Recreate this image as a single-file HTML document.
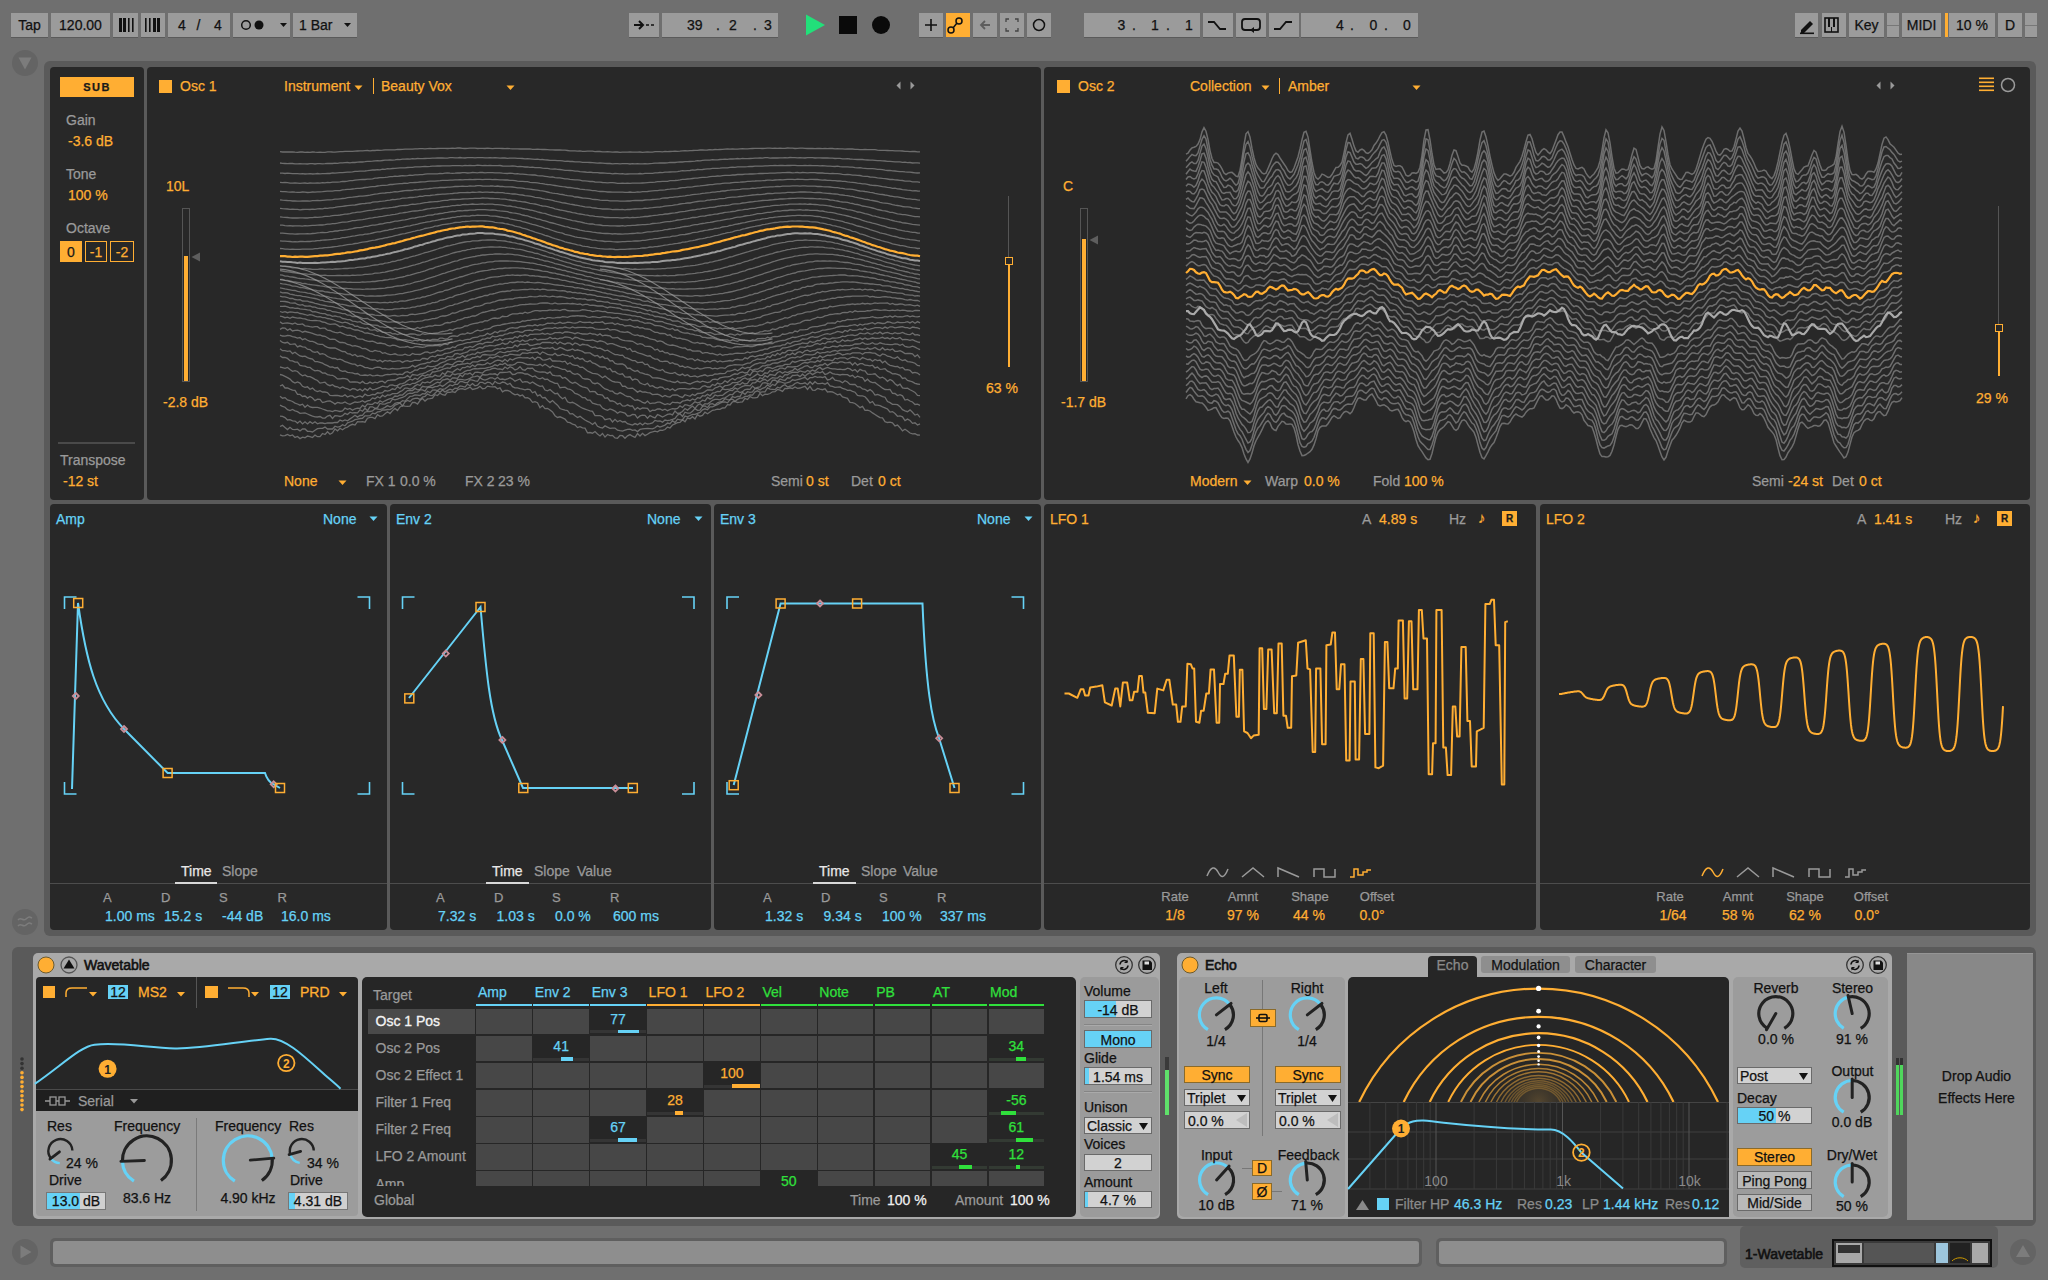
<!DOCTYPE html><html><head><meta charset="utf-8"><style>
html,body{margin:0;padding:0;}
body{width:2048px;height:1280px;position:relative;overflow:hidden;background:#6f6f6f;font-family:"Liberation Sans",sans-serif;}
body>div,body>svg{position:absolute;}
.t{position:absolute;white-space:nowrap;-webkit-text-stroke:0.25px currentColor;}
svg{position:absolute;overflow:visible;}
</style></head><body>
<div style="left:11px;top:13px;width:37px;height:24px;background:#9b9b9b;box-shadow:0 1px 0 #5a5a5a;"></div>
<div class="t" style="left:-270.5px;width:600px;text-align:center;top:16.0px;font-size:14px;line-height:18px;color:#111;font-weight:400;">Tap</div>
<div style="left:51px;top:13px;width:59px;height:24px;background:#9b9b9b;box-shadow:0 1px 0 #5a5a5a;"></div>
<div class="t" style="left:-219.5px;width:600px;text-align:center;top:16.0px;font-size:14px;line-height:18px;color:#111;font-weight:400;">120.00</div>
<div style="left:113px;top:13px;width:25px;height:24px;background:#9b9b9b;box-shadow:0 1px 0 #5a5a5a;"></div>
<div style="left:141px;top:13px;width:24px;height:24px;background:#9b9b9b;box-shadow:0 1px 0 #5a5a5a;"></div>
<div style="left:168px;top:13px;width:62px;height:24px;background:#9b9b9b;box-shadow:0 1px 0 #5a5a5a;"></div>
<div class="t" style="left:178px;top:16.0px;font-size:14px;line-height:18px;color:#111;font-weight:400;">4</div>
<div class="t" style="left:196.5px;top:16.0px;font-size:14px;line-height:18px;color:#111;font-weight:400;">/</div>
<div class="t" style="left:214px;top:16.0px;font-size:14px;line-height:18px;color:#111;font-weight:400;">4</div>
<div style="left:233px;top:13px;width:57px;height:24px;background:#9b9b9b;box-shadow:0 1px 0 #5a5a5a;"></div>
<div style="left:293px;top:13px;width:64px;height:24px;background:#9b9b9b;box-shadow:0 1px 0 #5a5a5a;"></div>
<div class="t" style="left:299px;top:16.0px;font-size:14px;line-height:18px;color:#111;font-weight:400;">1 Bar</div>
<svg style="left:113px;top:13px" width="60" height="24"><g fill="#111"><rect x="6" y="5" width="3" height="14"/><rect x="10" y="5" width="3" height="14"/><rect x="15" y="5" width="1.6" height="14"/><rect x="19" y="5" width="1.6" height="14"/><rect x="32" y="5" width="1.6" height="14"/><rect x="36" y="5" width="1.6" height="14"/><rect x="40" y="5" width="3" height="14"/><rect x="44" y="5" width="3" height="14"/></g></svg>
<svg style="left:233px;top:13px" width="124" height="24"><circle cx="13" cy="12" r="4.3" fill="none" stroke="#111" stroke-width="1.5"/><circle cx="26" cy="12" r="4.5" fill="#111"/><path d="M47 10h7l-3.5 4z" fill="#111"/><path d="M111 10h7l-3.5 4z" fill="#111"/></svg>
<div style="left:629px;top:13px;width:30px;height:24px;background:#9b9b9b;box-shadow:0 1px 0 #5a5a5a;"></div>
<svg style="left:629px;top:13px" width="30" height="24"><path d="M5 12h9M10 8l4 4-4 4" stroke="#111" stroke-width="2" fill="none"/><path d="M17 12h3M22 12h3" stroke="#111" stroke-width="1.5"/></svg>
<div style="left:662px;top:13px;width:116px;height:24px;background:#9b9b9b;box-shadow:0 1px 0 #5a5a5a;"></div>
<div class="t" style="left:687px;top:16.0px;font-size:14px;line-height:18px;color:#111;font-weight:400;">39</div>
<div class="t" style="left:716px;top:16.0px;font-size:14px;line-height:18px;color:#111;font-weight:400;">.</div>
<div class="t" style="left:729px;top:16.0px;font-size:14px;line-height:18px;color:#111;font-weight:400;">2</div>
<div class="t" style="left:753px;top:16.0px;font-size:14px;line-height:18px;color:#111;font-weight:400;">.</div>
<div class="t" style="left:764px;top:16.0px;font-size:14px;line-height:18px;color:#111;font-weight:400;">3</div>
<svg style="left:800px;top:10px" width="100" height="30"><path d="M6 4.5L25 15 6 25.5z" fill="#22e07a"/><rect x="39" y="6" width="18" height="18" fill="#0a0a0a"/><circle cx="81" cy="15" r="9" fill="#0a0a0a"/></svg>
<div style="left:919px;top:13px;width:24px;height:24px;background:#9b9b9b;box-shadow:0 1px 0 #5a5a5a;"></div>
<div style="left:946px;top:13px;width:24px;height:24px;background:#ffae33;"></div>
<div style="left:973px;top:13px;width:24px;height:24px;background:#9b9b9b;box-shadow:0 1px 0 #5a5a5a;"></div>
<div style="left:1000px;top:13px;width:24px;height:24px;background:#9b9b9b;box-shadow:0 1px 0 #5a5a5a;"></div>
<div style="left:1027px;top:13px;width:24px;height:24px;background:#9b9b9b;box-shadow:0 1px 0 #5a5a5a;"></div>
<svg style="left:919px;top:13px" width="132" height="24"><path d="M12 6v12M6 12h12" stroke="#111" stroke-width="1.6"/><circle cx="32" cy="17" r="3" fill="none" stroke="#111" stroke-width="1.5"/><circle cx="40" cy="8" r="3" fill="none" stroke="#111" stroke-width="1.5"/><path d="M34 15l4-5" stroke="#111" stroke-width="1.5"/><path d="M62 12h9M66 8l-4 4 4 4" stroke="#5d5d5d" stroke-width="1.8" fill="none"/><path d="M87 9v-3h3M96 6h3v3M99 15v3h-3M90 18h-3v-3" stroke="#444" stroke-width="1.3" fill="none"/><circle cx="120" cy="12" r="5.5" fill="none" stroke="#111" stroke-width="1.5"/></svg>
<div style="left:1084px;top:13px;width:116px;height:24px;background:#9b9b9b;box-shadow:0 1px 0 #5a5a5a;"></div>
<div class="t" style="left:1117.5px;top:16.0px;font-size:14px;line-height:18px;color:#111;font-weight:400;">3</div>
<div class="t" style="left:1132px;top:16.0px;font-size:14px;line-height:18px;color:#111;font-weight:400;">.</div>
<div class="t" style="left:1151px;top:16.0px;font-size:14px;line-height:18px;color:#111;font-weight:400;">1</div>
<div class="t" style="left:1166px;top:16.0px;font-size:14px;line-height:18px;color:#111;font-weight:400;">.</div>
<div class="t" style="left:1185px;top:16.0px;font-size:14px;line-height:18px;color:#111;font-weight:400;">1</div>
<div style="left:1203px;top:13px;width:30px;height:24px;background:#9b9b9b;box-shadow:0 1px 0 #5a5a5a;"></div>
<div style="left:1236px;top:13px;width:30px;height:24px;background:#9b9b9b;box-shadow:0 1px 0 #5a5a5a;"></div>
<div style="left:1269px;top:13px;width:30px;height:24px;background:#9b9b9b;box-shadow:0 1px 0 #5a5a5a;"></div>
<svg style="left:1203px;top:13px" width="96" height="24"><path d="M5 9h6l6 7h6" stroke="#111" stroke-width="1.8" fill="none"/><rect x="39" y="6" width="18" height="11" rx="3" fill="none" stroke="#111" stroke-width="1.8"/><path d="M47 17l4-3v6z" fill="#111"/><path d="M71 16h6l6-7h6" stroke="#111" stroke-width="1.8" fill="none"/></svg>
<div style="left:1301px;top:13px;width:117px;height:24px;background:#9b9b9b;box-shadow:0 1px 0 #5a5a5a;"></div>
<div class="t" style="left:1336px;top:16.0px;font-size:14px;line-height:18px;color:#111;font-weight:400;">4</div>
<div class="t" style="left:1350px;top:16.0px;font-size:14px;line-height:18px;color:#111;font-weight:400;">.</div>
<div class="t" style="left:1369.5px;top:16.0px;font-size:14px;line-height:18px;color:#111;font-weight:400;">0</div>
<div class="t" style="left:1384px;top:16.0px;font-size:14px;line-height:18px;color:#111;font-weight:400;">.</div>
<div class="t" style="left:1403px;top:16.0px;font-size:14px;line-height:18px;color:#111;font-weight:400;">0</div>
<div style="left:1795px;top:13px;width:23px;height:24px;background:#9b9b9b;box-shadow:0 1px 0 #5a5a5a;"></div>
<div style="left:1822px;top:13px;width:24px;height:24px;background:#9b9b9b;box-shadow:0 1px 0 #5a5a5a;"></div>
<div style="left:1849px;top:13px;width:35px;height:24px;background:#9b9b9b;box-shadow:0 1px 0 #5a5a5a;"></div>
<div class="t" style="left:1566.5px;width:600px;text-align:center;top:16.0px;font-size:14px;line-height:18px;color:#111;font-weight:400;">Key</div>
<div style="left:1887px;top:13px;width:12px;height:24px;background:#9b9b9b;box-shadow:0 1px 0 #5a5a5a;"></div>
<div style="left:1902px;top:13px;width:39px;height:24px;background:#9b9b9b;box-shadow:0 1px 0 #5a5a5a;"></div>
<div class="t" style="left:1621.5px;width:600px;text-align:center;top:16.0px;font-size:14px;line-height:18px;color:#111;font-weight:400;">MIDI</div>
<div style="left:1945px;top:13px;width:3px;height:24px;background:#ffae33;"></div>
<div style="left:1949px;top:13px;width:46px;height:24px;background:#9b9b9b;box-shadow:0 1px 0 #5a5a5a;"></div>
<div class="t" style="left:1672.0px;width:600px;text-align:center;top:16.0px;font-size:14px;line-height:18px;color:#111;font-weight:400;">10 %</div>
<div style="left:1998px;top:13px;width:24px;height:24px;background:#9b9b9b;box-shadow:0 1px 0 #5a5a5a;"></div>
<div class="t" style="left:1710.0px;width:600px;text-align:center;top:16.0px;font-size:14px;line-height:18px;color:#111;font-weight:400;">D</div>
<div style="left:2025px;top:13px;width:12px;height:24px;background:#9b9b9b;box-shadow:0 1px 0 #5a5a5a;"></div>
<svg style="left:1795px;top:13px" width="52" height="24"><path d="M6 17l9-9 3 3-9 9H6z" fill="#111"/><rect x="5" y="19.5" width="14" height="1.6" fill="#111"/><rect x="30" y="5" width="13" height="14" fill="none" stroke="#111" stroke-width="1.6"/><rect x="33" y="5" width="2" height="9" fill="#111"/><rect x="38" y="5" width="2" height="9" fill="#111"/><path d="M36.5 14v5" stroke="#111" stroke-width="1"/></svg>
<div style="left:1887px;top:25px;width:12px;height:1px;background:#777;"></div>
<div style="left:2025px;top:25px;width:12px;height:1px;background:#777;"></div>
<div style="left:44px;top:61px;width:1992px;height:875px;background:#5a5a5a;border-radius:6px;"></div>
<svg style="left:11px;top:49px" width="30" height="30"><circle cx="14" cy="14" r="13" fill="#646464"/><path d="M7.5 8.5h13l-6.5 12z" fill="#7c7c7c"/></svg>
<svg style="left:11px;top:908px" width="30" height="30"><circle cx="14" cy="14" r="13" fill="#646464"/><path d="M7 12c3-4 5 2 8-1s4-2 6-1M7 18c3-4 5 2 8-1s4-2 6-1" stroke="#7c7c7c" stroke-width="1.6" fill="none"/></svg>
<div style="left:50px;top:67px;width:94px;height:433px;background:#282828;border-radius:4px;"></div>
<div style="left:147px;top:67px;width:894px;height:433px;background:#282828;border-radius:4px;"></div>
<div style="left:1044px;top:67px;width:986px;height:433px;background:#282828;border-radius:4px;"></div>
<div style="left:50px;top:504px;width:337px;height:426px;background:#282828;border-radius:4px;"></div>
<div style="left:390px;top:504px;width:321px;height:426px;background:#282828;border-radius:4px;"></div>
<div style="left:714px;top:504px;width:327px;height:426px;background:#282828;border-radius:4px;"></div>
<div style="left:1044px;top:504px;width:492px;height:426px;background:#282828;border-radius:4px;"></div>
<div style="left:1540px;top:504px;width:490px;height:426px;background:#282828;border-radius:4px;"></div>
<div style="left:60px;top:77px;width:74px;height:20px;background:#ffae33;"></div>
<div class="t" style="left:-203px;width:600px;text-align:center;top:79.5px;font-size:11px;line-height:15px;color:#1a1a1a;font-weight:700;letter-spacing:1.5px;">SUB</div>
<div class="t" style="left:66px;top:111.0px;font-size:14px;line-height:18px;color:#9a9a9a;font-weight:400;">Gain</div>
<div class="t" style="left:68px;top:132.0px;font-size:14px;line-height:18px;color:#ffae33;font-weight:400;">-3.6 dB</div>
<div class="t" style="left:66px;top:165.0px;font-size:14px;line-height:18px;color:#9a9a9a;font-weight:400;">Tone</div>
<div class="t" style="left:68px;top:186.0px;font-size:14px;line-height:18px;color:#ffae33;font-weight:400;">100 %</div>
<div class="t" style="left:66px;top:219.0px;font-size:14px;line-height:18px;color:#9a9a9a;font-weight:400;">Octave</div>
<div style="left:60px;top:241px;width:22px;height:21px;background:#ffae33;"></div>
<div class="t" style="left:-229px;width:600px;text-align:center;top:242.5px;font-size:14px;line-height:18px;color:#1a1a1a;font-weight:400;">0</div>
<div style="left:85px;top:241px;width:22px;height:21px;background:transparent;box-sizing:border-box;border:1.5px solid #ffae33;"></div>
<div class="t" style="left:-204px;width:600px;text-align:center;top:242.5px;font-size:14px;line-height:18px;color:#ffae33;font-weight:400;">-1</div>
<div style="left:110px;top:241px;width:24px;height:21px;background:transparent;box-sizing:border-box;border:1.5px solid #ffae33;"></div>
<div class="t" style="left:-178px;width:600px;text-align:center;top:242.5px;font-size:14px;line-height:18px;color:#ffae33;font-weight:400;">-2</div>
<div style="left:58px;top:442px;width:77px;height:2px;background:#4a4a4a;"></div>
<div class="t" style="left:60px;top:451.0px;font-size:14px;line-height:18px;color:#9a9a9a;font-weight:400;">Transpose</div>
<div class="t" style="left:63px;top:472.0px;font-size:14px;line-height:18px;color:#ffae33;font-weight:400;">-12 st</div>
<div style="left:159px;top:80px;width:13px;height:13px;background:#ffae33;"></div>
<div class="t" style="left:180px;top:77.0px;font-size:14px;line-height:18px;color:#ffae33;font-weight:400;">Osc 1</div>
<div class="t" style="left:284px;top:77.0px;font-size:14px;line-height:18px;color:#ffae33;font-weight:400;">Instrument</div>
<svg style="left:354px;top:83.5px" width="10" height="8"><path d="M0.5 1.5h8l-4 4.5z" fill="#ffae33"/></svg>
<div style="left:373px;top:78px;width:1px;height:16px;background:#ffae33;"></div>
<div class="t" style="left:381px;top:77.0px;font-size:14px;line-height:18px;color:#ffae33;font-weight:400;">Beauty Vox</div>
<svg style="left:506px;top:83.5px" width="10" height="8"><path d="M0.5 1.5h8l-4 4.5z" fill="#ffae33"/></svg>
<svg style="left:895px;top:80px" width="22" height="12"><path d="M5.5 1.5v8l-4-4z M15.5 1.5v8l4-4z" fill="#9a9a9a"/></svg>
<div style="left:1057px;top:80px;width:13px;height:13px;background:#ffae33;"></div>
<div class="t" style="left:1078px;top:77.0px;font-size:14px;line-height:18px;color:#ffae33;font-weight:400;">Osc 2</div>
<div class="t" style="left:1190px;top:77.0px;font-size:14px;line-height:18px;color:#ffae33;font-weight:400;">Collection</div>
<svg style="left:1261px;top:83.5px" width="10" height="8"><path d="M0.5 1.5h8l-4 4.5z" fill="#ffae33"/></svg>
<div style="left:1279px;top:78px;width:1px;height:16px;background:#ffae33;"></div>
<div class="t" style="left:1288px;top:77.0px;font-size:14px;line-height:18px;color:#ffae33;font-weight:400;">Amber</div>
<svg style="left:1412px;top:83.5px" width="10" height="8"><path d="M0.5 1.5h8l-4 4.5z" fill="#ffae33"/></svg>
<svg style="left:1875px;top:80px" width="22" height="12"><path d="M5.5 1.5v8l-4-4z M15.5 1.5v8l4-4z" fill="#9a9a9a"/></svg>
<svg style="left:1978px;top:76px" width="40" height="20"><g fill="#ffae33"><rect x="1" y="1.5" width="15" height="1.6"/><rect x="1" y="5.5" width="15" height="1.6"/><rect x="1" y="9.5" width="15" height="1.6"/><rect x="1" y="13.5" width="15" height="1.6"/></g><circle cx="30" cy="9" r="6.5" fill="none" stroke="#9a9a9a" stroke-width="1.5"/></svg>
<div style="left:182px;top:208px;width:8px;height:174px;background:transparent;box-sizing:border-box;border:1px solid #555;"></div>
<div style="left:184px;top:256px;width:4px;height:124.5px;background:#ffae33;"></div>
<svg style="left:189.5px;top:252px" width="12" height="12"><path d="M10 0.5v9l-8.5-4.5z" fill="#5e5e5e"/></svg>
<div class="t" style="left:166px;top:177.0px;font-size:14px;line-height:18px;color:#ffae33;font-weight:400;">10L</div>
<div class="t" style="left:163px;top:393.0px;font-size:14px;line-height:18px;color:#ffae33;font-weight:400;">-2.8 dB</div>
<div style="left:1080px;top:208px;width:8px;height:174px;background:transparent;box-sizing:border-box;border:1px solid #555;"></div>
<div style="left:1082px;top:239px;width:4px;height:141.5px;background:#ffae33;"></div>
<svg style="left:1087.5px;top:235px" width="12" height="12"><path d="M10 0.5v9l-8.5-4.5z" fill="#5e5e5e"/></svg>
<div class="t" style="left:1063px;top:177.0px;font-size:14px;line-height:18px;color:#ffae33;font-weight:400;">C</div>
<div class="t" style="left:1061px;top:393.0px;font-size:14px;line-height:18px;color:#ffae33;font-weight:400;">-1.7 dB</div>
<div style="left:1008px;top:196px;width:1px;height:64px;background:#555;"></div>
<div style="left:1007.5px;top:260px;width:2px;height:107px;background:#ffae33;"></div>
<div style="left:1004.5px;top:256.5px;width:8px;height:8px;background:#282828;box-sizing:border-box;border:1.5px solid #ffae33;"></div>
<div class="t" style="left:702px;width:600px;text-align:center;top:379.0px;font-size:14px;line-height:18px;color:#ffae33;font-weight:400;">63 %</div>
<div style="left:1998px;top:206px;width:1px;height:121px;background:#555;"></div>
<div style="left:1997.5px;top:327px;width:2px;height:49px;background:#ffae33;"></div>
<div style="left:1994.5px;top:323.5px;width:8px;height:8px;background:#282828;box-sizing:border-box;border:1.5px solid #ffae33;"></div>
<div class="t" style="left:1692px;width:600px;text-align:center;top:389.0px;font-size:14px;line-height:18px;color:#ffae33;font-weight:400;">29 %</div>
<div class="t" style="left:284px;top:472.0px;font-size:14px;line-height:18px;color:#ffae33;font-weight:400;">None</div>
<svg style="left:338px;top:479px" width="10" height="8"><path d="M0.5 1.5h8l-4 4.5z" fill="#ffae33"/></svg>
<div class="t" style="left:366px;top:472.0px;font-size:14px;line-height:18px;color:#9a9a9a;font-weight:400;">FX 1</div>
<div class="t" style="left:400px;top:472.0px;font-size:14px;line-height:18px;color:#9a9a9a;font-weight:400;">0.0 %</div>
<div class="t" style="left:465px;top:472.0px;font-size:14px;line-height:18px;color:#9a9a9a;font-weight:400;">FX 2</div>
<div class="t" style="left:498px;top:472.0px;font-size:14px;line-height:18px;color:#9a9a9a;font-weight:400;">23 %</div>
<div class="t" style="left:771px;top:472.0px;font-size:14px;line-height:18px;color:#9a9a9a;font-weight:400;">Semi</div>
<div class="t" style="left:806px;top:472.0px;font-size:14px;line-height:18px;color:#ffae33;font-weight:400;">0 st</div>
<div class="t" style="left:851px;top:472.0px;font-size:14px;line-height:18px;color:#9a9a9a;font-weight:400;">Det</div>
<div class="t" style="left:878px;top:472.0px;font-size:14px;line-height:18px;color:#ffae33;font-weight:400;">0 ct</div>
<div class="t" style="left:1190px;top:472.0px;font-size:14px;line-height:18px;color:#ffae33;font-weight:400;">Modern</div>
<svg style="left:1243px;top:479px" width="10" height="8"><path d="M0.5 1.5h8l-4 4.5z" fill="#ffae33"/></svg>
<div class="t" style="left:1265px;top:472.0px;font-size:14px;line-height:18px;color:#9a9a9a;font-weight:400;">Warp</div>
<div class="t" style="left:1304px;top:472.0px;font-size:14px;line-height:18px;color:#ffae33;font-weight:400;">0.0 %</div>
<div class="t" style="left:1373px;top:472.0px;font-size:14px;line-height:18px;color:#9a9a9a;font-weight:400;">Fold</div>
<div class="t" style="left:1404px;top:472.0px;font-size:14px;line-height:18px;color:#ffae33;font-weight:400;">100 %</div>
<div class="t" style="left:1752px;top:472.0px;font-size:14px;line-height:18px;color:#9a9a9a;font-weight:400;">Semi</div>
<div class="t" style="left:1788px;top:472.0px;font-size:14px;line-height:18px;color:#ffae33;font-weight:400;">-24 st</div>
<div class="t" style="left:1832px;top:472.0px;font-size:14px;line-height:18px;color:#9a9a9a;font-weight:400;">Det</div>
<div class="t" style="left:1859px;top:472.0px;font-size:14px;line-height:18px;color:#ffae33;font-weight:400;">0 ct</div>
<svg style="left:0;top:0" width="2048" height="520"><path d="M280 151.6L282.5 152L285 152L287.5 151.8L290 152L292.5 152L295 152.2L297.5 152.3L300 152L302.5 152L305 152.4L307.5 152.2L310 152.4L312.5 152L315 152.2L317.5 152.3L320 152.1L322.5 152.4L325 152.3L327.5 151.8L330 151.8L332.5 152L335 152.1L337.5 151.8L340 151.6L342.5 151.7L345 151.4L347.5 151.4L350 151.4L352.5 151.3L355 151.1L357.5 151L360 150.9L362.5 150.9L365 150.7L367.5 150.5L370 150.8L372.5 150.5L375 150.5L377.5 150.1L380 150.4L382.5 150.2L385 149.8L387.5 149.8L390 149.9L392.5 149.8L395 149.8L397.5 149.4L400 149.5L402.5 149.4L405 149.1L407.5 149.2L410 149.2L412.5 149.2L415 148.9L417.5 148.9L420 148.6L422.5 148.6L425 148.8L427.5 148.6L430 148.4L432.5 148.6L435 148.6L437.5 148.5L440 148.4L442.5 148.4L445 148.4L447.5 148.5L450 148.3L452.5 148.2L455 148.3L457.5 148L460 148L462.5 148.3L465 148.5L467.5 148.3L470 148.2L472.5 148.1L475 148.2L477.5 148.5L480 148.4L482.5 148.3L485 148.5L487.5 148.2L490 148.3L492.5 148.6L495 148.4L497.5 148.4L500 148.3L502.5 148.5L505 148.7L507.5 148.3L510 148.7L512.5 148.8L515 148.9L517.5 148.9L520 149L522.5 148.9L525 149L527.5 149L530 148.9L532.5 149.3L535 149.3L537.5 149.2L540 149.4L542.5 149.5L545 149.5L547.5 149.6L550 149.8L552.5 149.9L555 150L557.5 150L560 149.9L562.5 150.1L565 150.2L567.5 150.5L570 150.8L572.5 150.8L575 150.9L577.5 151.1L580 150.9L582.5 151.3L585 151.3L587.5 151.1L590 151.2L592.5 151.2L595 151.7L597.5 151.5L600 151.5L602.5 151.9L605 151.8L607.5 151.7L610 151.8L612.5 152.1L615 151.9L617.5 152L620 152.3L622.5 152.2L625 152.1L627.5 152.2L630 152L632.5 152.2L635 152.2L637.5 152.1L640 152L642.5 152.4L645 152.1L647.5 151.9L650 152.1L652.5 152.1L655 151.7L657.5 151.6L660 151.6L662.5 151.8L665 151.4L667.5 151.6L670 151.5L672.5 151.4L675 151.1L677.5 151.4L680 151.2L682.5 150.9L685 150.7L687.5 150.8L690 150.6L692.5 150.5L695 150.3L697.5 150.3L700 150L702.5 150L705 150.2L707.5 150L710 149.7L712.5 149.8L715 149.5L717.5 149.7L720 149.5L722.5 149.3L725 149.1L727.5 148.9L730 149.2L732.5 148.8L735 149.1L737.5 149.1L740 148.8L742.5 148.6L745 148.9L747.5 148.9L750 148.7L752.5 148.5L755 148.4L757.5 148.4L760 148.3L762.5 148.5L765 148.3L767.5 148.2L770 148.1L772.5 148.4L775 148.2L777.5 148.3L780 148.2L782.5 148.4L785 148.4L787.5 148L790 148.1L792.5 148.2L795 148.5L797.5 148.4L800 148.2L802.5 148.1L805 148.4L807.5 148.5L810 148.5L812.5 148.3L815 148.6L817.5 148.5L820 148.4L822.5 148.7L825 148.4L827.5 148.7L830 148.4L832.5 148.5L835 148.9L837.5 148.6L840 148.9L842.5 148.9L845 149.1L847.5 148.9L850 149L852.5 149L855 149.4L857.5 149.4L860 149.6L862.5 149.7L865 149.4L867.5 149.7L870 149.6L872.5 149.6L875 149.7L877.5 150.2L880 150.3L882.5 150.4L885 150.3L887.5 150.5L890 150.7L892.5 150.6L895 150.8L897.5 150.8L900 150.8L902.5 151L905 151.4L907.5 151.3L910 151.6L912.5 151.5L915 151.5L917.5 151.8L920 151.9" stroke="#7e7e7e" stroke-opacity="0.8" stroke-width="1.3" fill="none"/><path d="M280 163L282.5 163.4L285 163.5L287.5 163.7L290 163.5L292.5 163.5L295 163.8L297.5 163.8L300 163.7L302.5 163.9L305 163.8L307.5 164L310 163.7L312.5 163.7L315 164L317.5 163.7L320 163.7L322.5 163.9L325 163.7L327.5 163.4L330 163.5L332.5 163.5L335 163.1L337.5 163.3L340 162.9L342.5 162.9L345 162.6L347.5 162.5L350 162.8L352.5 162.4L355 162.5L357.5 162.1L360 162L362.5 162L365 161.7L367.5 161.3L370 161.4L372.5 161.2L375 160.8L377.5 160.6L380 160.9L382.5 160.5L385 160.2L387.5 160.2L390 159.9L392.5 160.1L395 159.8L397.5 159.4L400 159.7L402.5 159.2L405 159.1L407.5 158.9L410 159.1L412.5 158.7L415 158.8L417.5 158.5L420 158.6L422.5 158.6L425 158.5L427.5 158.4L430 158.3L432.5 158.2L435 158.2L437.5 157.9L440 158L442.5 157.9L445 158.1L447.5 158.1L450 157.7L452.5 157.7L455 157.9L457.5 157.8L460 157.5L462.5 157.8L465 158L467.5 157.7L470 157.6L472.5 157.7L475 157.9L477.5 157.6L480 157.6L482.5 157.6L485 157.8L487.5 157.8L490 157.7L492.5 157.8L495 157.6L497.5 157.8L500 158.2L502.5 158L505 158L507.5 158.3L510 158.1L512.5 158.1L515 158.1L517.5 158.3L520 158.4L522.5 158.5L525 158.9L527.5 158.7L530 158.8L532.5 159.1L535 159.4L537.5 159.2L540 159.6L542.5 159.5L545 159.8L547.5 160L550 160.3L552.5 160.3L555 160.4L557.5 160.7L560 160.6L562.5 160.8L565 161.3L567.5 161.2L570 161.5L572.5 161.5L575 161.9L577.5 161.9L580 161.9L582.5 162.4L585 162.3L587.5 162.4L590 162.5L592.5 162.6L595 162.8L597.5 163.2L600 163L602.5 163.2L605 163.4L607.5 163.5L610 163.5L612.5 163.8L615 163.6L617.5 163.7L620 163.8L622.5 163.7L625 163.7L627.5 163.7L630 164L632.5 163.7L635 163.9L637.5 163.7L640 163.8L642.5 163.8L645 163.6L647.5 163.8L650 163.6L652.5 163.4L655 163.1L657.5 163.2L660 163L662.5 162.9L665 163L667.5 162.9L670 162.3L672.5 162.5L675 162.5L677.5 162.1L680 161.8L682.5 162L685 161.6L687.5 161.7L690 161.5L692.5 161.3L695 161.2L697.5 160.6L700 160.8L702.5 160.4L705 160.2L707.5 160.1L710 160.1L712.5 159.7L715 159.8L717.5 159.8L720 159.5L722.5 159.4L725 159.2L727.5 159.4L730 158.9L732.5 159L735 158.9L737.5 158.5L740 158.9L742.5 158.4L745 158.7L747.5 158.6L750 158.5L752.5 158.4L755 158.1L757.5 158.1L760 158L762.5 158.2L765 157.7L767.5 157.7L770 158.1L772.5 158L775 157.9L777.5 158L780 157.8L782.5 157.9L785 157.7L787.5 157.9L790 157.5L792.5 157.7L795 157.7L797.5 157.9L800 157.7L802.5 157.8L805 158L807.5 157.7L810 157.7L812.5 157.6L815 158L817.5 157.9L820 157.9L822.5 158L825 157.9L827.5 158L830 158.1L832.5 158.1L835 158.5L837.5 158.3L840 158.3L842.5 158.8L845 158.8L847.5 158.6L850 159L852.5 159.2L855 159.3L857.5 159.5L860 159.4L862.5 159.5L865 159.9L867.5 160L870 160.2L872.5 160.1L875 160.3L877.5 160.6L880 160.7L882.5 160.9L885 161L887.5 161.3L890 161.3L892.5 161.6L895 161.9L897.5 161.8L900 161.9L902.5 162.3L905 162.2L907.5 162.7L910 162.5L912.5 163L915 162.9L917.5 162.9L920 163.2" stroke="#7e7e7e" stroke-opacity="0.8" stroke-width="1.3" fill="none"/><path d="M280 173.1L282.5 173.2L285 173.5L287.5 173.2L290 173.3L292.5 173.7L295 173.6L297.5 173.7L300 173.9L302.5 173.7L305 174L307.5 173.8L310 173.6L312.5 174L315 173.8L317.5 173.5L320 173.8L322.5 173.7L325 173.6L327.5 173.5L330 173.5L332.5 172.9L335 173.2L337.5 172.9L340 172.6L342.5 172.6L345 172.3L347.5 172.2L350 172.1L352.5 171.8L355 171.4L357.5 171.3L360 171.1L362.5 171.1L365 171L367.5 170.7L370 170.3L372.5 170L375 170L377.5 169.6L380 169.8L382.5 169.1L385 169.3L387.5 168.7L390 168.9L392.5 168.5L395 168.4L397.5 168.1L400 167.9L402.5 167.8L405 167.8L407.5 167.5L410 167.3L412.5 167.4L415 166.9L417.5 166.9L420 166.9L422.5 166.7L425 166.5L427.5 166.6L430 166.4L432.5 166.1L435 166.1L437.5 165.9L440 166L442.5 165.8L445 165.8L447.5 165.9L450 165.9L452.5 165.6L455 165.7L457.5 165.6L460 165.6L462.5 165.8L465 165.4L467.5 165.7L470 165.5L472.5 165.7L475 165.6L477.5 165.2L480 165.3L482.5 165.6L485 165.4L487.5 165.6L490 165.4L492.5 165.6L495 165.6L497.5 165.7L500 165.5L502.5 166L505 166.1L507.5 166.1L510 166.1L512.5 166L515 166.1L517.5 166.6L520 166.5L522.5 166.6L525 167L527.5 166.9L530 167.4L532.5 167.2L535 167.7L537.5 167.6L540 167.7L542.5 168.1L545 168.4L547.5 168.3L550 168.8L552.5 169.1L555 168.9L557.5 169.4L560 169.5L562.5 169.8L565 170.3L567.5 170.3L570 170.5L572.5 170.7L575 171.2L577.5 171.1L580 171.6L582.5 171.9L585 172L587.5 172.3L590 172.1L592.5 172.5L595 172.7L597.5 172.6L600 173L602.5 173L605 173.1L607.5 173.3L610 173.3L612.5 173.8L615 173.5L617.5 173.7L620 173.9L622.5 173.6L625 174.1L627.5 174L630 173.9L632.5 173.8L635 173.9L637.5 173.8L640 173.5L642.5 173.8L645 173.3L647.5 173.4L650 173.3L652.5 173.3L655 172.9L657.5 172.9L660 172.5L662.5 172.6L665 172.2L667.5 172.1L670 172L672.5 171.9L675 171.8L677.5 171.6L680 171.2L682.5 170.7L685 170.8L687.5 170.6L690 170.5L692.5 169.9L695 170.1L697.5 169.5L700 169.7L702.5 169.5L705 169.1L707.5 168.9L710 168.8L712.5 168.4L715 168.4L717.5 168.4L720 168.2L722.5 167.9L725 167.8L727.5 167.8L730 167.3L732.5 167.2L735 167.3L737.5 166.8L740 166.8L742.5 166.9L745 166.8L747.5 166.7L750 166.3L752.5 166.5L755 166.1L757.5 166.2L760 166.1L762.5 166.2L765 165.8L767.5 165.8L770 165.7L772.5 165.6L775 165.5L777.5 165.6L780 165.5L782.5 165.4L785 165.7L787.5 165.3L790 165.5L792.5 165.3L795 165.3L797.5 165.6L800 165.6L802.5 165.7L805 165.3L807.5 165.7L810 165.5L812.5 165.7L815 165.7L817.5 165.7L820 165.8L822.5 165.7L825 165.9L827.5 166.2L830 166.1L832.5 166.3L835 166.5L837.5 166.2L840 166.7L842.5 166.9L845 166.8L847.5 166.9L850 167.2L852.5 167.1L855 167.6L857.5 167.8L860 167.6L862.5 168.1L865 168.3L867.5 168.6L870 168.7L872.5 168.7L875 168.9L877.5 169.3L880 169.4L882.5 169.7L885 170.2L887.5 170.5L890 170.4L892.5 170.8L895 171L897.5 171.3L900 171.7L902.5 171.6L905 171.9L907.5 172.1L910 172.1L912.5 172.5L915 172.9L917.5 173L920 172.8" stroke="#7e7e7e" stroke-opacity="0.8" stroke-width="1.3" fill="none"/><path d="M280 182.3L282.5 182.6L285 182.4L287.5 182.6L290 183.1L292.5 183.1L295 182.9L297.5 183.1L300 183.4L302.5 183.2L305 183L307.5 183.4L310 183L312.5 183.2L315 183.2L317.5 183L320 183.2L322.5 182.7L325 182.8L327.5 182.4L330 182.7L332.5 182.1L335 182.1L337.5 182.1L340 181.9L342.5 181.3L345 181.5L347.5 181.2L350 180.7L352.5 180.7L355 180.2L357.5 179.9L360 179.7L362.5 179.5L365 179.5L367.5 179.1L370 179.1L372.5 178.8L375 178.2L377.5 178L380 177.6L382.5 177.6L385 177.4L387.5 177.1L390 176.7L392.5 176.7L395 176.2L397.5 176.4L400 176L402.5 175.6L405 175.9L407.5 175.7L410 175.2L412.5 175.3L415 174.8L417.5 174.8L420 174.6L422.5 174.6L425 174.1L427.5 173.9L430 173.9L432.5 173.8L435 173.9L437.5 173.8L440 173.4L442.5 173.6L445 173.2L447.5 173L450 173.2L452.5 173.3L455 173.2L457.5 172.9L460 173L462.5 172.7L465 172.6L467.5 173L470 172.8L472.5 172.5L475 172.6L477.5 172.8L480 172.4L482.5 172.5L485 172.8L487.5 172.6L490 172.7L492.5 172.7L495 172.8L497.5 172.8L500 172.8L502.5 173.2L505 173.3L507.5 173.5L510 173.2L512.5 173.3L515 173.8L517.5 173.7L520 174.1L522.5 174.1L525 174.3L527.5 174.7L530 174.8L532.5 175L535 175L537.5 175.7L540 175.8L542.5 175.9L545 176.3L547.5 176.7L550 177.1L552.5 176.9L555 177.7L557.5 177.8L560 177.8L562.5 178.3L565 178.8L567.5 178.8L570 179.3L572.5 179.6L575 179.9L577.5 179.9L580 180.2L582.5 180.9L585 180.8L587.5 181.1L590 181.5L592.5 181.4L595 182L597.5 182.2L600 182.2L602.5 182.5L605 182.6L607.5 182.8L610 182.7L612.5 182.7L615 182.9L617.5 183.4L620 183.4L622.5 183.1L625 183.4L627.5 183.1L630 183.3L632.5 183.1L635 183.1L637.5 183.2L640 183.1L642.5 183L645 182.9L647.5 182.6L650 182.3L652.5 182.4L655 182.2L657.5 181.7L660 181.6L662.5 181.3L665 181.4L667.5 181.3L670 180.6L672.5 180.6L675 180.5L677.5 180.3L680 179.9L682.5 179.4L685 179.4L687.5 179L690 178.9L692.5 178.5L695 178.2L697.5 178.1L700 177.6L702.5 177.4L705 177.4L707.5 177.2L710 176.7L712.5 176.4L715 176.4L717.5 176L720 176.2L722.5 175.7L725 175.4L727.5 175.4L730 175.3L732.5 175L735 175L737.5 174.5L740 174.4L742.5 174.5L745 174.1L747.5 174.1L750 173.9L752.5 174L755 173.8L757.5 173.7L760 173.5L762.5 173.5L765 173.3L767.5 173.3L770 173.2L772.5 173.1L775 173.2L777.5 172.9L780 172.8L782.5 172.6L785 172.6L787.5 172.5L790 172.5L792.5 172.8L795 172.7L797.5 172.5L800 172.8L802.5 172.5L805 172.6L807.5 172.8L810 172.6L812.5 172.7L815 172.7L817.5 173L820 172.8L822.5 173L825 173.3L827.5 173.4L830 173.6L832.5 173.5L835 173.7L837.5 173.7L840 173.9L842.5 174.3L845 174.6L847.5 174.5L850 174.6L852.5 175.1L855 175.1L857.5 175.4L860 175.5L862.5 176.1L865 176.4L867.5 176.4L870 177L872.5 177.1L875 177.4L877.5 177.8L880 178.1L882.5 178.4L885 178.6L887.5 179L890 179.5L892.5 179.4L895 179.8L897.5 180L900 180.3L902.5 180.5L905 181.1L907.5 181.2L910 181.2L912.5 181.8L915 181.9L917.5 181.9L920 182.3" stroke="#7e7e7e" stroke-opacity="0.8" stroke-width="1.3" fill="none"/><path d="M280 191.3L282.5 191.7L285 191.6L287.5 191.9L290 192.1L292.5 192L295 192.2L297.5 192.3L300 192.4L302.5 192L305 192.1L307.5 192.5L310 192.3L312.5 192L315 192.2L317.5 191.8L320 191.8L322.5 191.7L325 191.4L327.5 191.2L330 191.2L332.5 191.1L335 190.7L337.5 190.6L340 190.6L342.5 189.9L345 189.7L347.5 189.3L350 189.4L352.5 189L355 188.7L357.5 188.3L360 188.3L362.5 188L365 187.5L367.5 187.4L370 186.8L372.5 186.6L375 186.6L377.5 186L380 185.7L382.5 185.3L385 185.4L387.5 185.2L390 184.5L392.5 184.5L395 184.2L397.5 183.9L400 183.6L402.5 183.5L405 183.1L407.5 183.3L410 182.7L412.5 182.7L415 182.5L417.5 182.3L420 182L422.5 181.9L425 181.9L427.5 181.4L430 181.2L432.5 181.1L435 181.2L437.5 180.8L440 180.7L442.5 180.4L445 180.3L447.5 180.4L450 180.1L452.5 180.1L455 179.9L457.5 179.8L460 179.7L462.5 179.9L465 179.7L467.5 179.6L470 179.4L472.5 179.7L475 179.5L477.5 179.3L480 179.3L482.5 179.7L485 179.3L487.5 179.4L490 179.3L492.5 179.7L495 179.5L497.5 179.7L500 179.9L502.5 179.9L505 180L507.5 180L510 180.4L512.5 180.4L515 180.7L517.5 181.1L520 181.3L522.5 181.4L525 181.6L527.5 181.7L530 182.3L532.5 182.6L535 182.6L537.5 182.8L540 183.4L542.5 183.7L545 184.2L547.5 184.5L550 184.7L552.5 185.1L555 185.5L557.5 185.9L560 186.3L562.5 186.7L565 186.8L567.5 187.5L570 187.5L572.5 187.9L575 188.4L577.5 188.5L580 189.1L582.5 189.3L585 189.6L587.5 189.8L590 190.2L592.5 190.6L595 190.6L597.5 191.2L600 191.5L602.5 191.5L605 191.7L607.5 192L610 192L612.5 192.1L615 192.1L617.5 192.2L620 192.2L622.5 192.1L625 192.4L627.5 192.3L630 192L632.5 192.3L635 192.3L637.5 191.9L640 192.1L642.5 191.6L645 191.6L647.5 191.5L650 191.2L652.5 190.9L655 190.6L657.5 190.6L660 190.2L662.5 190.1L665 189.9L667.5 189.4L670 189.2L672.5 188.8L675 188.8L677.5 188.6L680 188L682.5 187.7L685 187.6L687.5 187.2L690 187.1L692.5 186.8L695 186.4L697.5 186.1L700 185.9L702.5 185.6L705 185.3L707.5 185L710 184.7L712.5 184.6L715 184.2L717.5 183.8L720 183.8L722.5 183.4L725 183.2L727.5 183.1L730 183L732.5 182.6L735 182.4L737.5 182.3L740 182.2L742.5 182L745 181.9L747.5 181.3L750 181.4L752.5 181.1L755 181L757.5 180.8L760 180.8L762.5 180.7L765 180.5L767.5 180.1L770 180.2L772.5 180.3L775 180L777.5 179.8L780 179.7L782.5 179.8L785 179.6L787.5 179.4L790 179.3L792.5 179.3L795 179.6L797.5 179.2L800 179.3L802.5 179.3L805 179.6L807.5 179.6L810 179.3L812.5 179.4L815 179.5L817.5 179.5L820 179.8L822.5 180.1L825 180L827.5 180.3L830 180.3L832.5 180.7L835 180.6L837.5 181L840 180.9L842.5 181.3L845 181.4L847.5 181.9L850 182.2L852.5 182.3L855 182.7L857.5 183.1L860 183.3L862.5 183.9L865 183.8L867.5 184.3L870 185L872.5 185.4L875 185.5L877.5 185.7L880 186.1L882.5 186.6L885 186.9L887.5 187.3L890 187.6L892.5 188.3L895 188.2L897.5 188.9L900 189L902.5 189.7L905 189.9L907.5 190.2L910 190.3L912.5 190.8L915 190.6L917.5 191L920 191.1" stroke="#7e7e7e" stroke-opacity="0.8" stroke-width="1.3" fill="none"/><path d="M280 199.8L282.5 200.2L285 200.3L287.5 200.5L290 200.6L292.5 201L295 200.9L297.5 201.1L300 201.2L302.5 201L305 201L307.5 200.8L310 201.1L312.5 200.6L315 200.7L317.5 200.4L320 200.6L322.5 200.3L325 200.1L327.5 199.9L330 199.9L332.5 199.7L335 199.1L337.5 199.1L340 198.8L342.5 198.5L345 198.3L347.5 197.7L350 197.4L352.5 197.2L355 196.8L357.5 196.5L360 196.1L362.5 196.1L365 195.8L367.5 195.5L370 195.1L372.5 194.6L375 194.2L377.5 193.9L380 193.4L382.5 193.2L385 193L387.5 192.7L390 192.5L392.5 192.2L395 191.7L397.5 191.8L400 191.3L402.5 191L405 190.7L407.5 190.5L410 190.5L412.5 190.3L415 189.6L417.5 189.8L420 189.5L422.5 189.3L425 188.8L427.5 188.9L430 188.5L432.5 188.2L435 187.8L437.5 187.9L440 187.5L442.5 187.4L445 187.5L447.5 187.1L450 187.2L452.5 186.8L455 186.5L457.5 186.5L460 186.3L462.5 186.2L465 186.3L467.5 186.3L470 185.9L472.5 186.1L475 186L477.5 185.7L480 185.7L482.5 186L485 186.1L487.5 186.1L490 186L492.5 185.8L495 186.3L497.5 186L500 186.5L502.5 186.3L505 186.9L507.5 186.8L510 186.9L512.5 187L515 187.3L517.5 187.8L520 187.9L522.5 188.1L525 188.7L527.5 188.8L530 189.1L532.5 189.5L535 189.8L537.5 190.2L540 190.6L542.5 190.9L545 191.4L547.5 192L550 192.7L552.5 193.1L555 193.4L557.5 193.6L560 194.4L562.5 194.5L565 195.1L567.5 195.6L570 195.9L572.5 196.2L575 197L577.5 197L580 197.5L582.5 198L585 198.2L587.5 198.4L590 198.7L592.5 199.4L595 199.5L597.5 199.7L600 200.2L602.5 200.3L605 200.3L607.5 200.4L610 200.9L612.5 200.8L615 200.9L617.5 200.9L620 201.2L622.5 201.1L625 201.2L627.5 200.9L630 201L632.5 200.6L635 200.5L637.5 200.5L640 200.4L642.5 200.5L645 200L647.5 199.9L650 199.9L652.5 199.5L655 199.4L657.5 199.1L660 198.8L662.5 198.2L665 198L667.5 198L670 197.4L672.5 197.3L675 196.9L677.5 196.8L680 196.3L682.5 196.1L685 195.8L687.5 195.4L690 195.2L692.5 194.7L695 194.3L697.5 194.1L700 193.8L702.5 193.4L705 193.2L707.5 192.8L710 192.7L712.5 192.2L715 192.1L717.5 191.6L720 191.5L722.5 190.8L725 191L727.5 190.3L730 190.2L732.5 189.9L735 189.9L737.5 189.6L740 189.3L742.5 188.9L745 188.9L747.5 188.8L750 188.6L752.5 188.2L755 188.3L757.5 187.8L760 187.9L762.5 187.3L765 187.1L767.5 187.2L770 186.9L772.5 186.9L775 186.7L777.5 186.4L780 186.7L782.5 186.1L785 186.2L787.5 186.2L790 186.1L792.5 185.9L795 185.9L797.5 185.8L800 186.1L802.5 185.9L805 185.8L807.5 186.1L810 186.1L812.5 186.2L815 186.2L817.5 186.5L820 186.3L822.5 186.7L825 186.9L827.5 186.9L830 187L832.5 187.3L835 187.6L837.5 187.6L840 188.2L842.5 188.4L845 188.8L847.5 189.1L850 189.1L852.5 189.4L855 189.9L857.5 190.5L860 191L862.5 191.1L865 191.5L867.5 191.8L870 192.4L872.5 192.7L875 193.4L877.5 193.8L880 194.4L882.5 194.5L885 195L887.5 195.4L890 196L892.5 196.3L895 196.8L897.5 196.9L900 197.4L902.5 197.9L905 198.4L907.5 198.8L910 198.8L912.5 199.3L915 199.4L917.5 199.9L920 200.2" stroke="#7e7e7e" stroke-opacity="0.8" stroke-width="1.3" fill="none"/><path d="M280 208.4L282.5 208.7L285 208.8L287.5 209L290 209.4L292.5 209.2L295 209.4L297.5 209.4L300 209.8L302.5 209.5L305 209.4L307.5 209.4L310 209.5L312.5 209.2L315 209.3L317.5 208.9L320 208.7L322.5 208.8L325 208.2L327.5 208.4L330 207.9L332.5 207.8L335 207.4L337.5 206.9L340 206.6L342.5 206.3L345 206L347.5 205.7L350 205.4L352.5 205.1L355 205L357.5 204.5L360 204L362.5 203.6L365 203.5L367.5 203.1L370 203L372.5 202.2L375 201.9L377.5 201.9L380 201.3L382.5 201.2L385 200.9L387.5 200.4L390 200.1L392.5 199.5L395 199.6L397.5 199.1L400 198.8L402.5 198.2L405 198.2L407.5 197.9L410 197.5L412.5 197.5L415 197.2L417.5 196.8L420 196.2L422.5 196.4L425 195.6L427.5 195.7L430 195.5L432.5 195.1L435 194.9L437.5 194.5L440 194.3L442.5 194.1L445 194.1L447.5 193.8L450 193.7L452.5 193.5L455 193.2L457.5 193L460 192.6L462.5 192.7L465 192.6L467.5 192.5L470 192.6L472.5 192.1L475 192.3L477.5 192.2L480 192L482.5 192.3L485 192.1L487.5 192.1L490 192.4L492.5 192.2L495 192.6L497.5 192.4L500 192.6L502.5 192.7L505 193.1L507.5 193.3L510 193.7L512.5 194L515 193.8L517.5 194.3L520 194.8L522.5 195L525 195.6L527.5 195.8L530 196.2L532.5 196.7L535 197.3L537.5 197.6L540 197.9L542.5 198.7L545 199.2L547.5 199.4L550 199.9L552.5 200.4L555 201.2L557.5 201.7L560 202.1L562.5 202.8L565 203L567.5 203.6L570 204.2L572.5 204.5L575 205L577.5 205.3L580 205.9L582.5 206.3L585 206.8L587.5 207.2L590 207.2L592.5 207.8L595 208L597.5 208.4L600 208.6L602.5 209L605 208.9L607.5 209L610 209.1L612.5 209.6L615 209.4L617.5 209.5L620 209.7L622.5 209.4L625 209.8L627.5 209.4L630 209.5L632.5 209.2L635 209L637.5 208.8L640 208.8L642.5 208.6L645 208.2L647.5 208.3L650 207.8L652.5 207.7L655 207.3L657.5 207.1L660 207L662.5 206.7L665 206.2L667.5 205.8L670 205.6L672.5 205.4L675 204.9L677.5 204.6L680 204L682.5 203.7L685 203.4L687.5 203L690 203L692.5 202.3L695 201.9L697.5 201.5L700 201.1L702.5 201.2L705 200.9L707.5 200.1L710 200L712.5 199.7L715 199.5L717.5 199.2L720 198.6L722.5 198.7L725 198.3L727.5 197.7L730 197.4L732.5 197.2L735 197.1L737.5 196.9L740 196.5L742.5 196.3L745 195.8L747.5 195.6L750 195.3L752.5 195L755 194.9L757.5 194.5L760 194.6L762.5 194.3L765 194L767.5 193.5L770 193.4L772.5 193.6L775 193.1L777.5 193.1L780 193.1L782.5 192.9L785 192.8L787.5 192.3L790 192.4L792.5 192.5L795 192.4L797.5 192.2L800 192L802.5 192L805 192L807.5 192.1L810 192.1L812.5 192.4L815 192.6L817.5 192.4L820 192.5L822.5 192.9L825 193.1L827.5 193.3L830 193.5L832.5 193.9L835 194L837.5 194.2L840 194.9L842.5 195L845 195.4L847.5 195.7L850 196.2L852.5 196.4L855 197.2L857.5 197.6L860 198.1L862.5 198.6L865 199.3L867.5 199.5L870 200.2L872.5 200.5L875 201L877.5 201.5L880 202.3L882.5 202.8L885 203.1L887.5 203.4L890 203.9L892.5 204.6L895 205.2L897.5 205.5L900 205.8L902.5 206.5L905 206.9L907.5 206.9L910 207.2L912.5 207.8L915 208.1L917.5 208.5L920 208.6" stroke="#7e7e7e" stroke-opacity="0.8" stroke-width="1.3" fill="none"/><path d="M280 216.9L282.5 217.2L285 217.3L287.5 217.5L290 217.8L292.5 218L295 217.9L297.5 218L300 217.9L302.5 217.8L305 218L307.5 218L310 217.7L312.5 217.6L315 217.1L317.5 217.4L320 217.1L322.5 216.9L325 216.4L327.5 216.3L330 216.1L332.5 215.6L335 215.4L337.5 215.3L340 215L342.5 214.6L345 214.2L347.5 214L350 213.6L352.5 212.9L355 212.7L357.5 212.1L360 212.2L362.5 211.7L365 211.1L367.5 210.7L370 210.3L372.5 210.2L375 209.7L377.5 209.1L380 209.1L382.5 208.5L385 208.1L387.5 208.1L390 207.7L392.5 207.4L395 207L397.5 206.5L400 205.9L402.5 205.7L405 205.5L407.5 205.3L410 204.6L412.5 204.2L415 204.3L417.5 203.8L420 203.6L422.5 203.1L425 202.7L427.5 202.4L430 202L432.5 201.8L435 201.6L437.5 201.5L440 201.2L442.5 200.7L445 200.3L447.5 200.4L450 199.7L452.5 199.5L455 199.5L457.5 199.3L460 199.3L462.5 199L465 198.9L467.5 198.8L470 198.7L472.5 198.6L475 198.3L477.5 198.3L480 198.3L482.5 198L485 198.2L487.5 198.2L490 198.5L492.5 198.3L495 198.7L497.5 198.6L500 198.9L502.5 199.1L505 199.2L507.5 199.7L510 200L512.5 200.5L515 200.5L517.5 201.1L520 201.4L522.5 201.9L525 202L527.5 202.6L530 203.3L532.5 203.7L535 204L537.5 204.7L540 205.4L542.5 206L545 206.1L547.5 206.7L550 207.4L552.5 207.9L555 208.9L557.5 209.4L560 210L562.5 210.4L565 210.9L567.5 211.5L570 211.8L572.5 212.7L575 212.9L577.5 213.7L580 214L582.5 214.3L585 214.9L587.5 215.2L590 215.9L592.5 215.8L595 216.3L597.5 216.6L600 216.9L602.5 216.9L605 217.5L607.5 217.4L610 217.7L612.5 217.6L615 217.7L617.5 217.7L620 217.8L622.5 218L625 217.6L627.5 217.5L630 217.9L632.5 217.4L635 217.6L637.5 217.3L640 217.2L642.5 216.8L645 216.5L647.5 216.5L650 216L652.5 215.7L655 215.3L657.5 215.2L660 214.7L662.5 214.7L665 214L667.5 214L670 213.5L672.5 213.2L675 212.9L677.5 212.5L680 211.8L682.5 211.6L685 211.4L687.5 210.8L690 210.3L692.5 210L695 209.9L697.5 209.1L700 209.2L702.5 208.4L705 208.3L707.5 207.8L710 207.3L712.5 207.3L715 207L717.5 206.3L720 206L722.5 205.6L725 205.5L727.5 205.3L730 204.9L732.5 204.2L735 203.9L737.5 203.8L740 203.6L742.5 203L745 202.9L747.5 202.3L750 202L752.5 201.9L755 201.3L757.5 201.2L760 200.8L762.5 200.5L765 200.3L767.5 200.3L770 200L772.5 199.9L775 199.5L777.5 199.4L780 199L782.5 199L785 198.8L787.5 198.7L790 198.5L792.5 198.4L795 198.4L797.5 198.2L800 198.2L802.5 198.2L805 198.4L807.5 198.3L810 198.5L812.5 198.5L815 198.7L817.5 198.9L820 198.6L822.5 199.2L825 199.2L827.5 199.4L830 200L832.5 200.2L835 200.7L837.5 201L840 201.6L842.5 202L845 202.1L847.5 202.4L850 203.1L852.5 203.5L855 204.3L857.5 204.5L860 205.2L862.5 206L865 206.3L867.5 206.8L870 207.4L872.5 208L875 208.7L877.5 209.5L880 210L882.5 210.7L885 210.9L887.5 211.5L890 212.3L892.5 212.4L895 213.1L897.5 213.8L900 214.1L902.5 214.7L905 214.7L907.5 215.2L910 215.7L912.5 216.2L915 216.6L917.5 216.7L920 216.9" stroke="#7e7e7e" stroke-opacity="0.8" stroke-width="1.3" fill="none"/><path d="M280 225.2L282.5 225.2L285 225.6L287.5 225.9L290 225.7L292.5 226L295 225.9L297.5 225.8L300 225.9L302.5 226.1L305 225.7L307.5 225.9L310 225.6L312.5 225.4L315 225.4L317.5 225.2L320 225L322.5 225L325 224.7L327.5 224.1L330 224.2L332.5 223.7L335 223.6L337.5 223.2L340 222.7L342.5 222.2L345 222.2L347.5 221.9L350 221.3L352.5 220.7L355 220.7L357.5 220.2L360 219.9L362.5 219.6L365 219.2L367.5 218.7L370 218.1L372.5 217.8L375 217.4L377.5 217.1L380 216.6L382.5 216.3L385 215.8L387.5 215.4L390 215.2L392.5 214.7L395 214.4L397.5 213.9L400 213.2L402.5 212.9L405 212.5L407.5 212.1L410 211.6L412.5 211.2L415 211L417.5 210.8L420 210.4L422.5 210.1L425 209.5L427.5 208.9L430 208.6L432.5 208.1L435 208.2L437.5 207.6L440 207.4L442.5 207L445 206.7L447.5 206.5L450 206.2L452.5 205.6L455 205.6L457.5 205.2L460 205.3L462.5 204.7L465 204.5L467.5 204.7L470 204.3L472.5 204L475 204.3L477.5 204.3L480 204.1L482.5 203.9L485 204.3L487.5 204.1L490 204.1L492.5 204.2L495 204.7L497.5 204.6L500 204.8L502.5 205.1L505 205.6L507.5 206.1L510 206L512.5 206.6L515 206.9L517.5 207.6L520 207.9L522.5 208.5L525 209L527.5 209.4L530 210L532.5 210.3L535 211L537.5 211.9L540 212.5L542.5 213.1L545 213.4L547.5 214.4L550 215.1L552.5 215.8L555 216.4L557.5 217L560 217.5L562.5 218.1L565 218.6L567.5 219.4L570 219.9L572.5 220.7L575 220.9L577.5 221.5L580 221.9L582.5 222.5L585 223.1L587.5 223.6L590 224L592.5 223.9L595 224.6L597.5 224.8L600 225L602.5 225.5L605 225.6L607.5 225.6L610 225.9L612.5 225.9L615 225.9L617.5 226L620 226L622.5 225.7L625 226.1L627.5 225.7L630 225.7L632.5 225.4L635 225.4L637.5 225L640 224.8L642.5 224.6L645 224.7L647.5 224.3L650 224.1L652.5 223.5L655 223.3L657.5 223.2L660 222.8L662.5 222.3L665 221.8L667.5 221.6L670 221.5L672.5 221.1L675 220.6L677.5 220L680 219.8L682.5 219.4L685 218.9L687.5 218.7L690 218.2L692.5 217.5L695 217.5L697.5 217.1L700 216.4L702.5 216.2L705 216L707.5 215.4L710 215L712.5 214.6L715 214.1L717.5 214L720 213.3L722.5 213L725 212.4L727.5 212.2L730 211.9L732.5 211.5L735 211.3L737.5 210.5L740 210.1L742.5 209.8L745 209.4L747.5 209.3L750 208.6L752.5 208.4L755 208.3L757.5 207.6L760 207.3L762.5 207L765 206.6L767.5 206.3L770 206.2L772.5 205.6L775 205.3L777.5 205.4L780 205.2L782.5 204.8L785 204.7L787.5 204.5L790 204.2L792.5 204.2L795 204.1L797.5 204.2L800 204L802.5 204.1L805 203.9L807.5 204.4L810 204L812.5 204.4L815 204.5L817.5 204.6L820 205.2L822.5 205.2L825 205.3L827.5 205.7L830 206L832.5 206.6L835 207.2L837.5 207.6L840 207.7L842.5 208.5L845 208.9L847.5 209.6L850 209.8L852.5 210.3L855 211L857.5 212L860 212.2L862.5 212.8L865 213.6L867.5 214.1L870 214.8L872.5 215.8L875 216.1L877.5 217L880 217.7L882.5 218.1L885 218.7L887.5 219.2L890 219.9L892.5 220.5L895 221.1L897.5 221.6L900 222L902.5 222.8L905 223L907.5 223.4L910 223.8L912.5 224.3L915 224.6L917.5 224.9L920 225.2" stroke="#7e7e7e" stroke-opacity="0.8" stroke-width="1.3" fill="none"/><path d="M280 233.2L282.5 233.1L285 233.3L287.5 233.6L290 233.9L292.5 233.8L295 234.1L297.5 234L300 233.9L302.5 233.9L305 233.9L307.5 233.7L310 233.8L312.5 233.5L315 233.3L317.5 232.8L320 232.7L322.5 232.4L325 232.6L327.5 232.3L330 231.7L332.5 231.6L335 231L337.5 231L340 230.3L342.5 230.3L345 229.8L347.5 229.6L350 229.1L352.5 228.6L355 228L357.5 227.7L360 227.6L362.5 227.1L365 226.4L367.5 226.3L370 225.6L372.5 225.1L375 225.1L377.5 224.7L380 224L382.5 223.8L385 223.1L387.5 222.6L390 222.5L392.5 221.8L395 221.2L397.5 221.2L400 220.6L402.5 220.2L405 219.8L407.5 219.3L410 218.6L412.5 218.1L415 218L417.5 217.4L420 216.8L422.5 216.6L425 216.2L427.5 215.4L430 215.2L432.5 215L435 214.1L437.5 214L440 213.5L442.5 213.3L445 212.6L447.5 212.4L450 211.9L452.5 211.5L455 211.6L457.5 210.9L460 210.7L462.5 210.8L465 210.3L467.5 210.5L470 210.1L472.5 210.1L475 210L477.5 209.7L480 209.7L482.5 209.7L485 209.7L487.5 209.9L490 210.2L492.5 210L495 210.2L497.5 210.6L500 210.9L502.5 211.1L505 211.4L507.5 211.7L510 212.5L512.5 212.9L515 213.1L517.5 213.6L520 214.2L522.5 215L525 215.5L527.5 215.9L530 216.8L532.5 217.7L535 218.1L537.5 219L540 219.4L542.5 220.3L545 220.9L547.5 221.7L550 222.5L552.5 223L555 223.6L557.5 224.5L560 225.1L562.5 225.8L565 226.7L567.5 226.9L570 227.8L572.5 228.4L575 228.9L577.5 229.5L580 230.2L582.5 230.6L585 231.1L587.5 231.3L590 231.6L592.5 232.2L595 232.3L597.5 232.9L600 233L602.5 233.3L605 233.5L607.5 233.4L610 233.6L612.5 234L615 233.7L617.5 234L620 233.8L622.5 234.1L625 233.9L627.5 233.8L630 233.6L632.5 233.5L635 233.4L637.5 232.9L640 233.1L642.5 232.9L645 232.3L647.5 231.8L650 231.9L652.5 231.6L655 231.2L657.5 231L660 230.7L662.5 230.3L665 229.6L667.5 229.5L670 229L672.5 228.7L675 228.3L677.5 227.8L680 227.5L682.5 226.9L685 226.5L687.5 226.3L690 225.8L692.5 225.2L695 224.7L697.5 224.6L700 223.9L702.5 223.5L705 223.2L707.5 222.6L710 222.4L712.5 222L715 221.3L717.5 220.9L720 220.6L722.5 220.1L725 219.6L727.5 219.2L730 218.8L732.5 218.3L735 217.6L737.5 217.2L740 217.1L742.5 216.6L745 216L747.5 215.6L750 215.4L752.5 214.9L755 214.3L757.5 213.7L760 213.7L762.5 213.3L765 212.8L767.5 212.3L770 212.3L772.5 211.9L775 211.3L777.5 210.9L780 211.1L782.5 210.6L785 210.3L787.5 210.5L790 210L792.5 210L795 210.1L797.5 209.9L800 209.7L802.5 210.1L805 210L807.5 209.8L810 210.3L812.5 210.4L815 210.3L817.5 210.5L820 211.1L822.5 211L825 211.7L827.5 212.2L830 212.3L832.5 212.7L835 213.1L837.5 213.8L840 214.3L842.5 214.9L845 215.3L847.5 216L850 216.7L852.5 217.4L855 218L857.5 218.7L860 219.4L862.5 220.3L865 221.1L867.5 221.8L870 222.4L872.5 223.2L875 223.6L877.5 224.3L880 225.2L882.5 225.8L885 226.4L887.5 227.4L890 228L892.5 228.3L895 228.7L897.5 229.7L900 230.2L902.5 230.7L905 231.1L907.5 231.3L910 231.9L912.5 232.3L915 232.4L917.5 233L920 233.1" stroke="#7e7e7e" stroke-opacity="0.8" stroke-width="1.3" fill="none"/><path d="M280 240.8L282.5 241.2L285 241.1L287.5 241.3L290 241.5L292.5 241.9L295 241.6L297.5 241.8L300 241.5L302.5 241.5L305 241.7L307.5 241.5L310 241.5L312.5 241.2L315 241L317.5 240.7L320 240.5L322.5 240.2L325 240L327.5 239.8L330 239.6L332.5 239.4L335 239L337.5 238.7L340 238.3L342.5 237.6L345 237.7L347.5 237.1L350 236.7L352.5 236.1L355 235.8L357.5 235.3L360 234.9L362.5 234.8L365 234.2L367.5 234L370 233.6L372.5 233L375 232.3L377.5 231.9L380 231.8L382.5 231.1L385 230.5L387.5 230.4L390 229.5L392.5 229.4L395 228.4L397.5 228.1L400 227.6L402.5 227.4L405 226.6L407.5 226.2L410 225.8L412.5 225.1L415 224.7L417.5 224.2L420 223.3L422.5 222.8L425 222.4L427.5 221.9L430 221.6L432.5 220.8L435 220.7L437.5 220.2L440 219.6L442.5 219L445 218.8L447.5 218.4L450 218L452.5 217.4L455 217.3L457.5 216.7L460 216.5L462.5 216.1L465 215.9L467.5 216.1L470 216L472.5 215.4L475 215.6L477.5 215.2L480 215.4L482.5 215.4L485 215.4L487.5 215.4L490 215.9L492.5 216.2L495 216.1L497.5 216.5L500 217L502.5 217.4L505 217.8L507.5 218L510 218.8L512.5 219.3L515 219.8L517.5 220.3L520 220.7L522.5 221.7L525 222.2L527.5 222.9L530 223.7L532.5 224.4L535 224.9L537.5 225.6L540 226.5L542.5 227.1L545 228.2L547.5 228.7L550 229.7L552.5 230.5L555 231.3L557.5 232.1L560 232.7L562.5 233.2L565 234.3L567.5 234.8L570 235.4L572.5 236.2L575 236.8L577.5 237.3L580 237.7L582.5 238.1L585 238.5L587.5 239L590 239.4L592.5 240.1L595 240.1L597.5 240.7L600 240.8L602.5 241L605 241.5L607.5 241.4L610 241.4L612.5 241.7L615 241.8L617.5 242L620 241.9L622.5 241.6L625 241.6L627.5 241.3L630 241.3L632.5 241.2L635 240.9L637.5 241L640 240.8L642.5 240.3L645 240.3L647.5 239.8L650 239.4L652.5 239.1L655 238.7L657.5 238.7L660 238.1L662.5 237.7L665 237.3L667.5 237.1L670 236.9L672.5 236.2L675 236.1L677.5 235.7L680 234.9L682.5 234.6L685 234.5L687.5 234L690 233.5L692.5 232.7L695 232.4L697.5 232.1L700 231.4L702.5 231L705 230.4L707.5 230.1L710 229.5L712.5 229.3L715 228.5L717.5 228.3L720 227.9L722.5 227L725 226.6L727.5 226.3L730 225.5L732.5 225.1L735 224.4L737.5 224L740 223.5L742.5 222.8L745 222.7L747.5 221.9L750 221.3L752.5 220.8L755 220.4L757.5 219.8L760 219.6L762.5 218.9L765 218.7L767.5 218.3L770 217.7L772.5 217.6L775 217.1L777.5 216.9L780 216.6L782.5 216.4L785 216.3L787.5 216L790 215.9L792.5 215.7L795 215.6L797.5 215.4L800 215.4L802.5 215.7L805 215.5L807.5 215.6L810 215.7L812.5 215.8L815 216.3L817.5 216.5L820 216.7L822.5 217.5L825 217.6L827.5 218.1L830 218.8L832.5 219.3L835 219.9L837.5 220.3L840 220.8L842.5 221.4L845 222.3L847.5 222.8L850 223.7L852.5 224.2L855 225.1L857.5 226L860 226.5L862.5 227.1L865 228L867.5 228.7L870 229.7L872.5 230.4L875 231.1L877.5 231.9L880 232.8L882.5 233.4L885 233.8L887.5 234.6L890 235.3L892.5 236.1L895 236.5L897.5 237.2L900 238L902.5 238.3L905 238.9L907.5 239.2L910 239.6L912.5 239.8L915 240.1L917.5 240.6L920 241" stroke="#7e7e7e" stroke-opacity="0.8" stroke-width="1.3" fill="none"/><path d="M280 248.5L282.5 248.7L285 249.2L287.5 249.2L290 249.4L292.5 249.1L295 249.3L297.5 249.4L300 249.4L302.5 249.1L305 249.2L307.5 249.1L310 249.2L312.5 249.1L315 248.6L317.5 248.6L320 248.2L322.5 248L325 247.6L327.5 247.5L330 247.3L332.5 247L335 246.7L337.5 246.4L340 245.9L342.5 245.7L345 245.1L347.5 244.7L350 244.4L352.5 244.2L355 243.5L357.5 243.3L360 242.7L362.5 242.1L365 241.8L367.5 241.5L370 240.9L372.5 240.4L375 240.2L377.5 239.5L380 238.9L382.5 238.5L385 237.8L387.5 237.5L390 236.9L392.5 236.3L395 235.6L397.5 235.2L400 234.5L402.5 233.9L405 233.6L407.5 232.9L410 232.3L412.5 231.7L415 231.2L417.5 230.3L420 230.2L422.5 229.5L425 228.5L427.5 228.1L430 227.7L432.5 227.2L435 226.2L437.5 226L440 225.3L442.5 224.7L445 224.3L447.5 224L450 223.6L452.5 223.1L455 222.5L457.5 222.4L460 222.3L462.5 221.6L465 221.5L467.5 221.3L470 221.2L472.5 220.9L475 220.8L477.5 221L480 220.9L482.5 220.9L485 221L487.5 221.1L490 221.4L492.5 221.7L495 222.3L497.5 222.6L500 222.8L502.5 223L505 223.6L507.5 224L510 224.7L512.5 225.2L515 226.1L517.5 226.7L520 227.2L522.5 228.2L525 228.7L527.5 229.4L530 230.3L532.5 231.1L535 232.1L537.5 232.8L540 233.5L542.5 234.3L545 235.4L547.5 236L550 236.8L552.5 237.8L555 238.6L557.5 239.3L560 240L562.5 240.9L565 241.8L567.5 242.5L570 243L572.5 243.6L575 244.2L577.5 244.9L580 245.1L582.5 246.1L585 246.4L587.5 246.6L590 247.4L592.5 247.7L595 247.8L597.5 248.3L600 248.6L602.5 248.8L605 249.1L607.5 249.1L610 249L612.5 249.1L615 249.5L617.5 249.6L620 249.3L622.5 249.3L625 249.4L627.5 249.2L630 249L632.5 248.9L635 248.8L637.5 248.6L640 248.3L642.5 247.8L645 248L647.5 247.7L650 247L652.5 247.1L655 246.7L657.5 246.5L660 246.1L662.5 245.7L665 245.1L667.5 244.9L670 244.3L672.5 244.2L675 243.7L677.5 243.4L680 243L682.5 242.2L685 242L687.5 241.6L690 240.8L692.5 240.6L695 240.2L697.5 239.5L700 238.9L702.5 238.7L705 238.2L707.5 237.3L710 237.1L712.5 236.5L715 235.6L717.5 235.4L720 234.7L722.5 233.9L725 233.4L727.5 232.7L730 232.4L732.5 231.8L735 230.9L737.5 230.4L740 230.1L742.5 229.2L745 228.7L747.5 228L750 227.4L752.5 226.8L755 226.4L757.5 225.9L760 225.5L762.5 224.7L765 224.4L767.5 223.9L770 223.3L772.5 222.9L775 222.5L777.5 222.3L780 221.9L782.5 221.8L785 221.6L787.5 221.5L790 221.1L792.5 221L795 221.2L797.5 221L800 221L802.5 221.2L805 221.2L807.5 221.1L810 221.6L812.5 221.8L815 221.8L817.5 222.2L820 222.9L822.5 223.2L825 223.7L827.5 224.4L830 224.7L832.5 225.6L835 225.9L837.5 226.6L840 227.1L842.5 228L845 228.6L847.5 229.5L850 230.2L852.5 231.3L855 231.7L857.5 232.6L860 233.8L862.5 234.4L865 235.2L867.5 236.1L870 237L872.5 237.8L875 238.6L877.5 239.5L880 240.1L882.5 241L885 241.6L887.5 242.2L890 242.9L892.5 243.9L895 244.4L897.5 244.9L900 245.5L902.5 245.7L905 246.2L907.5 246.9L910 247.4L912.5 247.7L915 247.9L917.5 248.5L920 248.4" stroke="#7e7e7e" stroke-opacity="0.8" stroke-width="1.3" fill="none"/><path d="M280 261.3L282.5 261.7L285 261.8L287.5 261.9L290 262.1L292.5 262.3L295 262.4L297.5 262.9L300 262.6L302.5 263.1L305 262.9L307.5 263L310 263L312.5 263L315 262.7L317.5 263L320 262.8L322.5 262.5L325 262.5L327.5 262.3L330 262.1L332.5 261.8L335 261.9L337.5 261.4L340 261.4L342.5 261.2L345 261L347.5 260.6L350 260.1L352.5 260.1L355 259.5L357.5 259.3L360 258.8L362.5 258.6L365 258.5L367.5 257.6L370 257.5L372.5 256.8L375 256.4L377.5 256L380 255.3L382.5 254.9L385 254.4L387.5 253.7L390 253.5L392.5 252.6L395 252.1L397.5 251.5L400 250.9L402.5 250.2L405 249.2L407.5 249L410 248.3L412.5 247.5L415 246.4L417.5 246L420 245L422.5 244.7L425 243.6L427.5 242.9L430 242.4L432.5 241.5L435 241L437.5 240L440 239.5L442.5 239L445 238.1L447.5 237.6L450 237.2L452.5 236.8L455 235.9L457.5 235.6L460 235.4L462.5 234.6L465 234.4L467.5 234.3L470 233.7L472.5 233.7L475 233.5L477.5 233.1L480 233.1L482.5 233L485 233.4L487.5 233.4L490 233.4L492.5 233.4L495 234L497.5 234.2L500 234.5L502.5 234.8L505 235.1L507.5 235.8L510 236.5L512.5 236.6L515 237.4L517.5 238.2L520 238.8L522.5 239.4L525 240.2L527.5 240.9L530 241.6L532.5 242.4L535 243.5L537.5 244L540 244.8L542.5 246.1L545 246.6L547.5 247.6L550 248.3L552.5 249.1L555 250.1L557.5 250.7L560 251.7L562.5 252.3L565 253.1L567.5 253.9L570 254.7L572.5 255.5L575 256.1L577.5 256.7L580 257.6L582.5 258L585 258.5L587.5 259.1L590 259.5L592.5 260.2L595 260.5L597.5 260.7L600 261.1L602.5 261.2L605 261.9L607.5 262.2L610 262.2L612.5 262.2L615 262.6L617.5 262.9L620 262.8L622.5 263.1L625 263L627.5 262.8L630 263L632.5 263.1L635 262.8L637.5 263.1L640 262.7L642.5 262.7L645 262.5L647.5 262.5L650 262.5L652.5 261.9L655 262L657.5 261.9L660 261.6L662.5 261.1L665 260.8L667.5 260.6L670 260.4L672.5 259.9L675 260L677.5 259.5L680 259.2L682.5 258.7L685 258.3L687.5 257.9L690 257.6L692.5 257L695 256.4L697.5 255.9L700 255.6L702.5 254.9L705 254.3L707.5 253.9L710 253.3L712.5 252.6L715 252.2L717.5 251.3L720 251L722.5 250.1L725 249.3L727.5 248.6L730 248.1L732.5 247.3L735 246.9L737.5 245.8L740 245L742.5 244.5L745 243.7L747.5 242.9L750 242.5L752.5 241.6L755 241L757.5 240.2L760 239.8L762.5 239L765 238.6L767.5 237.5L770 237L772.5 236.4L775 236.2L777.5 235.4L780 235.4L782.5 235L785 234.5L787.5 234L790 233.9L792.5 233.6L795 233.3L797.5 233.2L800 233.5L802.5 233.4L805 233.2L807.5 233.5L810 233.3L812.5 233.7L815 233.9L817.5 234L820 234.4L822.5 234.9L825 235.3L827.5 236.1L830 236.6L832.5 237L835 237.5L837.5 237.9L840 238.8L842.5 239.7L845 240.2L847.5 240.8L850 241.8L852.5 242.4L855 243.2L857.5 244L860 245.2L862.5 245.7L865 246.7L867.5 247.6L870 248.6L872.5 249.4L875 250.1L877.5 251.1L880 251.7L882.5 252.6L885 253.1L887.5 254.3L890 254.9L892.5 255.6L895 256L897.5 256.9L900 257.5L902.5 258.2L905 258.3L907.5 258.8L910 259.8L912.5 260L915 260.4L917.5 260.6L920 261" stroke="#a8a8a8" stroke-opacity="0.9" stroke-width="2" fill="none"/><path d="M280 265.7L282.5 266.4L285 266.4L287.5 266.9L290 267.2L292.5 267.8L295 267.9L297.5 267.9L300 268.4L302.5 268.7L305 268.5L307.5 268.9L310 269L312.5 269.3L315 269.3L317.5 269.4L320 269L322.5 269L325 269.3L327.5 269.2L330 269.2L332.5 269.3L335 268.9L337.5 269L340 268.9L342.5 268.7L345 268.4L347.5 268.5L350 268.1L352.5 268.1L355 267.8L357.5 267.3L360 267.2L362.5 267.1L365 266.7L367.5 266.3L370 265.9L372.5 265.3L375 265L377.5 264.8L380 264.2L382.5 264L385 263.2L387.5 262.9L390 262.3L392.5 261.5L395 261.3L397.5 260.4L400 260L402.5 259.3L405 258.4L407.5 258L410 257L412.5 256.4L415 255.8L417.5 255.1L420 254.3L422.5 253.5L425 252.6L427.5 252.1L430 251.4L432.5 250.6L435 249.8L437.5 249L440 248.1L442.5 247.6L445 246.7L447.5 246L450 245.6L452.5 244.8L455 244.3L457.5 243.6L460 243L462.5 242.5L465 242L467.5 241.7L470 241.6L472.5 240.8L475 240.8L477.5 240.8L480 240.5L482.5 240.2L485 240.2L487.5 239.8L490 240L492.5 240L495 240L497.5 240.6L500 240.6L502.5 240.9L505 241L507.5 241.6L510 242L512.5 242.6L515 242.9L517.5 243.6L520 244L522.5 244.5L525 245.2L527.5 245.8L530 246.6L532.5 247.3L535 248.2L537.5 248.9L540 249.6L542.5 250.3L545 251.1L547.5 252L550 253L552.5 253.4L555 254.6L557.5 255.2L560 256.2L562.5 256.9L565 257.3L567.5 258.1L570 259.1L572.5 260L575 260.6L577.5 261.3L580 261.5L582.5 262.5L585 263L587.5 263.6L590 264.2L592.5 264.7L595 265.2L597.5 265.7L600 265.9L602.5 266.5L605 266.5L607.5 267L610 267.5L612.5 267.5L615 268L617.5 268.3L620 268.3L622.5 268.6L625 268.5L627.5 268.6L630 269L632.5 269.3L635 269L637.5 269.3L640 269.4L642.5 269.1L645 269.1L647.5 268.9L650 269L652.5 268.8L655 269.2L657.5 268.8L660 268.8L662.5 268.7L665 268.7L667.5 268.1L670 268.2L672.5 267.9L675 267.6L677.5 267.3L680 267.2L682.5 266.9L685 266.4L687.5 266.1L690 265.9L692.5 265.6L695 265.3L697.5 264.9L700 264.3L702.5 263.8L705 263.1L707.5 263L710 262.2L712.5 261.8L715 261.1L717.5 260.6L720 260L722.5 259.3L725 258.6L727.5 257.9L730 257L732.5 256.6L735 255.6L737.5 254.8L740 254.1L742.5 253.3L745 252.6L747.5 252L750 251.1L752.5 250.5L755 249.6L757.5 249.1L760 248.1L762.5 247.7L765 246.9L767.5 246.3L770 245.5L772.5 244.7L775 244.2L777.5 243.7L780 243.1L782.5 242.7L785 242.3L787.5 241.7L790 241.4L792.5 241.3L795 240.7L797.5 240.3L800 240.3L802.5 240.4L805 240L807.5 240.2L810 240.3L812.5 240.3L815 240.3L817.5 240.5L820 240.6L822.5 241.1L825 241.2L827.5 241.8L830 241.8L832.5 242.3L835 243.1L837.5 243.4L840 244.2L842.5 244.6L845 245.5L847.5 246.2L850 246.6L852.5 247.2L855 248L857.5 248.7L860 249.8L862.5 250.3L865 251.4L867.5 251.8L870 252.7L872.5 253.9L875 254.5L877.5 255.2L880 256L882.5 256.6L885 257.6L887.5 258.4L890 259.1L892.5 259.5L895 260.6L897.5 260.9L900 261.6L902.5 262.3L905 262.9L907.5 263.6L910 263.8L912.5 264.5L915 265L917.5 265.3L920 265.8" stroke="#7e7e7e" stroke-opacity="0.8" stroke-width="1.3" fill="none"/><path d="M280 270.5L282.5 271L285 271.5L287.5 271.9L290 272L292.5 272.5L295 272.9L297.5 273.3L300 273.7L302.5 273.9L305 273.9L307.5 274.2L310 274.3L312.5 274.5L315 274.8L317.5 274.9L320 275.3L322.5 275.3L325 275.2L327.5 275.6L330 275.6L332.5 275.6L335 275.7L337.5 275.5L340 275.4L342.5 275.7L345 275.5L347.5 275.3L350 275.7L352.5 275.2L355 275.4L357.5 275.2L360 275.1L362.5 274.8L365 274.4L367.5 274.4L370 274.1L372.5 273.8L375 273.2L377.5 273.1L380 272.9L382.5 272.3L385 272.1L387.5 271.5L390 270.9L392.5 270.5L395 269.7L397.5 269.5L400 268.7L402.5 268.1L405 267.3L407.5 266.9L410 266.1L412.5 265.3L415 264.9L417.5 264L420 263.4L422.5 262.4L425 261.9L427.5 261.1L430 260.2L432.5 259.3L435 258.7L437.5 258L440 257L442.5 256.4L445 255.5L447.5 254.8L450 254L452.5 253.1L455 252.5L457.5 251.9L460 251.5L462.5 250.7L465 250.5L467.5 249.7L470 249.4L472.5 248.6L475 248.5L477.5 248L480 248L482.5 247.5L485 247.4L487.5 247.1L490 247L492.5 247L495 247.2L497.5 247.2L500 246.9L502.5 247.4L505 247.3L507.5 247.9L510 248.2L512.5 248.3L515 248.8L517.5 249.2L520 249.4L522.5 249.9L525 250.6L527.5 251.3L530 251.8L532.5 252.4L535 253.3L537.5 253.5L540 254.5L542.5 255.4L545 256L547.5 256.8L550 257.4L552.5 257.9L555 258.9L557.5 259.4L560 260.3L562.5 261.1L565 262L567.5 262.7L570 263.1L572.5 264.2L575 264.8L577.5 265.5L580 265.8L582.5 266.8L585 267.3L587.5 267.7L590 268.2L592.5 269L595 269.3L597.5 269.8L600 270.5L602.5 271L605 271.2L607.5 271.9L610 272.1L612.5 272.6L615 272.8L617.5 273.3L620 273.7L622.5 273.9L625 274L627.5 274.4L630 274.5L632.5 274.8L635 274.8L637.5 274.8L640 275L642.5 275.3L645 275.5L647.5 275.7L650 275.6L652.5 275.6L655 275.9L657.5 275.5L660 275.9L662.5 275.7L665 275.4L667.5 275.8L670 275.6L672.5 275.6L675 275.5L677.5 275L680 274.8L682.5 274.9L685 274.7L687.5 274.1L690 273.8L692.5 273.7L695 273.4L697.5 272.8L700 272.7L702.5 272.4L705 271.7L707.5 271.5L710 271L712.5 270.6L715 270L717.5 269.4L720 268.9L722.5 268.2L725 267.3L727.5 266.9L730 266L732.5 265.5L735 264.9L737.5 263.8L740 263.5L742.5 262.5L745 261.6L747.5 261.2L750 260.2L752.5 259.6L755 258.4L757.5 257.8L760 256.8L762.5 256.2L765 255.7L767.5 254.9L770 254.1L772.5 253.6L775 252.6L777.5 252L780 251.6L782.5 250.8L785 250.3L787.5 249.7L790 249.3L792.5 248.6L795 248.5L797.5 248.1L800 247.6L802.5 247.4L805 247.2L807.5 247.3L810 246.9L812.5 246.8L815 247.1L817.5 247L820 247.1L822.5 247.1L825 247.6L827.5 247.9L830 248.1L832.5 248.2L835 248.9L837.5 249.2L840 249.7L842.5 249.9L845 250.6L847.5 251L850 251.6L852.5 252.3L855 253.2L857.5 253.5L860 254.6L862.5 255.3L865 255.8L867.5 256.6L870 257.4L872.5 258.2L875 258.9L877.5 259.4L880 260.2L882.5 261L885 262L887.5 262.7L890 263.1L892.5 263.9L895 264.6L897.5 265.2L900 266.1L902.5 266.5L905 267.1L907.5 267.8L910 268.6L912.5 269L915 269.7L917.5 270L920 270.3" stroke="#7e7e7e" stroke-opacity="0.8" stroke-width="1.3" fill="none"/><path d="M280 274.9L282.5 275.1L285 276.1L287.5 276.2L290 276.8L292.5 277L295 277.5L297.5 278.1L300 278.5L302.5 278.6L305 278.9L307.5 279.1L310 279.7L312.5 279.9L315 280L317.5 280.3L320 280.8L322.5 281L325 281.2L327.5 281.5L330 281.4L332.5 281.5L335 281.9L337.5 282L340 282.1L342.5 281.9L345 282L347.5 282.4L350 282.1L352.5 282.3L355 282.4L357.5 282.3L360 282.3L362.5 281.9L365 282.1L367.5 281.8L370 281.8L372.5 281.4L375 281.5L377.5 281L380 280.6L382.5 280.5L385 280L387.5 279.9L390 279.1L392.5 279L395 278.6L397.5 277.9L400 277.3L402.5 277L405 276.3L407.5 275.5L410 275.2L412.5 274.3L415 273.6L417.5 272.9L420 272.4L422.5 271.5L425 270.8L427.5 269.8L430 268.9L432.5 268.5L435 267.4L437.5 266.5L440 265.8L442.5 265L445 264.3L447.5 263.7L450 262.8L452.5 261.8L455 261.1L457.5 260.8L460 259.6L462.5 259.2L465 258.4L467.5 257.8L470 257.3L472.5 256.8L475 256.5L477.5 255.8L480 255.5L482.5 255L485 255L487.5 254.6L490 254.4L492.5 254.3L495 253.9L497.5 254L500 253.9L502.5 254.1L505 254.3L507.5 254L510 254.2L512.5 254.4L515 254.8L517.5 254.9L520 255.3L522.5 255.8L525 256.4L527.5 256.8L530 257.1L532.5 257.6L535 258.4L537.5 258.7L540 259.6L542.5 260.2L545 261L547.5 261.2L550 261.9L552.5 262.5L555 263.6L557.5 264.1L560 264.7L562.5 265.3L565 266.2L567.5 267L570 267.4L572.5 268.3L575 268.8L577.5 269.7L580 270.3L582.5 270.8L585 271.5L587.5 272.2L590 272.5L592.5 273L595 273.8L597.5 274.4L600 274.8L602.5 275.4L605 275.6L607.5 276.2L610 276.6L612.5 277.2L615 277.8L617.5 277.8L620 278.3L622.5 278.8L625 279.1L627.5 279.2L630 279.9L632.5 279.9L635 280.4L637.5 280.3L640 280.7L642.5 281.2L645 281.3L647.5 281.6L650 281.6L652.5 281.8L655 281.9L657.5 281.8L660 282.2L662.5 282.4L665 282.4L667.5 282.5L670 282.5L672.5 282.1L675 282.5L677.5 282.1L680 282.2L682.5 282.1L685 282.3L687.5 281.8L690 281.8L692.5 281.6L695 281.5L697.5 281.2L700 280.6L702.5 280.3L705 280.1L707.5 279.7L710 279.3L712.5 278.7L715 278.4L717.5 277.8L720 277.3L722.5 276.9L725 276.1L727.5 275.6L730 275.2L732.5 274.1L735 273.6L737.5 273.1L740 272.1L742.5 271.4L745 270.9L747.5 269.7L750 269L752.5 268.4L755 267.7L757.5 266.9L760 266.1L762.5 265.2L765 264.4L767.5 263.6L770 262.8L772.5 261.8L775 261.1L777.5 260.3L780 259.6L782.5 259L785 258.3L787.5 257.8L790 257.3L792.5 256.9L795 256.1L797.5 255.8L800 255.4L802.5 255.2L805 254.8L807.5 254.4L810 254.2L812.5 254.2L815 253.9L817.5 253.9L820 254.1L822.5 254.1L825 254.2L827.5 254.3L830 254.4L832.5 254.4L835 254.9L837.5 255L840 255.7L842.5 255.6L845 256.3L847.5 256.6L850 257.4L852.5 257.7L855 258.6L857.5 258.8L860 259.4L862.5 260L865 260.8L867.5 261.4L870 262.1L872.5 263L875 263.3L877.5 264.3L880 264.6L882.5 265.7L885 266.4L887.5 266.8L890 267.4L892.5 268L895 268.8L897.5 269.8L900 270.4L902.5 270.8L905 271.5L907.5 272L910 272.8L912.5 273.1L915 274L917.5 274.2L920 274.8" stroke="#7e7e7e" stroke-opacity="0.8" stroke-width="1.3" fill="none"/><path d="M280 279.3L282.5 279.5L285 280.1L287.5 280.4L290 281L292.5 281.7L295 282L297.5 282.3L300 282.7L302.5 283.6L305 283.5L307.5 284.1L310 284.5L312.5 284.8L315 285.1L317.5 285.5L320 285.9L322.5 286.2L325 286.7L327.5 287L330 286.9L332.5 287.3L335 287.4L337.5 287.9L340 288.2L342.5 288.3L345 288.3L347.5 288.5L350 288.6L352.5 289L355 289.1L357.5 289.1L360 289.1L362.5 289.3L365 289.2L367.5 289L370 289.2L372.5 289L375 289L377.5 288.6L380 288.5L382.5 288.4L385 288.1L387.5 287.5L390 287.3L392.5 287L395 286.4L397.5 286L400 285.9L402.5 285.5L405 284.9L407.5 284.2L410 283.8L412.5 283L415 282.1L417.5 281.6L420 281.2L422.5 280.5L425 279.7L427.5 278.7L430 277.8L432.5 277.1L435 276.4L437.5 275.5L440 274.6L442.5 273.7L445 273.2L447.5 272.1L450 271.4L452.5 270.6L455 269.8L457.5 269L460 268.6L462.5 267.7L465 266.9L467.5 266.5L470 265.5L472.5 264.8L475 264.4L477.5 264.1L480 263.6L482.5 262.8L485 262.8L487.5 262.2L490 261.9L492.5 261.8L495 261.2L497.5 261.2L500 260.9L502.5 261L505 261L507.5 260.8L510 261.1L512.5 261.1L515 261.4L517.5 261.5L520 261.6L522.5 262L525 262.3L527.5 262.6L530 263L532.5 263.2L535 263.7L537.5 264.4L540 264.6L542.5 265.4L545 265.7L547.5 266.5L550 267.1L552.5 267.4L555 268.1L557.5 269L560 269.5L562.5 270.4L565 270.5L567.5 271.5L570 271.9L572.5 272.7L575 273.4L577.5 274L580 274.3L582.5 274.9L585 275.8L587.5 276.6L590 276.7L592.5 277.5L595 278.3L597.5 278.4L600 279.3L602.5 279.6L605 280.1L607.5 280.5L610 281.2L612.5 281.8L615 282.2L617.5 282.4L620 283.1L622.5 283.2L625 283.7L627.5 284.2L630 284.3L632.5 284.9L635 285.3L637.5 285.8L640 286L642.5 286.2L645 286.5L647.5 286.7L650 287.1L652.5 287.5L655 287.7L657.5 288L660 287.8L662.5 288.2L665 288.2L667.5 288.8L670 288.9L672.5 288.7L675 289L677.5 289.2L680 289L682.5 289.2L685 289.2L687.5 289L690 288.9L692.5 288.9L695 288.8L697.5 288.6L700 288.5L702.5 288.5L705 288.2L707.5 287.8L710 287.5L712.5 287.2L715 286.9L717.5 286.5L720 285.9L722.5 285.4L725 284.7L727.5 284.2L730 283.9L732.5 283L735 282.4L737.5 281.9L740 281L742.5 280.5L745 279.7L747.5 278.7L750 278.1L752.5 277.3L755 276.3L757.5 275.6L760 274.8L762.5 274.1L765 273L767.5 272.3L770 271.7L772.5 270.7L775 269.8L777.5 269.2L780 268.6L782.5 267.8L785 267L787.5 266.2L790 265.9L792.5 264.9L795 264.5L797.5 264.1L800 263.7L802.5 263.1L805 262.8L807.5 262.1L810 261.8L812.5 261.8L815 261.2L817.5 261L820 261.1L822.5 261L825 260.9L827.5 261.1L830 260.9L832.5 261.2L835 261.1L837.5 261.3L840 261.9L842.5 262.1L845 262.5L847.5 262.5L850 262.9L852.5 263.6L855 264.1L857.5 264.3L860 264.7L862.5 265.4L865 266.1L867.5 266.7L870 266.8L872.5 267.4L875 268.2L877.5 268.7L880 269.7L882.5 270.3L885 270.9L887.5 271.6L890 271.8L892.5 272.6L895 273.1L897.5 273.7L900 274.4L902.5 275.3L905 275.9L907.5 276.6L910 276.9L912.5 277.3L915 277.9L917.5 278.7L920 278.9" stroke="#7e7e7e" stroke-opacity="0.8" stroke-width="1.3" fill="none"/><path d="M280 283.3L282.5 283.9L285 284.1L287.5 284.7L290 285.1L292.5 286.1L295 286.1L297.5 286.6L300 287.5L302.5 287.6L305 288.1L307.5 288.9L310 289L312.5 289.8L315 290.1L317.5 290.6L320 291L322.5 291L325 291.8L327.5 292L330 292.5L332.5 292.7L335 293.2L337.5 293.4L340 293.4L342.5 293.8L345 294.5L347.5 294.5L350 294.7L352.5 294.9L355 295.1L357.5 295.3L360 295.3L362.5 295.4L365 296L367.5 296.1L370 296L372.5 296L375 296.1L377.5 296L380 296L382.5 295.8L385 295.5L387.5 295.2L390 295.2L392.5 294.9L395 294.7L397.5 294.1L400 293.7L402.5 293.6L405 292.9L407.5 292.3L410 291.9L412.5 291.4L415 290.6L417.5 290.2L420 289.7L422.5 288.9L425 288L427.5 287.5L430 286.7L432.5 286.2L435 285.4L437.5 284.5L440 283.5L442.5 282.8L445 281.7L447.5 281.4L450 280L452.5 279.5L455 278.6L457.5 278L460 277L462.5 276.5L465 275.6L467.5 274.8L470 274L472.5 273.2L475 272.8L477.5 272L480 271.4L482.5 271L485 270.7L487.5 270.4L490 269.8L492.5 269.2L495 269.3L497.5 268.6L500 268.4L502.5 268.5L505 268L507.5 268.2L510 268L512.5 267.8L515 267.9L517.5 267.9L520 268.2L522.5 268.2L525 268.5L527.5 268.6L530 269L532.5 269.3L535 269.9L537.5 270L540 270.5L542.5 271.1L545 271.4L547.5 271.7L550 272.5L552.5 273L555 273.1L557.5 274L560 274.3L562.5 275L565 275.6L567.5 276L570 276.9L572.5 277.1L575 277.6L577.5 278.5L580 278.8L582.5 279.7L585 280L587.5 280.5L590 281L592.5 282L595 282.5L597.5 282.9L600 283.3L602.5 283.8L605 284.3L607.5 285.2L610 285.5L612.5 285.7L615 286.4L617.5 286.6L620 287.3L622.5 287.7L625 288.2L627.5 288.9L630 289L632.5 289.8L635 289.9L637.5 290.6L640 290.9L642.5 291.5L645 291.5L647.5 292L650 292.3L652.5 292.6L655 292.8L657.5 293.3L660 293.7L662.5 294L665 294.5L667.5 294.7L670 294.9L672.5 294.9L675 295.5L677.5 295.4L680 295.6L682.5 295.9L685 295.8L687.5 296L690 296.2L692.5 296.2L695 295.7L697.5 295.7L700 296L702.5 295.9L705 295.7L707.5 295.2L710 295.3L712.5 294.6L715 294.3L717.5 294.1L720 293.7L722.5 293.7L725 292.8L727.5 292.5L730 292L732.5 291.5L735 290.8L737.5 290.1L740 289.7L742.5 288.8L745 288L747.5 287.6L750 286.5L752.5 285.7L755 285.3L757.5 284.3L760 283.4L762.5 283L765 281.8L767.5 280.9L770 280.3L772.5 279.6L775 278.6L777.5 277.7L780 277.1L782.5 276.4L785 275.5L787.5 274.6L790 274.1L792.5 273.4L795 273L797.5 271.9L800 271.5L802.5 271.2L805 270.9L807.5 270.4L810 269.8L812.5 269.4L815 269.1L817.5 268.7L820 268.4L822.5 268.5L825 268.1L827.5 268L830 267.9L832.5 268.2L835 268.2L837.5 268.3L840 268.3L842.5 268.4L845 268.4L847.5 268.9L850 268.9L852.5 269.7L855 269.7L857.5 270L860 270.8L862.5 271.1L865 271.5L867.5 271.9L870 272.2L872.5 273L875 273.2L877.5 273.9L880 274.5L882.5 275L885 275.6L887.5 275.8L890 276.6L892.5 277.3L895 277.7L897.5 278.4L900 279L902.5 279.5L905 279.9L907.5 280.7L910 281.1L912.5 281.6L915 282L917.5 283L920 283.4" stroke="#7e7e7e" stroke-opacity="0.8" stroke-width="1.3" fill="none"/><path d="M280 287.9L282.5 288.3L285 288.9L287.5 289.3L290 289.8L292.5 290.3L295 290.5L297.5 291.4L300 291.8L302.5 292.1L305 292.3L307.5 293.2L310 293.3L312.5 294.2L315 294.9L317.5 295.1L320 295.8L322.5 296.1L325 296.2L327.5 296.7L330 297.3L332.5 297.8L335 298.2L337.5 298.6L340 298.9L342.5 299.3L345 299.8L347.5 300L350 300.1L352.5 300.7L355 300.7L357.5 301.6L360 301.2L362.5 301.7L365 301.8L367.5 302.3L370 302.5L372.5 302.3L375 302.3L377.5 302.5L380 302.9L382.5 302.6L385 302.4L387.5 302.8L390 302.1L392.5 302.6L395 301.7L397.5 302.1L400 301.2L402.5 300.9L405 301.1L407.5 300.5L410 299.9L412.5 299.4L415 298.9L417.5 298.1L420 298.1L422.5 297L425 296.9L427.5 295.9L430 295.4L432.5 294.5L435 293.6L437.5 292.7L440 292L442.5 291.7L445 290.3L447.5 290L450 289.2L452.5 288.1L455 287.3L457.5 286.4L460 286L462.5 285.1L465 283.9L467.5 283.4L470 282.8L472.5 282.1L475 281L477.5 280.5L480 280L482.5 279.4L485 279.2L487.5 278.2L490 277.5L492.5 277.1L495 276.8L497.5 276.9L500 276.4L502.5 275.8L505 275.7L507.5 275.2L510 275.3L512.5 274.9L515 275.4L517.5 275.1L520 275.5L522.5 275.1L525 275L527.5 275.2L530 275.8L532.5 275.6L535 276L537.5 276.2L540 276.5L542.5 277L545 276.9L547.5 277.2L550 278L552.5 278.3L555 278.9L557.5 278.8L560 279.6L562.5 280.3L565 280.3L567.5 281.2L570 281.8L572.5 282L575 282.6L577.5 283.3L580 283.7L582.5 283.9L585 284.8L587.5 285.1L590 285.5L592.5 286.1L595 286.8L597.5 287.2L600 287.5L602.5 288L605 288.6L607.5 288.8L610 289.5L612.5 290.2L615 290.5L617.5 290.9L620 291.6L622.5 291.8L625 292.6L627.5 293.5L630 293.6L632.5 294.2L635 294.7L637.5 295.3L640 295.6L642.5 296.1L645 296.7L647.5 296.8L650 297.2L652.5 297.8L655 298.1L657.5 298.9L660 298.9L662.5 299.2L665 299.8L667.5 299.9L670 300.6L672.5 300.8L675 301.2L677.5 301.5L680 301.4L682.5 301.7L685 302L687.5 302.2L690 302.6L692.5 302.4L695 302.6L697.5 302.3L700 302.9L702.5 303L705 302.7L707.5 302.5L710 302.1L712.5 302.1L715 302.3L717.5 301.6L720 301.5L722.5 301L725 300.7L727.5 300.7L730 300.3L732.5 299.6L735 299.3L737.5 298.5L740 297.9L742.5 297.3L745 296.6L747.5 295.9L750 295L752.5 294.7L755 293.5L757.5 293.4L760 292.1L762.5 291.3L765 290.7L767.5 289.5L770 289L772.5 288.3L775 287L777.5 286.8L780 285.4L782.5 285.3L785 284.5L787.5 283.3L790 283L792.5 281.7L795 281L797.5 281L800 280.3L802.5 279.5L805 279.2L807.5 278.6L810 277.9L812.5 277.2L815 277.1L817.5 276.9L820 276.5L822.5 276.2L825 276.1L827.5 275.8L830 275.6L832.5 275.5L835 275.3L837.5 275.2L840 275L842.5 274.9L845 275L847.5 275.6L850 275.9L852.5 275.6L855 275.8L857.5 275.9L860 276.4L862.5 276.5L865 277.2L867.5 277.2L870 277.8L872.5 278L875 278.4L877.5 279.3L880 279.6L882.5 279.8L885 280.8L887.5 281L890 281.8L892.5 281.8L895 282.2L897.5 283L900 283.2L902.5 283.7L905 284.8L907.5 285L910 285.3L912.5 286.4L915 286.6L917.5 286.9L920 287.9" stroke="#7e7e7e" stroke-opacity="0.8" stroke-width="1.3" fill="none"/><path d="M280 291.9L282.5 292.9L285 292.7L287.5 293L290 294.2L292.5 294.5L295 295.2L297.5 295.6L300 295.7L302.5 296.4L305 296.7L307.5 297.1L310 297.7L312.5 298.1L315 298.5L317.5 299.2L320 300.1L322.5 300.4L325 301.4L327.5 301.6L330 302L332.5 302.6L335 302.6L337.5 303.5L340 304.1L342.5 304.3L345 304.8L347.5 305.5L350 306.1L352.5 306L355 306.4L357.5 307.3L360 307.6L362.5 307.8L365 308L367.5 308.2L370 308.7L372.5 309.1L375 308.8L377.5 308.6L380 309.3L382.5 309.1L385 309.8L387.5 309.7L390 309.7L392.5 309.5L395 308.9L397.5 308.8L400 308.7L402.5 308.2L405 308.6L407.5 308.1L410 307.8L412.5 307.1L415 307.1L417.5 306.1L420 306L422.5 305.3L425 305L427.5 303.8L430 303.9L432.5 302.7L435 302.5L437.5 301.8L440 300.4L442.5 300L445 299.4L447.5 298.3L450 297.3L452.5 297.1L455 295.6L457.5 294.8L460 294.3L462.5 293.6L465 292.9L467.5 292L470 291.2L472.5 290.5L475 289.6L477.5 289L480 288.3L482.5 287.6L485 287.1L487.5 286.7L490 286.1L492.5 285.6L495 284.8L497.5 284.6L500 283.8L502.5 284.2L505 283.4L507.5 283.3L510 282.7L512.5 282.5L515 282.5L517.5 282L520 282.2L522.5 281.9L525 282.6L527.5 282L530 282.4L532.5 282.7L535 282.9L537.5 282.5L540 282.7L542.5 283.1L545 283.6L547.5 283.4L550 283.8L552.5 284.3L555 284.8L557.5 285L560 285.4L562.5 285.4L565 286.1L567.5 286.4L570 286.6L572.5 286.8L575 287.8L577.5 287.7L580 288.2L582.5 288.5L585 289.4L587.5 289.5L590 290.3L592.5 290.1L595 290.7L597.5 291.4L600 291.9L602.5 292.7L605 293L607.5 293.9L610 293.8L612.5 294.6L615 295.1L617.5 295.7L620 296.2L622.5 296L625 296.6L627.5 297.2L630 298.1L632.5 298.3L635 298.8L637.5 299.1L640 299.7L642.5 300.8L645 301.3L647.5 301L650 302.2L652.5 302.3L655 303.1L657.5 303.6L660 304.2L662.5 304.5L665 304.7L667.5 305.1L670 305.7L672.5 305.9L675 306.6L677.5 306.7L680 306.8L682.5 308L685 307.5L687.5 307.9L690 308.4L692.5 308.7L695 309.2L697.5 309L700 309.1L702.5 308.8L705 309.7L707.5 309.3L710 309.2L712.5 309.1L715 308.8L717.5 309.4L720 308.7L722.5 308.4L725 308.6L727.5 308.3L730 308.1L732.5 306.9L735 307.2L737.5 306.2L740 305.5L742.5 305.3L745 305.1L747.5 304.6L750 303.4L752.5 302.9L755 302.6L757.5 301.2L760 301.1L762.5 299.6L765 299.3L767.5 298L770 297.3L772.5 296.4L775 295.7L777.5 294.9L780 294.4L782.5 293.6L785 292.8L787.5 291.9L790 291.6L792.5 291L795 289.4L797.5 289.6L800 288.8L802.5 287.4L805 287.3L807.5 286.2L810 286.3L812.5 286L815 284.6L817.5 284.2L820 284L822.5 283.5L825 283.8L827.5 283.5L830 283L832.5 283.1L835 282.5L837.5 282.3L840 282.2L842.5 281.9L845 281.8L847.5 281.9L850 282.2L852.5 282L855 282.2L857.5 282.5L860 282.8L862.5 283.2L865 283.5L867.5 283.5L870 284L872.5 283.9L875 284.3L877.5 284.7L880 284.6L882.5 285.8L885 285.9L887.5 285.8L890 286.2L892.5 287.3L895 287.5L897.5 287.8L900 288.6L902.5 288.4L905 289.3L907.5 289.5L910 290.4L912.5 290.4L915 291L917.5 291.5L920 291.8" stroke="#7e7e7e" stroke-opacity="0.8" stroke-width="1.3" fill="none"/><path d="M280 296.1L282.5 296.8L285 296.9L287.5 297.5L290 298.5L292.5 298.4L295 299.5L297.5 299.9L300 299.7L302.5 301L305 301.1L307.5 301.1L310 302L312.5 302.5L315 303.3L317.5 303.8L320 304.7L322.5 305.1L325 305.5L327.5 306.2L330 306.3L332.5 306.6L335 307.4L337.5 307.8L340 308.7L342.5 309.6L345 309.8L347.5 310L350 311.2L352.5 311.3L355 312.1L357.5 312.3L360 312.9L362.5 313.2L365 312.9L367.5 314.3L370 314.5L372.5 314.5L375 315.2L377.5 315.3L380 315.7L382.5 315.3L385 315.2L387.5 316.2L390 316.2L392.5 315.6L395 315.5L397.5 316.2L400 315.9L402.5 315.4L405 315.7L407.5 315.6L410 314.5L412.5 314.2L415 314.6L417.5 314.1L420 313.7L422.5 313.3L425 313L427.5 312.2L430 311.2L432.5 310.6L435 310.7L437.5 309.9L440 309.4L442.5 308.7L445 307.7L447.5 306.5L450 305.7L452.5 305.3L455 304.2L457.5 303.8L460 302.9L462.5 302.1L465 301L467.5 301.1L470 299.7L472.5 299L475 298.7L477.5 297.7L480 297L482.5 296.4L485 295.4L487.5 295.5L490 294.2L492.5 294L495 293.4L497.5 292.6L500 291.8L502.5 291.5L505 291.5L507.5 291L510 291.1L512.5 290L515 290.2L517.5 290.1L520 289.9L522.5 289.7L525 289.5L527.5 289.7L530 289.1L532.5 289.2L535 289.7L537.5 289.2L540 289.8L542.5 289.1L545 289.4L547.5 290.1L550 290.1L552.5 289.9L555 290.1L557.5 290.7L560 290.8L562.5 290.7L565 291L567.5 292L570 291.6L572.5 292.7L575 292.4L577.5 293.1L580 292.9L582.5 293.7L585 293.7L587.5 294.6L590 294.5L592.5 295L595 295.4L597.5 296.4L600 296.4L602.5 296.9L605 297.4L607.5 297.4L610 298.2L612.5 299.2L615 299.3L617.5 299.4L620 300.7L622.5 300.6L625 300.7L627.5 301.4L630 301.8L632.5 303.2L635 303.4L637.5 304.2L640 304.2L642.5 305.3L645 305.2L647.5 305.5L650 306L652.5 306.8L655 307.4L657.5 307.7L660 308.5L662.5 308.8L665 309.3L667.5 310L670 311L672.5 310.9L675 312.1L677.5 311.8L680 312.4L682.5 313.4L685 313.6L687.5 313.6L690 314.1L692.5 314.1L695 314.9L697.5 314.5L700 315.2L702.5 315.7L705 315.1L707.5 315.6L710 315.7L712.5 315.8L715 316.2L717.5 316L720 315.7L722.5 315.4L725 315.1L727.5 315.2L730 314.9L732.5 314.5L735 314.8L737.5 313.6L740 313.1L742.5 313.4L745 313.1L747.5 311.6L750 311.7L752.5 310.6L755 310L757.5 309.6L760 308.9L762.5 308.7L765 307.8L767.5 306.4L770 306.6L772.5 304.8L775 304.3L777.5 304L780 303.2L782.5 302.5L785 301.6L787.5 300.2L790 300.2L792.5 298.7L795 298.4L797.5 297.4L800 296.7L802.5 295.9L805 295.2L807.5 295.5L810 294.9L812.5 293.8L815 293.6L817.5 292.4L820 292.7L822.5 291.4L825 291.9L827.5 291.4L830 290.6L832.5 290.3L835 290.4L837.5 289.6L840 290L842.5 289.3L845 289.8L847.5 289.6L850 289.3L852.5 288.9L855 289.6L857.5 289.3L860 289.2L862.5 290L865 289.2L867.5 289.9L870 289.5L872.5 289.7L875 290.9L877.5 290.1L880 290.4L882.5 290.9L885 291.2L887.5 291.9L890 291.8L892.5 292.7L895 292.7L897.5 293.2L900 293.1L902.5 293.4L905 294.6L907.5 294.8L910 295.2L912.5 295.1L915 296L917.5 295.7L920 296.2" stroke="#7e7e7e" stroke-opacity="0.8" stroke-width="1.3" fill="none"/><path d="M280 301.3L282.5 301.4L285 301.5L287.5 302L290 302.9L292.5 303.2L295 303L297.5 304.5L300 305.1L302.5 304.7L305 306L307.5 306.2L310 305.9L312.5 307L315 307.2L317.5 308.2L320 308.5L322.5 308.7L325 309.2L327.5 310.4L330 310.3L332.5 311.7L335 311.9L337.5 312.4L340 312.8L342.5 313.7L345 313.7L347.5 315.2L350 315.2L352.5 316.5L355 316.5L357.5 316.5L360 317.3L362.5 318.4L365 318.7L367.5 318.5L370 320L372.5 320.4L375 320.5L377.5 320.5L380 320.6L382.5 321.1L385 321.5L387.5 322.2L390 322.2L392.5 321.9L395 321.7L397.5 322L400 322.6L402.5 321.9L405 322.6L407.5 322.1L410 321.6L412.5 321.5L415 321.8L417.5 321.3L420 321.1L422.5 320.8L425 319.9L427.5 319.9L430 319.3L432.5 318.7L435 318.5L437.5 318L440 316.5L442.5 315.9L445 316L447.5 315.3L450 314.3L452.5 313L455 313.2L457.5 312.2L460 310.9L462.5 310.5L465 309.7L467.5 309L470 308.5L472.5 307.7L475 306.4L477.5 306.3L480 305.8L482.5 305.1L485 303.6L487.5 303.2L490 303.1L492.5 302.2L495 301.6L497.5 300.7L500 300L502.5 300L505 299.5L507.5 299.2L510 298.9L512.5 299L515 298.2L517.5 297.8L520 297.4L522.5 297.6L525 297.4L527.5 297.2L530 296.4L532.5 296.7L535 296.9L537.5 296.6L540 295.9L542.5 296.3L545 295.9L547.5 296.7L550 296.9L552.5 296.1L555 296.6L557.5 297L560 296.5L562.5 296.9L565 297.3L567.5 298L570 298.3L572.5 297.6L575 298.4L577.5 299L580 298.6L582.5 299.2L585 298.8L587.5 300L590 300L592.5 299.6L595 300.1L597.5 301.4L600 301.2L602.5 301.6L605 302.2L607.5 301.9L610 303.2L612.5 303.3L615 303.6L617.5 304.2L620 304.2L622.5 305.5L625 305.6L627.5 306L630 306.1L632.5 306.8L635 307.3L637.5 307.4L640 308.2L642.5 308.8L645 309.6L647.5 310.7L650 310.1L652.5 311.8L655 311.6L657.5 312.4L660 313.7L662.5 313.8L665 313.7L667.5 315.4L670 315.3L672.5 316.1L675 316.5L677.5 317.3L680 318L682.5 318.1L685 318.6L687.5 318.5L690 319.4L692.5 319.6L695 320.6L697.5 320.9L700 321.2L702.5 321.8L705 321.7L707.5 321.1L710 322.5L712.5 321.7L715 322.2L717.5 321.7L720 322.8L722.5 322.9L725 322.5L727.5 322L730 321.6L732.5 322.2L735 321.2L737.5 321.5L740 321.3L742.5 320.6L745 320L747.5 320.1L750 319.4L752.5 319.1L755 318.7L757.5 317.6L760 317.5L762.5 315.9L765 315.1L767.5 314.6L770 313.8L772.5 313.2L775 312.3L777.5 312.4L780 312L782.5 310.2L785 310.1L787.5 309L790 308.4L792.5 307.4L795 306.5L797.5 305.7L800 304.9L802.5 304.7L805 304.3L807.5 303.1L810 302.4L812.5 302.7L815 301.7L817.5 301.2L820 300.2L822.5 300.5L825 300L827.5 299.2L830 298.9L832.5 298.1L835 298.4L837.5 297.3L840 297.1L842.5 297.4L845 296.7L847.5 296.5L850 296.5L852.5 296.1L855 296.2L857.5 296.2L860 296.2L862.5 296.2L865 295.9L867.5 295.9L870 297L872.5 296.3L875 297L877.5 297.3L880 297.4L882.5 296.9L885 296.7L887.5 297L890 297.1L892.5 297.9L895 297.8L897.5 298.5L900 298.5L902.5 298.9L905 299.6L907.5 300.1L910 299.5L912.5 300.2L915 300.5L917.5 300.5L920 301.5" stroke="#7e7e7e" stroke-opacity="0.8" stroke-width="1.3" fill="none"/><path d="M280 306.3L282.5 306.3L285 306.1L287.5 306.9L290 307.9L292.5 307.7L295 308.3L297.5 308.1L300 308.9L302.5 309.2L305 309.3L307.5 309.9L310 310.2L312.5 311.8L315 311.7L317.5 312.3L320 313.2L322.5 313.6L325 313.6L327.5 315L330 315.1L332.5 316.3L335 315.9L337.5 316.6L340 316.8L342.5 318.5L345 318.8L347.5 319.7L350 319.7L352.5 321.1L355 321.4L357.5 322.1L360 321.6L362.5 323.3L365 324L367.5 324.3L370 324.4L372.5 325.1L375 325.1L377.5 325.5L380 326.8L382.5 326.9L385 327.6L387.5 327L390 327.5L392.5 328.3L395 327.6L397.5 328.3L400 328.3L402.5 328.1L405 328.9L407.5 328.8L410 328.4L412.5 328.8L415 328.9L417.5 327.5L420 328.6L422.5 327.3L425 327.2L427.5 326.5L430 325.9L432.5 326.2L435 325.2L437.5 325.3L440 325.3L442.5 324.6L445 323.1L447.5 322.5L450 322.8L452.5 321.7L455 321.7L457.5 320.1L460 319.7L462.5 318.8L465 317.6L467.5 317.5L470 316.8L472.5 315.9L475 316L477.5 314.9L480 313.5L482.5 312.5L485 312L487.5 311.4L490 310.7L492.5 310L495 310.4L497.5 309.2L500 308.7L502.5 308.2L505 307.8L507.5 307.1L510 306.9L512.5 306.6L515 305.8L517.5 305.7L520 304.9L522.5 304.6L525 304.5L527.5 304.3L530 304L532.5 304.1L535 304.2L537.5 303.8L540 303.1L542.5 302.8L545 303L547.5 302.9L550 303.7L552.5 303.8L555 302.9L557.5 303.8L560 303.9L562.5 303.6L565 303.6L567.5 303.4L570 303.9L572.5 303.5L575 303.8L577.5 304.4L580 304L582.5 305.1L585 304.4L587.5 304.4L590 305.3L592.5 305.1L595 305.5L597.5 306L600 305.8L602.5 306L605 307L607.5 307.7L610 306.9L612.5 307.3L615 307.7L617.5 308L620 308.4L622.5 309.6L625 309.8L627.5 310L630 310.6L632.5 311.1L635 311.5L637.5 312.6L640 312.2L642.5 313.1L645 313.8L647.5 313.9L650 314.9L652.5 315.2L655 316.5L657.5 316.3L660 317L662.5 317.5L665 318.1L667.5 319.4L670 319.5L672.5 321L675 321.1L677.5 321L680 322L682.5 323.5L685 323.8L687.5 324.5L690 324L692.5 324.4L695 324.9L697.5 326.2L700 326.8L702.5 326.1L705 326.5L707.5 327.4L710 327.3L712.5 327.7L715 328L717.5 328.9L720 328L722.5 328.8L725 328.1L727.5 328.6L730 328.5L732.5 327.8L735 328.9L737.5 328.3L740 328L742.5 328.2L745 327.5L747.5 326.4L750 326.3L752.5 325.8L755 326.4L757.5 325.8L760 325L762.5 324.6L765 323.5L767.5 322.3L770 323L772.5 322.1L775 321.6L777.5 320.7L780 319.5L782.5 319L785 317.6L787.5 318.1L790 317.2L792.5 315.6L795 315.5L797.5 314.2L800 313.8L802.5 313.4L805 312.3L807.5 311.8L810 311.9L812.5 311.2L815 310.4L817.5 309.9L820 308.6L822.5 308.5L825 308L827.5 308L830 306.3L832.5 306.8L835 306.3L837.5 305.8L840 305.3L842.5 305.2L845 305.2L847.5 304.4L850 304.5L852.5 303.8L855 304.5L857.5 303.9L860 304.1L862.5 303.3L865 304L867.5 303.3L870 304L872.5 303.7L875 302.8L877.5 303.3L880 303.2L882.5 303.1L885 303.2L887.5 303L890 304.4L892.5 303.4L895 304.5L897.5 304.5L900 304L902.5 304.2L905 305.2L907.5 304.8L910 304.6L912.5 305.3L915 305.8L917.5 305.2L920 306.4" stroke="#7e7e7e" stroke-opacity="0.8" stroke-width="1.3" fill="none"/><path d="M280 311.5L282.5 312.3L285 311.7L287.5 312.7L290 311.9L292.5 312.1L295 312.7L297.5 312.5L300 313.5L302.5 313.8L305 314.5L307.5 315.4L310 314.6L312.5 315.2L315 316.1L317.5 316.8L320 316.6L322.5 317.7L325 317.7L327.5 318.5L330 318.8L332.5 319.5L335 320.5L337.5 321.5L340 322.1L342.5 322.9L345 322.2L347.5 322.9L350 324.2L352.5 324.5L355 326.3L357.5 326.2L360 327.5L362.5 327.9L365 328.6L367.5 327.9L370 329.8L372.5 330.2L375 329.6L377.5 331.3L380 330.6L382.5 332.3L385 332.4L387.5 332.8L390 332.4L392.5 333.9L395 333.7L397.5 334.6L400 333.7L402.5 334.2L405 334.5L407.5 334.6L410 334L412.5 333.9L415 334.2L417.5 335L420 335.2L422.5 333.6L425 334.3L427.5 333.9L430 333.7L432.5 333.5L435 333.2L437.5 333L440 332.2L442.5 331.5L445 331.2L447.5 330.7L450 329.4L452.5 330.2L455 328.9L457.5 328.2L460 328.2L462.5 327.3L465 326L467.5 325.8L470 324.5L472.5 323.9L475 323.4L477.5 323L480 322.2L482.5 322L485 320.6L487.5 320.9L490 319.5L492.5 318.3L495 318L497.5 318.5L500 317.9L502.5 316.3L505 316.7L507.5 316.4L510 314.9L512.5 313.9L515 313.9L517.5 313.8L520 313.1L522.5 313.5L525 312.1L527.5 313.1L530 312.5L532.5 311.4L535 310.7L537.5 310.6L540 311L542.5 310.6L545 310.7L547.5 310.5L550 309.8L552.5 310.3L555 310L557.5 310.1L560 310.6L562.5 309.6L565 309.4L567.5 310.5L570 310.8L572.5 310.6L575 310.8L577.5 310.8L580 310.7L582.5 309.7L585 309.8L587.5 310.3L590 310.7L592.5 311.6L595 311.2L597.5 310.7L600 311.1L602.5 311.7L605 311.4L607.5 312.7L610 312.7L612.5 312.8L615 313.3L617.5 313.4L620 313.6L622.5 314.2L625 314.4L627.5 314.8L630 315.2L632.5 315.8L635 315.8L637.5 316.6L640 316.7L642.5 317.8L645 318.5L647.5 319.3L650 319.3L652.5 319.8L655 321.1L657.5 321.5L660 321.4L662.5 321.7L665 323L667.5 323.6L670 324.2L672.5 324.9L675 325.4L677.5 326.6L680 326.5L682.5 326.8L685 328.1L687.5 329.2L690 329.3L692.5 329.6L695 330.9L697.5 330.5L700 331.8L702.5 332.6L705 332.6L707.5 332.9L710 332.5L712.5 333.4L715 334.5L717.5 334.2L720 333.8L722.5 334L725 335.3L727.5 335L730 333.9L732.5 334.4L735 335.3L737.5 334L740 335.1L742.5 333.9L745 333.7L747.5 333.5L750 333.4L752.5 332.7L755 333.6L757.5 333L760 331.8L762.5 331.6L765 330.6L767.5 331.2L770 330.6L772.5 328.9L775 329.5L777.5 328.6L780 327.2L782.5 327.4L785 325.9L787.5 326L790 324.3L792.5 323.8L795 324.2L797.5 323.4L800 322.9L802.5 321.4L805 320.4L807.5 320.1L810 320.3L812.5 319L815 318.5L817.5 317.1L820 317.6L822.5 317.2L825 315.9L827.5 315.3L830 314.5L832.5 314.4L835 313.9L837.5 313.6L840 313.9L842.5 312.6L845 312.3L847.5 312.6L850 311.4L852.5 312.3L855 310.8L857.5 311.6L860 311.3L862.5 311.3L865 311.3L867.5 310.6L870 310.8L872.5 310.1L875 309.7L877.5 310L880 310.3L882.5 310.2L885 309.9L887.5 310.4L890 310.6L892.5 310.2L895 310.7L897.5 309.9L900 310.7L902.5 310.2L905 310.4L907.5 311L910 310.9L912.5 311.3L915 310.3L917.5 310.5L920 310.7" stroke="#7e7e7e" stroke-opacity="0.8" stroke-width="1.3" fill="none"/><path d="M280 316.2L282.5 316.7L285 317.7L287.5 317.2L290 318.3L292.5 317L295 317.6L297.5 318.2L300 317.9L302.5 318.6L305 318.9L307.5 319.9L310 320.4L312.5 320.7L315 320.3L317.5 320.7L320 320.8L322.5 322L325 322.3L327.5 323.6L330 324.3L332.5 324.1L335 323.9L337.5 325.1L340 326.7L342.5 326.1L345 327.2L347.5 328L350 328L352.5 329.2L355 330L357.5 330L360 330.9L362.5 331.7L365 333.2L367.5 333L370 333.7L372.5 334.1L375 335.4L377.5 335.6L380 336.7L382.5 336.9L385 337.4L387.5 337.6L390 337.4L392.5 338.2L395 338.5L397.5 339.8L400 339.9L402.5 339.9L405 339.6L407.5 340.2L410 340.3L412.5 341.1L415 340.1L417.5 340.8L420 339.8L422.5 341.2L425 340.6L427.5 339.7L430 340.3L432.5 339.5L435 339.3L437.5 339.7L440 338.2L442.5 338.1L445 339.1L447.5 338.7L450 336.6L452.5 336L455 336L457.5 336.3L460 334.5L462.5 333.9L465 334.2L467.5 332.8L470 333.6L472.5 333L475 331.3L477.5 330.2L480 330.8L482.5 330.3L485 329.1L487.5 329L490 328.5L492.5 326.7L495 325.9L497.5 325.4L500 325.3L502.5 324.5L505 324L507.5 323.6L510 323.1L512.5 322.7L515 322.9L517.5 322.1L520 322.3L522.5 320.9L525 321.2L527.5 320.3L530 320.3L532.5 319.6L535 319.4L537.5 319.6L540 318.8L542.5 318.1L545 318.8L547.5 317.6L550 317.7L552.5 318.1L555 317.9L557.5 317.4L560 317.5L562.5 316.7L565 316.9L567.5 317.4L570 316.4L572.5 315.9L575 316L577.5 315.7L580 316L582.5 315.9L585 316.1L587.5 317.1L590 317.4L592.5 316.7L595 316.9L597.5 317.4L600 317.6L602.5 316.8L605 316.6L607.5 317.2L610 317.2L612.5 318L615 317.8L617.5 317.5L620 318.9L622.5 319.6L625 319.8L627.5 320.1L630 319.2L632.5 320.6L635 320.4L637.5 320.5L640 321.6L642.5 322.2L645 323.3L647.5 322.9L650 323.2L652.5 324.2L655 325.5L657.5 325.6L660 325.8L662.5 326.5L665 327.7L667.5 328.6L670 329.3L672.5 328.5L675 330.2L677.5 329.8L680 331.7L682.5 332.7L685 333.2L687.5 332.8L690 333.9L692.5 334.1L695 334.9L697.5 335.4L700 335.6L702.5 337.3L705 337.4L707.5 338L710 337.8L712.5 338L715 338.8L717.5 339.6L720 340.3L722.5 339.6L725 339.8L727.5 340L730 341.1L732.5 339.8L735 340.6L737.5 341.3L740 340L742.5 340.7L745 340.2L747.5 340.4L750 340.8L752.5 339.8L755 340.4L757.5 338.6L760 338.6L762.5 338.5L765 338.7L767.5 337.2L770 338.2L772.5 336.8L775 336.3L777.5 336.6L780 335.9L782.5 334L785 334.4L787.5 333.6L790 332.7L792.5 332.9L795 331L797.5 331.7L800 329.8L802.5 329.8L805 329.7L807.5 329.3L810 327.5L812.5 326.8L815 326.6L817.5 326.6L820 325.9L822.5 325.3L825 325L827.5 323.2L830 323.2L832.5 322.9L835 323.2L837.5 321.1L840 321.8L842.5 320.6L845 320.7L847.5 319.5L850 319.6L852.5 319.6L855 319.2L857.5 319.1L860 318.2L862.5 318L865 318L867.5 317.6L870 317.4L872.5 316.7L875 317.5L877.5 317.8L880 317.7L882.5 317.6L885 316.4L887.5 317L890 316L892.5 317.2L895 315.9L897.5 316.8L900 316.7L902.5 316.8L905 316.2L907.5 315.7L910 316.9L912.5 316L915 316.6L917.5 316.9L920 316.3" stroke="#7e7e7e" stroke-opacity="0.8" stroke-width="1.3" fill="none"/><path d="M280 321.9L282.5 323.6L285 323.2L287.5 323L290 323.3L292.5 324L295 323L297.5 324.3L300 324.4L302.5 323.9L305 325.8L307.5 326.1L310 326.7L312.5 327.2L315 326.7L317.5 326.7L320 328.6L322.5 328.2L325 328.2L327.5 330.2L330 330.5L332.5 331.7L335 332.4L337.5 332.9L340 332.2L342.5 333.4L345 334.5L347.5 335.4L350 335.1L352.5 336.2L355 336.4L357.5 338.7L360 339.1L362.5 339.1L365 340.3L367.5 341.2L370 341.5L372.5 341.2L375 342.2L377.5 343.3L380 343L382.5 343.5L385 343.9L387.5 345.5L390 346.1L392.5 345.1L395 345.4L397.5 346.4L400 347.3L402.5 347.1L405 347L407.5 346.5L410 347.7L412.5 347.6L415 346.7L417.5 346.7L420 347L422.5 347.4L425 346.8L427.5 346L430 345.7L432.5 345.8L435 345.5L437.5 345.3L440 346L442.5 344.8L445 344L447.5 344.5L450 342.6L452.5 342.3L455 341.5L457.5 340.9L460 340.2L462.5 340.9L465 339.9L467.5 339.4L470 339.4L472.5 337.8L475 337.4L477.5 337.2L480 335.8L482.5 335.9L485 335.1L487.5 333.3L490 334.5L492.5 333.4L495 331.7L497.5 332.7L500 331L502.5 330.9L505 330.9L507.5 329.1L510 328.2L512.5 327.7L515 328.1L517.5 328L520 326.7L522.5 326.4L525 326.5L527.5 325.5L530 325.3L532.5 325.9L535 324.8L537.5 325.8L540 324.7L542.5 325.1L545 324.3L547.5 323.2L550 323.3L552.5 323L555 323.8L557.5 323.2L560 322.3L562.5 323.4L565 323L567.5 322.2L570 322.3L572.5 322.9L575 323.2L577.5 322.7L580 321.4L582.5 322.3L585 322.5L587.5 322.4L590 322.1L592.5 323.2L595 322.2L597.5 322.4L600 322.4L602.5 321.8L605 323.7L607.5 323.3L610 323.1L612.5 323L615 324.5L617.5 323.4L620 324.7L622.5 324.6L625 326L627.5 325.6L630 325.4L632.5 326.4L635 327.3L637.5 326.8L640 328L642.5 327.6L645 328.9L647.5 329L650 329.4L652.5 331L655 332.4L657.5 332.4L660 333.5L662.5 333.3L665 333.7L667.5 335.3L670 334.8L672.5 337.1L675 337.3L677.5 338.5L680 338.2L682.5 339L685 339.3L687.5 340L690 341.3L692.5 342.6L695 343.1L697.5 342.4L700 343.5L702.5 343.2L705 343.6L707.5 345L710 344.7L712.5 346.6L715 346.9L717.5 346L720 346.2L722.5 347.2L725 346.6L727.5 347.6L730 348.1L732.5 347.8L735 347L737.5 346.7L740 346.9L742.5 346.7L745 346.3L747.5 346L750 346.6L752.5 346.7L755 345.8L757.5 344.9L760 344.6L762.5 344.8L765 344.1L767.5 343.8L770 343.5L772.5 343.5L775 342.2L777.5 341.5L780 340.8L782.5 340.5L785 340.4L787.5 339.2L790 338.3L792.5 337.2L795 337.5L797.5 336.9L800 336.2L802.5 335.4L805 335.1L807.5 334.4L810 333.6L812.5 332.1L815 332.9L817.5 332L820 331.3L822.5 330.2L825 330.1L827.5 329.5L830 329.1L832.5 328.7L835 327.9L837.5 327L840 326.5L842.5 326.1L845 326.3L847.5 326.4L850 325.5L852.5 325.2L855 324.6L857.5 325.8L860 324.1L862.5 325L865 324.1L867.5 324L870 323.3L872.5 322.7L875 324L877.5 322.6L880 323L882.5 323.5L885 323.4L887.5 321.8L890 322.2L892.5 323.1L895 323.2L897.5 322L900 322.7L902.5 322.7L905 322.3L907.5 321.6L910 322.9L912.5 321.5L915 323.2L917.5 321.6L920 322.8" stroke="#7e7e7e" stroke-opacity="0.8" stroke-width="1.3" fill="none"/><path d="M280 329.3L282.5 328L285 328.1L287.5 330.3L290 328.9L292.5 331L295 330.3L297.5 330.2L300 330.8L302.5 332.2L305 331.3L307.5 332L310 332.6L312.5 333.4L315 334.3L317.5 335.2L320 334.9L322.5 336L325 336.3L327.5 337.8L330 339.3L332.5 339.1L335 339.3L337.5 341.2L340 342.5L342.5 342.5L345 342.9L347.5 344.5L350 344.9L352.5 346.1L355 345.6L357.5 346.4L360 347.2L362.5 348.7L365 348.5L367.5 349.6L370 351.1L372.5 351.6L375 350.4L377.5 351.2L380 351.3L382.5 353.3L385 352.7L387.5 354L390 354.6L392.5 354.4L395 353.8L397.5 354.8L400 355.2L402.5 355.1L405 354.1L407.5 355.2L410 355.3L412.5 353.4L415 354.4L417.5 354.4L420 354.5L422.5 353.3L425 352.1L427.5 351.8L430 353.1L432.5 352.3L435 351.9L437.5 350.3L440 351.1L442.5 350.5L445 349.1L447.5 348.4L450 348.5L452.5 346.9L455 347.5L457.5 345.3L460 344.7L462.5 344.2L465 343.4L467.5 342.7L470 342.7L472.5 342L475 341.6L477.5 341.7L480 340.9L482.5 339.1L485 339.2L487.5 338L490 338.3L492.5 336.2L495 336.8L497.5 336.3L500 335.5L502.5 335.5L505 334.1L507.5 333.9L510 332.7L512.5 333L515 331.9L517.5 331.3L520 332L522.5 332.4L525 330.6L527.5 330.4L530 330.2L532.5 330.8L535 329.3L537.5 329.6L540 330.3L542.5 329.4L545 328.4L547.5 328.2L550 328.2L552.5 328.3L555 327.5L557.5 328.4L560 327.7L562.5 327.8L565 327L567.5 327.7L570 328.1L572.5 327L575 327.9L577.5 327.5L580 327.4L582.5 327.4L585 327.3L587.5 327.9L590 327.3L592.5 327.6L595 328.8L597.5 329.2L600 329.3L602.5 329.3L605 329.3L607.5 328.5L610 330.1L612.5 329.7L615 329.7L617.5 330.3L620 331.6L622.5 332L625 332.4L627.5 331.8L630 332.9L632.5 334.5L635 335.3L637.5 334.9L640 336L642.5 336L645 337.2L647.5 337.6L650 339L652.5 339.4L655 339.9L657.5 341.5L660 340.9L662.5 341.7L665 343.4L667.5 344.6L670 345.4L672.5 345L675 345.7L677.5 346.4L680 347.5L682.5 348.2L685 348L687.5 349.8L690 349.5L692.5 351L695 351.2L697.5 350.8L700 351.2L702.5 353.3L705 352.7L707.5 352.7L710 353.6L712.5 353.5L715 354.3L717.5 355.1L720 354L722.5 355.4L725 354.6L727.5 354.7L730 353.8L732.5 354.2L735 353.4L737.5 353.1L740 353.4L742.5 353.3L745 353.2L747.5 351.9L750 352.8L752.5 351.8L755 351.9L757.5 351.3L760 350.4L762.5 350L765 349L767.5 349.1L770 347.4L772.5 347.2L775 346.5L777.5 346.2L780 346L782.5 344.8L785 344.8L787.5 342.7L790 343.7L792.5 342.2L795 341.4L797.5 341.3L800 340.6L802.5 339L805 339.2L807.5 338.8L810 337.4L812.5 336.6L815 337.3L817.5 337L820 336L822.5 335L825 334.1L827.5 333.6L830 334.3L832.5 333.3L835 332.6L837.5 331.4L840 331.9L842.5 332.5L845 330.4L847.5 331.4L850 329.5L852.5 330.3L855 330.3L857.5 329.9L860 329L862.5 329.7L865 328L867.5 329.6L870 329.1L872.5 328.5L875 327.6L877.5 327.6L880 327.7L882.5 328.5L885 327.1L887.5 328.2L890 326.8L892.5 326.9L895 327.8L897.5 327.3L900 327L902.5 326.7L905 327.6L907.5 327.6L910 328.6L912.5 327L915 327.5L917.5 327.9L920 328.8" stroke="#7e7e7e" stroke-opacity="0.8" stroke-width="1.3" fill="none"/><path d="M280 335.1L282.5 336L285 336.1L287.5 335.5L290 335.7L292.5 336.6L295 337.1L297.5 338.1L300 337.5L302.5 339.7L305 338.7L307.5 340.3L310 341.4L312.5 341.4L315 342.4L317.5 343.9L320 344.3L322.5 344.3L325 346.1L327.5 347.3L330 348L332.5 347.8L335 348L337.5 349.1L340 350.3L342.5 351.5L345 351.7L347.5 353.7L350 354L352.5 355.6L355 354.4L357.5 356.6L360 355.8L362.5 356.2L365 357.5L367.5 358.4L370 359.7L372.5 360L375 359.8L377.5 361.3L380 360.3L382.5 361.9L385 360.4L387.5 361.1L390 360.5L392.5 361.5L395 361.4L397.5 360.9L400 360.9L402.5 362.4L405 361.1L407.5 360.6L410 361.5L412.5 361.2L415 360.1L417.5 360.3L420 360.4L422.5 358.3L425 358.5L427.5 359.2L430 357L432.5 356.2L435 356.9L437.5 355L440 355.4L442.5 354.8L445 353.5L447.5 353.2L450 352.7L452.5 351.7L455 350.4L457.5 350.2L460 349.9L462.5 349.9L465 347.4L467.5 347.5L470 346.5L472.5 347.3L475 345.8L477.5 344.3L480 343.5L482.5 344L485 342.7L487.5 342.1L490 342.4L492.5 342.2L495 339.8L497.5 340.4L500 338.7L502.5 340.4L505 338.8L507.5 338.8L510 338.4L512.5 338.5L515 336.7L517.5 337.7L520 335.6L522.5 336.5L525 334.9L527.5 336.2L530 334.4L532.5 334.3L535 334.2L537.5 334.1L540 334.1L542.5 333.3L545 334.3L547.5 333.4L550 334.4L552.5 333.9L555 332.6L557.5 332.7L560 332.5L562.5 333.4L565 332L567.5 331.8L570 332.3L572.5 332.8L575 333.7L577.5 332.6L580 333.4L582.5 334L585 333.9L587.5 334.2L590 333.2L592.5 334L595 334.2L597.5 335.3L600 333.9L602.5 335.8L605 335.2L607.5 335.5L610 335.9L612.5 337.9L615 337.8L617.5 337.4L620 339.1L622.5 340.1L625 340.6L627.5 340.8L630 341L632.5 341.3L635 342.7L637.5 344.4L640 343.6L642.5 344.3L645 346.2L647.5 346.4L650 346.5L652.5 347.7L655 350.1L657.5 349.2L660 351.6L662.5 351L665 352.9L667.5 352.6L670 354.5L672.5 354.2L675 354.8L677.5 355.7L680 356.6L682.5 357L685 357.8L687.5 359.4L690 358.8L692.5 358.8L695 360.8L697.5 359.3L700 360.6L702.5 360.9L705 362L707.5 360.9L710 362L712.5 360.6L715 360.5L717.5 362L720 360.9L722.5 361.9L725 361.4L727.5 361L730 360.5L732.5 361.1L735 359.6L737.5 359.4L740 359.8L742.5 359.9L745 357.8L747.5 358.7L750 356.7L752.5 356L755 356.9L757.5 355.9L760 355.2L762.5 355.3L765 353.7L767.5 353.8L770 353.1L772.5 351.8L775 351.3L777.5 350.4L780 350.1L782.5 347.9L785 347.8L787.5 347.4L790 346.7L792.5 345.8L795 344.9L797.5 344.4L800 344L802.5 343L805 343.4L807.5 343.5L810 341.3L812.5 342.4L815 341.8L817.5 340.4L820 340.6L822.5 338.5L825 338L827.5 339L830 339.1L832.5 337.9L835 338.1L837.5 337.8L840 337.4L842.5 336.1L845 336.6L847.5 335.3L850 335.2L852.5 335L855 335.6L857.5 335L860 333.1L862.5 333.6L865 333.8L867.5 332.6L870 333.8L872.5 334.1L875 332.6L877.5 333.6L880 332.1L882.5 333.9L885 332.8L887.5 332.5L890 333.3L892.5 333.9L895 332.7L897.5 333.5L900 333.3L902.5 332.5L905 333.7L907.5 334.4L910 334.7L912.5 333.1L915 335L917.5 334.6L920 335.7" stroke="#7e7e7e" stroke-opacity="0.8" stroke-width="1.3" fill="none"/><path d="M280 340.4L282.5 342.5L285 343L287.5 342.3L290 344.3L292.5 344.2L295 343.9L297.5 346.9L300 345.8L302.5 346.9L305 347.1L307.5 349.2L310 349.6L312.5 351.6L315 352.4L317.5 351.7L320 354.2L322.5 353.7L325 354.5L327.5 356.5L330 357.5L332.5 358.5L335 358.4L337.5 359.6L340 359.2L342.5 360.2L345 361.7L347.5 362.4L350 363.3L352.5 364.2L355 364.2L357.5 366L360 365.1L362.5 366.1L365 367.6L367.5 367.7L370 368.5L372.5 368.8L375 367.6L377.5 367.2L380 367.4L382.5 368.9L385 368.4L387.5 369.1L390 369L392.5 368.4L395 368.9L397.5 368.9L400 368.6L402.5 368L405 367.8L407.5 367.8L410 367.2L412.5 365.4L415 366.9L417.5 365.7L420 364.4L422.5 363.8L425 363.5L427.5 362.4L430 362.6L432.5 360.8L435 361.6L437.5 360.9L440 358.7L442.5 358.4L445 358.8L447.5 356.4L450 356.9L452.5 356.6L455 353.9L457.5 353.5L460 354.4L462.5 353.3L465 352.7L467.5 351.8L470 349.8L472.5 349.9L475 349.9L477.5 348.4L480 347.5L482.5 348.1L485 346.2L487.5 346.2L490 345.3L492.5 345.6L495 345.8L497.5 345L500 344.5L502.5 343L505 344.2L507.5 343.7L510 341.3L512.5 342.8L515 341.1L517.5 340.6L520 341.8L522.5 340L525 341.4L527.5 341L530 339.4L532.5 339.8L535 338.5L537.5 340.1L540 339.5L542.5 339.3L545 339.4L547.5 339L550 337.2L552.5 338.8L555 338.2L557.5 339.1L560 338.1L562.5 338.1L565 337L567.5 337.1L570 337.5L572.5 339.3L575 337.3L577.5 337.6L580 338.8L582.5 339.4L585 340.2L587.5 340.3L590 340.4L592.5 340L595 340.8L597.5 341.9L600 340.8L602.5 341.3L605 342.2L607.5 344.2L610 343.6L612.5 343.6L615 344.7L617.5 345.6L620 346.6L622.5 347.3L625 347.4L627.5 349.4L630 348.5L632.5 351.6L635 351.2L637.5 352.7L640 353.5L642.5 354.2L645 355.2L647.5 356.1L650 355.8L652.5 357.9L655 359.1L657.5 359.2L660 361.1L662.5 361.6L665 361.2L667.5 361.3L670 363.6L672.5 362.7L675 364L677.5 364.3L680 366.6L682.5 366L685 367.5L687.5 366.6L690 367.6L692.5 368.7L695 368.9L697.5 367.9L700 369L702.5 368.6L705 367.9L707.5 367.7L710 367.7L712.5 368.9L715 368.2L717.5 368.8L720 367.9L722.5 367.8L725 368.4L727.5 366.3L730 365.5L732.5 365.2L735 364.6L737.5 364.9L740 364.9L742.5 365.2L745 364.1L747.5 363.1L750 363.2L752.5 361L755 360.2L757.5 359L760 359.3L762.5 358.8L765 358.9L767.5 356.5L770 357.4L772.5 354.7L775 355.7L777.5 353.2L780 354.7L782.5 352.5L785 352.8L787.5 350.7L790 350.2L792.5 350.9L795 350.2L797.5 349.5L800 347.2L802.5 347.2L805 347.4L807.5 346L810 346.3L812.5 345.7L815 344L817.5 343.5L820 344.6L822.5 343.2L825 343.8L827.5 341.8L830 341.6L832.5 342.1L835 340.6L837.5 342.3L840 342L842.5 339.8L845 341.3L847.5 340.3L850 340.9L852.5 340.7L855 339.4L857.5 339L860 337.9L862.5 339.4L865 338L867.5 339.2L870 338.7L872.5 337.8L875 338.5L877.5 338.4L880 338.2L882.5 337.3L885 338.5L887.5 337.8L890 339.1L892.5 337.4L895 338.7L897.5 338.7L900 337.5L902.5 339.7L905 339.3L907.5 339.7L910 340.3L912.5 339.7L915 340.8L917.5 341.8L920 342.5" stroke="#7e7e7e" stroke-opacity="0.8" stroke-width="1.3" fill="none"/><path d="M280 348.8L282.5 350.7L285 350.6L287.5 351.4L290 350.9L292.5 353.6L295 352.2L297.5 354.2L300 356L302.5 356.5L305 356.2L307.5 357.6L310 358.5L312.5 359L315 361.6L317.5 361.6L320 362.3L322.5 363.1L325 364.7L327.5 365.6L330 367.1L332.5 367L335 368L337.5 367.5L340 370.4L342.5 371.3L345 371L347.5 372.4L350 372.7L352.5 372.8L355 373.8L357.5 373.5L360 375.1L362.5 375.4L365 375L367.5 375.5L370 374.7L372.5 375.8L375 375.6L377.5 375.2L380 375.8L382.5 375.8L385 374.8L387.5 374.3L390 374.6L392.5 374.2L395 373.8L397.5 374.7L400 374.1L402.5 374.6L405 372.4L407.5 371.7L410 373L412.5 371.7L415 369.9L417.5 370.1L420 368.1L422.5 368.4L425 367.9L427.5 365.9L430 366.6L432.5 366.7L435 366.1L437.5 365.1L440 363.4L442.5 362.3L445 361.6L447.5 360L450 359.4L452.5 358.8L455 359.6L457.5 357.3L460 357.5L462.5 355.6L465 357.4L467.5 355.2L470 354.9L472.5 353.9L475 354.3L477.5 352.3L480 353L482.5 352L485 351.4L487.5 351L490 351.2L492.5 350.9L495 349.3L497.5 348.6L500 349.1L502.5 348.2L505 348.9L507.5 347.3L510 347.6L512.5 347.5L515 345.1L517.5 346.6L520 344.2L522.5 344.5L525 344.3L527.5 343.4L530 345.5L532.5 345.4L535 344.6L537.5 344L540 344.1L542.5 342.3L545 342.5L547.5 342.5L550 342.3L552.5 343.3L555 342L557.5 344L560 342L562.5 343.3L565 344.2L567.5 342.9L570 343.1L572.5 344.9L575 343L577.5 343.8L580 345.6L582.5 344.3L585 344.7L587.5 345L590 346.4L592.5 347.6L595 346.9L597.5 348.4L600 348.2L602.5 349.4L605 350.8L607.5 350.2L610 351.8L612.5 353.3L615 354.6L617.5 354.6L620 355.4L622.5 355.1L625 357.6L627.5 358.2L630 359.4L632.5 360.7L635 360.6L637.5 362.6L640 362.4L642.5 362.2L645 364.6L647.5 364.2L650 367.1L652.5 367.6L655 368.9L657.5 369.9L660 370.5L662.5 369.4L665 371.9L667.5 372.6L670 373.4L672.5 373.3L675 372.4L677.5 374.4L680 375.2L682.5 374.1L685 375.7L687.5 374.7L690 376.6L692.5 376.4L695 375.9L697.5 377L700 376.1L702.5 375.5L705 374.8L707.5 376.1L710 375.4L712.5 375.4L715 374L717.5 374.1L720 373.5L722.5 373.6L725 373.4L727.5 371.1L730 371.1L732.5 370.3L735 369.3L737.5 370.7L740 369.1L742.5 367.3L745 368.6L747.5 367.4L750 367.6L752.5 365.6L755 364.1L757.5 363.5L760 362.7L762.5 363.1L765 363L767.5 360.5L770 360.8L772.5 359.9L775 360L777.5 359.2L780 358.7L782.5 357.2L785 356.8L787.5 354.4L790 354.8L792.5 353.1L795 354.6L797.5 352.4L800 351.7L802.5 352.9L805 350.8L807.5 350.2L810 351.5L812.5 350.7L815 350.5L817.5 349.2L820 348.8L822.5 349.3L825 347L827.5 347.6L830 347.4L832.5 346.1L835 346.5L837.5 346.9L840 345.3L842.5 346.2L845 345.3L847.5 345.7L850 345.5L852.5 345.1L855 344L857.5 344L860 343.8L862.5 342.5L865 343.8L867.5 344.4L870 343.8L872.5 342.7L875 344.2L877.5 344.2L880 342.8L882.5 343.7L885 344.2L887.5 344.4L890 344.7L892.5 344.6L895 343.8L897.5 344.1L900 345.3L902.5 344.2L905 346.5L907.5 347L910 347.2L912.5 346.2L915 347.2L917.5 348.5L920 349.7" stroke="#7e7e7e" stroke-opacity="0.8" stroke-width="1.3" fill="none"/><path d="M280 355.8L282.5 357.5L285 357.3L287.5 358.4L290 360.7L292.5 360.9L295 362.1L297.5 362.2L300 365.3L302.5 365.8L305 366.2L307.5 367.4L310 367.4L312.5 369.5L315 370.9L317.5 370.4L320 371.2L322.5 373.1L325 373L327.5 374.6L330 375.1L332.5 375.3L335 376.8L337.5 378.9L340 378.8L342.5 378.5L345 378.7L347.5 379.3L350 382.2L352.5 382L355 382L357.5 382.1L360 383.2L362.5 381.4L365 383.3L367.5 383.6L370 382.1L372.5 383.3L375 382.1L377.5 382.8L380 381.5L382.5 381.1L385 382.9L387.5 380.5L390 380.2L392.5 379.8L395 380L397.5 378.6L400 377.6L402.5 377.9L405 377.5L407.5 375.6L410 377.6L412.5 374.5L415 374.9L417.5 375.4L420 374.2L422.5 373.7L425 373L427.5 371.5L430 370.4L432.5 369.7L435 368.1L437.5 369.1L440 367.1L442.5 367L445 364.8L447.5 363.8L450 364.3L452.5 364.8L455 362.6L457.5 361.4L460 361.2L462.5 362L465 359.4L467.5 359.2L470 359.4L472.5 357.6L475 357.6L477.5 356.3L480 357.4L482.5 354.9L485 354.5L487.5 354.8L490 355.2L492.5 354.8L495 354.8L497.5 353L500 351.7L502.5 352.4L505 352.6L507.5 351.5L510 351.7L512.5 350.8L515 350.6L517.5 351.3L520 349.6L522.5 349.7L525 349.3L527.5 350.5L530 350.1L532.5 348.4L535 348.5L537.5 348.1L540 347.3L542.5 348.1L545 348.5L547.5 347.9L550 348.3L552.5 347.4L555 349.5L557.5 349.1L560 347.4L562.5 348.4L565 349.7L567.5 350.5L570 350L572.5 349L575 350.6L577.5 349.8L580 350.5L582.5 351.4L585 353L587.5 352.8L590 352.9L592.5 354.6L595 356L597.5 355.4L600 357.7L602.5 356.4L605 358.6L607.5 358.2L610 361L612.5 360.6L615 363.4L617.5 364.2L620 364L622.5 364L625 365.3L627.5 368.5L630 368.2L632.5 370.2L635 371.4L637.5 370.6L640 372.7L642.5 373.2L645 374.2L647.5 374.5L650 375.5L652.5 377.8L655 377.9L657.5 378L660 378.4L662.5 379.1L665 379.8L667.5 380.9L670 381.2L672.5 382L675 382.5L677.5 381.1L680 382.9L682.5 382.7L685 382.5L687.5 383.4L690 384L692.5 382.9L695 381.9L697.5 381.3L700 382.4L702.5 381.2L705 381.8L707.5 382.6L710 381.9L712.5 379.5L715 379.1L717.5 379.7L720 377.9L722.5 377.3L725 376.9L727.5 376.9L730 376.3L732.5 374.9L735 373.8L737.5 374.3L740 372.5L742.5 372L745 373L747.5 372.4L750 369L752.5 370.4L755 369.2L757.5 369.2L760 367.7L762.5 365.9L765 365.8L767.5 365L770 364.8L772.5 363.4L775 362.9L777.5 363L780 361.8L782.5 361L785 361.1L787.5 359.3L790 358.2L792.5 357.3L795 357.8L797.5 356.6L800 357.4L802.5 356L805 354.5L807.5 354.7L810 354.9L812.5 354.9L815 354.1L817.5 352.1L820 353.4L822.5 352.6L825 352.6L827.5 351.6L830 352.4L832.5 351L835 350.5L837.5 351.4L840 350.1L842.5 350.2L845 350L847.5 350.2L850 349.6L852.5 348.1L855 348L857.5 347.7L860 348.8L862.5 349L865 349.4L867.5 347.9L870 349.2L872.5 348.7L875 347.4L877.5 349.1L880 350L882.5 347.7L885 349.9L887.5 349.1L890 350.1L892.5 349L895 351.3L897.5 351.4L900 350.6L902.5 351.9L905 353.6L907.5 353.5L910 353.5L912.5 353.8L915 356.6L917.5 354.8L920 358.2" stroke="#7e7e7e" stroke-opacity="0.8" stroke-width="1.3" fill="none"/><path d="M280 367L282.5 367.6L285 368.4L287.5 367.4L290 369.5L292.5 371.3L295 370.6L297.5 371.5L300 373.9L302.5 375.8L305 374.9L307.5 376.6L310 376.7L312.5 377.9L315 379.4L317.5 380.5L320 383.1L322.5 382.7L325 382.2L327.5 384.6L330 385.7L332.5 384.7L335 386.5L337.5 386.8L340 388.2L342.5 387L345 388.2L347.5 388.8L350 390.3L352.5 388.7L355 389L357.5 390.5L360 389L362.5 391L365 388.6L367.5 390.3L370 387.9L372.5 389.9L375 389.4L377.5 388.4L380 387.3L382.5 386.1L385 386.6L387.5 387L390 385.1L392.5 384.8L395 385.8L397.5 385.4L400 383.9L402.5 383.7L405 382.6L407.5 380.6L410 379.2L412.5 380.1L415 378.2L417.5 379.4L420 376.9L422.5 375.1L425 376.1L427.5 374.7L430 375.1L432.5 372L435 371.8L437.5 371.2L440 370.6L442.5 369.4L445 368.5L447.5 367.8L450 368.3L452.5 366.1L455 366.4L457.5 364.7L460 364.5L462.5 364L465 363.9L467.5 363.1L470 364.1L472.5 361.9L475 361.8L477.5 361.9L480 360.6L482.5 360.1L485 360.6L487.5 359.3L490 357.3L492.5 358L495 357.2L497.5 356L500 357.2L502.5 356.9L505 355.3L507.5 355.6L510 354.2L512.5 354.4L515 354.9L517.5 355L520 355.1L522.5 352.9L525 353.1L527.5 353.4L530 352.4L532.5 352.8L535 352.4L537.5 352.2L540 354.4L542.5 351.9L545 353L547.5 354.3L550 354.9L552.5 355L555 353.3L557.5 355.5L560 355.3L562.5 354.2L565 355.2L567.5 355.3L570 356.7L572.5 355.7L575 358.8L577.5 357.6L580 359.2L582.5 358.5L585 361L587.5 361.8L590 360.6L592.5 362.9L595 363.6L597.5 365.1L600 366.8L602.5 367L605 366.8L607.5 369.3L610 368.5L612.5 371.7L615 371.4L617.5 373.5L620 374.3L622.5 373.8L625 376.8L627.5 377.2L630 376.8L632.5 380.2L635 379L637.5 379.7L640 382.9L642.5 384L645 384.8L647.5 383.3L650 386.3L652.5 385.7L655 387.4L657.5 388.1L660 386.9L662.5 387.3L665 389.4L667.5 388.7L670 390.3L672.5 388.8L675 390.8L677.5 389.2L680 388.7L682.5 388.6L685 388.7L687.5 389.2L690 389.2L692.5 388.1L695 388.6L697.5 389.2L700 388.7L702.5 386.3L705 385.6L707.5 387L710 387L712.5 384.5L715 385.5L717.5 383.1L720 384.1L722.5 383.3L725 380.8L727.5 382.4L730 380L732.5 378.4L735 379.9L737.5 377.8L740 377.8L742.5 376.5L745 375.6L747.5 373.9L750 375.4L752.5 371.9L755 371L757.5 372L760 370.6L762.5 371.4L765 368.8L767.5 367.3L770 367.7L772.5 368.5L775 367.5L777.5 366.3L780 366L782.5 365.9L785 364.4L787.5 364.4L790 364.1L792.5 361.3L795 362.2L797.5 361.5L800 360.4L802.5 360.2L805 360.6L807.5 359.4L810 359.7L812.5 357.7L815 357.7L817.5 358.1L820 355.9L822.5 357.5L825 356.4L827.5 355.2L830 355.5L832.5 354.9L835 354.6L837.5 353.2L840 353.5L842.5 355L845 354.4L847.5 353.6L850 354.1L852.5 352.9L855 352.9L857.5 352.9L860 352.8L862.5 354.2L865 352.7L867.5 352.6L870 352.5L872.5 353.2L875 353.1L877.5 354.9L880 356L882.5 353.9L885 354.5L887.5 356.2L890 356.6L892.5 357.8L895 358.4L897.5 356.8L900 359.2L902.5 360.6L905 359.8L907.5 361.6L910 361.9L912.5 362.3L915 363.2L917.5 365.5L920 365.9" stroke="#7e7e7e" stroke-opacity="0.8" stroke-width="1.3" fill="none"/><path d="M280 374.5L282.5 375.2L285 376.4L287.5 377.6L290 379.1L292.5 381.7L295 383L297.5 382L300 383.1L302.5 386.3L305 387.3L307.5 386.8L310 389.3L312.5 388.1L315 390.5L317.5 391.6L320 390.7L322.5 392L325 392L327.5 392.5L330 395.4L332.5 395.7L335 395.5L337.5 395.3L340 396L342.5 396.3L345 394.8L347.5 397L350 395.9L352.5 395.9L355 397.7L357.5 396.6L360 395.9L362.5 397.2L365 394.2L367.5 395.6L370 395.4L372.5 394.4L375 394.7L377.5 392.8L380 393.1L382.5 392.7L385 390.5L387.5 391.1L390 390.4L392.5 388.8L395 389.6L397.5 386.7L400 388.5L402.5 385.8L405 385.1L407.5 384.2L410 384.9L412.5 383.3L415 383.3L417.5 381.9L420 380.6L422.5 379L425 377.8L427.5 377.3L430 376.6L432.5 376.8L435 375.1L437.5 376.2L440 376.1L442.5 372.8L445 374.5L447.5 371.3L450 371.8L452.5 372.3L455 370.4L457.5 368.8L460 370.2L462.5 367.6L465 367.7L467.5 366.3L470 367.3L472.5 365.1L475 366.5L477.5 364.5L480 364.5L482.5 364.8L485 364.4L487.5 362.7L490 364.1L492.5 362.8L495 361.2L497.5 360.2L500 360.3L502.5 361.6L505 359.3L507.5 361.4L510 358.7L512.5 360.1L515 358.6L517.5 357.9L520 357.4L522.5 357.8L525 357.9L527.5 357.7L530 358.6L532.5 357.2L535 359.5L537.5 357.1L540 357.7L542.5 359.8L545 360.1L547.5 359.4L550 358.3L552.5 361L555 360.8L557.5 361.2L560 361.2L562.5 361.8L565 361.2L567.5 364.2L570 362.7L572.5 364.7L575 365.3L577.5 365.4L580 367.4L582.5 367.1L585 369L587.5 371L590 372.1L592.5 373.3L595 373.6L597.5 374L600 375.8L602.5 377.7L605 376.1L607.5 378.1L610 379.9L612.5 381.5L615 382L617.5 382.2L620 382.6L622.5 386.3L625 386.2L627.5 388.2L630 388.4L632.5 388.1L635 390L637.5 392.1L640 390.8L642.5 392.1L645 391.8L647.5 392.6L650 392.9L652.5 394.6L655 394.3L657.5 394.2L660 395.1L662.5 396.8L665 395.5L667.5 396.6L670 397L672.5 395.1L675 395L677.5 395.2L680 396.7L682.5 397.4L685 394.7L687.5 395.5L690 396.3L692.5 394.3L695 395.5L697.5 393.5L700 393.3L702.5 393L705 391.6L707.5 389.8L710 390L712.5 390.2L715 388L717.5 387.2L720 386L722.5 387.7L725 385.7L727.5 385.3L730 384.7L732.5 382.7L735 382.6L737.5 382.3L740 381.3L742.5 379L745 377.9L747.5 379.3L750 378.6L752.5 377.3L755 375.6L757.5 373.9L760 375.6L762.5 375.3L765 372.8L767.5 373.4L770 370.5L772.5 371.5L775 369.8L777.5 370L780 368.1L782.5 368.1L785 369.1L787.5 366.5L790 366.8L792.5 367L795 366.7L797.5 366.4L800 365L802.5 363.3L805 362.5L807.5 363L810 361.8L812.5 361.8L815 362.2L817.5 360.6L820 361.7L822.5 359.2L825 360.3L827.5 360L830 360.1L832.5 360.7L835 358.2L837.5 358.9L840 357.8L842.5 357.9L845 357.8L847.5 359.3L850 358L852.5 357.2L855 357.7L857.5 358.1L860 359.8L862.5 357.6L865 358.5L867.5 359.6L870 359.3L872.5 361.2L875 359.4L877.5 360.6L880 360L882.5 362.8L885 361L887.5 363.7L890 365.3L892.5 365.8L895 366.7L897.5 366.4L900 368.1L902.5 367.4L905 369.8L907.5 369.7L910 370.3L912.5 373L915 372.4L917.5 373.1L920 375.1" stroke="#7e7e7e" stroke-opacity="0.8" stroke-width="1.3" fill="none"/><path d="M280 386L282.5 384.8L285 388L287.5 387.9L290 389.1L292.5 390.2L295 390.4L297.5 394.3L300 394.3L302.5 396.5L305 396L307.5 398.1L310 396.5L312.5 398L315 400.6L317.5 399.1L320 399.3L322.5 402.6L325 401.9L327.5 401.1L330 401L332.5 402.3L335 404.1L337.5 402.4L340 403L342.5 403.2L345 402L347.5 403.5L350 404.4L352.5 403.1L355 402L357.5 402.3L360 401.8L362.5 400.7L365 402.2L367.5 400.9L370 400.5L372.5 397.9L375 398.7L377.5 396.7L380 398L382.5 395.2L385 396.8L387.5 394.9L390 395.1L392.5 393.6L395 393.6L397.5 393.3L400 391.6L402.5 390.5L405 388.1L407.5 388.1L410 389.1L412.5 388.1L415 385.9L417.5 384.5L420 385.5L422.5 382.2L425 382.9L427.5 382L430 382.8L432.5 380.7L435 379.3L437.5 379.7L440 379.7L442.5 377.3L445 375.7L447.5 375.9L450 376.5L452.5 373.7L455 374.7L457.5 373.9L460 373.8L462.5 373.1L465 371.3L467.5 370.4L470 370.3L472.5 369.1L475 368.5L477.5 368.8L480 368.5L482.5 368.4L485 368.4L487.5 367.6L490 367.2L492.5 366.3L495 364.8L497.5 365.7L500 364L502.5 364.6L505 363.1L507.5 365.3L510 365L512.5 365.1L515 364.1L517.5 362.3L520 362.3L522.5 362.7L525 363.7L527.5 364.6L530 364.5L532.5 364.7L535 365.2L537.5 365.4L540 364.3L542.5 366L545 364.2L547.5 365.7L550 367.6L552.5 365.7L555 367.2L557.5 367.3L560 368.4L562.5 369.3L565 369.3L567.5 371.5L570 371L572.5 373.4L575 374.3L577.5 373.6L580 375.3L582.5 378.3L585 379L587.5 379L590 379.7L592.5 382.9L595 383.7L597.5 382.9L600 384.5L602.5 387L605 388.9L607.5 389.5L610 391.2L612.5 391.2L615 393.4L617.5 394.1L620 392.6L622.5 393.8L625 395.5L627.5 396.5L630 396.6L632.5 398.5L635 400.4L637.5 399.8L640 400.8L642.5 402.4L645 403.2L647.5 401.1L650 403.6L652.5 403.2L655 403.1L657.5 402.2L660 402.2L662.5 403.3L665 404.5L667.5 403.6L670 404.5L672.5 402.1L675 402.6L677.5 402.3L680 403.2L682.5 401.2L685 400.6L687.5 399.8L690 400.8L692.5 399L695 400.1L697.5 397.7L700 398.2L702.5 395.7L705 396.1L707.5 394.2L710 395.8L712.5 393.1L715 392.6L717.5 391.5L720 391.7L722.5 388.8L725 389.7L727.5 389.3L730 389.2L732.5 388.3L735 385.4L737.5 384L740 384.7L742.5 382.6L745 384L747.5 383.3L750 379.8L752.5 380.2L755 379.3L757.5 380.5L760 377.7L762.5 378.8L765 375.6L767.5 377.1L770 374.5L772.5 374.9L775 375.5L777.5 372.5L780 371.4L782.5 373.2L785 371.6L787.5 372.5L790 371.3L792.5 370.6L795 368.2L797.5 370.3L800 368.6L802.5 367.6L805 366L807.5 365.6L810 367.5L812.5 367.7L815 365.6L817.5 366.4L820 364.9L822.5 365L825 363.3L827.5 365.4L830 363.9L832.5 362.6L835 362.4L837.5 363L840 361.9L842.5 361.8L845 362.8L847.5 362.7L850 362.3L852.5 365L855 362.6L857.5 365.1L860 363.6L862.5 363.6L865 365.2L867.5 365.4L870 365.9L872.5 365.2L875 367.9L877.5 367.1L880 369.4L882.5 369.1L885 368.7L887.5 371.1L890 372.1L892.5 373.8L895 373.7L897.5 374.4L900 375.3L902.5 378.5L905 377.9L907.5 380.4L910 381L912.5 381.9L915 383.4L917.5 384L920 384.3" stroke="#7e7e7e" stroke-opacity="0.8" stroke-width="1.3" fill="none"/><path d="M280 396.3L282.5 398.2L285 397.6L287.5 399.9L290 400.5L292.5 401.5L295 403.1L297.5 404L300 405.2L302.5 404.2L305 407.2L307.5 405L310 406.9L312.5 407.5L315 407.4L317.5 407.4L320 408L322.5 409L325 409.8L327.5 410.9L330 410.8L332.5 411.6L335 410.4L337.5 410.8L340 411.5L342.5 410.9L345 408.1L347.5 409.4L350 408.5L352.5 410.2L355 408.8L357.5 408.1L360 408.3L362.5 405.4L365 406.8L367.5 403.9L370 404.3L372.5 404.3L375 402.5L377.5 403.4L380 400.8L382.5 402.2L385 400.8L387.5 399.6L390 398.7L392.5 398.2L395 396L397.5 396.3L400 395L402.5 395.1L405 392.8L407.5 390.6L410 390.4L412.5 390.6L415 388.4L417.5 389.8L420 389.5L422.5 386.3L425 386.8L427.5 386.8L430 386.2L432.5 385.1L435 383.5L437.5 382.1L440 382.9L442.5 380L445 379.5L447.5 378.8L450 380.4L452.5 377.8L455 378L457.5 378.3L460 375L462.5 376.7L465 373.7L467.5 374.1L470 373.1L472.5 375.2L475 372.3L477.5 372.1L480 372.6L482.5 373.1L485 370.8L487.5 370L490 369.7L492.5 368.5L495 368.2L497.5 369.1L500 368.8L502.5 369.7L505 367L507.5 368.7L510 366.7L512.5 367.8L515 369.9L517.5 369L520 366.7L522.5 369.7L525 370.2L527.5 368.1L530 368.5L532.5 368.1L535 370.6L537.5 371.6L540 372.1L542.5 371.8L545 372.2L547.5 373.4L550 371.9L552.5 375.2L555 375.6L557.5 375.9L560 375.6L562.5 378.3L565 377.5L567.5 379.6L570 381.9L572.5 383.3L575 382.3L577.5 383.8L580 385.7L582.5 386.9L585 387.3L587.5 388.2L590 391.8L592.5 391.4L595 391.7L597.5 394.3L600 394.7L602.5 395.2L605 398.3L607.5 397.8L610 401L612.5 400.8L615 402L617.5 404.2L620 403.2L622.5 405.9L625 406.2L627.5 404.8L630 406.1L632.5 406L635 409.8L637.5 407.5L640 409.3L642.5 408L645 408.2L647.5 408.4L650 411.6L652.5 410.1L655 410.3L657.5 409L660 408.9L662.5 410.3L665 409.2L667.5 410.7L670 409.5L672.5 408.7L675 409L677.5 408.4L680 405.9L682.5 407.5L685 404.6L687.5 405.1L690 406L692.5 404.1L695 401.8L697.5 402.8L700 402.2L702.5 400.2L705 400.9L707.5 397.4L710 398.9L712.5 397.8L715 395L717.5 395.8L720 395.3L722.5 395.4L725 393.4L727.5 391.8L730 390.3L732.5 390.6L735 388.1L737.5 389.2L740 387.7L742.5 386.4L745 385.7L747.5 385.3L750 385.8L752.5 382.8L755 382.8L757.5 381L760 382.1L762.5 380L765 379.3L767.5 381.2L770 379.2L772.5 377.7L775 378.1L777.5 378L780 376L782.5 377.5L785 374.6L787.5 374.9L790 373L792.5 372.4L795 372.2L797.5 372.5L800 370.9L802.5 371.7L805 372.2L807.5 370.4L810 371.6L812.5 370.1L815 371.2L817.5 368.7L820 367.4L822.5 369.6L825 368.3L827.5 367.4L830 368.4L832.5 368.9L835 368.9L837.5 369.3L840 369.1L842.5 369.7L845 369.5L847.5 368.2L850 368.9L852.5 370.8L855 369.5L857.5 372L860 369.3L862.5 370.6L865 370.9L867.5 374.2L870 374.3L872.5 374.1L875 373.8L877.5 376.2L880 378.1L882.5 377.2L885 378.7L887.5 381.3L890 379.5L892.5 380.8L895 383.7L897.5 385.6L900 384.1L902.5 387.9L905 388.3L907.5 388.2L910 389.8L912.5 391L915 392.4L917.5 395.3L920 395.7" stroke="#7e7e7e" stroke-opacity="0.8" stroke-width="1.3" fill="none"/><path d="M280 405.1L282.5 406.3L285 407.2L287.5 409.6L290 410.6L292.5 409.5L295 410.9L297.5 411.6L300 413.4L302.5 413.1L305 413L307.5 414L310 415.1L312.5 416.2L315 416.8L317.5 417L320 416.5L322.5 418.1L325 418.1L327.5 416.1L330 415.3L332.5 418.4L335 415.6L337.5 415.9L340 416.5L342.5 415.7L345 413.3L347.5 414.5L350 412.2L352.5 413L355 412.6L357.5 412.9L360 409.8L362.5 411.2L365 408.3L367.5 410.7L370 406.9L372.5 406.8L375 408.3L377.5 407.6L380 403.4L382.5 404.1L385 404.2L387.5 402.9L390 402.3L392.5 399.2L395 399.9L397.5 399.2L400 398L402.5 397.4L405 396.3L407.5 394L410 393.1L412.5 393.4L415 392.1L417.5 392.2L420 389.9L422.5 389.9L425 391.2L427.5 387.5L430 387.1L432.5 387.7L435 386.7L437.5 386.4L440 385L442.5 386.4L445 384.7L447.5 382.7L450 381.4L452.5 381.5L455 383L457.5 379.5L460 379.3L462.5 379.6L465 380.1L467.5 379.3L470 378.3L472.5 376.9L475 376.7L477.5 375.9L480 377.4L482.5 374.5L485 375L487.5 374.8L490 374L492.5 374.2L495 373.8L497.5 375.1L500 372.4L502.5 372.5L505 372.4L507.5 372.1L510 371.7L512.5 374.5L515 374.3L517.5 372.8L520 372.6L522.5 373L525 374L527.5 374L530 375.3L532.5 376.8L535 376L537.5 378L540 378.8L542.5 377.7L545 379.5L547.5 379.2L550 381.2L552.5 382.1L555 383.4L557.5 383.3L560 387.7L562.5 387.3L565 387.2L567.5 388.9L570 389.3L572.5 390.7L575 393.4L577.5 394.2L580 395.5L582.5 397.6L585 397.7L587.5 400.1L590 400.1L592.5 403.2L595 403.9L597.5 404.7L600 404.9L602.5 408.1L605 409.4L607.5 410.3L610 408.9L612.5 409.9L615 411.1L617.5 413.3L620 411.7L622.5 412.3L625 413.1L627.5 416L630 415.8L632.5 414.4L635 414.7L637.5 418.1L640 415.9L642.5 415.2L645 415.4L647.5 418.2L650 415.5L652.5 416.8L655 417.9L657.5 414.5L660 415.6L662.5 417.1L665 415.7L667.5 414.4L670 413.9L672.5 414.9L675 411L677.5 413.5L680 412.8L682.5 411.5L685 408.5L687.5 410.1L690 408L692.5 406.1L695 408.4L697.5 405.3L700 403.8L702.5 405.8L705 403.6L707.5 404.1L710 402.3L712.5 400.3L715 399.3L717.5 399.3L720 399.8L722.5 398.3L725 397.8L727.5 396.3L730 394.4L732.5 394.8L735 392.1L737.5 390.9L740 392.6L742.5 391.7L745 389.6L747.5 389.1L750 389.4L752.5 386.1L755 388.3L757.5 387.3L760 386.8L762.5 383.1L765 382.7L767.5 383.4L770 384.3L772.5 380.4L775 380L777.5 381.8L780 379L782.5 379.8L785 380.5L787.5 377.8L790 378.1L792.5 375.5L795 375.3L797.5 374.9L800 376.6L802.5 374.2L805 376.2L807.5 374.1L810 372.7L812.5 374.6L815 373.1L817.5 371.9L820 372.9L822.5 371.6L825 374.5L827.5 373.6L830 372L832.5 373.6L835 374.2L837.5 374.4L840 375L842.5 374.3L845 374.7L847.5 374.6L850 376.3L852.5 375.3L855 377.7L857.5 376.2L860 377.2L862.5 377.5L865 381.2L867.5 379.2L870 381.7L872.5 382.7L875 382.5L877.5 384.4L880 386.3L882.5 388.2L885 389.5L887.5 389.6L890 389.4L892.5 393.3L895 393.5L897.5 395.5L900 394.6L902.5 395.8L905 400.1L907.5 399.4L910 401L912.5 402L915 404.5L917.5 404.2L920 405.3" stroke="#7e7e7e" stroke-opacity="0.8" stroke-width="1.3" fill="none"/><path d="M280 416.1L282.5 416.3L285 417.6L287.5 420L290 419.7L292.5 420.9L295 421.1L297.5 423.1L300 421.1L302.5 423.9L305 421.8L307.5 424L310 421.7L312.5 423.5L315 421.8L317.5 423.8L320 422.9L322.5 423L325 423.6L327.5 422.8L330 423L332.5 423L335 422.3L337.5 422.5L340 420.1L342.5 421L345 420L347.5 420.8L350 418.9L352.5 417.2L355 415.2L357.5 417.1L360 415.5L362.5 415.3L365 412.2L367.5 411.3L370 411.5L372.5 411L375 408.7L377.5 409L380 409.6L382.5 408.6L385 407.4L387.5 405.6L390 406.9L392.5 405.8L395 403.3L397.5 402.7L400 402.7L402.5 400.7L405 401.1L407.5 398.6L410 396.4L412.5 396.1L415 394.9L417.5 395.2L420 395.5L422.5 393.7L425 394L427.5 391.2L430 392.6L432.5 390.2L435 389.9L437.5 390.6L440 388.7L442.5 389.3L445 388.8L447.5 387.1L450 385L452.5 385.9L455 384.3L457.5 384.4L460 381.6L462.5 381.6L465 382.7L467.5 382.7L470 379.7L472.5 380.2L475 380.9L477.5 381.4L480 377.6L482.5 379.4L485 380.1L487.5 379.1L490 377.9L492.5 377.8L495 379.2L497.5 377.3L500 379.4L502.5 379L505 379.7L507.5 379L510 377.7L512.5 379.1L515 381.2L517.5 380L520 379L522.5 382.3L525 381.6L527.5 381.9L530 383.5L532.5 382L535 383.6L537.5 385.2L540 386.3L542.5 385.9L545 390L547.5 390.8L550 389.5L552.5 391.8L555 393.8L557.5 393.3L560 396.6L562.5 398.7L565 397.3L567.5 401.8L570 402.9L572.5 402.3L575 403.5L577.5 405.1L580 406.7L582.5 408.2L585 409.1L587.5 410L590 410.9L592.5 411.4L595 415.6L597.5 415.7L600 415.7L602.5 416.7L605 419.7L607.5 419.2L610 418.7L612.5 422L615 419.4L617.5 421.8L620 420.5L622.5 422L625 421.5L627.5 423.7L630 424.3L632.5 425.1L635 423.6L637.5 424.7L640 423.1L642.5 425L645 422.9L647.5 424L650 423.7L652.5 423L655 420.4L657.5 421.2L660 421L662.5 422.2L665 420L667.5 420.6L670 420.1L672.5 419.4L675 418.4L677.5 415.2L680 413.7L682.5 416.4L685 412.2L687.5 413.2L690 413.2L692.5 411.2L695 408.6L697.5 410.4L700 410.1L702.5 406.3L705 405.9L707.5 407.7L710 404.2L712.5 403.6L715 405L717.5 402.7L720 401.8L722.5 401.5L725 398.7L727.5 399.6L730 399.8L732.5 396.6L735 397.6L737.5 396.3L740 396.5L742.5 392.4L745 394.3L747.5 391.7L750 392.4L752.5 391.9L755 388.6L757.5 388.5L760 389.9L762.5 388.3L765 387.4L767.5 384.8L770 386.8L772.5 384.4L775 385.5L777.5 382.3L780 381.6L782.5 382.5L785 383.4L787.5 382.6L790 381.9L792.5 379.8L795 380.4L797.5 379.6L800 379L802.5 378.2L805 377.3L807.5 379.7L810 377.7L812.5 377.6L815 376.5L817.5 377.4L820 376.9L822.5 377.5L825 376.6L827.5 379.9L830 379.3L832.5 377.4L835 380.1L837.5 380.7L840 381.2L842.5 382.7L845 380.7L847.5 382L850 384.4L852.5 384.5L855 384.3L857.5 386.9L860 386.8L862.5 389L865 389.3L867.5 391.1L870 389.6L872.5 391.5L875 395.1L877.5 394.5L880 395.3L882.5 396.6L885 397.2L887.5 401.5L890 402.6L892.5 404.3L895 404.3L897.5 404.7L900 406.7L902.5 409.7L905 410.9L907.5 411.7L910 409.9L912.5 412.3L915 415.1L917.5 414.2L920 417.3" stroke="#7e7e7e" stroke-opacity="0.8" stroke-width="1.3" fill="none"/><path d="M280 426.5L282.5 425.3L285 427.4L287.5 429.6L290 427.3L292.5 429.4L295 429.7L297.5 429.1L300 430.9L302.5 428.9L305 429L307.5 431.3L310 431.4L312.5 432L315 430.3L317.5 428.6L320 428.3L322.5 428.3L325 427.1L327.5 429L330 428.9L332.5 429L335 426.2L337.5 427.1L340 426.7L342.5 424.7L345 425.8L347.5 422.9L350 422L352.5 421.2L355 419.6L357.5 419.2L360 418.5L362.5 418.3L365 415.8L367.5 415.8L370 415.6L372.5 413.1L375 413.7L377.5 411.9L380 411.7L382.5 409.9L385 410L387.5 409.5L390 409.6L392.5 408.1L395 405.1L397.5 404.1L400 403L402.5 405.9L405 401.9L407.5 400.5L410 401.4L412.5 399.1L415 398.3L417.5 398.1L420 399.4L422.5 397.2L425 396.5L427.5 394L430 395.4L432.5 395.6L435 393.3L437.5 390.9L440 392.2L442.5 389.9L445 392L447.5 390.4L450 389.1L452.5 390.2L455 388.1L457.5 388.4L460 385.9L462.5 386.4L465 387.1L467.5 384.2L470 385.7L472.5 383.6L475 385.8L477.5 385.1L480 382.4L482.5 382.4L485 383.8L487.5 382.2L490 382.5L492.5 384.8L495 381.3L497.5 383.2L500 383.6L502.5 382L505 382.7L507.5 384.6L510 383.4L512.5 386.7L515 387.9L517.5 387.8L520 388.7L522.5 389.2L525 389.9L527.5 389.1L530 389.5L532.5 392.8L535 391.7L537.5 395.9L540 394.9L542.5 397.9L545 397.5L547.5 400.4L550 402.6L552.5 400.6L555 403L557.5 405.2L560 408.5L562.5 409.5L565 410.1L567.5 410.5L570 413.9L572.5 413.6L575 415.8L577.5 417.6L580 416.3L582.5 418.3L585 420L587.5 421.3L590 422.5L592.5 424.5L595 422.5L597.5 426.3L600 427.4L602.5 428.1L605 425.9L607.5 427.2L610 428.3L612.5 428.1L615 428.1L617.5 430.2L620 430.7L622.5 431.1L625 430.2L627.5 429.3L630 429.2L632.5 430.3L635 429.9L637.5 431.6L640 429.4L642.5 428.8L645 428.6L647.5 428.5L650 428.7L652.5 428.9L655 427.8L657.5 425.8L660 427.1L662.5 426.1L665 425.1L667.5 423L670 423.7L672.5 420.7L675 422.6L677.5 419.2L680 419.8L682.5 419.8L685 416.1L687.5 416.8L690 415.5L692.5 414.3L695 414.3L697.5 413.3L700 412.4L702.5 409.9L705 408.8L707.5 409.8L710 406.9L712.5 406.8L715 405.6L717.5 404.6L720 403.1L722.5 402.1L725 402L727.5 402.8L730 399.7L732.5 399.2L735 401.3L737.5 399.4L740 398.1L742.5 398.1L745 396.4L747.5 396.3L750 395L752.5 395.1L755 391.8L757.5 390.8L760 392.3L762.5 391.9L765 391.8L767.5 387.9L770 389.2L772.5 389.3L775 389.6L777.5 387.2L780 388L782.5 385.9L785 384.7L787.5 387L790 386.1L792.5 385.6L795 383.5L797.5 382.5L800 383.6L802.5 383.7L805 382.8L807.5 384.7L810 381.8L812.5 384.3L815 381.7L817.5 383.7L820 383.7L822.5 383.1L825 384.2L827.5 382.6L830 385.8L832.5 386.3L835 387.4L837.5 387.1L840 387L842.5 388.4L845 389L847.5 390.3L850 390.2L852.5 391.3L855 392.2L857.5 395.5L860 395.9L862.5 395.8L865 396.7L867.5 399.5L870 402.8L872.5 401.5L875 405.2L877.5 405.1L880 405.7L882.5 406.8L885 407.8L887.5 409L890 412.1L892.5 411.6L895 413.5L897.5 416.3L900 415.9L902.5 416.8L905 420.6L907.5 419.1L910 420.5L912.5 423.4L915 422.8L917.5 425L920 423.9" stroke="#7e7e7e" stroke-opacity="0.8" stroke-width="1.3" fill="none"/><path d="M280 434.9L282.5 435.9L285 435.7L287.5 434.5L290 435.9L292.5 435L295 437.4L297.5 436.4L300 438.6L302.5 437.1L305 437.7L307.5 436L310 436.6L312.5 437.5L315 435.1L317.5 436.7L320 436.6L322.5 433.5L325 434.5L327.5 431.7L330 434.2L332.5 432.8L335 429L337.5 430.8L340 428.3L342.5 429.8L345 428L347.5 427.1L350 425.3L352.5 424.3L355 425.1L357.5 421.6L360 421.8L362.5 421.7L365 422.2L367.5 418.2L370 417.3L372.5 417.4L375 418.7L377.5 414.6L380 416.4L382.5 416L385 413.8L387.5 411.7L390 413.5L392.5 410.6L395 408.4L397.5 410.6L400 407L402.5 405.6L405 406.1L407.5 406.3L410 406.2L412.5 402.5L415 402.4L417.5 404L420 400.5L422.5 398.5L425 401.1L427.5 398.9L430 398.7L432.5 398.1L435 394.7L437.5 395.5L440 393.1L442.5 394.7L445 395.2L447.5 392.2L450 392.4L452.5 391.7L455 392.4L457.5 389.8L460 388.8L462.5 388.6L465 389.5L467.5 388.3L470 387.1L472.5 389.5L475 388.8L477.5 388.1L480 386.3L482.5 388.7L485 388.4L487.5 386.1L490 386.7L492.5 386.9L495 386.7L497.5 388.8L500 387.8L502.5 391.9L505 390.4L507.5 390.5L510 391.3L512.5 393.4L515 394.9L517.5 394.1L520 395.9L522.5 395L525 397.8L527.5 397.6L530 399L532.5 402.3L535 401.7L537.5 402.7L540 407.8L542.5 405.6L545 408.6L547.5 408.3L550 410L552.5 412L555 415.7L557.5 417.5L560 416.8L562.5 417.9L565 419.1L567.5 422.1L570 422.7L572.5 424.1L575 424.8L577.5 427.6L580 426.6L582.5 427.8L585 428.1L587.5 432.8L590 432.5L592.5 433.2L595 431.5L597.5 434L600 436L602.5 433.5L605 437.1L607.5 434.5L610 435.7L612.5 435.4L615 437.9L617.5 438.3L620 435.5L622.5 435.7L625 438.3L627.5 435.9L630 434.6L632.5 436.2L635 437.4L637.5 433.6L640 436L642.5 433.3L645 435.6L647.5 434.3L650 432.6L652.5 431.9L655 431.1L657.5 431.8L660 430.1L662.5 430.4L665 429.5L667.5 427.1L670 428L672.5 425L675 423.8L677.5 422.7L680 422.4L682.5 419.8L685 421.7L687.5 418L690 418.7L692.5 416.7L695 418.9L697.5 414.6L700 416.2L702.5 415.5L705 412.1L707.5 413.7L710 412L712.5 410.3L715 409.9L717.5 409.2L720 409.3L722.5 408L725 407.9L727.5 404.6L730 405L732.5 401.8L735 401.4L737.5 402.5L740 402.2L742.5 401.8L745 398.4L747.5 399.5L750 396.5L752.5 397.9L755 397.8L757.5 397.3L760 393.3L762.5 395.7L765 394.1L767.5 394.3L770 393.5L772.5 391.8L775 391.7L777.5 389.4L780 390.2L782.5 391.4L785 388.4L787.5 388.6L790 387.8L792.5 388.6L795 387L797.5 388.3L800 388L802.5 387.1L805 386.3L807.5 389.5L810 386.4L812.5 390.2L815 390.4L817.5 388.4L820 389.1L822.5 389.7L825 388.8L827.5 392L830 391.7L832.5 392L835 393.2L837.5 394.8L840 394.1L842.5 397L845 397.6L847.5 398.4L850 402.3L852.5 402.6L855 403.5L857.5 405.4L860 407.7L862.5 406.4L865 410.3L867.5 410.1L870 411L872.5 412.9L875 414.5L877.5 416.1L880 417.6L882.5 417.9L885 421.6L887.5 422.5L890 422.2L892.5 422.8L895 425.9L897.5 425.1L900 427.7L902.5 430.8L905 429.3L907.5 430.9L910 433L912.5 433.8L915 433.7L917.5 435L920 435.2" stroke="#7e7e7e" stroke-opacity="0.8" stroke-width="1.3" fill="none"/><path d="M280 266L282.5 266L285 266.2L287.5 266.4L290 266.7L292.5 267L295 267.5L297.5 268L300 268.6L302.5 269.3L305 270L307.5 270.8L310 271.7L312.5 272.7L315 273.7L317.5 274.8L320 276L322.5 277.2L325 278.4L327.5 279.7L330 281.1L332.5 282.5L335 284L337.5 285.5L340 287L342.5 288.5L345 290.1L347.5 291.7L350 293.4L352.5 295L355 296.7L357.5 298.3L360 300L362.5 301.7L365 303.3L367.5 305L370 306.6L372.5 308.3L375 309.9L377.5 311.5L380 313L382.5 314.5L385 316L387.5 317.5L390 318.9L392.5 320.3L395 321.6L397.5 322.8L400 324L402.5 325.2L405 326.3L407.5 327.3L410 328.3L412.5 329.2L415 330L417.5 330.7L420 331.4L422.5 332L425 332.5L427.5 333L430 333.3L432.5 333.6L435 333.8L437.5 334L440 334L442.5 334L445 333.8L447.5 333.6L450 333.3L452.5 333" stroke="#a0a0a0" stroke-opacity="0.7" stroke-width="1.2" fill="none"/><path d="M600 266L602.5 266L605 266.2L607.5 266.4L610 266.7L612.5 267L615 267.5L617.5 268L620 268.6L622.5 269.3L625 270L627.5 270.8L630 271.7L632.5 272.7L635 273.7L637.5 274.8L640 276L642.5 277.2L645 278.4L647.5 279.7L650 281.1L652.5 282.5L655 284L657.5 285.5L660 287L662.5 288.5L665 290.1L667.5 291.7L670 293.4L672.5 295L675 296.7L677.5 298.3L680 300L682.5 301.7L685 303.3L687.5 305L690 306.6L692.5 308.3L695 309.9L697.5 311.5L700 313L702.5 314.5L705 316L707.5 317.5L710 318.9L712.5 320.3L715 321.6L717.5 322.8L720 324L722.5 325.2L725 326.3L727.5 327.3L730 328.3L732.5 329.2L735 330L737.5 330.7L740 331.4L742.5 332L745 332.5L747.5 333L750 333.3L752.5 333.6L755 333.8L757.5 334L760 334L762.5 334L765 333.8L767.5 333.6L770 333.3L772.5 333" stroke="#a0a0a0" stroke-opacity="0.7" stroke-width="1.2" fill="none"/><path d="M280 269.2L282.5 269.4L285 269.7L287.5 270.1L290 270.6L292.5 271.1L295 271.8L297.5 272.5L300 273.3L302.5 274.2L305 275.1L307.5 276.1L310 277.2L312.5 278.4L315 279.6L317.5 280.9L320 282.2L322.5 283.6L325 285.1L327.5 286.5L330 288.1L332.5 289.7L335 291.3L337.5 292.9L340 294.6L342.5 296.3L345 298L347.5 299.8L350 301.5L352.5 303.3L355 305.1L357.5 306.8L360 308.6L362.5 310.3L365 312.1L367.5 313.8L370 315.5L372.5 317.2L375 318.8L377.5 320.5L380 322L382.5 323.6L385 325.1L387.5 326.5L390 327.9L392.5 329.2L395 330.5L397.5 331.7L400 332.9L402.5 334L405 335L407.5 335.9L410 336.8L412.5 337.6L415 338.3L417.5 338.9L420 339.5L422.5 339.9L425 340.3L427.5 340.6L430 340.8L432.5 341L435 341L437.5 341L440 340.8L442.5 340.6L445 340.3L447.5 339.9L450 339.4L452.5 338.9" stroke="#a0a0a0" stroke-opacity="0.7" stroke-width="1.2" fill="none"/><path d="M600 269.2L602.5 269.4L605 269.7L607.5 270.1L610 270.6L612.5 271.1L615 271.8L617.5 272.5L620 273.3L622.5 274.2L625 275.1L627.5 276.1L630 277.2L632.5 278.4L635 279.6L637.5 280.9L640 282.2L642.5 283.6L645 285.1L647.5 286.5L650 288.1L652.5 289.7L655 291.3L657.5 292.9L660 294.6L662.5 296.3L665 298L667.5 299.8L670 301.5L672.5 303.3L675 305.1L677.5 306.8L680 308.6L682.5 310.3L685 312.1L687.5 313.8L690 315.5L692.5 317.2L695 318.8L697.5 320.5L700 322L702.5 323.6L705 325.1L707.5 326.5L710 327.9L712.5 329.2L715 330.5L717.5 331.7L720 332.9L722.5 334L725 335L727.5 335.9L730 336.8L732.5 337.6L735 338.3L737.5 338.9L740 339.5L742.5 339.9L745 340.3L747.5 340.6L750 340.8L752.5 341L755 341L757.5 341L760 340.8L762.5 340.6L765 340.3L767.5 339.9L770 339.4L772.5 338.9" stroke="#a0a0a0" stroke-opacity="0.7" stroke-width="1.2" fill="none"/><path d="M280 279.7L282.5 280L285 280.5L287.5 281L290 281.6L292.5 282.2L295 283L297.5 283.8L300 284.6L302.5 285.6L305 286.6L307.5 287.6L310 288.8L312.5 289.9L315 291.2L317.5 292.4L320 293.8L322.5 295.1L325 296.6L327.5 298L330 299.5L332.5 301L335 302.5L337.5 304.1L340 305.7L342.5 307.3L345 308.9L347.5 310.5L350 312.1L352.5 313.7L355 315.4L357.5 317L360 318.6L362.5 320.1L365 321.7L367.5 323.2L370 324.7L372.5 326.2L375 327.7L377.5 329.1L380 330.4L382.5 331.8L385 333L387.5 334.3L390 335.4L392.5 336.5L395 337.6L397.5 338.6L400 339.5L402.5 340.4L405 341.2L407.5 341.9L410 342.5L412.5 343.1L415 343.6L417.5 344L420 344.4L422.5 344.7L425 344.9L427.5 345L430 345L432.5 345L435 344.8L437.5 344.6L440 344.3L442.5 344L445 343.5L447.5 343L450 342.4L452.5 341.8" stroke="#a0a0a0" stroke-opacity="0.7" stroke-width="1.2" fill="none"/><path d="M600 279.7L602.5 280L605 280.5L607.5 281L610 281.6L612.5 282.2L615 283L617.5 283.8L620 284.6L622.5 285.6L625 286.6L627.5 287.6L630 288.8L632.5 289.9L635 291.2L637.5 292.4L640 293.8L642.5 295.1L645 296.6L647.5 298L650 299.5L652.5 301L655 302.5L657.5 304.1L660 305.7L662.5 307.3L665 308.9L667.5 310.5L670 312.1L672.5 313.7L675 315.4L677.5 317L680 318.6L682.5 320.1L685 321.7L687.5 323.2L690 324.7L692.5 326.2L695 327.7L697.5 329.1L700 330.4L702.5 331.8L705 333L707.5 334.3L710 335.4L712.5 336.5L715 337.6L717.5 338.6L720 339.5L722.5 340.4L725 341.2L727.5 341.9L730 342.5L732.5 343.1L735 343.6L737.5 344L740 344.4L742.5 344.7L745 344.9L747.5 345L750 345L752.5 345L755 344.8L757.5 344.6L760 344.3L762.5 344L765 343.5L767.5 343L770 342.4L772.5 341.8" stroke="#a0a0a0" stroke-opacity="0.7" stroke-width="1.2" fill="none"/><path d="M280 256.1L282.5 256.1L285 256.2L287.5 256.6L290 256.6L292.5 257L295 256.7L297.5 256.8L300 256.7L302.5 256.7L305 256.9L307.5 256.9L310 256.6L312.5 256.4L315 256.2L317.5 256.2L320 255.7L322.5 255.7L325 255.3L327.5 255.4L330 255L332.5 254.7L335 254.2L337.5 253.9L340 253.9L342.5 253.3L345 253L347.5 252.4L350 252.4L352.5 252L355 251.5L357.5 251.1L360 250.4L362.5 250.2L365 249.6L367.5 249.1L370 248.3L372.5 247.9L375 247.7L377.5 247.2L380 246.6L382.5 246L385 245.4L387.5 244.5L390 244.2L392.5 243.4L395 243.1L397.5 242.3L400 241.6L402.5 241L405 240.1L407.5 239.5L410 239L412.5 238.1L415 237.5L417.5 236.7L420 236.1L422.5 235.7L425 235L427.5 234.3L430 233.6L432.5 233L435 232.4L437.5 231.5L440 231.1L442.5 230.5L445 230L447.5 229.6L450 228.8L452.5 228.5L455 228.4L457.5 227.8L460 227.4L462.5 227.2L465 226.9L467.5 226.5L470 226.8L472.5 226.7L475 226.6L477.5 226.5L480 226.4L482.5 226.4L485 226.8L487.5 227.1L490 227.4L492.5 227.3L495 227.9L497.5 228.5L500 228.9L502.5 229L505 229.6L507.5 230.6L510 231L512.5 231.5L515 232.2L517.5 233L520 233.6L522.5 234.8L525 235.4L527.5 236.4L530 237L532.5 238.1L535 238.7L537.5 239.8L540 240.5L542.5 241.4L545 242.2L547.5 243.4L550 244.1L552.5 245.1L555 245.7L557.5 246.6L560 247.7L562.5 248.1L565 249.2L567.5 249.5L570 250.3L572.5 250.8L575 251.9L577.5 252.2L580 253.1L582.5 253.4L585 254L587.5 254.2L590 255L592.5 255.2L595 255.6L597.5 256L600 255.9L602.5 256.3L605 256.5L607.5 256.8L610 256.7L612.5 257L615 257.1L617.5 256.8L620 256.9L622.5 257L625 256.9L627.5 257L630 256.6L632.5 256.4L635 256.1L637.5 256L640 256L642.5 255.8L645 255.4L647.5 255.4L650 254.8L652.5 254.7L655 254.1L657.5 253.9L660 253.8L662.5 253.1L665 252.9L667.5 252.4L670 252L672.5 251.5L675 251.3L677.5 251.2L680 250.6L682.5 249.9L685 249.5L687.5 249.2L690 248.6L692.5 248L695 247.5L697.5 247.2L700 246.5L702.5 245.9L705 245.4L707.5 244.9L710 244.1L712.5 243.5L715 242.8L717.5 242.2L720 241.6L722.5 240.8L725 240.1L727.5 239.5L730 238.9L732.5 238.1L735 237.3L737.5 236.8L740 236.1L742.5 235.3L745 235.1L747.5 234.4L750 233.6L752.5 233L755 232.3L757.5 231.7L760 230.9L762.5 230.7L765 229.9L767.5 229.3L770 229.2L772.5 228.8L775 228.4L777.5 227.8L780 227.4L782.5 227.2L785 226.8L787.5 226.7L790 226.8L792.5 226.5L795 226.5L797.5 226.5L800 226.7L802.5 226.6L805 227L807.5 227.1L810 227.4L812.5 227.4L815 227.7L817.5 228.2L820 228.6L822.5 229.1L825 229.7L827.5 230.2L830 230.8L832.5 231.8L835 232.3L837.5 233L840 233.6L842.5 234.8L845 235.6L847.5 236.1L850 237.2L852.5 237.9L855 238.7L857.5 239.6L860 240.5L862.5 241.5L865 242.3L867.5 243.4L870 244L872.5 245.2L875 245.7L877.5 246.7L880 247.3L882.5 248.2L885 249.1L887.5 249.7L890 250.6L892.5 251L895 251.6L897.5 252.5L900 252.8L902.5 253.2L905 253.7L907.5 254.5L910 255L912.5 255.3L915 255.6L917.5 255.7L920 256.3" stroke="#ffae33" stroke-width="2.2" fill="none"/><path d="M1186 154.1L1188 153.1L1190 150L1192 147.9L1194 147.2L1196 146.4L1198 144.1L1200 139.6L1202 131.8L1204 127.7L1206 131.2L1208 139.3L1210 150.6L1212 158.5L1214 162.4L1216 162.4L1218 163.1L1220 165.4L1222 168.9L1224 173L1226 174.6L1228 173.1L1230 172.6L1232 172.4L1234 174.1L1236 176.1L1238 176.7L1240 170.2L1242 158.8L1244 144.8L1246 133.8L1248 131.6L1250 137.3L1252 148.4L1254 157.7L1256 164.4L1258 168.1L1260 170.3L1262 173L1264 174L1266 173.1L1268 168.5L1270 163.9L1272 158.7L1274 155L1276 153.2L1278 154.6L1280 158L1282 161L1284 164L1286 166.9L1288 170.6L1290 172.4L1292 171.8L1294 168L1296 162.4L1298 157L1300 149L1302 139.8L1304 132.3L1306 131.3L1308 137.1L1310 149.8L1312 162.5L1314 172.5L1316 177.6L1318 179.2L1320 177.3L1322 174.1L1324 174.9L1326 176.2L1328 177.4L1330 177L1332 174.5L1334 170.9L1336 167.4L1338 167.2L1340 165.5L1342 162.1L1344 152.9L1346 142.7L1348 134.9L1350 133.3L1352 139.3L1354 146.1L1356 150.9L1358 152.3L1360 150L1362 149.2L1364 150.4L1366 152.8L1368 153.4L1370 152L1372 149.8L1374 145.5L1376 143.1L1378 140L1380 135.9L1382 132.6L1384 131.7L1386 135L1388 142.2L1390 151.4L1392 159.8L1394 165.4L1396 166.4L1398 165.7L1400 165.8L1402 167L1404 170.8L1406 175.3L1408 176.2L1410 175.3L1412 172.9L1414 172.8L1416 173.5L1418 172.2L1420 167.2L1422 155.3L1424 139.8L1426 130L1428 129.7L1430 140L1432 153.5L1434 164.8L1436 169.5L1438 169.1L1440 168.9L1442 170.8L1444 173.1L1446 172.6L1448 169.9L1450 163.5L1452 155.3L1454 150L1456 150.7L1458 156.6L1460 162.9L1462 165.3L1464 165.3L1466 166L1468 167.1L1470 170.7L1472 172.1L1474 169L1476 161.6L1478 151.8L1480 140L1482 132.1L1484 131L1486 136.9L1488 145.8L1490 156.3L1492 165.1L1494 172.9L1496 177.6L1498 180.4L1500 178.8L1502 176.2L1504 174.1L1506 174.1L1508 175L1510 176.1L1512 175.1L1514 172.3L1516 167.4L1518 164.4L1520 161.3L1522 156.3L1524 149.5L1526 141.7L1528 135.1L1530 134.4L1532 138.8L1534 146.2L1536 152.5L1538 155.1L1540 152.8L1542 150.1L1544 148.7L1546 149.8L1548 152.1L1550 153.7L1552 150.8L1554 145.6L1556 140.3L1558 134.7L1560 132L1562 132.1L1564 136.5L1566 141.9L1568 146.7L1570 153.3L1572 159.5L1574 164.9L1576 168.4L1578 168.9L1580 168L1582 167.4L1584 168.9L1586 173.1L1588 176.1L1590 178L1592 175.7L1594 174L1596 170.9L1598 167.6L1600 161L1602 150.3L1604 137.8L1606 129.8L1608 132.7L1610 142.8L1612 156.8L1614 168.2L1616 173.1L1618 172.7L1620 170.8L1622 169L1624 169.2L1626 170.3L1628 169.6L1630 163.1L1632 154.7L1634 148.2L1636 149.4L1638 157.3L1640 165.5L1642 168.5L1644 169L1646 167.4L1648 166.8L1650 168.4L1652 169.2L1654 168.4L1656 161.1L1658 147.3L1660 134.1L1662 127L1664 130.4L1666 141.5L1668 154.7L1670 164.7L1672 169L1674 172.1L1676 175.2L1678 178.2L1680 179.5L1682 179.3L1684 176L1686 172.4L1688 172.3L1690 173.3L1692 174.4L1694 173.1L1696 169.3L1698 163L1700 156.1L1702 149.6L1704 144L1706 139.2L1708 137.5L1710 138.3L1712 141.3L1714 146L1716 151.1L1718 154.6L1720 155.1L1722 152.9L1724 149.4L1726 148.6L1728 149.5L1730 151.2L1732 151L1734 146.8L1736 139.1L1738 131L1740 128L1742 131L1744 138.7L1746 147.5L1748 153.5L1750 156L1752 159.2L1754 163.2L1756 168.2L1758 171.4L1760 171.3L1762 170.9L1764 170.1L1766 171L1768 174.5L1770 177.2L1772 178.6L1774 175.6L1776 170L1778 161.9L1780 152.2L1782 142.5L1784 135.3L1786 133.4L1788 139.2L1790 148.2L1792 159.2L1794 168.9L1796 173.3L1798 174.4L1800 172.1L1802 169.8L1804 167L1806 166.2L1808 165.8L1810 160.4L1812 154.8L1814 150.4L1816 152.2L1818 158.4L1820 164.9L1822 170L1824 170.5L1826 170L1828 167.5L1830 166.6L1832 165.6L1834 164.2L1836 157.3L1838 143.9L1840 131.6L1842 126.3L1844 132.1L1846 145.3L1848 160.3L1850 170.4L1852 174.6L1854 174.8L1856 174.3L1858 175.9L1860 178.2L1862 179.2L1864 177.7L1866 173.9L1868 171.5L1870 171.2L1872 171.4L1874 172.3L1876 169L1878 163.1L1880 153.8L1882 144.4L1884 138.2L1886 136.9L1888 139.6L1890 143.7L1892 145.5L1894 147.3L1896 150.1L1898 153L1900 154.4L1902 154.2" stroke="#858585" stroke-opacity="0.75" stroke-width="1.5" fill="none"/><path d="M1186 161.3L1188 159L1190 156.4L1192 154.4L1194 155.4L1196 155.6L1198 152.9L1200 146.1L1202 139.3L1204 135.7L1206 139.1L1208 149L1210 159.2L1212 165.1L1214 168.9L1216 169L1218 169.7L1220 172.6L1222 177.2L1224 180L1226 181L1228 179.8L1230 178.2L1232 180L1234 183L1236 185.2L1238 183.5L1240 176.3L1242 165.1L1244 152.6L1246 144.4L1248 141.6L1250 147L1252 156.7L1254 164.5L1256 170.9L1258 175.2L1260 178.4L1262 181.4L1264 181.7L1266 178.2L1268 174.4L1270 170.8L1272 166.7L1274 163.9L1276 162.1L1278 162.2L1280 164.5L1282 168.1L1284 170.7L1286 174.9L1288 177.7L1290 179L1292 176.8L1294 174.3L1296 169.6L1298 164.8L1300 158.3L1302 149.3L1304 141L1306 139.4L1308 145.7L1310 157.9L1312 171.4L1314 180.5L1316 184.7L1318 184.8L1320 182.3L1322 181.7L1324 182.8L1326 184.7L1328 185.2L1330 183.4L1332 180.1L1334 176.3L1336 175.6L1338 175.1L1340 173.9L1342 168.6L1344 159.9L1346 149.6L1348 142.5L1350 143L1352 148.2L1354 154.2L1356 158.2L1358 158.8L1360 157.1L1362 157.1L1364 158.1L1366 160.5L1368 160.6L1370 158.5L1372 155.4L1374 152.9L1376 150.9L1378 148.4L1380 144.1L1382 140.4L1384 139.6L1386 142.4L1388 149.8L1390 159.2L1392 167.7L1394 171.3L1396 172L1398 171.4L1400 172.4L1402 175.8L1404 179.1L1406 182L1408 182.5L1410 181.2L1412 179.9L1414 180.6L1416 182.1L1418 181.1L1420 174.6L1422 162.8L1424 148.9L1426 138.9L1428 139.8L1430 150.1L1432 162.7L1434 171.8L1436 175.6L1438 176.6L1440 176.9L1442 179.1L1444 180.9L1446 179.7L1448 176.5L1450 170.1L1452 163.5L1454 158.4L1456 160.5L1458 165.2L1460 170.2L1462 172.2L1464 171.7L1466 173.3L1468 175.4L1470 178.6L1472 179.3L1474 175.1L1476 168.4L1478 158.9L1480 149.6L1482 142.6L1484 140.6L1486 146L1488 154.4L1490 163.9L1492 173.6L1494 181L1496 185.6L1498 186.8L1500 185.4L1502 182.5L1504 180.6L1506 181.3L1508 183.3L1510 184L1512 181.6L1514 178.3L1516 174.7L1518 172L1520 169.5L1522 164.6L1524 157.5L1526 148.2L1528 141.9L1530 142L1532 147.8L1534 155.6L1536 160.5L1538 161L1540 159.3L1542 156.7L1544 156.3L1546 157.7L1548 159.9L1550 159.9L1552 157.6L1554 152.5L1556 147.2L1558 143L1560 140.8L1562 141.2L1564 144L1566 148.6L1568 154L1570 161.1L1572 167.9L1574 173.2L1576 175.5L1578 174.7L1580 174.7L1582 175.1L1584 176.7L1586 180.9L1588 183.6L1590 184.3L1592 182.4L1594 179.8L1596 178L1598 175.3L1600 168.9L1602 158.7L1604 146.7L1606 138.8L1608 142.1L1610 153.3L1612 165.8L1614 176L1616 179.6L1618 179.3L1620 177.2L1622 175.7L1624 177.2L1626 178.9L1628 176.3L1630 169.7L1632 161.6L1634 156.6L1636 159.1L1638 165.8L1640 172.2L1642 175.7L1644 174.1L1646 173.4L1648 174.3L1650 176L1652 177.9L1654 175L1656 167.1L1658 155.4L1660 143.9L1662 138.3L1664 140.4L1666 151.6L1668 162.5L1670 170.9L1672 176.2L1674 180.3L1676 183.6L1678 186.1L1680 187.3L1682 185L1684 181.8L1686 180.1L1688 180.8L1690 181.2L1692 182.4L1694 180.1L1696 174.9L1698 169.6L1700 164.1L1702 158.5L1704 153.1L1706 147.6L1708 145.4L1710 144.9L1712 149.3L1714 154.8L1716 160.3L1718 162.5L1720 161.2L1722 158.3L1724 155.4L1726 155.2L1728 157.3L1730 159.7L1732 157.6L1734 152.8L1736 145.9L1738 139L1740 136.6L1742 141.1L1744 147L1746 154.8L1748 159.5L1750 162.9L1752 166.5L1754 171L1756 175.5L1758 178.1L1760 177.5L1762 176.8L1764 177.1L1766 178.7L1768 183.1L1770 185.2L1772 184.6L1774 181.5L1776 176.8L1778 169.6L1780 161L1782 152.7L1784 144.2L1786 142L1788 147.5L1790 156.9L1792 168L1794 177.2L1796 181.8L1798 181.1L1800 179L1802 175.9L1804 174.9L1806 175L1808 173L1810 168L1812 161.5L1814 157.5L1816 159L1818 166.4L1820 173.1L1822 177.2L1824 177.3L1826 175.3L1828 173.7L1830 174.4L1832 174L1834 172.7L1836 164.8L1838 151.7L1840 140.6L1842 135.2L1844 142.4L1846 155.2L1848 169.6L1850 177.9L1852 180.4L1854 181.2L1856 182.5L1858 183.7L1860 185.8L1862 186L1864 184.2L1866 180.2L1868 178.1L1870 178.7L1872 179.7L1874 179.3L1876 176L1878 168.5L1880 159.9L1882 152.1L1884 147L1886 146.5L1888 148.2L1890 149.7L1892 152.4L1894 154.4L1896 157.7L1898 160.8L1900 162L1902 161.1" stroke="#858585" stroke-opacity="0.75" stroke-width="1.5" fill="none"/><path d="M1186 167.8L1188 165.4L1190 163.2L1192 161.9L1194 163.5L1196 163.6L1198 160.4L1200 153.1L1202 146.1L1204 144L1206 148.8L1208 157.2L1210 166.7L1212 172.2L1214 174.9L1216 175.8L1218 177.1L1220 181.5L1222 184.3L1224 187.4L1226 187.3L1228 185.2L1230 185.8L1232 187.6L1234 191.1L1236 191.8L1238 190L1240 183.8L1242 173.3L1244 161.9L1246 153.7L1248 152.8L1250 156.4L1252 164.7L1254 171.4L1256 178.6L1258 183.7L1260 187.6L1262 188.2L1264 187.6L1266 184.1L1268 181.5L1270 178.2L1272 176.3L1274 172.4L1276 170L1278 169.5L1280 170.8L1282 174.9L1284 179.5L1286 182.9L1288 185.2L1290 185L1292 183.6L1294 180.1L1296 177.9L1298 174L1300 167.3L1302 157.4L1304 150L1306 148.6L1308 154.7L1310 167.2L1312 180.6L1314 188.8L1316 191.5L1318 190.3L1320 189.4L1322 188.7L1324 190.4L1326 191.9L1328 192.3L1330 190L1332 186L1334 183.2L1336 183.8L1338 183.9L1340 181.2L1342 176.1L1344 166.9L1346 156.9L1348 151.7L1350 152.5L1352 157.1L1354 162.1L1356 164.3L1358 164.2L1360 163.6L1362 164.3L1364 166.4L1366 168.4L1368 167.2L1370 164.9L1372 162.4L1374 160.7L1376 158.8L1378 157.5L1380 152.1L1382 148.3L1384 146.9L1386 150.7L1388 158.8L1390 167.8L1392 174.8L1394 178.5L1396 178.2L1398 178.3L1400 179.5L1402 182.9L1404 186.8L1406 189.3L1408 188.7L1410 187.1L1412 186.8L1414 188.2L1416 189.9L1418 188.6L1420 182.5L1422 170.2L1424 156.6L1426 149L1428 150.4L1430 159.7L1432 170.3L1434 178.8L1436 182L1438 183.1L1440 185.3L1442 186.6L1444 187.9L1446 186.8L1448 182.2L1450 176.6L1452 170.9L1454 168.5L1456 169.1L1458 172.4L1460 176L1462 178L1464 178.9L1466 180.9L1468 183.5L1470 186L1472 185.6L1474 181.9L1476 175.4L1478 167.7L1480 159.7L1482 153.2L1484 150.7L1486 153.3L1488 161.5L1490 172.4L1492 182L1494 189L1496 193.4L1498 193L1500 190.9L1502 188.9L1504 188.5L1506 189L1508 191L1510 191.2L1512 188.2L1514 184.8L1516 180.7L1518 180L1520 178.1L1522 172.6L1524 165.1L1526 156.2L1528 149.9L1530 151.1L1532 157.2L1534 164L1536 167.5L1538 166.9L1540 165.2L1542 163.2L1544 164.1L1546 165.8L1548 167.3L1550 166.6L1552 163.8L1554 159.8L1556 155.1L1558 151.5L1560 150.2L1562 149.2L1564 151.4L1566 155.7L1568 161L1570 169.1L1572 175.3L1574 179.9L1576 181.5L1578 181.2L1580 180.4L1582 182L1584 185.1L1586 188.5L1588 190.4L1590 190.4L1592 188.1L1594 186.6L1596 186.2L1598 184L1600 178.5L1602 166.9L1604 154.1L1606 147.9L1608 151.4L1610 162.6L1612 175L1614 183.5L1616 186.3L1618 184.5L1620 183.7L1622 183.7L1624 185.7L1626 185.8L1628 183.2L1630 176.5L1632 168.9L1634 164.5L1636 167.7L1638 174L1640 180.3L1642 182L1644 180.6L1646 180L1648 182L1650 184.6L1652 185.7L1654 182L1656 173.9L1658 162.7L1660 152.5L1662 147.7L1664 151L1666 160.1L1668 169.9L1670 178.4L1672 183.4L1674 187.7L1676 192.4L1678 193.4L1680 193.1L1682 191L1684 187.8L1686 187.7L1688 188.5L1690 189.3L1692 189.4L1694 186.3L1696 181.2L1698 176.1L1700 171.9L1702 168.1L1704 162.3L1706 156L1708 152.6L1710 153.1L1712 156.9L1714 162.8L1716 168.2L1718 169.6L1720 167.4L1722 164.2L1724 162.3L1726 163.4L1728 166.1L1730 166.4L1732 164.6L1734 159L1736 152.9L1738 147.1L1740 146.7L1742 149.8L1744 155.6L1746 161.2L1748 165.9L1750 170.6L1752 175.2L1754 179.8L1756 182.7L1758 183.9L1760 183.3L1762 183.3L1764 184.6L1766 186.9L1768 190.7L1770 191.9L1772 190.8L1774 187.3L1776 183.8L1778 178.6L1780 171.5L1782 161.7L1784 153.6L1786 151.2L1788 155.3L1790 166.3L1792 177.4L1794 184.9L1796 188.3L1798 187.4L1800 185L1802 182.9L1804 182.3L1806 183.7L1808 181.8L1810 175.9L1812 168.2L1814 164.6L1816 167.5L1818 175.3L1820 181.1L1822 184.6L1824 183.2L1826 181.1L1828 180.7L1830 181.3L1832 182.3L1834 179.7L1836 171.8L1838 159.9L1840 148.5L1842 145.5L1844 152.5L1846 164.7L1848 176.8L1850 184.1L1852 186.6L1854 188L1856 190.1L1858 191.6L1860 193.7L1862 192.7L1864 190.3L1866 187.1L1868 185.5L1870 186.7L1872 188L1874 186.9L1876 182.5L1878 175L1880 167.8L1882 161.4L1884 156.7L1886 155.4L1888 155.4L1890 157.6L1892 158.9L1894 163L1896 165.5L1898 168.5L1900 168.3L1902 166.6" stroke="#858585" stroke-opacity="0.75" stroke-width="1.5" fill="none"/><path d="M1186 174.2L1188 171.5L1190 169.1L1192 170.5L1194 171L1196 171.4L1198 166.8L1200 160.8L1202 153.9L1204 153.1L1206 158.1L1208 166.7L1210 174.3L1212 179.4L1214 181.3L1216 181.6L1218 185L1220 189.5L1222 192.6L1224 193.5L1226 192.6L1228 192.5L1230 192.3L1232 195.8L1234 198.8L1236 198.8L1238 196.2L1240 189.6L1242 181L1244 171.4L1246 165.2L1248 163L1250 165.2L1252 172.3L1254 178.7L1256 185.5L1258 191.7L1260 195.4L1262 196.2L1264 194.5L1266 191.1L1268 187.7L1270 186.6L1272 184.8L1274 180.3L1276 177.2L1278 175.5L1280 177.7L1282 182.3L1284 187.3L1286 191.4L1288 191.9L1290 191.5L1292 189.9L1294 187.7L1296 185.9L1298 182.5L1300 176.3L1302 166.2L1304 158.5L1306 157.2L1308 164.1L1310 177.1L1312 188.6L1314 196L1316 198.4L1318 196.7L1320 195.5L1322 196.7L1324 198.4L1326 200.2L1328 198.4L1330 195.6L1332 192L1334 190.9L1336 191L1338 191.3L1340 189.3L1342 182.1L1344 174.1L1346 165.2L1348 160.9L1350 161.5L1352 165.7L1354 169.4L1356 171L1358 170.7L1360 171.1L1362 172.6L1364 174.4L1366 175.5L1368 173.7L1370 170.8L1372 168.2L1374 167.9L1376 167.8L1378 165.5L1380 160.2L1382 155.5L1384 154.7L1386 158.6L1388 167.5L1390 177L1392 182.3L1394 184.9L1396 184.4L1398 184.5L1400 187.4L1402 190.8L1404 194.9L1406 196L1408 194.7L1410 194.1L1412 193.7L1414 196.1L1416 197.5L1418 195.5L1420 189.3L1422 176.8L1424 166.3L1426 159.6L1428 161.6L1430 169L1432 179.3L1434 185.6L1436 188.1L1438 190.2L1440 192.4L1442 194.7L1444 194.4L1446 192.9L1448 188.3L1450 183.8L1452 179L1454 177.1L1456 177.3L1458 180.1L1460 182.5L1462 185L1464 186.6L1466 189.3L1468 191.6L1470 192.6L1472 191.2L1474 187.4L1476 183.3L1478 176.3L1480 170L1482 162.7L1484 160L1486 161.9L1488 169.6L1490 180.5L1492 190.2L1494 197.7L1496 199.9L1498 199.3L1500 196.7L1502 195.3L1504 196.5L1506 197.7L1508 198.5L1510 197.1L1512 194.4L1514 190.8L1516 188.1L1518 187.1L1520 185.5L1522 181.1L1524 172.5L1526 163L1528 158.2L1530 159.7L1532 166L1534 172.1L1536 174.1L1538 173.4L1540 171.2L1542 171.3L1544 172.1L1546 174.5L1548 174.2L1550 173L1552 169.7L1554 166.8L1556 163.3L1558 160.7L1560 159.1L1562 158L1564 158.5L1566 162.4L1568 168.9L1570 177L1572 184L1574 187L1576 187.8L1578 187.3L1580 187.1L1582 189.3L1584 193.4L1586 197L1588 197.8L1590 195.9L1592 195L1594 194.7L1596 194.6L1598 192.5L1600 185.6L1602 174.8L1604 163.1L1606 157.2L1608 161.1L1610 171.9L1612 184.1L1614 191L1616 192.2L1618 191.4L1620 191.2L1622 191.7L1624 193.6L1626 193L1628 189.7L1630 182.1L1632 176.3L1634 172.9L1636 176.7L1638 183L1640 186.4L1642 187.7L1644 186.5L1646 187.5L1648 189.7L1650 192.7L1652 192.5L1654 189.2L1656 181.3L1658 171.6L1660 162.5L1662 158.5L1664 161.7L1666 168.3L1668 177.6L1670 184.6L1672 191.2L1674 196.5L1676 200.4L1678 200.6L1680 199.1L1682 196.7L1684 195.4L1686 194.6L1688 196.3L1690 196.9L1692 195L1694 191.9L1696 187.4L1698 184L1700 181.1L1702 176.6L1704 169.7L1706 163.6L1708 159.7L1710 161L1712 165.1L1714 171.4L1716 175.7L1718 175.9L1720 173.5L1722 170.9L1724 170.2L1726 171.8L1728 173.9L1730 174.2L1732 171.6L1734 166.1L1736 160L1738 156.3L1740 156.4L1742 159.1L1744 163.6L1746 167.9L1748 172.5L1750 177.8L1752 182.7L1754 187L1756 190.7L1758 190.1L1760 190.1L1762 189.8L1764 192.3L1766 195.6L1768 197.7L1770 198.3L1772 197.3L1774 194L1776 191.1L1778 187.3L1780 180.3L1782 171.1L1784 162.4L1786 159.4L1788 164.9L1790 174.5L1792 186.1L1794 193.4L1796 194.7L1798 192.9L1800 191.4L1802 189.5L1804 190.7L1806 190.9L1808 188.2L1810 182L1812 174.6L1814 172.8L1816 176.4L1818 183.5L1820 188.4L1822 190.5L1824 189.1L1826 188.4L1828 188.6L1830 190.3L1832 191.1L1834 188L1836 179.5L1838 167.3L1840 157.6L1842 156.2L1844 163.4L1846 174.9L1848 184.6L1850 190.8L1852 193.9L1854 195L1856 198L1858 200.2L1860 200.6L1862 198.7L1864 195.4L1866 193.2L1868 193.2L1870 195.2L1872 195.4L1874 192.4L1876 188.6L1878 181.6L1880 175.9L1882 170.9L1884 166.6L1886 164L1888 163.5L1890 164.2L1892 166.3L1894 170.3L1896 174.4L1898 176.1L1900 175.8L1902 172.3" stroke="#858585" stroke-opacity="0.75" stroke-width="1.5" fill="none"/><path d="M1186 179.4L1188 177L1190 176.5L1192 178.1L1194 178.9L1196 178.1L1198 173.8L1200 167.8L1202 161.8L1204 162.3L1206 167.3L1208 174.5L1210 181.6L1212 185.2L1214 187L1216 189.9L1218 192.4L1220 196.3L1222 200L1224 199.7L1226 198.5L1228 198.5L1230 200.2L1232 204.1L1234 205.7L1236 205.6L1238 202.7L1240 196.7L1242 189.7L1244 181.7L1246 174.8L1248 171.8L1250 174.4L1252 180.2L1254 186.4L1256 194.4L1258 200.2L1260 202.9L1262 202.2L1264 200.3L1266 197.3L1268 194.9L1270 194.6L1272 192.3L1274 188.2L1276 184.2L1278 182.7L1280 185.3L1282 190.5L1284 195.6L1286 199L1288 199.6L1290 198.2L1292 196L1294 194.5L1296 193.7L1298 191.6L1300 184.7L1302 175.1L1304 166.5L1306 165.9L1308 174.5L1310 186.3L1312 197.3L1314 202.6L1316 204.1L1318 203.8L1320 203.3L1322 205.1L1324 206.1L1326 206.8L1328 205.3L1330 201.7L1332 199.6L1334 198.7L1336 198.8L1338 198.6L1340 196.4L1342 188.6L1344 180.2L1346 173.1L1348 170.1L1350 171.2L1352 173.8L1354 176.5L1356 177.9L1358 177.6L1360 178.8L1362 181L1364 182.4L1366 181.1L1368 178.9L1370 176.5L1372 176.2L1374 176.6L1376 176.7L1378 173.5L1380 167.4L1382 163.1L1384 163L1386 167.5L1388 175.9L1390 184.5L1392 189.1L1394 190.3L1396 190.3L1398 191.8L1400 195.9L1402 198.7L1404 201.8L1406 201.5L1408 200.4L1410 200.7L1412 201.5L1414 203.9L1416 205.5L1418 203.3L1420 195.7L1422 185.5L1424 174.9L1426 170L1428 172.1L1430 178.7L1432 186.7L1434 192.1L1436 195.2L1438 197.9L1440 201.2L1442 202.6L1444 202L1446 198.8L1448 194.8L1450 190.6L1452 188.3L1454 185.3L1456 185.3L1458 186.6L1460 189L1462 191L1464 193.8L1466 197.2L1468 199.4L1470 199.4L1472 198L1474 194.7L1476 190.8L1478 185L1480 179.3L1482 173L1484 168.5L1486 170.3L1488 178.6L1490 188.7L1492 198.5L1494 205.3L1496 206.8L1498 205.3L1500 203.2L1502 202.6L1504 204.1L1506 205.3L1508 206L1510 203L1512 199.8L1514 197.4L1516 196.1L1518 195.8L1520 194.2L1522 187.7L1524 178.9L1526 170.4L1528 167.1L1530 168.9L1532 174.6L1534 178.9L1536 180.4L1538 179.6L1540 178.6L1542 178.2L1544 180.6L1546 181.6L1548 181.1L1550 179.2L1552 175.7L1554 173.8L1556 172.4L1558 170L1560 167L1562 164.6L1564 165.9L1566 169.9L1568 177.5L1570 185.4L1572 191.8L1574 194.1L1576 194L1578 194L1580 194.4L1582 197.5L1584 201.5L1586 203.6L1588 203.2L1590 202.1L1592 201.8L1594 201.7L1596 203L1598 200.3L1600 194.2L1602 182.5L1604 171.4L1606 167.9L1608 172.2L1610 181.5L1612 191.6L1614 197.3L1616 199L1618 197.6L1620 198L1622 199.9L1624 200.6L1626 199.7L1628 195.5L1630 189.2L1632 183.4L1634 181.7L1636 185.7L1638 190.2L1640 193.4L1642 193.9L1644 194L1646 195.6L1648 198.1L1650 200.1L1652 199L1654 194.7L1656 187.6L1658 180.2L1660 172.2L1662 169.5L1664 171.7L1666 176.9L1668 184.7L1670 192.3L1672 199.6L1674 204.6L1676 207.8L1678 207.1L1680 205.8L1682 203L1684 201.9L1686 203.2L1688 204.5L1690 204.6L1692 202.1L1694 198.4L1696 194.3L1698 191.9L1700 189.6L1702 184.7L1704 177.4L1706 171L1708 167.8L1710 169.4L1712 173.9L1714 179.8L1716 182.5L1718 181.9L1720 180.1L1722 177.5L1724 177.5L1726 179.3L1728 181L1730 180.7L1732 177.2L1734 172.3L1736 168L1738 165.2L1740 165.7L1742 166.9L1744 171.2L1746 174.7L1748 180.3L1750 185.1L1752 191.2L1754 194.9L1756 196.3L1758 196L1760 196.2L1762 196.8L1764 199.7L1766 203L1768 205.4L1770 204.9L1772 202.4L1774 201L1776 198.8L1778 196.2L1780 189.2L1782 179.9L1784 170.6L1786 168.7L1788 174L1790 184.7L1792 195L1794 200.6L1796 201.6L1798 199.9L1800 197.4L1802 197.6L1804 199.1L1806 199L1808 195.6L1810 189.3L1812 182.9L1814 180.3L1816 184.3L1818 191.7L1820 195.8L1822 197.6L1824 195.6L1826 194.7L1828 196.1L1830 198.3L1832 198.1L1834 194.9L1836 186.2L1838 175.8L1840 167.3L1842 167.1L1844 172.9L1846 183L1848 192.5L1850 197.7L1852 200.1L1854 202.9L1856 206L1858 207.3L1860 206.9L1862 205.3L1864 201.7L1866 201.1L1868 201.7L1870 202.6L1872 202L1874 199.7L1876 194.8L1878 188.6L1880 184.5L1882 179.5L1884 174.8L1886 171.3L1888 169.7L1890 171.7L1892 175L1894 178.6L1896 181.8L1898 182.7L1900 181.5L1902 178.5" stroke="#858585" stroke-opacity="0.75" stroke-width="1.5" fill="none"/><path d="M1186 186.2L1188 184L1190 184.4L1192 185.4L1194 187.3L1196 185.4L1198 180.9L1200 174.3L1202 170.5L1204 171L1206 176.2L1208 183.4L1210 188.5L1212 192.2L1214 194L1216 196.6L1218 201.1L1220 204.6L1222 205.8L1224 206L1226 204.6L1228 205.6L1230 208.3L1232 211.7L1234 213.8L1236 212.5L1238 208.3L1240 203.8L1242 197.4L1244 191.3L1246 185.4L1248 181.1L1250 182.8L1252 187.4L1254 194.7L1256 202.5L1258 207.8L1260 209.7L1262 208.6L1264 206L1266 203.9L1268 202.4L1270 202.5L1272 200.4L1274 196.5L1276 191.2L1278 190.4L1280 192.6L1282 198.9L1284 203.2L1286 206.2L1288 205.7L1290 204.1L1292 201.8L1294 202.6L1296 202.5L1298 200.3L1300 192.8L1302 182.9L1304 176.3L1306 176.5L1308 183.6L1310 195L1312 205L1314 209.9L1316 210L1318 210.1L1320 210.7L1322 212.9L1324 213.6L1326 213.2L1328 211.1L1330 208.4L1332 206.4L1334 206.8L1336 206.9L1338 205.7L1340 202.6L1342 195.8L1344 187.4L1346 181.5L1348 179.5L1350 180L1352 181.4L1354 183.1L1356 184.1L1358 184.6L1360 186.7L1362 188.5L1364 188.9L1366 188L1368 186L1370 183.1L1372 183.8L1374 184.7L1376 183.9L1378 180.8L1380 175.3L1382 170.2L1384 170.8L1386 176.9L1388 185.1L1390 191.9L1392 195.8L1394 197.1L1396 197.6L1398 199.5L1400 203.2L1402 206.4L1404 208.6L1406 208.3L1408 206.7L1410 207.5L1412 209.1L1414 211.8L1416 213L1418 209.5L1420 202.4L1422 192.5L1424 184.7L1426 180.5L1428 181.7L1430 187.7L1432 193.6L1434 198.9L1436 202.6L1438 206.8L1440 208.9L1442 210L1444 207.7L1446 205L1448 201.7L1450 198.3L1452 197L1454 194.3L1456 192.9L1458 193.7L1460 195.6L1462 198.9L1464 201.7L1466 204.8L1468 206.5L1470 206.2L1472 203.9L1474 200.9L1476 198.6L1478 195.2L1480 188.4L1482 182.1L1484 177.9L1486 179.3L1488 187.7L1490 197.4L1492 206.7L1494 212.3L1496 212.9L1498 211.2L1500 210L1502 210.3L1504 212L1506 213.6L1508 212.5L1510 209.7L1512 205.8L1514 203.8L1516 204.1L1518 203.5L1520 201.8L1522 195.3L1524 185.9L1526 178.3L1528 176.5L1530 179L1532 183.5L1534 186.2L1536 187.8L1538 186.3L1540 185.9L1542 186.5L1544 188.2L1546 189.2L1548 187.4L1550 184.6L1552 182.3L1554 181.3L1556 180.9L1558 178.9L1560 175.1L1562 172.3L1564 173L1566 178.1L1568 186.5L1570 193.1L1572 198.7L1574 200.8L1576 200.1L1578 200.4L1580 201.6L1582 205.6L1584 209.2L1586 209.9L1588 209.4L1590 208.5L1592 208.9L1594 210L1596 211L1598 208.5L1600 200.8L1602 190.7L1604 180.9L1606 177L1608 182.9L1610 191.8L1612 199.1L1614 204.2L1616 205.5L1618 205.1L1620 206.6L1622 207.6L1624 208.1L1626 205.8L1628 201.3L1630 196.1L1632 191.9L1634 191.4L1636 194.1L1638 198.2L1640 200.4L1642 199.7L1644 201.3L1646 202.7L1648 205.5L1650 207.6L1652 205.3L1654 202.1L1656 195.2L1658 189.3L1660 182.6L1662 179.6L1664 179.9L1666 185.7L1668 192.9L1670 200L1672 207.6L1674 212.7L1676 215L1678 213.5L1680 212.2L1682 209.5L1684 209.1L1686 210.3L1688 212.3L1690 210.7L1692 207.4L1694 204.7L1696 201.1L1698 199.5L1700 197.7L1702 192.3L1704 185.8L1706 177.9L1708 175.4L1710 177.1L1712 183.2L1714 188.4L1716 189.2L1718 188.7L1720 186.3L1722 185.1L1724 185.5L1726 187.9L1728 188L1730 187.3L1732 183.6L1734 180.4L1736 176.1L1738 175.2L1740 174.6L1742 175L1744 178.3L1746 182L1748 186.9L1750 193.5L1752 199.3L1754 201.7L1756 203.3L1758 201.9L1760 203.1L1762 204.5L1764 208.3L1766 210.5L1768 212.3L1770 210.9L1772 209.7L1774 208.3L1776 207.2L1778 205L1780 197.4L1782 187.9L1784 179.7L1786 178L1788 183.8L1790 193.4L1792 202.9L1794 207.9L1796 208.3L1798 205.9L1800 204.8L1802 204.9L1804 206.4L1806 206.5L1808 202.1L1810 195.1L1812 190.4L1814 188.6L1816 193.2L1818 200.2L1820 203.5L1822 203L1824 201.4L1826 201.6L1828 203.3L1830 205.6L1832 206.2L1834 202.1L1836 193.6L1838 183.6L1840 177.9L1842 177.5L1844 183.4L1846 191.4L1848 199.6L1850 203.6L1852 207.6L1854 210.6L1856 213.5L1858 214.5L1860 213.7L1862 211.5L1864 209.4L1866 208.9L1868 209.9L1870 210L1872 209.4L1874 205.6L1876 201.4L1878 197L1880 192.1L1882 187.9L1884 183.2L1886 179.8L1888 177.1L1890 178.4L1892 182.4L1894 187.5L1896 189.5L1898 189.8L1900 187.4L1902 185.4" stroke="#858585" stroke-opacity="0.75" stroke-width="1.5" fill="none"/><path d="M1186 192L1188 191.1L1190 191.5L1192 193.6L1194 193.9L1196 191.7L1198 187.2L1200 181.8L1202 179.2L1204 181L1206 184.8L1208 191.1L1210 194.8L1212 198.5L1214 201.3L1216 204.4L1218 209.3L1220 212.1L1222 212.1L1224 211.9L1226 212L1228 213.7L1230 215.8L1232 218.8L1234 220.4L1236 219.1L1238 214.9L1240 210.9L1242 206.9L1244 200.5L1246 194.4L1248 191.1L1250 191.3L1252 196.2L1254 204.1L1256 211.3L1258 216.1L1260 217L1262 215.2L1264 211.8L1266 211.2L1268 211.2L1270 210.5L1272 208.6L1274 202.8L1276 198.6L1278 197.8L1280 200.9L1282 206.6L1284 211.4L1286 212.1L1288 211.5L1290 209.4L1292 209.3L1294 210.7L1296 210.8L1298 207.3L1300 201L1302 191.4L1304 185L1306 185.7L1308 193.7L1310 204.1L1312 212.7L1314 215.7L1316 217.3L1318 216.5L1320 218.6L1322 220.5L1324 221.1L1326 219.7L1328 217.1L1330 214.4L1332 214.4L1334 214.6L1336 214.9L1338 213.4L1340 208.7L1342 201.9L1344 195.2L1346 191.5L1348 189L1350 188L1352 189.4L1354 190.5L1356 191.7L1358 192.3L1360 194.5L1362 196.4L1364 196.4L1366 193.7L1368 192L1370 191L1372 191.4L1374 193L1376 191.6L1378 188.2L1380 182L1382 178.4L1384 179.6L1386 186.1L1388 194.1L1390 199L1392 202.4L1394 203.6L1396 204.8L1398 207.2L1400 211.2L1402 214.6L1404 214.5L1406 214.6L1408 213.5L1410 214.9L1412 217.8L1414 220.1L1416 219.9L1418 216.6L1420 209.7L1422 202L1424 194.7L1426 191.1L1428 191.3L1430 196.6L1432 201.1L1434 206.1L1436 210.3L1438 214.6L1440 216.4L1442 216.5L1444 214.4L1446 211.5L1448 208.9L1450 207.4L1452 204.9L1454 201.9L1456 200.9L1458 201.3L1460 202.8L1462 206.7L1464 209.9L1466 212.4L1468 213.8L1470 211.7L1472 210L1474 208.7L1476 206.3L1478 203.6L1480 197.5L1482 190.1L1484 186.1L1486 188.5L1488 196.5L1490 206.9L1492 215.6L1494 219.3L1496 219.6L1498 217.5L1500 217.4L1502 218.3L1504 219.9L1506 220.7L1508 219.4L1510 216L1512 213.5L1514 212L1516 211.8L1518 212L1520 208.5L1522 201.8L1524 193.1L1526 187.3L1528 185.1L1530 187.8L1532 192L1534 193.6L1536 193.1L1538 192.4L1540 192.9L1542 194.7L1544 195.1L1546 195.5L1548 193.5L1550 191.2L1552 190L1554 189.6L1556 188.7L1558 187.1L1560 183.3L1562 180.7L1564 180.9L1566 186.8L1568 194.3L1570 201.1L1572 206L1574 206.6L1576 206.2L1578 207.5L1580 210.4L1582 213.5L1584 215.7L1586 217.2L1588 215.8L1590 215L1592 215.6L1594 218L1596 219.2L1598 216.4L1600 207.8L1602 197.7L1604 190.6L1606 187.9L1608 192.7L1610 200.7L1612 207L1614 210.4L1616 212.1L1618 212.9L1620 213.8L1622 215.1L1624 215.6L1626 212.5L1628 208.5L1630 203.8L1632 201L1634 200L1636 201.9L1638 204.5L1640 206L1642 207.5L1644 208.8L1646 211L1648 212.8L1650 214.4L1652 212.3L1654 208.3L1656 203.8L1658 198.2L1660 192.9L1662 189.2L1664 189.6L1666 193.4L1668 200.1L1670 208.1L1672 215.1L1674 220.4L1676 221.4L1678 220.7L1680 218.4L1682 216.4L1684 216.8L1686 219.1L1688 219.5L1690 217.1L1692 214.3L1694 211.4L1696 209L1698 208L1700 205.8L1702 200.7L1704 192.9L1706 186.7L1708 183.4L1710 186.1L1712 191.3L1714 196.2L1716 196.1L1718 193.9L1720 192L1722 191.5L1724 193.6L1726 195.3L1728 194.9L1730 192.6L1732 189.5L1734 187.4L1736 184.5L1738 183.4L1740 182.9L1742 183.1L1744 185.9L1746 190.1L1748 195.4L1750 201.8L1752 206.4L1754 209.2L1756 208.7L1758 208.4L1760 209.9L1762 212.1L1764 215.6L1766 218.4L1768 218.5L1770 216.7L1772 215.8L1774 216.1L1776 215.4L1778 213.4L1780 205.6L1782 196.1L1784 188.1L1786 187L1788 193.1L1790 203.2L1792 211.2L1794 214.8L1796 213.5L1798 213.1L1800 212.5L1802 213.1L1804 214.5L1806 213.2L1808 208.5L1810 202.2L1812 197.3L1814 197.5L1816 202.7L1818 207.2L1820 209.9L1822 209.3L1824 208.2L1826 209.2L1828 211.2L1830 213.5L1832 212.6L1834 208.1L1836 201.4L1838 192.8L1840 188L1842 188.3L1844 193.2L1846 200.2L1848 206.3L1850 211.2L1852 214.7L1854 219.1L1856 221.4L1858 221.5L1860 220.2L1862 217.5L1864 216.1L1866 216L1868 217.3L1870 217.8L1872 215.8L1874 211.5L1876 207.8L1878 204.3L1880 200.7L1882 197.4L1884 191.7L1886 186.6L1888 185.2L1890 187.3L1892 190.6L1894 194.8L1896 197.4L1898 196L1900 194.1L1902 191.8" stroke="#858585" stroke-opacity="0.75" stroke-width="1.5" fill="none"/><path d="M1186 199.4L1188 197.9L1190 200.2L1192 201.5L1194 202L1196 198.6L1198 194.8L1200 189.7L1202 189L1204 189.9L1206 193.6L1208 198.2L1210 202.1L1212 204.4L1214 208.4L1216 212.1L1218 216L1220 218.3L1222 218.5L1224 218L1226 219L1228 220.9L1230 224.6L1232 226.9L1234 227L1236 225.3L1238 222.2L1240 219.4L1242 216L1244 210.2L1246 203.4L1248 199.5L1250 199.6L1252 204.3L1254 211.9L1256 219L1258 223.5L1260 223.8L1262 221.4L1264 218.8L1266 217.5L1268 218.1L1270 218.8L1272 215.8L1274 210.4L1276 205.4L1278 205L1280 209.1L1282 214.5L1284 218.6L1286 218.8L1288 217.7L1290 216.4L1292 216.9L1294 218.6L1296 219L1298 215.1L1300 208.7L1302 200L1304 194.9L1306 196.2L1308 204.5L1310 213.6L1312 219.5L1314 222.9L1316 223.8L1318 224.7L1320 226.9L1322 228.2L1324 228.4L1326 225.7L1328 223.6L1330 221.2L1332 221.8L1334 222.8L1336 222.1L1338 219.2L1340 214.4L1342 209.3L1344 203.5L1346 200.3L1348 197.9L1350 196.7L1352 196.8L1354 196.8L1356 198.5L1358 200.2L1360 203L1362 204.2L1364 202.3L1366 200.5L1368 198.8L1370 197.8L1372 199.1L1374 200.2L1376 199.5L1378 194.2L1380 189.9L1382 186.5L1384 189.2L1386 195.4L1388 202.1L1390 206.1L1392 208.6L1394 209.6L1396 212.4L1398 215.2L1400 218.6L1402 220.9L1404 220.5L1406 219.9L1408 220.8L1410 222.4L1412 225.1L1414 227.8L1416 226.1L1418 223L1420 217L1422 210.3L1424 204.7L1426 201.4L1428 201.7L1430 204.6L1432 208.8L1434 214.4L1436 218.9L1438 222.9L1440 223.4L1442 222.8L1444 220.7L1446 217L1448 216.3L1450 215.7L1452 213.5L1454 209.7L1456 208.1L1458 207.5L1460 210.3L1462 214.5L1464 217.5L1466 219.6L1468 219.4L1470 218.1L1472 216.3L1474 216.3L1476 215.6L1478 211.8L1480 206.3L1482 199.4L1484 195.4L1486 197.3L1488 205.8L1490 215.9L1492 223.1L1494 226.7L1496 226.2L1498 225.1L1500 224.1L1502 225.5L1504 227.6L1506 227.4L1508 224.8L1510 221.7L1512 220.3L1514 219.9L1516 219.4L1518 218.6L1520 215.4L1522 208.3L1524 200.6L1526 196.4L1528 194.5L1530 196.1L1532 199.2L1534 200.4L1536 200.4L1538 200.2L1540 200.2L1542 202.2L1544 203.5L1546 202L1548 200.3L1550 198.3L1552 197.7L1554 197.9L1556 196.8L1558 195.1L1560 190.2L1562 187.7L1564 189.6L1566 195.6L1568 203.4L1570 209.2L1572 212.6L1574 212.9L1576 213L1578 214.3L1580 218L1582 221.3L1584 223.4L1586 222.7L1588 222.3L1590 222.3L1592 223.3L1594 226.4L1596 226.3L1598 222.8L1600 215.2L1602 206.3L1604 200.1L1606 199L1608 202.6L1610 209.1L1612 214.3L1614 216.8L1616 219.3L1618 220.4L1620 221.8L1622 222.7L1624 221.4L1626 218.9L1628 214.5L1630 211.2L1632 209.9L1634 208.6L1636 210.4L1638 210.9L1640 212.3L1642 213.7L1644 216L1646 218.9L1648 220.4L1650 221L1652 218.7L1654 215.1L1656 212L1658 207.6L1660 203.2L1662 199L1664 197.8L1666 201.9L1668 208.3L1670 216.9L1672 224.4L1674 227.5L1676 228.3L1678 226.8L1680 224.7L1682 223.9L1684 225.3L1686 226L1688 226.3L1690 223.7L1692 220L1694 217.7L1696 217.3L1698 215.6L1700 213.1L1702 207.7L1704 200.3L1706 194.1L1708 192.8L1710 195.1L1712 200.3L1714 203L1716 202.2L1718 200.8L1720 199.1L1722 199.7L1724 201.8L1726 202.8L1728 201.1L1730 198.8L1732 196.9L1734 195.5L1736 193.9L1738 192.3L1740 191.5L1742 191.4L1744 192.3L1746 196.8L1748 203.5L1750 210L1752 214L1754 215.5L1756 215L1758 214.9L1760 216.3L1762 220L1764 223L1766 225L1768 224.5L1770 223.1L1772 223.2L1774 223.4L1776 223.7L1778 220.9L1780 214.1L1782 205L1784 197.8L1786 196.6L1788 203.7L1790 212.1L1792 218.7L1794 220.3L1796 219.7L1798 218.9L1800 219.5L1802 220.8L1804 221.9L1806 220L1808 215L1810 209.3L1812 206L1814 206.3L1816 210.5L1818 214.6L1820 216.6L1822 215.9L1824 215L1826 217.4L1828 220.1L1830 221.4L1832 219.2L1834 215.3L1836 209.1L1838 201.8L1840 198.2L1842 198.3L1844 202.5L1846 208.2L1848 213.5L1850 218.8L1852 222.8L1854 227.3L1856 228.4L1858 228.4L1860 225.5L1862 224L1864 223.5L1866 223.6L1868 224.9L1870 223.9L1872 221.6L1874 217.5L1876 215.1L1878 212.6L1880 209L1882 204.9L1884 199.2L1886 194.2L1888 193L1890 195.4L1892 199.5L1894 203.2L1896 203.9L1898 202.6L1900 200.5L1902 198.1" stroke="#858585" stroke-opacity="0.75" stroke-width="1.5" fill="none"/><path d="M1186 205.4L1188 206.6L1190 208.3L1192 208.4L1194 208.6L1196 205.4L1198 201.5L1200 197.8L1202 198L1204 199L1206 202.6L1208 205.7L1210 209.1L1212 212.4L1214 216.1L1216 220.8L1218 224.5L1220 225.7L1222 225.5L1224 224.3L1226 226.2L1228 229.2L1230 231.6L1232 232.9L1234 233.2L1236 231.1L1238 229.7L1240 227.1L1242 224L1244 219.3L1246 213.2L1248 208.4L1250 208L1252 213.5L1254 220.9L1256 227.5L1258 230.8L1260 229.7L1262 227.5L1264 225.4L1266 225.7L1268 227.2L1270 226L1272 222.6L1274 217.6L1276 213.8L1278 213.1L1280 218.2L1282 223.1L1284 225.7L1286 225.3L1288 224.1L1290 223.8L1292 224.2L1294 225.9L1296 226L1298 222.9L1300 215.4L1302 208.1L1304 204.4L1306 206.6L1308 213.9L1310 221.6L1312 226.9L1314 229.5L1316 230.3L1318 231.6L1320 234.8L1322 235.4L1324 234.6L1326 231.9L1328 230L1330 229.2L1332 228.9L1334 230.2L1336 228.7L1338 226L1340 221L1342 216.8L1344 212.9L1346 209.1L1348 206.4L1350 205L1352 204.3L1354 203.9L1356 206.2L1358 209L1360 211.2L1362 210.4L1364 209.5L1366 206.2L1368 205.3L1370 206.1L1372 207.8L1374 207.8L1376 206.3L1378 201.5L1380 196.8L1382 196.1L1384 197.6L1386 204.4L1388 208.9L1390 213.5L1392 214.7L1394 216.5L1396 219L1398 223.5L1400 226.7L1402 228L1404 226.8L1406 226.5L1408 227.3L1410 230L1412 233.3L1414 233.9L1416 232.4L1418 228.7L1420 223.9L1422 218.9L1424 214.7L1426 211.3L1428 210.5L1430 212.4L1432 217.3L1434 221.9L1436 227.3L1438 230.4L1440 231.2L1442 229.2L1444 226L1446 224.6L1448 223.8L1450 222.8L1452 221.3L1454 217.4L1456 214.5L1458 214.9L1460 218.5L1462 221.8L1464 225.4L1466 227.2L1468 226.1L1470 225.1L1472 224.1L1474 224.2L1476 223.7L1478 220.8L1480 214.7L1482 208L1484 203.6L1486 207.7L1488 215.1L1490 223.9L1492 230.6L1494 232.2L1496 231.8L1498 231L1500 232.4L1502 233.8L1504 234.5L1506 234.3L1508 230.6L1510 229L1512 227.7L1514 227.2L1516 228.1L1518 226.1L1520 221.3L1522 214.9L1524 208.8L1526 204.6L1528 203.7L1530 205.5L1532 206.7L1534 207.7L1536 207.4L1538 206.8L1540 208.9L1542 209.6L1544 210.2L1546 208.1L1548 206.5L1550 204.6L1552 205.5L1554 206.4L1556 204.8L1558 202.5L1560 197.3L1562 195.4L1564 197.9L1566 204.5L1568 210.9L1570 216.5L1572 219L1574 218.3L1576 220.2L1578 222.2L1580 225.8L1582 228.6L1584 229.6L1586 229.1L1588 229L1590 229.8L1592 231.9L1594 234L1596 233.3L1598 229.1L1600 223.1L1602 215L1604 209.8L1606 209.2L1608 212.2L1610 217.4L1612 221.7L1614 224.6L1616 225.8L1618 227.9L1620 230.6L1622 230.4L1624 228.3L1626 225.3L1628 222.1L1630 219.1L1632 218L1634 217.1L1636 217.4L1638 218.5L1640 219.6L1642 221.9L1644 223.6L1646 226.1L1648 227.5L1650 226.9L1652 225.2L1654 222.2L1656 219.6L1658 216.1L1660 211.8L1662 208.4L1664 206.8L1666 210.3L1668 217.5L1670 226.1L1672 232.3L1674 234.2L1676 234.9L1678 233L1680 231.2L1682 232.3L1684 233.7L1686 233.2L1688 232.6L1690 230.1L1692 226.3L1694 224.8L1696 224.7L1698 224.2L1700 220.3L1702 214.5L1704 207L1706 202L1708 201.7L1710 204.6L1712 208.8L1714 210.3L1716 209.2L1718 207.3L1720 207.2L1722 207.7L1724 209.6L1726 209.9L1728 208.5L1730 205.3L1732 204.2L1734 202.4L1736 203L1738 200.5L1740 199L1742 198.2L1744 200.6L1746 205L1748 211.4L1750 217.9L1752 220.6L1754 221.3L1756 221.7L1758 222.6L1760 224.2L1762 227.7L1764 231L1766 231.2L1768 230.4L1770 229.5L1772 229.9L1774 231.5L1776 231.6L1778 229.2L1780 221.6L1782 212.8L1784 206.6L1786 207.4L1788 213.2L1790 221.1L1792 226L1794 227.8L1796 226.5L1798 227.3L1800 227.5L1802 229.4L1804 228.7L1806 226L1808 221.9L1810 217.7L1812 215.1L1814 215.8L1816 218.3L1818 221.6L1820 222.5L1822 222L1824 223.3L1826 224.7L1828 227.6L1830 227.6L1832 226.1L1834 221.5L1836 216.4L1838 211L1840 208.4L1842 208.3L1844 210.3L1846 216.2L1848 221L1850 226.6L1852 230.9L1854 234.2L1856 235.7L1858 235L1860 231.7L1862 230.4L1864 230.3L1866 231.7L1868 232L1870 230.3L1872 228.1L1874 223.9L1876 222L1878 220.9L1880 217.8L1882 213.8L1884 207.1L1886 201.9L1888 200.8L1890 204.1L1892 207.9L1894 210.8L1896 211.5L1898 209.4L1900 207.1L1902 206.4" stroke="#858585" stroke-opacity="0.75" stroke-width="1.5" fill="none"/><path d="M1186 212.4L1188 213.8L1190 215.2L1192 216L1194 214.3L1196 212.1L1198 208.8L1200 207.2L1202 207.3L1204 208.1L1206 210.2L1208 212.4L1210 216.2L1212 219.2L1214 224L1216 228L1218 231.3L1220 231.5L1222 231.2L1224 231.6L1226 234L1228 237.3L1230 239.1L1232 240.5L1234 239.3L1236 237.8L1238 237.2L1240 235.4L1242 233L1244 228L1246 221.3L1248 216.8L1250 217.3L1252 223.6L1254 230.8L1256 236L1258 237.6L1260 235.9L1262 233.7L1264 232.8L1266 233L1268 233.9L1270 233.4L1272 229.5L1274 224.5L1276 221.2L1278 221.7L1280 226.9L1282 230.6L1284 232.3L1286 231.4L1288 230.2L1290 231.1L1292 232.9L1294 233.8L1296 234.3L1298 230.3L1300 223.7L1302 216.8L1304 215L1306 217.2L1308 223.2L1310 229.1L1312 233.8L1314 235.6L1316 237.5L1318 240.4L1320 241.8L1322 242.9L1324 240.9L1326 238.1L1328 236.6L1330 236.1L1332 236.8L1334 237.7L1336 236.1L1338 232L1340 228.3L1342 224.2L1344 220.5L1346 217.5L1348 215.2L1350 212.9L1352 211.7L1354 212.1L1356 213.7L1358 217.1L1360 217.7L1362 217.8L1364 214.7L1366 213.6L1368 212.3L1370 213.2L1372 214.7L1374 215L1376 213L1378 208.3L1380 204.6L1382 204.8L1384 207.1L1386 212L1388 216.6L1390 219.3L1392 221.3L1394 223.5L1396 226.9L1398 230.7L1400 233.3L1402 234.4L1404 233.8L1406 233.6L1408 235L1410 238.8L1412 240.4L1414 241L1416 239.2L1418 235.9L1420 232.1L1422 229L1424 223.9L1426 220.6L1428 219.6L1430 220.7L1432 224.6L1434 230.1L1436 235.6L1438 237.8L1440 237.4L1442 235.7L1444 233L1446 231.3L1448 231.4L1450 231.9L1452 228.9L1454 225L1456 222L1458 223.1L1460 226.2L1462 230.6L1464 232.9L1466 233.8L1468 231.8L1470 230.6L1472 230.7L1474 231.7L1476 232.4L1478 228.5L1480 222.7L1482 216.6L1484 213.7L1486 217.7L1488 225.3L1490 233.2L1492 237.3L1494 238.7L1496 239L1498 238.5L1500 240.4L1502 241.8L1504 242.5L1506 240.2L1508 238L1510 235.7L1512 235.1L1514 235.9L1516 235.4L1518 232.8L1520 228.5L1522 222.5L1524 217.2L1526 214.3L1528 213.2L1530 214.1L1532 214.1L1534 214.5L1536 214L1538 215.3L1540 215.9L1542 217.9L1544 216.2L1546 214.4L1548 212.2L1550 212.4L1552 213.2L1554 213.8L1556 212.3L1558 209.3L1560 205.8L1562 204.5L1564 206.9L1566 213.8L1568 219.2L1570 223.9L1572 224.3L1574 224.8L1576 227.1L1578 229.8L1580 233.6L1582 235.7L1584 235.6L1586 235.8L1588 234.7L1590 236.7L1592 239.6L1594 241.3L1596 240.1L1598 236.1L1600 229.8L1602 224.4L1604 219.8L1606 219L1608 222.2L1610 225.8L1612 229.3L1614 231.7L1616 234.7L1618 236.3L1620 238L1622 237.2L1624 234.3L1626 231.4L1628 229.5L1630 228.2L1632 226.3L1634 225.8L1636 224.9L1638 225.6L1640 227.1L1642 228.8L1644 231.4L1646 233.7L1648 234.6L1650 233.5L1652 230.8L1654 229.6L1656 227.8L1658 225.4L1660 220.8L1662 217.1L1664 215.9L1666 219.8L1668 226L1670 233.9L1672 239.3L1674 241.6L1676 240.5L1678 239.1L1680 237.9L1682 239.2L1684 240.9L1686 241.1L1688 239.2L1690 235.5L1692 233.6L1694 232.4L1696 232.9L1698 232.1L1700 227.5L1702 221.1L1704 214.8L1706 211.4L1708 210.3L1710 213.1L1712 216L1714 216.5L1716 215.9L1718 213.6L1720 214.9L1722 215.4L1724 217.2L1726 216.3L1728 213.7L1730 211.8L1732 211.8L1734 210.9L1736 210.7L1738 209.5L1740 206.7L1742 206.7L1744 208L1746 213.3L1748 220.7L1750 225.2L1752 228L1754 227.8L1756 228.4L1758 229.4L1760 231.9L1762 235.6L1764 237.8L1766 238.4L1768 237.4L1770 237.1L1772 238.1L1774 239.9L1776 239.7L1778 236.2L1780 229.4L1782 221.3L1784 216.7L1786 217.9L1788 223.1L1790 229.2L1792 232.9L1794 233.6L1796 233.4L1798 234.6L1800 235.3L1802 236.2L1804 235.1L1806 232.4L1808 228.3L1810 224.5L1812 223.6L1814 224.6L1816 226.1L1818 228.4L1820 228.6L1822 229.2L1824 230.4L1826 232.9L1828 234.6L1830 234.4L1832 232.2L1834 228.4L1836 225.2L1838 221.2L1840 218.3L1842 217.9L1844 220.2L1846 223.8L1848 228.6L1850 234.1L1852 239.2L1854 242.6L1856 242.5L1858 240.8L1860 238L1862 238.1L1864 238.4L1866 239.2L1868 239.2L1870 237.1L1872 233.4L1874 230.8L1876 229.8L1878 228.5L1880 226.1L1882 220.7L1884 215.2L1886 210L1888 209.1L1890 212.2L1892 216L1894 218.7L1896 216.8L1898 215.7L1900 213.9L1902 213.7" stroke="#858585" stroke-opacity="0.75" stroke-width="1.5" fill="none"/><path d="M1186 220.2L1188 221.8L1190 223.1L1192 222.8L1194 221L1196 218.4L1198 216.4L1200 215.2L1202 215.3L1204 216.3L1206 218.3L1208 219.5L1210 223L1212 227.4L1214 232.2L1216 235.8L1218 238.1L1220 238.4L1222 237.7L1224 238.4L1226 241.8L1228 244.9L1230 246.4L1232 246.8L1234 245.8L1236 245L1238 244L1240 243.8L1242 242.1L1244 236.2L1246 229.8L1248 225.6L1250 227.5L1252 232.3L1254 238.6L1256 243.3L1258 243.4L1260 242.7L1262 240.2L1264 241L1266 241L1268 241.5L1270 240.2L1272 236.6L1274 231.6L1276 229.5L1278 230.5L1280 235.3L1282 237.7L1284 238.7L1286 238.2L1288 237L1290 237.6L1292 240.5L1294 241.3L1296 240.7L1298 236.7L1300 231.2L1302 225.9L1304 225.3L1306 227.8L1308 232.5L1310 237.2L1312 240.7L1314 242.8L1316 245.3L1318 247.8L1320 249.8L1322 248.8L1324 247.9L1326 245.5L1328 243.9L1330 244.3L1332 244.5L1334 244.3L1336 241.8L1338 238.2L1340 235.3L1342 231.8L1344 229.9L1346 227L1348 223L1350 220.3L1352 219L1354 220L1356 222.5L1358 224.9L1360 224.9L1362 224.5L1364 221.1L1366 219.3L1368 219.6L1370 221.8L1372 223.3L1374 222.7L1376 219L1378 215.7L1380 213.7L1382 213.2L1384 216.5L1386 220.7L1388 223.8L1390 226.2L1392 228.6L1394 231.2L1396 235.8L1398 238.6L1400 239.8L1402 240.1L1404 239.7L1406 240.9L1408 242.6L1410 245.9L1412 247.2L1414 247.5L1416 245.5L1418 243.4L1420 240.8L1422 237.7L1424 234.1L1426 229.9L1428 228.2L1430 229.3L1432 233.7L1434 239L1436 242.8L1438 244.7L1440 244.1L1442 241.1L1444 239.5L1446 239.6L1448 239.7L1450 239.5L1452 236.1L1454 231.5L1456 229.5L1458 230.9L1460 234.2L1462 238L1464 240.6L1466 239.8L1468 239.1L1470 238.1L1472 238.2L1474 240.1L1476 240.1L1478 236.7L1480 230.9L1482 224.9L1484 223.7L1486 227.4L1488 234.8L1490 241.4L1492 244.8L1494 245.4L1496 245L1498 245.7L1500 247.9L1502 249.1L1504 248.5L1506 246.4L1508 244.3L1510 242.9L1512 243L1514 242.7L1516 242L1518 239.8L1520 235.1L1522 229.3L1524 225.9L1526 222.6L1528 222L1530 221.8L1532 221.1L1534 221.4L1536 221.1L1538 222.4L1540 224.2L1542 224.2L1544 223.3L1546 221L1548 218.8L1550 219.2L1552 220.4L1554 222.2L1556 219.8L1558 216.1L1560 212.9L1562 212.6L1564 215.8L1566 222.2L1568 227.2L1570 229.9L1572 231.7L1574 232.2L1576 234.7L1578 237.7L1580 240.9L1582 242.9L1584 241.8L1586 242.3L1588 242.2L1590 244.1L1592 247.1L1594 248.8L1596 247.1L1598 243L1600 237.5L1602 233.3L1604 230.8L1606 229.8L1608 231.3L1610 233L1612 236L1614 239L1616 242.4L1618 244.3L1620 244.4L1622 242.5L1624 240.2L1626 238.4L1628 237.2L1630 236.8L1632 235L1634 233.2L1636 231.2L1638 232L1640 233.7L1642 236.7L1644 240L1646 241.1L1648 241L1650 239.7L1652 237.9L1654 237.5L1656 236.4L1658 234.6L1660 230.2L1662 226.3L1664 224.5L1666 228.2L1668 236.2L1670 242.1L1672 246.8L1674 248.1L1676 247.4L1678 245.5L1680 245.9L1682 247.7L1684 247.9L1686 247L1688 244.8L1690 242.6L1692 240.7L1694 240.9L1696 240.3L1698 239.3L1700 234.9L1702 229.2L1704 223.2L1706 220L1708 219.8L1710 222.1L1712 223.1L1714 222.8L1716 222.2L1718 222L1720 222.2L1722 223.1L1724 224L1726 222.8L1728 221L1730 219.5L1732 218.4L1734 219.3L1736 218.8L1738 217.6L1740 214L1742 213.6L1744 216.8L1746 222.1L1748 228.8L1750 232.1L1752 234.2L1754 234.8L1756 234.7L1758 236.8L1760 240.6L1762 243.6L1764 244.4L1766 244.3L1768 243.5L1770 243.6L1772 245.4L1774 247L1776 247.3L1778 243.7L1780 237L1782 230.3L1784 226.6L1786 228.8L1788 232.2L1790 237.6L1792 239.6L1794 240.7L1796 241.5L1798 242.7L1800 243.6L1802 244.1L1804 241.8L1806 238.7L1808 234.9L1810 232.6L1812 232.1L1814 233.2L1816 234.6L1818 235L1820 236L1822 235.7L1824 238.2L1826 240.2L1828 241.4L1830 241L1832 239.2L1834 235.7L1836 233.5L1838 230.9L1840 228.3L1842 227.3L1844 228L1846 231.6L1848 236.7L1850 242.9L1852 247.1L1854 249.6L1856 249.1L1858 247.1L1860 245L1862 245.6L1864 246.5L1866 247.2L1868 246L1870 243.6L1872 240L1874 238.9L1876 237.2L1878 236.8L1880 233.1L1882 228.2L1884 222.3L1886 218.5L1888 218.6L1890 221.1L1892 224.3L1894 225.7L1896 223.6L1898 221.9L1900 220L1902 221" stroke="#858585" stroke-opacity="0.75" stroke-width="1.5" fill="none"/><path d="M1186 227.9L1188 229.6L1190 230.4L1192 229.9L1194 227.1L1196 225.4L1198 224.2L1200 224.4L1202 225L1204 225.4L1206 226.1L1208 228L1210 230.3L1212 235.2L1214 240.5L1216 243.2L1218 243.8L1220 244.2L1222 244.9L1224 245.8L1226 249L1228 251.5L1230 253.8L1232 252.4L1234 251.5L1236 251.1L1238 251.8L1240 251.8L1242 249.4L1244 244.7L1246 238.5L1248 235.3L1250 237.1L1252 241.9L1254 247.9L1256 250.2L1258 250.4L1260 248.7L1262 248.1L1264 248.1L1266 248.9L1268 249.6L1270 247.3L1272 242.8L1274 239.3L1276 237.7L1278 239L1280 242.6L1282 245.3L1284 244.6L1286 243.7L1288 244L1290 245.8L1292 247.4L1294 249.6L1296 248.2L1298 244.3L1300 239.7L1302 236.3L1304 235.6L1306 237.4L1308 240.9L1310 245L1312 248.1L1314 250.9L1316 253.5L1318 255.1L1320 256.2L1322 255.6L1324 253.3L1326 251.6L1328 251.7L1330 252.1L1332 252.7L1334 252L1336 248.6L1338 245.3L1340 242.9L1342 240.4L1344 238.5L1346 235.3L1348 230.9L1350 227.5L1352 226.8L1354 227.8L1356 230.5L1358 231.8L1360 232.8L1362 230.7L1364 227.4L1366 226.5L1368 227.3L1370 229L1372 229.7L1374 228.6L1376 226.2L1378 222.9L1380 221.5L1382 223.1L1384 225.2L1386 229L1388 230.8L1390 233.9L1392 235.4L1394 239.3L1396 243.5L1398 246.1L1400 247L1402 246.6L1404 247.1L1406 247.8L1408 251.4L1410 254.1L1412 254.1L1414 253.8L1416 252.5L1418 251L1420 249.7L1422 246.6L1424 243.4L1426 238.9L1428 236.8L1430 238.8L1432 242.2L1434 247.4L1436 251.6L1438 252.1L1440 250.4L1442 248.4L1444 247.3L1446 246.8L1448 247.6L1450 246.1L1452 243.6L1454 238.7L1456 237L1458 238.7L1460 242.1L1462 246L1464 247.6L1466 246.4L1468 244.8L1470 245.4L1472 246.9L1474 247.7L1476 247.8L1478 244.7L1480 239.2L1482 234.2L1484 233.7L1486 237.4L1488 243.4L1490 248.5L1492 251.7L1494 251.4L1496 252.6L1498 253.7L1500 256.1L1502 256.4L1504 255.4L1506 252.4L1508 250.1L1510 249.4L1512 250.6L1514 250.6L1516 248.8L1518 245.5L1520 241.1L1522 236.9L1524 234.2L1526 231.8L1528 231.1L1530 229.2L1532 228.6L1534 227.8L1536 228.7L1538 231L1540 231.7L1542 231.2L1544 229.6L1546 226.9L1548 226.8L1550 227.1L1552 229.1L1554 228.6L1556 226.6L1558 223.9L1560 221L1562 221.9L1564 224.8L1566 230.8L1568 234.4L1570 237.2L1572 237.3L1574 239.4L1576 242.7L1578 246.1L1580 248.3L1582 249.5L1584 248.2L1586 248.5L1588 249.4L1590 252L1592 254.2L1594 255.2L1596 253.9L1598 249.7L1600 246.6L1602 242.8L1604 239.9L1606 239.4L1608 240L1610 241.1L1612 243.9L1614 247.8L1616 250.2L1618 252.3L1620 251.1L1622 249.1L1624 246.4L1626 245.8L1628 245L1630 244.1L1632 243L1634 240.6L1636 238.8L1638 239.4L1640 242.2L1642 244.7L1644 246.9L1646 247.4L1648 247L1650 245.1L1652 244.7L1654 245.1L1656 245.9L1658 243.1L1660 238.1L1662 235L1664 234.2L1666 237.8L1668 244.3L1670 250.4L1672 253.9L1674 254.1L1676 253.6L1678 252.6L1680 253.7L1682 254.9L1684 255.3L1686 254.6L1688 251.2L1690 248.7L1692 247.7L1694 248.5L1696 248.1L1698 245.5L1700 241.1L1702 236.1L1704 231.2L1706 228.8L1708 228.8L1710 230.7L1712 230.4L1714 229.4L1716 228.4L1718 228.9L1720 229.7L1722 230.5L1724 230L1726 228.3L1728 226.7L1730 226.4L1732 226.7L1734 228L1736 227.2L1738 224.8L1740 222L1742 222.1L1744 225.4L1746 230.4L1748 235.8L1750 239.1L1752 240.1L1754 241.3L1756 242.3L1758 244.9L1760 247.6L1762 250.8L1764 251L1766 250.3L1768 249.9L1770 250.7L1772 254L1774 254.5L1776 254.1L1778 250.5L1780 244.3L1782 239.9L1784 236.9L1786 238.1L1788 241.7L1790 244.8L1792 247.1L1794 247.5L1796 248.4L1798 249.7L1800 250.6L1802 250.1L1804 247.6L1806 244.9L1808 242.8L1810 241.5L1812 241.1L1814 240.8L1816 241.4L1818 241.7L1820 241.9L1822 244.2L1824 246.2L1826 247.6L1828 249L1830 247.3L1832 245.9L1834 244.4L1836 242.6L1838 240.1L1840 237.9L1842 236.2L1844 236.8L1846 240.8L1848 246L1850 251.4L1852 255.4L1854 256.4L1856 255.4L1858 253.3L1860 251.9L1862 252.9L1864 253.7L1866 254.3L1868 252.1L1870 249.8L1872 247L1874 245.6L1876 246L1878 244.8L1880 240.8L1882 235.5L1884 229.6L1886 226.7L1888 227.9L1890 230.5L1892 232L1894 231.7L1896 230.7L1898 228.2L1900 227.7L1902 229.1" stroke="#858585" stroke-opacity="0.75" stroke-width="1.5" fill="none"/><path d="M1186 235.5L1188 236.7L1190 237.5L1192 235.7L1194 233.5L1196 232.5L1198 232.7L1200 232.8L1202 233.3L1204 232.4L1206 233L1208 234.8L1210 239.2L1212 244L1214 247.7L1216 250.5L1218 250L1220 250.7L1222 251.1L1224 253.4L1226 256.9L1228 258.6L1230 259.2L1232 258.8L1234 258.6L1236 259.2L1238 260.6L1240 260.2L1242 258L1244 253.4L1246 248.1L1248 244.8L1250 246.8L1252 251.3L1254 256L1256 257.5L1258 257L1260 255.3L1262 255.7L1264 255.5L1266 257.3L1268 256.4L1270 253.8L1272 250L1274 247.4L1276 246.3L1278 248.8L1280 251.3L1282 251.5L1284 251.6L1286 250.5L1288 251.9L1290 253.1L1292 256.1L1294 255.7L1296 254.2L1298 250.5L1300 247.8L1302 245.9L1304 246L1306 246.8L1308 249.7L1310 252.6L1312 255.1L1314 257.9L1316 260.9L1318 263.4L1320 263.2L1322 262.7L1324 259.5L1326 258.5L1328 259.2L1330 259.4L1332 259.8L1334 257.9L1336 254.7L1338 251.8L1340 249.6L1342 248.6L1344 246.2L1346 242.4L1348 239.1L1350 235.2L1352 234.7L1354 235.9L1356 238.8L1358 239.2L1360 238.8L1362 237L1364 234L1366 233.9L1368 235.7L1370 236.4L1372 237.3L1374 235.4L1376 232.7L1378 230.8L1380 230.4L1382 232.4L1384 234L1386 235.9L1388 237.9L1390 240.3L1392 243.2L1394 247L1396 251L1398 252.6L1400 253.3L1402 252.6L1404 254L1406 256L1408 258.8L1410 260.8L1412 261.4L1414 259.6L1416 258.6L1418 258.3L1420 257.1L1422 255.9L1424 252L1426 247.5L1428 245.7L1430 246.9L1432 251.1L1434 256.4L1436 258.5L1438 258L1440 256.2L1442 254.4L1444 254.6L1446 255.3L1448 254.7L1450 254L1452 250.8L1454 246L1456 245L1458 246.8L1460 250.8L1462 253.4L1464 253.5L1466 252.6L1468 251.5L1470 252.8L1472 254.4L1474 255.9L1476 254.8L1478 251.9L1480 247.1L1482 243.5L1484 244.4L1486 247L1488 252.4L1490 256.1L1492 257.7L1494 259.1L1496 259.7L1498 261.3L1500 262.8L1502 263L1504 261.6L1506 259.4L1508 257.3L1510 257.9L1512 258.4L1514 257.6L1516 255.8L1518 251.9L1520 248.1L1522 244.7L1524 243L1526 241.4L1528 238.7L1530 237.1L1532 236.1L1534 235.8L1536 237.6L1538 238.7L1540 239.6L1542 237.7L1544 235.6L1546 234.4L1548 233.3L1550 234.8L1552 236.9L1554 236.1L1556 233.9L1558 230.7L1560 229.5L1562 230.1L1564 234.7L1566 238.9L1568 242.2L1570 243.4L1572 245.1L1574 246.1L1576 249.7L1578 253.7L1580 254.7L1582 255.5L1584 254.9L1586 255.1L1588 257.3L1590 259.8L1592 261.5L1594 261.2L1596 259.6L1598 257.5L1600 254.7L1602 251.8L1604 249.8L1606 249.3L1608 248.1L1610 249.7L1612 251.7L1614 255.5L1616 258L1618 259.6L1620 258.2L1622 255.6L1624 253.5L1626 252.3L1628 253.2L1630 252.2L1632 250.4L1634 247.8L1636 246.8L1638 247.1L1640 250L1642 252.7L1644 254.7L1646 253.9L1648 253.6L1650 252.2L1652 253.3L1654 254.2L1656 253.8L1658 251.2L1660 246.8L1662 243.3L1664 243.4L1666 247.9L1668 254.5L1670 259.1L1672 261.1L1674 260.9L1676 260.1L1678 260.5L1680 261.6L1682 262.7L1684 262.7L1686 260.5L1688 257.3L1690 255.6L1692 255.7L1694 256L1696 255.6L1698 252.8L1700 248.2L1702 242.8L1704 240.2L1706 237.7L1708 238.5L1710 238.1L1712 238.1L1714 237.2L1716 236.1L1718 236.2L1720 237.4L1722 237.8L1724 236.6L1726 235.2L1728 234.1L1730 233.3L1732 235L1734 235.8L1736 234.1L1738 232.7L1740 229.9L1742 230.8L1744 234.6L1746 239.5L1748 244.3L1750 246.7L1752 246.9L1754 247L1756 249L1758 251.9L1760 255.2L1762 256.7L1764 257.7L1766 256.8L1768 257.1L1770 259.1L1772 261.1L1774 262.4L1776 261.6L1778 257.7L1780 252.6L1782 249.2L1784 247.5L1786 248.9L1788 250.5L1790 253.4L1792 254.6L1794 255.4L1796 256.9L1798 257.8L1800 258.2L1802 257L1804 254.5L1806 252.4L1808 250.1L1810 249.5L1812 249.2L1814 249.2L1816 249.1L1818 248.4L1820 249.7L1822 251.3L1824 253.4L1826 255L1828 254.8L1830 254.3L1832 252.5L1834 251.5L1836 250.7L1838 249.3L1840 247.5L1842 245.3L1844 245.2L1846 249.6L1848 253.8L1850 259.2L1852 262.5L1854 263.1L1856 262L1858 260.4L1860 259.8L1862 261.3L1864 261.4L1866 261.3L1868 258.7L1870 256.1L1872 254.3L1874 253.9L1876 253L1878 252.1L1880 247.5L1882 242.3L1884 237.7L1886 236.2L1888 236L1890 238L1892 239.3L1894 239L1896 236.6L1898 235.5L1900 235.7L1902 236.6" stroke="#858585" stroke-opacity="0.75" stroke-width="1.5" fill="none"/><path d="M1186 243.7L1188 243.9L1190 243.4L1192 241.9L1194 240L1196 240.2L1198 241.4L1200 241.4L1202 241.7L1204 241.2L1206 240.3L1208 242.5L1210 247L1212 252.1L1214 255L1216 257L1218 257.1L1220 256.6L1222 258.7L1224 261.7L1226 264L1228 265.6L1230 266.3L1232 265.2L1234 265.7L1236 266.4L1238 267.6L1240 268L1242 265.9L1244 260.7L1246 256.6L1248 255.4L1250 256.9L1252 261.4L1254 263.3L1256 264.4L1258 263.2L1260 262.2L1262 263.3L1264 263.3L1266 264.3L1268 262.7L1270 260.5L1272 257.4L1274 254.4L1276 255.6L1278 256.8L1280 258.6L1282 258.2L1284 258.3L1286 258.2L1288 259.8L1290 261.4L1292 262.3L1294 262.9L1296 261.2L1298 258L1300 256.8L1302 254.9L1304 255.7L1306 256.9L1308 259L1310 260.1L1312 262.8L1314 266.3L1316 268.9L1318 271L1320 269.7L1322 268.6L1324 266.3L1326 266.6L1328 266.5L1330 267.2L1332 266.7L1334 264.9L1336 261.7L1338 259.1L1340 257.4L1342 256.8L1344 255L1346 250.7L1348 246L1350 243.9L1352 243.9L1354 244.7L1356 246.1L1358 246.7L1360 244.9L1362 243.1L1364 241.5L1366 242.2L1368 242.7L1370 244.2L1372 243.6L1374 241.3L1376 239.9L1378 238.7L1380 239L1382 240.8L1384 242.4L1386 243.3L1388 245.8L1390 248.2L1392 250.8L1394 254.7L1396 257.4L1398 259.7L1400 259.6L1402 259.8L1404 260.8L1406 263.9L1408 266.4L1410 267.4L1412 267.2L1414 266.5L1416 265.8L1418 266.3L1420 266L1422 263.8L1424 261L1426 257L1428 255.5L1430 257.1L1432 261L1434 264.4L1436 265.4L1438 265.2L1440 263.6L1442 262L1444 262.2L1446 262.5L1448 262.6L1450 260.4L1452 257.7L1454 254.2L1456 254.1L1458 256L1460 259L1462 260.3L1464 259.8L1466 258.4L1468 259L1470 260.2L1472 261.7L1474 263.6L1476 261.7L1478 259.5L1480 255.3L1482 253L1484 253.8L1486 258L1488 261.5L1490 264.4L1492 264.7L1494 266.5L1496 267.5L1498 269.1L1500 271L1502 269.5L1504 267.9L1506 265.8L1508 264.8L1510 265.4L1512 265.5L1514 264.8L1516 262.7L1518 258.9L1520 255.8L1522 253L1524 252.1L1526 249.4L1528 247.6L1530 244.2L1532 243.9L1534 244.3L1536 245.4L1538 245.8L1540 245.9L1542 244.3L1544 242.3L1546 241.1L1548 240.8L1550 243.3L1552 244.3L1554 243.3L1556 240.9L1558 238.5L1560 238.4L1562 239.8L1564 242.7L1566 247L1568 248.6L1570 250.4L1572 251.8L1574 254.9L1576 258L1578 260.8L1580 261.2L1582 261.8L1584 261.1L1586 263.2L1588 265.1L1590 267.3L1592 269.3L1594 268.8L1596 266.4L1598 264.3L1600 263.2L1602 261.7L1604 259.3L1606 257.8L1608 256.8L1610 258.6L1612 261L1614 263.2L1616 266.4L1618 266.3L1620 264.1L1622 261.7L1624 259.9L1626 260.3L1628 261.1L1630 260L1632 258L1634 255.4L1636 253.7L1638 255.3L1640 258L1642 260.5L1644 261.8L1646 260.6L1648 259.7L1650 259.6L1652 260.1L1654 262.4L1656 261.5L1658 258.7L1660 255.5L1662 252.7L1664 252.9L1666 257.4L1668 262.9L1670 266.1L1672 268.1L1674 267.2L1676 267.1L1678 267.7L1680 269.6L1682 270.5L1684 268.9L1686 267.2L1688 265L1690 263.4L1692 263.6L1694 264.2L1696 262.9L1698 258.8L1700 254.8L1702 251.1L1704 248.6L1706 247.9L1708 246.6L1710 246.6L1712 244.5L1714 243.9L1716 243L1718 244L1720 245.7L1722 244.6L1724 243.8L1726 241.5L1728 240.9L1730 241.8L1732 243L1734 243.7L1736 241.7L1738 240.2L1740 238L1742 239.3L1744 243.6L1746 247.6L1748 251.7L1750 253.1L1752 253.4L1754 254.1L1756 256.7L1758 260.2L1760 263.2L1762 264L1764 263.9L1766 263.9L1768 263.8L1770 266.5L1772 268.5L1774 269.8L1776 267.9L1778 264.9L1780 260.8L1782 258.3L1784 257.9L1786 259L1788 259.1L1790 261L1792 261L1794 262.3L1796 264.4L1798 265.5L1800 265L1802 263.8L1804 261L1806 258.8L1808 258.4L1810 258.3L1812 257.9L1814 256.4L1816 255.9L1818 256.1L1820 256.6L1822 259.2L1824 261L1826 262.1L1828 262.1L1830 260.6L1832 259.9L1834 259.4L1836 259.8L1838 258.8L1840 255.5L1842 253.9L1844 255.2L1846 258.6L1848 263.5L1850 267.4L1852 269.1L1854 269.2L1856 267.4L1858 266.6L1860 267L1862 268.1L1864 269L1866 267.8L1868 265L1870 262.5L1872 262.1L1874 260.9L1876 260.9L1878 259.4L1880 255.3L1882 250.5L1884 246.3L1886 244.6L1888 245.3L1890 246.7L1892 247.1L1894 245.5L1896 243.1L1898 242.8L1900 243.7L1902 244.7" stroke="#858585" stroke-opacity="0.75" stroke-width="1.5" fill="none"/><path d="M1186 251.3L1188 250.9L1190 250.7L1192 249L1194 247.5L1196 248.2L1198 248.8L1200 249.4L1202 249L1204 248.7L1206 248.5L1208 251.8L1210 254.8L1212 259.1L1214 261.6L1216 263.4L1218 263.1L1220 264L1222 266L1224 269.4L1226 271.6L1228 272.4L1230 272.4L1232 271.8L1234 272.2L1236 274.8L1238 276.1L1240 275.8L1242 273.5L1244 268.9L1246 265.7L1248 265.1L1250 267.1L1252 270.2L1254 271L1256 271.3L1258 270.4L1260 269.7L1262 269.9L1264 271.5L1266 270.4L1268 269.3L1270 266.1L1272 263.7L1274 262.9L1276 263.2L1278 264.5L1280 265.8L1282 265.6L1284 264.6L1286 265.4L1288 266.9L1290 268.9L1292 270.3L1294 269.1L1296 268.2L1298 266.4L1300 265.6L1302 264.6L1304 265L1306 265.4L1308 266.7L1310 269.1L1312 271.6L1314 274.6L1316 276.2L1318 277.7L1320 276.9L1322 275.2L1324 273.9L1326 273.2L1328 274L1330 275L1332 273.6L1334 271.2L1336 267.9L1338 266.7L1340 265.1L1342 265.2L1344 262.7L1346 258.2L1348 253.8L1350 252L1352 252.2L1354 253.2L1356 253.8L1358 253.4L1360 252L1362 249.1L1364 249.3L1366 249.2L1368 250.3L1370 250.5L1372 250.6L1374 248.8L1376 247L1378 246.9L1380 248.6L1382 250.1L1384 250L1386 251.5L1388 253.2L1390 255.4L1392 259.2L1394 263L1396 264.6L1398 265.4L1400 265.9L1402 266.4L1404 268.4L1406 271L1408 274.1L1410 274.1L1412 274L1414 273.6L1416 273.2L1418 273.6L1420 274.1L1422 272.2L1424 268.9L1426 265.4L1428 264.5L1430 266.3L1432 269.8L1434 272.7L1436 273.2L1438 271.8L1440 269.6L1442 269.1L1444 269.4L1446 269.6L1448 269.7L1450 267.2L1452 264.5L1454 262.3L1456 261.8L1458 264.1L1460 266.4L1462 266.9L1464 265.9L1466 265L1468 266.5L1470 267.9L1472 269.5L1474 270.5L1476 268.7L1478 266.6L1480 264.4L1482 263.4L1484 264.4L1486 267.8L1488 270.3L1490 270.8L1492 272.2L1494 273.5L1496 275.1L1498 277.2L1500 277L1502 276.5L1504 274.6L1506 272.1L1508 272.7L1510 272.7L1512 273.1L1514 271.7L1516 269.1L1518 265.8L1520 263L1522 262L1524 259.8L1526 258.2L1528 254.8L1530 252.1L1532 250.9L1534 251.5L1536 253.4L1538 253.2L1540 252.4L1542 250.2L1544 248.2L1546 248.4L1548 249.2L1550 250.7L1552 251.4L1554 249.8L1556 247.3L1558 246.1L1560 246.9L1562 249.2L1564 252.3L1566 254.2L1568 255.2L1570 256.9L1572 259.5L1574 261.9L1576 265.8L1578 267.9L1580 268.1L1582 267.9L1584 268L1586 269.9L1588 272.4L1590 275.2L1592 275.8L1594 275.3L1596 273.4L1598 273L1600 271.8L1602 270.6L1604 268.6L1606 266.8L1608 265.9L1610 267.3L1612 268.9L1614 271.5L1616 273.6L1618 272.6L1620 270.8L1622 268.2L1624 268.2L1626 268.6L1628 268.9L1630 268.1L1632 264.8L1634 261.9L1636 261.4L1638 263.7L1640 265.8L1642 267.5L1644 267.7L1646 266.8L1648 266.2L1650 267.2L1652 268.7L1654 270L1656 269.8L1658 266.7L1660 264.2L1662 261.9L1664 263.6L1666 266.8L1668 272L1670 273.6L1672 274.5L1674 274.2L1676 274.5L1678 275.7L1680 276.7L1682 277.2L1684 275.9L1686 273.2L1688 271.9L1690 271.3L1692 270.7L1694 271.2L1696 268.6L1698 266L1700 261.9L1702 259.5L1704 256.7L1706 256.8L1708 254.7L1710 253.2L1712 251.5L1714 250.7L1716 251.9L1718 252.6L1720 253.1L1722 251.3L1724 250L1726 248.4L1728 248.1L1730 248.7L1732 250.9L1734 250.9L1736 249.4L1738 246.9L1740 246.3L1742 248.5L1744 251.9L1746 255.8L1748 258.8L1750 259.3L1752 260.5L1754 261.2L1756 264.6L1758 267.9L1760 269.1L1762 270.4L1764 269.7L1766 270.4L1768 272.1L1770 273.9L1772 276.7L1774 275.9L1776 274L1778 271.8L1780 269L1782 267.8L1784 268.2L1786 267.5L1788 268.3L1790 269L1792 269.2L1794 271L1796 272.5L1798 272.3L1800 271.3L1802 270L1804 267.9L1806 266.8L1808 266.6L1810 266.3L1812 265.9L1814 264.1L1816 263.2L1818 263.7L1820 264.3L1822 267.3L1824 268.7L1826 268.2L1828 267.6L1830 267.3L1832 267.1L1834 268L1836 268.1L1838 267.3L1840 265.3L1842 263.7L1844 264L1846 267.6L1848 271.4L1850 274.9L1852 276.5L1854 276L1856 274L1858 273.8L1860 275.1L1862 275.9L1864 275.5L1866 273.8L1868 271.6L1870 270.1L1872 268.6L1874 269.5L1876 268L1878 265.8L1880 262.2L1882 257.1L1884 254.5L1886 253.5L1888 254L1890 255.1L1892 253.2L1894 252L1896 250.9L1898 250L1900 251.5L1902 251.4" stroke="#858585" stroke-opacity="0.75" stroke-width="1.5" fill="none"/><path d="M1186 258.1L1188 258.4L1190 257L1192 255L1194 254.6L1196 255.6L1198 256.8L1200 257.4L1202 256.7L1204 256.7L1206 256.6L1208 259.3L1210 264.1L1212 267.6L1214 268.5L1216 269.3L1218 270.5L1220 271.1L1222 274L1224 277L1226 278.9L1228 278.7L1230 279.1L1232 279.3L1234 280.1L1236 282L1238 283.7L1240 283.5L1242 281L1244 277L1246 275.7L1248 275.5L1250 277.7L1252 279.3L1254 279.1L1256 278.7L1258 277.9L1260 277L1262 278.1L1264 279.1L1266 277.4L1268 275.5L1270 273.5L1272 271.7L1274 272L1276 271.9L1278 273L1280 272.8L1282 271.5L1284 272.1L1286 273.1L1288 275L1290 275.9L1292 276.7L1294 275.4L1296 274.9L1298 274.2L1300 274.8L1302 274.4L1304 274.8L1306 274.5L1308 275.9L1310 277L1312 278.9L1314 282.5L1316 284L1318 284.1L1320 283.3L1322 281.7L1324 280.7L1326 281L1328 281.8L1330 281.5L1332 279.4L1334 276.7L1336 274.9L1338 274.3L1340 273.5L1342 272.3L1344 269.2L1346 266.4L1348 262.1L1350 260.3L1352 261L1354 262.2L1356 261.3L1358 259.9L1360 257.8L1362 257L1364 256.3L1366 256.7L1368 258.2L1370 257.7L1372 256L1374 254.6L1376 254.7L1378 256.3L1380 257L1382 258.7L1384 258.3L1386 258.7L1388 260L1390 263.5L1392 266.5L1394 270.6L1396 271.8L1398 271.5L1400 272.4L1402 273.5L1404 276.2L1406 278.9L1408 280.1L1410 280.8L1412 280.4L1414 279.5L1416 281.3L1418 282.4L1420 282.1L1422 280.4L1424 277.6L1426 275.2L1428 274.5L1430 275.7L1432 278.9L1434 280.4L1436 279.4L1438 278.1L1440 276.8L1442 276.7L1444 276.6L1446 276.9L1448 276.7L1450 274.7L1452 271.5L1454 270.6L1456 270.6L1458 272.1L1460 274.1L1462 273.6L1464 273.3L1466 272.8L1468 272.9L1470 275.1L1472 277.3L1474 276.7L1476 275.6L1478 273.4L1480 273L1482 273.7L1484 274.9L1486 277.1L1488 277.6L1490 279.2L1492 280.2L1494 281.6L1496 282.8L1498 284.2L1500 284.7L1502 282.8L1504 280.6L1506 279.5L1508 279.5L1510 280.9L1512 280.1L1514 277.5L1516 274.6L1518 273L1520 271.4L1522 269.4L1524 268.2L1526 266.4L1528 262.7L1530 260.7L1532 259.4L1534 259.9L1536 261.5L1538 260.6L1540 259.7L1542 257.3L1544 255L1546 256.1L1548 257.3L1550 257.4L1552 257.8L1554 256.4L1556 254.7L1558 254.9L1560 256.3L1562 258.5L1564 260.5L1566 261.5L1568 262.8L1570 264.4L1572 266.3L1574 270.1L1576 272.5L1578 274.6L1580 274.2L1582 274.6L1584 275.6L1586 277.5L1588 280.5L1590 282.4L1592 282.3L1594 281.7L1596 280.8L1598 280L1600 280.7L1602 280L1604 277.7L1606 276.5L1608 275L1610 275.4L1612 278L1614 280.1L1616 280.9L1618 279.8L1620 277.3L1622 275.6L1624 275.3L1626 275.5L1628 275.5L1630 275L1632 272.5L1634 269.5L1636 269.5L1638 271.1L1640 273.3L1642 275.2L1644 274.5L1646 273.4L1648 273.5L1650 274.5L1652 275.8L1654 277.5L1656 276.7L1658 274.6L1660 272.3L1662 271.7L1664 273.4L1666 276.5L1668 280.4L1670 281.2L1672 280.9L1674 281L1676 282.3L1678 282.7L1680 284.6L1682 283.4L1684 281.2L1686 280.2L1688 278.3L1690 279.1L1692 278.3L1694 277.6L1696 275.9L1698 272L1700 269.7L1702 267.2L1704 266.7L1706 265L1708 263.6L1710 261L1712 259.2L1714 258.7L1716 258.9L1718 259.9L1720 259.4L1722 258.2L1724 255.7L1726 254.7L1728 255.1L1730 256.7L1732 258.5L1734 258.3L1736 256.2L1738 255.1L1740 255.4L1742 257.7L1744 260.8L1746 263.2L1748 265.4L1750 265.8L1752 266.6L1754 268.8L1756 272.6L1758 274.7L1760 276.2L1762 276.4L1764 276.3L1766 277.5L1768 279.3L1770 281.6L1772 283.4L1774 282.3L1776 281.6L1778 280L1780 278L1782 278.1L1784 278.2L1786 276.9L1788 277.2L1790 276.3L1792 276.6L1794 278L1796 279.6L1798 279.6L1800 278.5L1802 276.1L1804 274.8L1806 274.1L1808 274.2L1810 273.7L1812 273.4L1814 271L1816 270.7L1818 270.3L1820 272.3L1822 275.1L1824 276L1826 274.8L1828 274.6L1830 274.3L1832 275L1834 276.4L1836 276.4L1838 275.6L1840 274L1842 272.6L1844 272.9L1846 276.4L1848 280.3L1850 282.4L1852 282.9L1854 281.7L1856 281.8L1858 281.4L1860 283.4L1862 283.9L1864 282.5L1866 280.2L1868 278.7L1870 276.7L1872 276.9L1874 277L1876 275.6L1878 273.1L1880 269.2L1882 265.6L1884 263.1L1886 263.4L1888 263.3L1890 261.8L1892 260.5L1894 258.3L1896 257.7L1898 257.7L1900 258.4L1902 258.3" stroke="#858585" stroke-opacity="0.75" stroke-width="1.5" fill="none"/><path d="M1186 266.1L1188 264.2L1190 262.5L1192 261.5L1194 262.7L1196 264.3L1198 265.8L1200 265.7L1202 264.9L1204 264.6L1206 265.4L1208 268.3L1210 271.3L1212 273.9L1214 276.1L1216 276.4L1218 277.3L1220 278.9L1222 281.6L1224 283.8L1226 286L1228 285.7L1230 285.9L1232 286.4L1234 288.1L1236 289.9L1238 291.1L1240 289.9L1242 288.2L1244 285.9L1246 285.3L1248 286.3L1250 287.4L1252 287.6L1254 286.7L1256 285L1258 285.1L1260 285L1262 285.6L1264 286.1L1266 284.2L1268 282.3L1270 280L1272 280L1274 280.7L1276 280.8L1278 280.9L1280 279.8L1282 279.2L1284 278.9L1286 280.1L1288 282.7L1290 283.5L1292 283.7L1294 282.1L1296 281.5L1298 282.3L1300 283.5L1302 283.8L1304 283.9L1306 284.1L1308 283.5L1310 284.9L1312 288.2L1314 290.6L1316 291.8L1318 290.6L1320 290L1322 288.1L1324 288.5L1326 288.7L1328 289.9L1330 288L1332 285.7L1334 283.3L1336 282.1L1338 280.9L1340 281.4L1342 280.3L1344 277.5L1346 273.9L1348 270.8L1350 269.3L1352 269.5L1354 269.5L1356 269L1358 267.1L1360 264.8L1362 264.1L1364 264.2L1366 264.5L1368 265.5L1370 264.1L1372 262.9L1374 261.7L1376 262.9L1378 263.6L1380 265.2L1382 266.7L1384 266.8L1386 266.7L1388 268.7L1390 271.4L1392 274.2L1394 276.8L1396 278.4L1398 278.8L1400 279.1L1402 281.5L1404 284.2L1406 285.6L1408 286.9L1410 287.5L1412 287.4L1414 287.3L1416 288.9L1418 290.2L1420 290.5L1422 288.3L1424 286.7L1426 284.8L1428 284.8L1430 286.5L1432 287.8L1434 287.4L1436 286.7L1438 284.2L1440 284.1L1442 284.5L1444 284.3L1446 284.1L1448 283.5L1450 281.3L1452 278.6L1454 278.8L1456 279.6L1458 280.2L1460 281.3L1462 281L1464 279.4L1466 279L1468 280.4L1470 283.1L1472 284.7L1474 283.6L1476 283L1478 281.9L1480 281.9L1482 283.3L1484 284.6L1486 285.6L1488 286.1L1490 286.7L1492 287.4L1494 288.7L1496 290.6L1498 291L1500 291.1L1502 288.9L1504 287.1L1506 287.8L1508 287.9L1510 288.3L1512 286.7L1514 284L1516 281.3L1518 279.9L1520 279.4L1522 277.9L1524 276.6L1526 273.8L1528 270.8L1530 268.7L1532 267.9L1534 267.6L1536 268.8L1538 267.6L1540 266.2L1542 264L1544 263L1546 263.7L1548 264.8L1550 264.6L1552 264.9L1554 263.3L1556 262.5L1558 262.8L1560 265.1L1562 266.9L1564 268.4L1566 269.1L1568 270.3L1570 271.5L1572 274.4L1574 276.8L1576 279.1L1578 280.5L1580 281.2L1582 281.7L1584 283.1L1586 285.4L1588 288L1590 289.4L1592 288.3L1594 288L1596 287.2L1598 288.5L1600 289L1602 289.5L1604 287.2L1606 285.4L1608 284.6L1610 284.8L1612 286.6L1614 287.9L1616 287.9L1618 286.3L1620 283.9L1622 282.7L1624 282.5L1626 283.8L1628 283.9L1630 282L1632 279.1L1634 278.4L1636 278.1L1638 280.2L1640 281L1642 281.9L1644 280.6L1646 280.2L1648 279.9L1650 282.2L1652 283.7L1654 285.2L1656 284.1L1658 282.8L1660 281.1L1662 281.6L1664 283.6L1666 286.6L1668 287.6L1670 288.9L1672 288.2L1674 288.4L1676 289.3L1678 291.3L1680 291.4L1682 289.8L1684 288.1L1686 286.1L1688 286L1690 285.6L1692 285.9L1694 285L1696 282L1698 278.9L1700 277.1L1702 275.4L1704 274.4L1706 273.8L1708 271.6L1710 268.4L1712 266.6L1714 267L1716 267L1718 266.6L1720 266L1722 264.9L1724 262.2L1726 261.7L1728 263.2L1730 264.3L1732 264.7L1734 264.2L1736 262.8L1738 262.3L1740 263.8L1742 266.1L1744 268.6L1746 271.3L1748 272.5L1750 272.3L1752 274.5L1754 277.2L1756 279.4L1758 282.4L1760 282.8L1762 283.6L1764 283.3L1766 285.1L1768 287.6L1770 288.8L1772 290.2L1774 288.8L1776 287.8L1778 287.4L1780 286.9L1782 288.1L1784 286.9L1786 286.3L1788 284.7L1790 285L1792 285.8L1794 286.6L1796 286.9L1798 287.1L1800 285.3L1802 282.8L1804 282L1806 281.9L1808 282.7L1810 282.5L1812 280.2L1814 278.6L1816 278L1818 279.1L1820 280L1822 282L1824 282.5L1826 281.5L1828 280.7L1830 281.4L1832 283.1L1834 284.6L1836 285.4L1838 284.4L1840 282.4L1842 282.2L1844 282.9L1846 285.8L1848 288.6L1850 289.8L1852 289.1L1854 288.5L1856 288.4L1858 289.4L1860 290.4L1862 290.6L1864 289.4L1866 286.8L1868 285.1L1870 284.5L1872 284.5L1874 284.1L1876 282.8L1878 279.3L1880 276.7L1882 273.6L1884 272.2L1886 272.1L1888 271.4L1890 270.3L1892 267.1L1894 266L1896 264.9L1898 265.1L1900 266.1L1902 265.5" stroke="#858585" stroke-opacity="0.75" stroke-width="1.5" fill="none"/><path d="M1186 279.3L1188 277.8L1190 275.9L1192 276.8L1194 278.2L1196 279.9L1198 280.4L1200 279.9L1202 280.2L1204 280L1206 282.4L1208 284.6L1210 287.7L1212 288.5L1214 289.1L1216 288.9L1218 291.3L1220 294.1L1222 296.1L1224 297.8L1226 298.2L1228 298.4L1230 299.6L1232 300.5L1234 303.8L1236 304.8L1238 304.8L1240 303.9L1242 303L1244 303.7L1246 304.3L1248 305.9L1250 305.3L1252 303.5L1254 301.9L1256 300.7L1258 300.7L1260 300.3L1262 300.7L1264 299L1266 297.9L1268 295.3L1270 295.1L1272 296L1274 297L1276 296.4L1278 295.9L1280 293.8L1282 293.9L1284 294L1286 295.6L1288 297.2L1290 297.1L1292 296.3L1294 296.4L1296 297.5L1298 298.7L1300 301L1302 302.2L1304 302.9L1306 301.9L1308 301.4L1310 303.2L1312 304.3L1314 305.4L1316 305.9L1318 303.9L1320 302.5L1322 302.2L1324 303.4L1326 304L1328 303.3L1330 301.3L1332 299L1334 297.9L1336 296.6L1338 296.4L1340 295.7L1342 293.6L1344 291.1L1346 288.7L1348 287.4L1350 286.3L1352 286.3L1354 285.6L1356 282.7L1358 279.9L1360 278.2L1362 278.8L1364 279.2L1366 278.9L1368 278.8L1370 276.8L1372 276.2L1374 276.8L1376 278.4L1378 280.5L1380 281L1382 281.2L1384 281.3L1386 282.6L1388 284.3L1390 287.5L1392 289.8L1394 291.1L1396 291.7L1398 291.8L1400 293.3L1402 295.8L1404 298.9L1406 299.9L1408 301.1L1410 300.9L1412 301L1414 302.9L1416 304.4L1418 306.3L1420 305.9L1422 304.7L1424 303.4L1426 304.1L1428 304.2L1430 304.7L1432 304.4L1434 302.2L1436 300.7L1438 298.7L1440 298.5L1442 298.9L1444 299.4L1446 298.2L1448 296.5L1450 294.3L1452 295.1L1454 294.7L1456 296.5L1458 296.7L1460 295.7L1462 294.1L1464 293.8L1466 295.1L1468 296.2L1470 297.6L1472 298.2L1474 297.4L1476 297L1478 299.1L1480 300.4L1482 303.1L1484 303.6L1486 303.5L1488 303.2L1490 302.7L1492 303.8L1494 305.4L1496 305.7L1498 304.9L1500 303.6L1502 302.1L1504 301.3L1506 302.2L1508 302.9L1510 302.1L1512 299.5L1514 297.4L1516 295.3L1518 294.8L1520 293.9L1522 294.3L1524 291.5L1526 289.5L1528 286.3L1530 284.2L1532 284.3L1534 284L1536 283.6L1538 280.5L1540 278.4L1542 277.7L1544 277.7L1546 277.8L1548 279.4L1550 278.3L1552 277.7L1554 276.4L1556 277.1L1558 280L1560 282.1L1562 283.8L1564 283.4L1566 284L1568 284.4L1570 287.1L1572 289.7L1574 291.7L1576 293.1L1578 294.1L1580 294.2L1582 296L1584 298.4L1586 300.7L1588 301.8L1590 301.8L1592 301.8L1594 301.5L1596 303L1598 305.1L1600 305.7L1602 305.9L1604 304.7L1606 303.4L1608 302.6L1610 303.5L1612 303.9L1614 303.8L1616 301.2L1618 299.6L1620 297.7L1622 298.2L1624 298.7L1626 298.5L1628 297L1630 295.4L1632 294.7L1634 293.8L1636 294.4L1638 295.5L1640 296.6L1642 295.1L1644 294.4L1646 294L1648 295.3L1650 297.7L1652 299.1L1654 299.7L1656 298.8L1658 298.7L1660 300.2L1662 301.9L1664 303.4L1666 304.9L1668 304.6L1670 302.8L1672 302.6L1674 303.2L1676 305.3L1678 305.2L1680 305.2L1682 303.4L1684 301.1L1686 301L1688 301.2L1690 301.4L1692 300.4L1694 297.8L1696 295.3L1698 292.9L1700 292.1L1702 292.2L1704 290.9L1706 289.9L1708 286.3L1710 283.9L1712 282.7L1714 282.9L1716 282.3L1718 281.2L1720 279.3L1722 277.8L1724 276.2L1726 276.9L1728 278.6L1730 278.6L1732 278.8L1734 277.7L1736 277.8L1738 278.6L1740 281.4L1742 283.5L1744 285L1746 285.4L1748 286.3L1750 286.7L1752 289.4L1754 292.1L1756 293.9L1758 295.6L1760 295.6L1762 296.4L1764 297.7L1766 299.5L1768 302L1770 303.3L1772 303.1L1774 303.3L1776 302.7L1778 304L1780 305.9L1782 305.8L1784 305.8L1786 304.4L1788 302L1790 302.1L1792 302.5L1794 303.2L1796 301.6L1798 300.3L1800 297.4L1802 296.3L1804 296.4L1806 297.7L1808 297.7L1810 296.7L1812 294.5L1814 293.8L1816 293.6L1818 294.4L1820 295.7L1822 296L1824 295.6L1826 294.8L1828 295L1830 296.5L1832 298.6L1834 300.6L1836 300.3L1838 300.6L1840 299.9L1842 301.5L1844 303.5L1846 304.8L1848 305.6L1850 305.2L1852 303.5L1854 303.4L1856 303.2L1858 304.9L1860 305.3L1862 304.3L1864 301.9L1866 300.6L1868 299.3L1870 299.9L1872 298.9L1874 298.5L1876 295.8L1878 292.7L1880 290.6L1882 290.3L1884 289.7L1886 288.5L1888 287.5L1890 284.1L1892 282.2L1894 280.5L1896 281.1L1898 281.2L1900 279.7L1902 278.5" stroke="#858585" stroke-opacity="0.75" stroke-width="1.5" fill="none"/><path d="M1186 285.8L1188 284L1190 283L1192 284L1194 285.2L1196 286.3L1198 287.3L1200 286.2L1202 287.3L1204 288.1L1206 289.7L1208 292.5L1210 295.1L1212 295.4L1214 295.4L1216 296.1L1218 298.8L1220 301.8L1222 303.4L1224 305.4L1226 304.9L1228 305.7L1230 306L1232 309.2L1234 310.9L1236 313.1L1238 313.1L1240 312L1242 311.5L1244 312.6L1246 314.9L1248 315.4L1250 314.6L1252 312.6L1254 309.8L1256 309.1L1258 308.3L1260 309.1L1262 308.3L1264 305.8L1266 304.3L1268 303.1L1270 302.8L1272 303.9L1274 305L1276 304.7L1278 302.2L1280 300.7L1282 301.3L1284 302.2L1286 303.2L1288 305L1290 303.8L1292 303.7L1294 303.5L1296 306.2L1298 308.2L1300 310.1L1302 311.6L1304 310.6L1306 310L1308 310.8L1310 312.8L1312 313.2L1314 314.3L1316 312.8L1318 311.6L1320 310L1322 310.1L1324 311.4L1326 311.4L1328 309.7L1330 308.4L1332 306.2L1334 305L1336 304.9L1338 304.3L1340 302.9L1342 301.2L1344 298L1346 295.2L1348 294.8L1350 294.1L1352 294.1L1354 291.7L1356 289.6L1358 286.9L1360 285.2L1362 285.9L1364 287L1366 286.2L1368 285.7L1370 283.4L1372 283.5L1374 284.3L1376 286L1378 288.5L1380 289.1L1382 288.5L1384 288.9L1386 289.8L1388 292.1L1390 294.3L1392 297.3L1394 297.1L1396 297.9L1398 298.1L1400 301.1L1402 304.2L1404 306.1L1406 307L1408 307.2L1410 307.7L1412 308.3L1414 310.7L1416 313.1L1418 314.3L1420 314.3L1422 313.1L1424 311.9L1426 312.7L1428 314L1430 314.4L1432 313L1434 310.9L1436 308.5L1438 306.9L1440 306.9L1442 307L1444 307.4L1446 304.9L1448 303.4L1450 302.7L1452 302.6L1454 303.6L1456 304.8L1458 303.3L1460 302.2L1462 301L1464 301.6L1466 302L1468 304.8L1470 305.1L1472 306L1474 304.8L1476 305.7L1478 307L1480 310.6L1482 312.6L1484 312.4L1486 312.4L1488 311.1L1490 311.2L1492 312.9L1494 312.9L1496 313L1498 312.8L1500 311L1502 309.8L1504 309.8L1506 309.6L1508 309.9L1510 308.5L1512 306.7L1514 303.9L1516 302.2L1518 301.9L1520 302.4L1522 300.5L1524 298.1L1526 295.9L1528 293.5L1530 292.3L1532 292.4L1534 291.2L1536 289.5L1538 287.9L1540 285.8L1542 284.7L1544 285.2L1546 286L1548 286.6L1550 284.7L1552 283.5L1554 283.8L1556 284.7L1558 287L1560 289.3L1562 290.3L1564 290L1566 290.1L1568 291.7L1570 294.5L1572 297.5L1574 298.6L1576 299.7L1578 300.4L1580 300.6L1582 302.6L1584 305.5L1586 308L1588 309.5L1590 309L1592 308.5L1594 309.6L1596 312.1L1598 313.6L1600 314.5L1602 314.7L1604 312.5L1606 311.8L1608 312L1610 312.9L1612 312.4L1614 311.8L1616 308.6L1618 307L1620 305.6L1622 306.1L1624 306.1L1626 306L1628 304.3L1630 302.9L1632 301.8L1634 302.7L1636 303.8L1638 304.5L1640 303.3L1642 301.8L1644 300.8L1646 301.2L1648 303.8L1650 305.1L1652 306.6L1654 306.9L1656 306.5L1658 307.4L1660 309.7L1662 311.6L1664 313.4L1666 313.3L1668 311.8L1670 311.2L1672 310.8L1674 311.7L1676 312.5L1678 313.2L1680 312.2L1682 310.1L1684 307.9L1686 308L1688 308.7L1690 309L1692 306.9L1694 304.2L1696 302.2L1698 300.7L1700 300.4L1702 299.3L1704 299.1L1706 296L1708 293.4L1710 291.2L1712 290L1714 290.1L1716 289.9L1718 288L1720 285.5L1722 284.6L1724 283.6L1726 284.7L1728 285.2L1730 285.8L1732 285.6L1734 284.9L1736 284.7L1738 286.3L1740 289.6L1742 291.5L1744 291.8L1746 292.6L1748 293L1750 294.2L1752 296.6L1754 299.5L1756 301.8L1758 301.8L1760 302.6L1762 303.3L1764 305.6L1766 307.5L1768 310L1770 311.2L1772 310.8L1774 309.9L1776 311.2L1778 312.8L1780 314.4L1782 315.2L1784 314.2L1786 313L1788 310.9L1790 310.9L1792 311.4L1794 310.8L1796 309.9L1798 307.4L1800 304.9L1802 304.5L1804 304.1L1806 304.8L1808 305.7L1810 304.1L1812 302.9L1814 301.6L1816 301.8L1818 303.2L1820 304.2L1822 304.2L1824 302.9L1826 301.5L1828 303L1830 305L1832 307.5L1834 309.1L1836 308.7L1838 308.1L1840 309.6L1842 310.2L1844 312.7L1846 313.9L1848 314.1L1850 312.2L1852 310.6L1854 310.9L1856 311.7L1858 312.2L1860 312.5L1862 311.4L1864 308.4L1866 307.3L1868 306.6L1870 307.5L1872 306.6L1874 305.6L1876 302.1L1878 299.5L1880 298.7L1882 297.9L1884 297.5L1886 296.1L1888 294.2L1890 291.3L1892 288.3L1894 287.4L1896 287.6L1898 287.7L1900 286.5L1902 285.5" stroke="#858585" stroke-opacity="0.75" stroke-width="1.5" fill="none"/><path d="M1186 292.7L1188 290.9L1190 289.6L1192 290.9L1194 292.7L1196 294.2L1198 293.9L1200 293.5L1202 294.1L1204 295.7L1206 298.6L1208 300L1210 301.7L1212 302.1L1214 302L1216 302.8L1218 306.4L1220 309.6L1222 310.8L1224 311.7L1226 311.6L1228 311.7L1230 314.2L1232 316.6L1234 318.8L1236 320.3L1238 320.4L1240 319.9L1242 320.9L1244 322.5L1246 324L1248 324.9L1250 323.3L1252 320.6L1254 318.2L1256 317.2L1258 318L1260 317.4L1262 315.5L1264 312.8L1266 311.1L1268 309.9L1270 310.7L1272 312.3L1274 312.1L1276 312L1278 309.4L1280 309.2L1282 309.1L1284 309.8L1286 311.7L1288 311.1L1290 310.4L1292 310.7L1294 311.8L1296 314.4L1298 317.6L1300 318.9L1302 319.7L1304 319.7L1306 319.8L1308 320.2L1310 321.6L1312 323.1L1314 321.3L1316 320.3L1318 318.6L1320 317.2L1322 317.5L1324 318.6L1326 318.5L1328 317.5L1330 314.5L1332 312.1L1334 312.1L1336 311.7L1338 312L1340 309.9L1342 307.9L1344 304.7L1346 303.3L1348 302.4L1350 302.9L1352 301.8L1354 298.7L1356 295.3L1358 293.9L1360 292.9L1362 294L1364 294.6L1366 293.8L1368 292L1370 290.5L1372 290.4L1374 291.5L1376 293.6L1378 295.1L1380 295.5L1382 295L1384 295.2L1386 297.2L1388 300L1390 302.8L1392 303.3L1394 304.1L1396 304.7L1398 306.2L1400 308.4L1402 311L1404 313.7L1406 314L1408 313.7L1410 314L1412 315.7L1414 318.1L1416 320.6L1418 321.6L1420 321.4L1422 320.6L1424 321.5L1426 322.4L1428 323.8L1430 323.3L1432 321L1434 318.9L1436 315.7L1438 315.7L1440 315.6L1442 314.8L1444 314L1446 312.7L1448 310.9L1450 309.3L1452 310.3L1454 311.6L1456 311.9L1458 311.7L1460 309.8L1462 308.3L1464 309.1L1466 310.6L1468 312.5L1470 313.3L1472 312.7L1474 312.2L1476 313.9L1478 316.1L1480 319.6L1482 321.4L1484 320.9L1486 320.4L1488 319.8L1490 320.1L1492 320.7L1494 321.8L1496 321.4L1498 319.5L1500 317.6L1502 316L1504 317.5L1506 317.2L1508 316.7L1510 315.7L1512 312.9L1514 310.4L1516 309.5L1518 310.3L1520 309.4L1522 308.2L1524 304.9L1526 302.6L1528 301.1L1530 300.4L1532 300.6L1534 298.7L1536 296.1L1538 294.1L1540 291.7L1542 291.5L1544 292.6L1546 293.2L1548 292.8L1550 291.2L1552 290.1L1554 291.4L1556 293.4L1558 295.5L1560 296.7L1562 297.8L1564 297.2L1566 297.2L1568 299.5L1570 302.5L1572 305L1574 306.6L1576 305.9L1578 306.4L1580 308.2L1582 310.5L1584 313.3L1586 315.2L1588 315.6L1590 315.8L1592 316.4L1594 317.7L1596 320.5L1598 322.6L1600 323.7L1602 322.9L1604 322L1606 321.3L1608 321.7L1610 322L1612 321L1614 319.2L1616 316.3L1618 314.4L1620 313.5L1622 313.6L1624 314L1626 313.1L1628 311.5L1630 310.1L1632 309.2L1634 310.7L1636 311.4L1638 312.4L1640 310.2L1642 309L1644 308.8L1646 309.5L1648 311.3L1650 314.1L1652 314.5L1654 315.1L1656 314.7L1658 316.2L1660 318.9L1662 320.7L1664 322.1L1666 322.4L1668 320.9L1670 319L1672 320.1L1674 320.9L1676 321.3L1678 319.9L1680 318.6L1682 316.9L1684 315.1L1686 315.7L1688 316.8L1690 315.7L1692 313.2L1694 311.1L1696 308.7L1698 307.3L1700 307.8L1702 307.9L1704 306L1706 303.3L1708 300.3L1710 298.3L1712 298.1L1714 297.6L1716 296.8L1718 295L1720 292.9L1722 290.9L1724 291.4L1726 292.6L1728 292.9L1730 293.3L1732 291.8L1734 291.9L1736 292.4L1738 294.1L1740 297.5L1742 299L1744 299.1L1746 299.4L1748 299.3L1750 301.4L1752 304.6L1754 307.6L1756 308.1L1758 308.6L1760 309L1762 310.5L1764 312.3L1766 316L1768 317.2L1770 318L1772 316.9L1774 317.9L1776 319.8L1778 321.7L1780 324.1L1782 324.5L1784 323.4L1786 320.7L1788 319.8L1790 320.5L1792 319.9L1794 319.7L1796 317.6L1798 313.7L1800 311.6L1802 311.3L1804 312.9L1806 313.6L1808 312.5L1810 311.2L1812 309.4L1814 309.7L1816 310.5L1818 310.8L1820 311.2L1822 311.1L1824 309.6L1826 309.5L1828 310.9L1830 313.3L1832 315.6L1834 316.6L1836 317.2L1838 316.9L1840 317.9L1842 320.4L1844 321.6L1846 322.7L1848 322.3L1850 320.6L1852 318.5L1854 318.2L1856 319.9L1858 319.8L1860 318.9L1862 317.2L1864 315.2L1866 314.5L1868 313.8L1870 315L1872 314.3L1874 311.6L1876 309.2L1878 306.8L1880 306.1L1882 305.4L1884 305.7L1886 304L1888 301.2L1890 297.9L1892 295.5L1894 295.6L1896 296.2L1898 295.5L1900 293.9L1902 291.3" stroke="#858585" stroke-opacity="0.75" stroke-width="1.5" fill="none"/><path d="M1186 298.9L1188 297.7L1190 297.1L1192 298.7L1194 300.4L1196 300.5L1198 299.9L1200 300.4L1202 300.9L1204 303.8L1206 306.7L1208 307.9L1210 308.6L1212 307.5L1214 308.9L1216 310.1L1218 314.1L1220 316.5L1222 318.5L1224 318.4L1226 318.2L1228 318.9L1230 321.3L1232 325.1L1234 326.9L1236 327.1L1238 327L1240 327.9L1242 329.4L1244 331.9L1246 333.6L1248 333.8L1250 330.8L1252 329.2L1254 327.1L1256 326.9L1258 325.7L1260 324.5L1262 322.5L1264 319.7L1266 318.3L1268 317.9L1270 318.8L1272 320.2L1274 320.8L1276 319.3L1278 317.3L1280 316.2L1282 316.7L1284 318.9L1286 318.7L1288 318.4L1290 317.9L1292 317.6L1294 319.9L1296 322.6L1298 326L1300 328.2L1302 328.5L1304 328.2L1306 328.5L1308 330.2L1310 330.5L1312 330.7L1314 329.3L1316 327.6L1318 325.9L1320 325.3L1322 325.8L1324 326.3L1326 326L1328 323.5L1330 320.6L1332 319L1334 319L1336 319.2L1338 318.9L1340 316.5L1342 314L1344 311L1346 310.5L1348 310.4L1350 310.9L1352 308.9L1354 305.5L1356 303L1358 300.5L1360 301.1L1362 301L1364 301.8L1366 299.9L1368 298.5L1370 297.1L1372 297.1L1374 299.8L1376 301.1L1378 302.2L1380 302.3L1382 302.5L1384 302.6L1386 305L1388 307.4L1390 310.3L1392 310.5L1394 309.7L1396 310.6L1398 313.4L1400 315.5L1402 318.9L1404 320.2L1406 320L1408 320.7L1410 321L1412 323.4L1414 326.5L1416 329.1L1418 329.3L1420 329.1L1422 329.9L1424 330.8L1426 332.7L1428 332.8L1430 331.7L1432 329L1434 326.3L1436 324.1L1438 323.7L1440 323.6L1442 323.2L1444 321L1446 318.6L1448 317L1450 318.2L1452 319.7L1454 320.1L1456 319.5L1458 318.2L1460 316.4L1462 316.1L1464 316.4L1466 318.3L1468 319.5L1470 320L1472 319.3L1474 320.2L1476 322.7L1478 326.5L1480 328.3L1482 329.7L1484 330.1L1486 328.7L1488 328.6L1490 329.3L1492 329.8L1494 329.5L1496 328.1L1498 326.6L1500 324L1502 323.7L1504 324.4L1506 324.8L1508 324.7L1510 322.2L1512 319.5L1514 317.4L1516 317.1L1518 317.5L1520 316.3L1522 314.8L1524 311.9L1526 309.3L1528 308.2L1530 308.2L1532 308L1534 305.9L1536 303.5L1538 300.7L1540 298.9L1542 299.8L1544 300.5L1546 300.7L1548 299.1L1550 297.7L1552 297.8L1554 298.4L1556 300.6L1558 302.8L1560 304.4L1562 303.8L1564 304.1L1566 304.9L1568 307L1570 309.9L1572 312.4L1574 313.2L1576 312.4L1578 313.1L1580 315.4L1582 318.7L1584 320.6L1586 322.4L1588 322.5L1590 322.4L1592 323.3L1594 325.5L1596 329.4L1598 330.5L1600 330.9L1602 330.5L1604 330.2L1606 330.5L1608 331.6L1610 331.4L1612 329.6L1614 326.8L1616 323.9L1618 322.3L1620 321.3L1622 321.8L1624 321.5L1626 320.3L1628 318.3L1630 317.2L1632 317.1L1634 319.3L1636 320.4L1638 320L1640 318.1L1642 316.1L1644 316.1L1646 316.9L1648 319.3L1650 321.2L1652 321.8L1654 321.9L1656 323.2L1658 325.7L1660 328.5L1662 330.6L1664 331.1L1666 330.7L1668 328.9L1670 327.7L1672 328L1674 328.6L1676 328.9L1678 327.1L1680 325.5L1682 322.6L1684 322.7L1686 323.8L1688 324.3L1690 322.8L1692 320L1694 317.7L1696 316L1698 315.3L1700 315.5L1702 315L1704 312.8L1706 310.2L1708 307.1L1710 305.8L1712 306.1L1714 305L1716 304.1L1718 301.2L1720 298.9L1722 298.4L1724 297.9L1726 299.2L1728 300.8L1730 299.5L1732 298.3L1734 298.4L1736 299.4L1738 302.8L1740 304.7L1742 305.7L1744 306L1746 305.3L1748 306.9L1750 308.7L1752 311.6L1754 314.4L1756 314.7L1758 314.6L1760 316.2L1762 317.5L1764 320.5L1766 322.6L1768 324.8L1770 324.2L1772 324.7L1774 325.6L1776 327.8L1778 331.5L1780 332.9L1782 332.2L1784 331.3L1786 329.9L1788 329.9L1790 330.2L1792 329L1794 327.1L1796 323.9L1798 321.3L1800 319.3L1802 319.6L1804 320.2L1806 320.7L1808 320L1810 318.1L1812 317L1814 317.8L1816 318.4L1818 319.2L1820 319.1L1822 318L1824 316.6L1826 316.6L1828 318.6L1830 321.7L1832 323.6L1834 324.3L1836 324.6L1838 325.4L1840 327.4L1842 329.9L1844 331.2L1846 331.6L1848 329.3L1850 327.6L1852 326.5L1854 326.7L1856 327.7L1858 327.3L1860 326.7L1862 323.7L1864 321.9L1866 321.1L1868 322.1L1870 322.7L1872 320.2L1874 318.7L1876 315.9L1878 314.2L1880 313.5L1882 314L1884 313.3L1886 310.1L1888 307.7L1890 304.3L1892 302.8L1894 303L1896 303.2L1898 302.2L1900 300.1L1902 297.6" stroke="#858585" stroke-opacity="0.75" stroke-width="1.5" fill="none"/><path d="M1186 305.1L1188 303.8L1190 304.4L1192 306.5L1194 307.4L1196 308L1198 306.4L1200 306.7L1202 308.2L1204 311L1206 314.2L1208 315.5L1210 314.7L1212 314.4L1214 315.3L1216 318.4L1218 320.9L1220 323.7L1222 324.2L1224 324.9L1226 325.1L1228 327L1230 329.5L1232 332.4L1234 334.7L1236 334.6L1238 334.8L1240 335.6L1242 339L1244 341.8L1246 343.2L1248 342.5L1250 339.5L1252 337.7L1254 335.9L1256 335.3L1258 334L1260 332.2L1262 330L1264 327.4L1266 325.9L1268 326.4L1270 327.8L1272 327.9L1274 327.8L1276 325.7L1278 325L1280 324.6L1282 325.4L1284 326.5L1286 326L1288 325.2L1290 324.9L1292 325.3L1294 328.2L1296 331.4L1298 334.6L1300 336.7L1302 336.7L1304 336.7L1306 337.9L1308 339.5L1310 340.5L1312 339.1L1314 337L1316 334.3L1318 332.8L1320 333.4L1322 333.4L1324 333.5L1326 332.7L1328 329.7L1330 327.4L1332 327L1334 327.1L1336 326.8L1338 326.3L1340 323.8L1342 320.7L1344 318.8L1346 318.3L1348 318.4L1350 318L1352 315.7L1354 312.4L1356 308.6L1358 308.3L1360 308.9L1362 309.2L1364 307.6L1366 305.9L1368 305L1370 304L1372 305L1374 307L1376 308.6L1378 308.6L1380 309.3L1382 309L1384 311.1L1386 312.9L1388 315.9L1390 316.5L1392 316.9L1394 316.4L1396 317.8L1398 320.2L1400 324.1L1402 326.1L1404 327.3L1406 326.5L1408 327.1L1410 329.5L1412 331.7L1414 335.4L1416 336.2L1418 336.7L1420 336.6L1422 338.6L1424 339.9L1426 342.5L1428 342.6L1430 341L1432 337.2L1434 335L1436 332.8L1438 332.5L1440 332.2L1442 330L1444 328.1L1446 325.8L1448 325.3L1450 325.9L1452 328L1454 328.9L1456 327.2L1458 325.3L1460 324L1462 323.9L1464 325.6L1466 326.5L1468 326.9L1470 326.3L1472 326.6L1474 328.5L1476 331.6L1478 335L1480 338.4L1482 338.5L1484 338.2L1486 336.9L1488 337.2L1490 338.7L1492 338.3L1494 337.8L1496 335L1498 332.6L1500 331L1502 331.7L1504 333.1L1506 332.8L1508 330.6L1510 328.2L1512 326.2L1514 325.1L1516 325L1518 325.1L1520 324.4L1522 321.3L1524 318.6L1526 316.9L1528 316.7L1530 316.3L1532 315.2L1534 312.5L1536 309.4L1538 307.1L1540 306.1L1542 306.6L1544 307.6L1546 307.5L1548 305.5L1550 303.9L1552 304.2L1554 305.6L1556 307.9L1558 311L1560 311.6L1562 310.8L1564 311.1L1566 312.2L1568 314.9L1570 316.9L1572 319.2L1574 318.9L1576 318.6L1578 320.7L1580 323.4L1582 326.5L1584 328.4L1586 328.9L1588 329L1590 329L1592 331.2L1594 334.8L1596 337.5L1598 339.3L1600 339.7L1602 339.6L1604 339.3L1606 340.8L1608 341.6L1610 341.2L1612 338L1614 334.2L1616 331.1L1618 329.6L1620 329.3L1622 329.7L1624 328.6L1626 326.7L1628 325.8L1630 324.7L1632 325.8L1634 327.1L1636 328.4L1638 327.2L1640 324.4L1642 323.6L1644 323.4L1646 325.1L1648 327.2L1650 328.7L1652 329.3L1654 329.4L1656 331.8L1658 334.2L1660 338.5L1662 339.8L1664 340.2L1666 338.2L1668 336.9L1670 336.9L1672 337L1674 337.8L1676 336.1L1678 333.6L1680 332.1L1682 330.3L1684 330.2L1686 330.9L1688 331.5L1690 329.8L1692 326.7L1694 324.3L1696 322.9L1698 323.7L1700 323.2L1702 321.4L1704 319.7L1706 317.1L1708 314.6L1710 313.3L1712 313L1714 313L1716 310.4L1718 307.8L1720 305.2L1722 305.3L1724 305.9L1726 307.5L1728 306.8L1730 306.3L1732 305.4L1734 304.9L1736 307.3L1738 310.9L1740 312.4L1742 312.9L1744 311.9L1746 312.2L1748 313.7L1750 317.3L1752 319.1L1754 321.2L1756 321.1L1758 320.9L1760 323.1L1762 325.6L1764 327.8L1766 330.9L1768 330.7L1770 331.4L1772 331.8L1774 334L1776 337.3L1778 339.7L1780 341.2L1782 340.6L1784 339.8L1786 339L1788 338.5L1790 339.5L1792 338L1794 335.3L1796 331.6L1798 328.3L1800 327.8L1802 327.6L1804 327.9L1806 327.7L1808 326.8L1810 325.6L1812 325.3L1814 326L1816 326.9L1818 327.1L1820 326.4L1822 324.4L1824 323.5L1826 324.5L1828 326.4L1830 330L1832 331.5L1834 331.7L1836 333.2L1838 334.6L1840 337.1L1842 339.6L1844 340.5L1846 339.7L1848 337.9L1850 335.2L1852 335.1L1854 335.9L1856 336.3L1858 335L1860 332.3L1862 330L1864 328.5L1866 329.5L1868 329.4L1870 329.7L1872 327L1874 324.7L1876 321.9L1878 321.1L1880 321.3L1882 320.9L1884 320.1L1886 317.7L1888 313.4L1890 311.7L1892 311.2L1894 311L1896 310.2L1898 308.3L1900 306.3L1902 304.8" stroke="#858585" stroke-opacity="0.75" stroke-width="1.5" fill="none"/><path d="M1186 311.1L1188 311.2L1190 313.2L1192 314L1194 314.1L1196 311.8L1198 309.6L1200 307.4L1202 308.5L1204 309.7L1206 313.4L1208 315.3L1210 316.9L1212 319.2L1214 322.6L1216 325.9L1218 329.3L1220 330.2L1222 330.5L1224 330.6L1226 331.9L1228 333.6L1230 336.1L1232 338.3L1234 339.1L1236 337.5L1238 336.2L1240 335.5L1242 333.7L1244 331.1L1246 328.8L1248 325.1L1250 324.3L1252 327.3L1254 330.3L1256 334.8L1258 336.1L1260 335.2L1262 334L1264 331.2L1266 330.9L1268 331.1L1270 331.4L1272 330.3L1274 326.9L1276 323.4L1278 323.5L1280 325.8L1282 328.5L1284 331L1286 330.9L1288 329.9L1290 329.7L1292 330L1294 331.5L1296 332.4L1298 331.3L1300 327.3L1302 322.6L1304 321L1306 322.3L1308 327.1L1310 332.9L1312 335.8L1314 337L1316 337L1318 338.1L1320 338.9L1322 340.9L1324 340.4L1326 337.9L1328 336.1L1330 334.7L1332 335L1334 335L1336 334L1338 331.6L1340 328.5L1342 323.8L1344 321L1346 319.4L1348 317.3L1350 315.6L1352 314.6L1354 314L1356 313.6L1358 314.8L1360 315.6L1362 316L1364 314.9L1366 312.8L1368 311.5L1370 310.9L1372 312.4L1374 313.3L1376 313.3L1378 310.6L1380 308L1382 307.1L1384 308.8L1386 313L1388 317.7L1390 321.2L1392 321.5L1394 322.9L1396 325.2L1398 327.7L1400 330.9L1402 333.1L1404 333L1406 332.8L1408 333.9L1410 335.5L1412 338.4L1414 339.3L1416 338.9L1418 336.8L1420 334.1L1422 330.4L1424 328.7L1426 326.7L1428 327L1430 327.3L1432 329.1L1434 330.5L1436 333.5L1438 335.9L1440 335.6L1442 334.6L1444 332.9L1446 330.7L1448 329.2L1450 329.6L1452 329.2L1454 327.4L1456 325.6L1458 324.1L1460 325.9L1462 328.1L1464 330.7L1466 331.5L1468 331.4L1470 331L1472 329.5L1474 329.8L1476 330.6L1478 330.5L1480 327.4L1482 323.5L1484 321.5L1486 323.2L1488 327.8L1490 334.1L1492 337.5L1494 338.6L1496 338L1498 337.7L1500 337.8L1502 338.7L1504 339.9L1506 339.4L1508 337.7L1510 334.3L1512 333.1L1514 332L1516 332.2L1518 332L1520 328.3L1522 323.4L1524 318.3L1526 316.2L1528 315.4L1530 315.9L1532 316.5L1534 315.7L1536 314.5L1538 313.4L1540 313.5L1542 314.2L1544 315.7L1546 314.2L1548 312.2L1550 310.2L1552 311.4L1554 312L1556 312.1L1558 311.2L1560 309.7L1562 307.6L1564 309.1L1566 312.9L1568 318.7L1570 322.9L1572 325.1L1574 325L1576 325.6L1578 328.1L1580 330L1582 333.7L1584 335.3L1586 335.1L1588 334L1590 335.2L1592 336.2L1594 338.3L1596 339.6L1598 338L1600 333.2L1602 328.6L1604 325.5L1606 324.8L1608 327.3L1610 330.2L1612 332.1L1614 332.1L1616 332.3L1618 334.2L1620 334.4L1622 335.1L1624 334L1626 331.2L1628 328.9L1630 327.5L1632 326.1L1634 325.8L1636 326.6L1638 326.4L1640 327L1642 327.6L1644 329.2L1646 331.1L1648 333.3L1650 332.4L1652 331.4L1654 329.2L1656 328.7L1658 327.8L1660 325.4L1662 324.3L1664 324.3L1666 325.7L1668 328.5L1670 333.5L1672 337.6L1674 340.2L1676 340.6L1678 338.7L1680 337.2L1682 336.7L1684 338.2L1686 338.1L1688 338.1L1690 335.4L1692 333.1L1694 330.4L1696 330.7L1698 329.5L1700 327.6L1702 324.1L1704 318.1L1706 314L1708 312.7L1710 314.1L1712 315.9L1714 317.5L1716 315.5L1718 313.4L1720 311.9L1722 312.8L1724 314.3L1726 314.9L1728 313.7L1730 311.5L1732 310L1734 309.8L1736 310.5L1738 311L1740 311L1742 310.3L1744 311.3L1746 314.8L1748 319L1750 323.2L1752 325.9L1754 327.7L1756 327.8L1758 327.6L1760 329.5L1762 332.4L1764 335.2L1766 336.3L1768 337.2L1770 335.6L1772 336.2L1774 337.2L1776 337.7L1778 337.5L1780 333.2L1782 327.3L1784 323.3L1786 324.1L1788 327.4L1790 331.6L1792 335L1794 334.7L1796 333.6L1798 332.4L1800 332.5L1802 334L1804 334.2L1806 332.1L1808 329.3L1810 326.1L1812 324.1L1814 324.5L1816 327L1818 328.7L1820 328.8L1822 328.9L1824 328.8L1826 329.5L1828 332L1830 333.8L1832 332.5L1834 330.3L1836 326.4L1838 324L1840 323.5L1842 323.6L1844 325.9L1846 328.5L1848 331.9L1850 333.9L1852 337.1L1854 339.7L1856 341L1858 340.6L1860 338.5L1862 337.1L1864 335.6L1866 337.1L1868 336.8L1870 336.1L1872 333.4L1874 330.9L1876 328.3L1878 326.5L1880 325.7L1882 322.2L1884 318.3L1886 315L1888 312.6L1890 313.1L1892 314.9L1894 317.1L1896 317L1898 315.5L1900 313L1902 312" stroke="#b0b0b0" stroke-opacity="0.95" stroke-width="2.2" fill="none"/><path d="M1186 318.8L1188 319L1190 321.1L1192 321.2L1194 321.6L1196 320.9L1198 320.6L1200 321.1L1202 325.2L1204 327.4L1206 328.6L1208 328.2L1210 328.2L1212 328.5L1214 330.9L1216 334.1L1218 336.7L1220 337.6L1222 336.9L1224 337L1226 338.6L1228 342.2L1230 345.9L1232 347.3L1234 348.2L1236 348.9L1238 350.4L1240 353.5L1242 357.1L1244 360.1L1246 360.4L1248 359.3L1250 356.5L1252 355.1L1254 354.1L1256 352.8L1258 350.5L1260 347.1L1262 343.2L1264 340.6L1266 341.1L1268 343.1L1270 344L1272 343.1L1274 341.8L1276 340.3L1278 340.2L1280 341L1282 342.2L1284 342.3L1286 340.2L1288 338.4L1290 339.4L1292 341.7L1294 345.4L1296 348.9L1298 351.1L1300 352.2L1302 353.5L1304 354.8L1306 357.2L1308 357.9L1310 357.9L1312 355.5L1314 351.4L1316 349L1318 349.2L1320 349.5L1322 349.3L1324 347.4L1326 345.4L1328 343.1L1330 341.7L1332 342.3L1334 342.5L1336 341.2L1338 339.4L1340 335.9L1342 333.8L1344 333.8L1346 334.7L1348 333.8L1350 331.8L1352 329.2L1354 325.5L1356 323.3L1358 322.9L1360 324.2L1362 323.2L1364 320.8L1366 319.3L1368 317.5L1370 318.7L1372 320.6L1374 321.7L1376 322.6L1378 322.7L1380 321.6L1382 323.8L1384 326.6L1386 328.8L1388 330.8L1390 330L1392 329.1L1394 330.1L1396 332.2L1398 335.9L1400 338.2L1402 339.5L1404 339.6L1406 340L1408 341.1L1410 344.5L1412 348L1414 351L1416 351.9L1418 351.4L1420 353.6L1422 355.8L1424 359.7L1426 361.2L1428 359.6L1430 356.9L1432 354.3L1434 351.1L1436 350.4L1438 349.7L1440 347.7L1442 343.7L1444 340.9L1446 339.8L1448 340.6L1450 342L1452 344.3L1454 343.4L1456 341.2L1458 339.3L1460 339.6L1462 340.6L1464 341.7L1466 341.6L1468 340.8L1470 339.9L1472 342.2L1474 344.9L1476 348.9L1478 352.6L1480 354.9L1482 355.8L1484 354.6L1486 356.1L1488 356.5L1490 357.4L1492 355.8L1494 353.2L1496 349.1L1498 347.6L1500 347.5L1502 347.6L1504 348.2L1506 345.8L1508 344L1510 341L1512 339.6L1514 340L1516 340.6L1518 339.4L1520 337.3L1522 334L1524 332.3L1526 332.3L1528 332.5L1530 331.4L1532 329.7L1534 325.4L1536 322.3L1538 321.3L1540 322L1542 322L1544 322.6L1546 320L1548 318.9L1550 317.7L1552 318.8L1554 321.4L1556 323.5L1558 324.7L1560 324.4L1562 324.2L1564 326.1L1566 327.5L1568 330.2L1570 331.3L1572 331.6L1574 332.2L1576 333L1578 335.2L1580 339L1582 340.9L1584 342.5L1586 342.2L1588 342.2L1590 343.8L1592 347.5L1594 351.7L1596 353.8L1598 355L1600 354.6L1602 356.6L1604 357.7L1606 359.9L1608 360.5L1610 357.6L1612 353.8L1614 350.4L1616 347.1L1618 346.7L1620 345.7L1622 344.4L1624 342.7L1626 340.1L1628 339.8L1630 340.8L1632 342.7L1634 344.6L1636 342.8L1638 341L1640 339L1642 337.8L1644 339.4L1646 342L1648 343L1650 342.9L1652 343.3L1654 345.6L1656 348.8L1658 353.2L1660 357.2L1662 357.2L1664 356.8L1666 355.7L1668 354.2L1670 354.9L1672 354L1674 353.2L1676 351L1678 347.2L1680 345.4L1682 345.1L1684 345.9L1686 346.7L1688 345.3L1690 341.5L1692 339.8L1694 338.3L1696 338.1L1698 338.1L1700 337.4L1702 335L1704 333.1L1706 330.8L1708 329.6L1710 330.2L1712 329L1714 326L1716 323.8L1718 320.9L1720 319.8L1722 320.5L1724 321.1L1726 321.1L1728 320.3L1730 318.5L1732 318.5L1734 320.4L1736 322.7L1738 325.9L1740 326.9L1742 325.8L1744 326L1746 327.1L1748 329.7L1750 331.9L1752 334.1L1754 334.2L1756 334.5L1758 335.5L1760 337.8L1762 341L1764 343.6L1766 344.7L1768 345L1770 344.4L1772 346.8L1774 351.1L1776 354.7L1778 356.6L1780 358.3L1782 357.6L1784 357.7L1786 358.3L1788 357.8L1790 357.4L1792 354.6L1794 349.4L1796 345.9L1798 344.1L1800 344L1802 343.7L1804 343.8L1806 342.1L1808 340.2L1810 339.7L1812 340.7L1814 342.5L1816 343.4L1818 342.1L1820 339.3L1822 337.8L1824 338.6L1826 339.7L1828 342.7L1830 344.9L1832 346.1L1834 347.9L1836 349.4L1838 353L1840 356.1L1842 359.2L1844 358.6L1846 356.3L1848 354.1L1850 352.8L1852 351.7L1854 352.2L1856 351.2L1858 348.1L1860 345.9L1862 343.8L1864 343.7L1866 344.2L1868 345.3L1870 342.7L1872 340L1874 337.5L1876 336L1878 336.1L1880 336.9L1882 336.2L1884 333.6L1886 331L1888 328.6L1890 326.9L1892 327L1894 326.6L1896 324.2L1898 321.9L1900 319.3L1902 319.2" stroke="#858585" stroke-opacity="0.75" stroke-width="1.5" fill="none"/><path d="M1186 326.1L1188 327.2L1190 328.7L1192 328.9L1194 328.2L1196 326.6L1198 327.2L1200 329.8L1202 332.3L1204 335.9L1206 336.4L1208 334.8L1210 334L1212 335.9L1214 338.1L1216 341.9L1218 343.1L1220 343.9L1222 343.5L1224 343.8L1226 346.8L1228 350.4L1230 352.6L1232 354.2L1234 355L1236 355L1238 358.3L1240 362.3L1242 366.4L1244 368.5L1246 368.9L1248 367.7L1250 365.2L1252 363.8L1254 364L1256 361.6L1258 358.1L1260 354.5L1262 350.5L1264 349.1L1266 349.6L1268 350.5L1270 351.2L1272 349.9L1274 349.1L1276 348.1L1278 348.8L1280 350.1L1282 350.1L1284 348.4L1286 347.5L1288 345.5L1290 346.7L1292 350.1L1294 354.2L1296 357L1298 358.9L1300 360.9L1302 362.3L1304 364.4L1306 366.9L1308 367.6L1310 366.4L1312 362.8L1314 359.6L1316 357.8L1318 357.5L1320 357.3L1322 356.1L1324 354.6L1326 352L1328 350L1330 349.3L1332 350.5L1334 350.1L1336 347.8L1338 345.4L1340 342.7L1342 341L1344 342L1346 342.4L1348 341.3L1350 339.4L1352 335.4L1354 331.6L1356 330.7L1358 331.2L1360 331.5L1362 329.7L1364 328L1366 325.2L1368 324.7L1370 326.6L1372 327.8L1374 330L1376 329.3L1378 328L1380 329.5L1382 332L1384 334.4L1386 336.5L1388 337.2L1390 336L1392 336.4L1394 337.9L1396 340.9L1398 343.8L1400 345.7L1402 346.3L1404 346.3L1406 346.3L1408 349.5L1410 352.3L1412 356.4L1414 357.2L1416 359L1418 359.7L1420 361.9L1422 365.3L1424 368.7L1426 369.9L1428 368.7L1430 365.3L1432 361.9L1434 360.4L1436 359L1438 357.7L1440 354.3L1442 351.5L1444 348.6L1446 347.4L1448 349L1450 351L1452 351.5L1454 350.9L1456 349.2L1458 347.6L1460 346.8L1462 348.4L1464 348.6L1466 348.3L1468 347.7L1470 348L1472 349.6L1474 353.4L1476 358.9L1478 361.7L1480 362.9L1482 363.4L1484 363.9L1486 365.6L1488 366.3L1490 366.4L1492 363.8L1494 360.5L1496 356.7L1498 354.9L1500 354.8L1502 354.9L1504 355.2L1506 353.2L1508 349.3L1510 348L1512 348.1L1514 348.7L1516 348.2L1518 346L1520 343.2L1522 341.3L1524 339.8L1526 340.6L1528 340.6L1530 339.1L1532 335.5L1534 332.4L1536 329.2L1538 329L1540 329.2L1542 330.2L1544 328.5L1546 327.1L1548 324.5L1550 324.6L1552 326.5L1554 329.4L1556 330.8L1558 331.4L1560 331.2L1562 331.3L1564 333.9L1566 336.5L1568 338.2L1570 338.1L1572 337.8L1574 338.5L1576 340.1L1578 342.9L1580 346.4L1582 347.9L1584 348.2L1586 348.8L1588 348.9L1590 352.2L1592 355.3L1594 359.1L1596 361.9L1598 361.8L1600 363.3L1602 364.8L1604 367.6L1606 369.2L1608 369.7L1610 366.7L1612 361.5L1614 358.1L1616 355.5L1618 354.8L1620 354.5L1622 352.6L1624 349.1L1626 347.3L1628 347.6L1630 349.8L1632 351.7L1634 352.2L1636 349.8L1638 347.6L1640 346.4L1642 345.8L1644 348L1646 348.9L1648 349.6L1650 350.2L1652 351L1654 353.9L1656 358.5L1658 362.5L1660 366.2L1662 366.7L1664 364.9L1666 364.4L1668 363.9L1670 363.4L1672 363.1L1674 360.8L1676 357.4L1678 353.7L1680 353.4L1682 353.1L1684 354.3L1686 353.6L1688 351.1L1690 348.6L1692 346.2L1694 345.2L1696 346.6L1698 345.9L1700 344.6L1702 342.3L1704 339.2L1706 338.5L1708 337.9L1710 338.1L1712 336.1L1714 332.5L1716 330.1L1718 327.7L1720 327.3L1722 327.9L1724 328.6L1726 328.6L1728 327.1L1730 325.5L1732 325.9L1734 328.5L1736 330.8L1738 333.8L1740 333.4L1742 332.7L1744 332.5L1746 334.4L1748 337.3L1750 340L1752 340.8L1754 340.7L1756 340.9L1758 342.4L1760 345.6L1762 348.9L1764 350.2L1766 351.3L1768 351.1L1770 352.5L1772 354.5L1774 358.9L1776 362.8L1778 364.9L1780 366.4L1782 366.2L1784 366.1L1786 367.2L1788 367.5L1790 366.7L1792 362.4L1794 357.9L1796 353.9L1798 352.3L1800 352.1L1802 351.2L1804 351.2L1806 348.5L1808 347.6L1810 348L1812 350.1L1814 351.2L1816 351.6L1818 349.8L1820 347L1822 345.1L1824 346.4L1826 349L1828 351.2L1830 352.9L1832 354L1834 354.6L1836 358.4L1838 362.6L1840 366.4L1842 368.3L1844 366.6L1846 364.4L1848 362.2L1850 361.4L1852 360.9L1854 360.3L1856 358L1858 355L1860 351.7L1862 351.3L1864 351.4L1866 352.6L1868 352.1L1870 349.1L1872 345.9L1874 344.7L1876 343.3L1878 344.1L1880 344.5L1882 343.2L1884 339.9L1886 337.8L1888 335.8L1890 335.3L1892 334.1L1894 332.9L1896 330.5L1898 327.5L1900 325.7L1902 326.4" stroke="#858585" stroke-opacity="0.75" stroke-width="1.5" fill="none"/><path d="M1186 333.5L1188 334.9L1190 335.3L1192 335.3L1194 334.3L1196 333.2L1198 334.1L1200 336.6L1202 340.9L1204 343.4L1206 343.2L1208 341.3L1210 341.7L1212 342.3L1214 346.2L1216 348.6L1218 350.7L1220 349.8L1222 350.2L1224 351.3L1226 354L1228 358L1230 360.2L1232 361.3L1234 361.1L1236 362.6L1238 366.5L1240 370.8L1242 375.4L1244 377.8L1246 376.5L1248 376.1L1250 374.6L1252 373.4L1254 373.3L1256 370.8L1258 365.8L1260 360.7L1262 357.8L1264 356.6L1266 357.3L1268 358.2L1270 358.7L1272 357.3L1274 355.8L1276 355.5L1278 356.7L1280 358.6L1282 357.3L1284 355.3L1286 353.3L1288 352.4L1290 354.8L1292 358.6L1294 362.1L1296 365.6L1298 366.3L1300 368.4L1302 371.4L1304 373.6L1306 376.6L1308 376.4L1310 374.6L1312 371.2L1314 367.1L1316 365.3L1318 365.2L1320 364.8L1322 363.2L1324 361.2L1326 357.7L1328 356.1L1330 356.8L1332 358.1L1334 357.5L1336 355.2L1338 351.3L1340 349L1342 349.3L1344 349.3L1346 350.2L1348 349.6L1350 345.7L1352 342L1354 339.3L1356 339.1L1358 338.5L1360 338.2L1362 336L1364 333.6L1366 332.5L1368 332.6L1370 333.9L1372 336.4L1374 335.7L1376 335.2L1378 335L1380 336.6L1382 340.2L1384 343L1386 343.7L1388 344.1L1390 343L1392 343L1394 344.8L1396 347.9L1398 351.3L1400 352.9L1402 352.2L1404 352.7L1406 354.1L1408 356.6L1410 361L1412 363.8L1414 364.3L1416 365.7L1418 367.8L1420 371.1L1422 375L1424 378.8L1426 379.4L1428 376.9L1430 373.9L1432 370.8L1434 369.7L1436 367.6L1438 365.9L1440 361.6L1442 358.1L1444 354.8L1446 355.4L1448 357.5L1450 359.5L1452 359.6L1454 358.3L1456 356.1L1458 355.7L1460 356.1L1462 356.1L1464 356.9L1466 356L1468 353.8L1470 355.1L1472 358L1474 362.6L1476 366.8L1478 370.6L1480 371.8L1482 372.5L1484 372.7L1486 374.1L1488 376L1490 374.4L1492 371.6L1494 367.2L1496 363.6L1498 363L1500 362.8L1502 363.4L1504 361.9L1506 358.5L1508 356.8L1510 355.2L1512 355.2L1514 355.8L1516 355.2L1518 353.3L1520 349.5L1522 347.5L1524 347.9L1526 348.2L1528 348.4L1530 346.8L1532 342.1L1534 338.2L1536 336.7L1538 336.4L1540 337.3L1542 337.3L1544 335.5L1546 332.7L1548 331.8L1550 332.3L1552 334.7L1554 336.4L1556 338.1L1558 337.6L1560 337.9L1562 339.1L1564 341.9L1566 344.5L1568 345.4L1570 345.3L1572 344.9L1574 344.7L1576 346.8L1578 350.8L1580 353.4L1582 355.6L1584 355.4L1586 354.9L1588 356.9L1590 360.1L1592 363.6L1594 366.6L1596 369.2L1598 370.3L1600 371.4L1602 374.9L1604 377.3L1606 379.7L1608 378.5L1610 374.8L1612 369.6L1614 366L1616 364.6L1618 363L1620 361.5L1622 358.7L1624 355.9L1626 354.7L1628 355.1L1630 357.7L1632 359.2L1634 358.9L1636 357.7L1638 354.9L1640 354.1L1642 354.8L1644 356.5L1646 357.2L1648 356.3L1650 356.9L1652 358.1L1654 361.9L1656 367L1658 371.7L1660 374L1662 374.8L1664 373.7L1666 373.2L1668 373.5L1670 373.3L1672 371.8L1674 368.4L1676 364.5L1678 361.7L1680 361.1L1682 360.8L1684 361.4L1686 360L1688 357.6L1690 354.6L1692 352.9L1694 353L1696 353.4L1698 353.7L1700 351.5L1702 348.3L1704 346.6L1706 345.9L1708 345.8L1710 346.1L1712 342.5L1714 339L1716 336.2L1718 334.6L1720 335.5L1722 335.8L1724 336.2L1726 334.2L1728 332.8L1730 331.8L1732 333.3L1734 335.7L1736 339L1738 340.5L1740 339.7L1742 340L1744 340.1L1746 342L1748 344.9L1750 347L1752 347L1754 346.7L1756 347.1L1758 350L1760 353.6L1762 355.9L1764 357.6L1766 356.9L1768 358.1L1770 359.3L1772 363.6L1774 367.7L1776 370.8L1778 373.1L1780 373.5L1782 374.1L1784 376.1L1786 378.1L1788 377.3L1790 375.2L1792 369.6L1794 365.5L1796 361.6L1798 360.6L1800 360.4L1802 359L1804 358L1806 355.5L1808 355.5L1810 356.5L1812 357.7L1814 359.4L1816 358.8L1818 356.5L1820 353.5L1822 352.1L1824 354.3L1826 356.3L1828 358.4L1830 359.4L1832 361.2L1834 363.4L1836 367L1838 372.4L1840 375.9L1842 376.3L1844 375.1L1846 372.9L1848 370.7L1850 370.1L1852 369.6L1854 368.5L1856 365.4L1858 362.2L1860 359.1L1862 359.3L1864 359.5L1866 359.8L1868 358.5L1870 356.2L1872 352.6L1874 350.9L1876 351.2L1878 352.3L1880 351.4L1882 349.8L1884 347L1886 344.2L1888 343.4L1890 342.6L1892 341.9L1894 340.4L1896 336.5L1898 334.2L1900 332.7L1902 333.4" stroke="#858585" stroke-opacity="0.75" stroke-width="1.5" fill="none"/><path d="M1186 340.6L1188 342.1L1190 342.9L1192 342.6L1194 340.2L1196 339.8L1198 342L1200 345.1L1202 349L1204 350.6L1206 348.9L1208 347.7L1210 348.3L1212 351L1214 354.3L1216 356L1218 356.5L1220 356.6L1222 356.8L1224 359.2L1226 362L1228 366.2L1230 367.8L1232 367.4L1234 368L1236 370.3L1238 375L1240 380.1L1242 384.2L1244 386L1246 385.5L1248 384.5L1250 383.3L1252 383.7L1254 382.1L1256 378L1258 373.4L1260 368L1262 365.2L1264 364.9L1266 365.1L1268 366.1L1270 365.6L1272 364.3L1274 363.3L1276 364.1L1278 365.3L1280 366.3L1282 365.4L1284 362.1L1286 360.3L1288 360.7L1290 362.6L1292 366.9L1294 370.1L1296 372.5L1298 374L1300 377.1L1302 379.9L1304 384.5L1306 385.8L1308 385.8L1310 382.2L1312 378.4L1314 375.2L1316 374.3L1318 374.2L1320 372.4L1322 369.7L1324 366.6L1326 364.5L1328 364L1330 365.3L1332 365.5L1334 363.6L1336 361.3L1338 358.2L1340 356.3L1342 356.9L1344 357.7L1346 357.7L1348 355.3L1350 352.7L1352 349L1354 347.2L1356 346.8L1358 346.9L1360 345L1362 342.5L1364 340L1366 339.3L1368 340.6L1370 342.1L1372 342.8L1374 342.5L1376 341.5L1378 341.5L1380 344.2L1382 348L1384 351.1L1386 351.5L1388 350.1L1390 349.1L1392 350.2L1394 352.1L1396 356L1398 359L1400 359.4L1402 358.9L1404 359.4L1406 361.1L1408 364.7L1410 368.3L1412 370.2L1414 371.5L1416 372.4L1418 375.6L1420 380.1L1422 385.1L1424 388.2L1426 387.8L1428 385.2L1430 382.4L1432 380.4L1434 379.2L1436 376.2L1438 373.1L1440 368.5L1442 364.2L1444 363.2L1446 363.4L1448 364.9L1450 367.2L1452 365.9L1454 365.2L1456 362.9L1458 363.7L1460 363.8L1462 365L1464 364.4L1466 362L1468 361.4L1470 362.5L1472 366.3L1474 371.3L1476 375.3L1478 378.2L1480 379.6L1482 380.9L1484 382.1L1486 384.2L1488 384.9L1490 383L1492 378.5L1494 374.9L1496 371.3L1498 371.3L1500 371L1502 370.9L1504 368.6L1506 365.3L1508 362.9L1510 362.9L1512 363.3L1514 364.1L1516 361.9L1518 358.5L1520 356.2L1522 354.7L1524 355.8L1526 356.9L1528 355.6L1530 353.4L1532 349.4L1534 344.8L1536 343.8L1538 344L1540 345.4L1542 344.1L1544 341.7L1546 339.6L1548 338.6L1550 340.8L1552 342.1L1554 344.6L1556 344.4L1558 343.9L1560 344.4L1562 346.3L1564 349.5L1566 351.3L1568 352.4L1570 351.8L1572 350.7L1574 351.9L1576 355.4L1578 358.5L1580 361.1L1582 361.1L1584 361L1586 361.5L1588 364.2L1590 368.5L1592 372.4L1594 375.2L1596 376.3L1598 377.3L1600 379.9L1602 384.2L1604 386.9L1606 388.1L1608 386.9L1610 382.3L1612 377.7L1614 375.2L1616 373.2L1618 371.9L1620 369L1622 365.4L1624 362.5L1626 361.7L1628 363.4L1630 366.5L1632 367.5L1634 366.9L1636 364.7L1638 361.7L1640 362.1L1642 362.7L1644 364.2L1646 363.6L1648 364.1L1650 364.3L1652 366L1654 371.4L1656 376.3L1658 380.9L1660 382.4L1662 383.3L1664 381.9L1666 382.9L1668 382.5L1670 382.3L1672 379.9L1674 375.7L1676 370.4L1678 369L1680 368.1L1682 368.6L1684 368.7L1686 366.9L1688 363.3L1690 361.8L1692 361.1L1694 361.4L1696 360.9L1698 360.8L1700 356.9L1702 354.2L1704 353.4L1706 354.1L1708 354.8L1710 353.1L1712 350.2L1714 345.2L1716 343.1L1718 342.3L1720 342.8L1722 343.3L1724 343.3L1726 341.3L1728 338.9L1730 338.9L1732 340.4L1734 343.9L1736 345.9L1738 346.5L1740 347.1L1742 346.4L1744 348.1L1746 350.2L1748 353.3L1750 353.8L1752 353.4L1754 353.5L1756 354L1758 357.2L1760 361.1L1762 362.8L1764 364.4L1766 363.5L1768 364.9L1770 367.1L1772 372.2L1774 376.4L1776 379.6L1778 380.8L1780 381.7L1782 383.9L1784 385.9L1786 387.4L1788 387.1L1790 382.3L1792 377.5L1794 372.3L1796 370L1798 368.3L1800 368.5L1802 366.2L1804 364.3L1806 363L1808 362.8L1810 364.1L1812 367.2L1814 367.5L1816 365.5L1818 363.2L1820 361.2L1822 360.5L1824 362.4L1826 364.8L1828 366.3L1830 367.1L1832 367.7L1834 370.9L1836 376.6L1838 382.2L1840 384.5L1842 385.4L1844 382.9L1846 381.6L1848 379.4L1850 379.5L1852 378.1L1854 376L1856 371.3L1858 368.3L1860 365.8L1862 366.9L1864 367.6L1866 367.5L1868 365.3L1870 361.7L1872 359.3L1874 358.5L1876 359.7L1878 359.8L1880 358.2L1882 356.2L1884 354L1886 352.3L1888 351.3L1890 350.9L1892 349.8L1894 346.2L1896 343.1L1898 340.8L1900 340.4L1902 341.8" stroke="#858585" stroke-opacity="0.75" stroke-width="1.5" fill="none"/><path d="M1186 348.5L1188 349.9L1190 349.6L1192 348.5L1194 346.1L1196 347.2L1198 349.4L1200 353.1L1202 356.4L1204 357.2L1206 355.6L1208 354.9L1210 356.2L1212 358.8L1214 361.5L1216 362.7L1218 362.9L1220 362.7L1222 364L1224 366.3L1226 370.1L1228 373.3L1230 374L1232 374.5L1234 375.2L1236 378.4L1238 384.4L1240 389.1L1242 393.1L1244 394.3L1246 393.7L1248 393.4L1250 393.9L1252 393.3L1254 391.4L1256 386.7L1258 380.2L1260 375.5L1262 372.5L1264 373L1266 373.7L1268 374L1270 372.6L1272 370.4L1274 371.3L1276 372.1L1278 374.5L1280 374.9L1282 372.6L1284 369.3L1286 366.7L1288 368.4L1290 370.6L1292 374.6L1294 378.6L1296 380.3L1298 382.4L1300 385L1302 389.8L1304 393.7L1306 395.6L1308 394L1310 390.7L1312 386.3L1314 383.9L1316 383.5L1318 382.7L1320 379.8L1322 376.5L1324 372.8L1326 372.1L1328 372L1330 372.9L1332 372.6L1334 370.3L1336 367.7L1338 364.1L1340 363.1L1342 364.1L1344 365.2L1346 364.8L1348 362.1L1350 358.4L1352 355.8L1354 354.8L1356 354.8L1358 353.5L1360 352.1L1362 348.9L1364 346.9L1366 345.9L1368 347.9L1370 350.2L1372 349.8L1374 348.7L1376 348.5L1378 348.7L1380 352.8L1382 356.5L1384 358.1L1386 358.2L1388 356.9L1390 355.4L1392 357.7L1394 360.6L1396 363.8L1398 365.8L1400 365.4L1402 365.2L1404 366.6L1406 369.5L1408 373.2L1410 376.4L1412 377.2L1414 378.7L1416 379.5L1418 383.3L1420 389.9L1422 394L1424 396.5L1426 395.4L1428 393.3L1430 391.8L1432 389.4L1434 387.5L1436 384.6L1438 380.1L1440 374.9L1442 371.5L1444 370.3L1446 371.7L1448 373.6L1450 374.1L1452 373.2L1454 371.6L1456 371.5L1458 371.6L1460 372.6L1462 372.6L1464 371.2L1466 368.4L1468 368.3L1470 370.1L1472 374.8L1474 380L1476 383.4L1478 386.5L1480 388L1482 389.3L1484 392.4L1486 394.1L1488 394.7L1490 391.5L1492 386.3L1494 381.8L1496 379.7L1498 379.3L1500 378.9L1502 377.7L1504 375.3L1506 371.1L1508 370.5L1510 370.6L1512 370.7L1514 370.8L1516 368.6L1518 364.7L1520 362.2L1522 361.8L1524 363.8L1526 364.8L1528 363.8L1530 359.9L1532 355.5L1534 352.7L1536 351.9L1538 351.7L1540 352.6L1542 350.2L1544 347.6L1546 346.1L1548 346L1550 347.9L1552 349.8L1554 351.7L1556 350.9L1558 351L1560 352L1562 355.1L1564 358.1L1566 359L1568 359.4L1570 358.1L1572 357.2L1574 359.3L1576 362.5L1578 365.6L1580 367.6L1582 367.5L1584 367.2L1586 368.3L1588 371.4L1590 376.1L1592 380.1L1594 381.8L1596 382.9L1598 384.7L1600 388.6L1602 393.3L1604 396.8L1606 397.1L1608 394.2L1610 390.3L1612 386.7L1614 384.2L1616 381.9L1618 380.1L1620 375.6L1622 372.4L1624 369.9L1626 369.9L1628 372.5L1630 374L1632 374.7L1634 373.9L1636 371L1638 369.6L1640 369.6L1642 371.5L1644 371.9L1646 370.6L1648 370.7L1650 370.4L1652 374.7L1654 380.1L1656 385.4L1658 389.6L1660 391.5L1662 390.9L1664 391.7L1666 391.8L1668 392.3L1670 390.8L1672 386.6L1674 382.6L1676 378L1678 376.7L1680 376.1L1682 377.4L1684 376.2L1686 373.4L1688 370.5L1690 368.4L1692 368.6L1694 369.4L1696 369.2L1698 366.5L1700 363.7L1702 361.4L1704 361.3L1706 362.2L1708 362.9L1710 359.6L1712 356.4L1714 352.5L1716 350.1L1718 349.1L1720 350.8L1722 351.1L1724 349.1L1726 347.8L1728 345.1L1730 346.2L1732 348.4L1734 352.2L1736 353.2L1738 353.2L1740 353.1L1742 353.4L1744 356L1746 358.7L1748 360.2L1750 360.5L1752 360L1754 359.4L1756 361.9L1758 365L1760 368.2L1762 369.8L1764 370.6L1766 370.5L1768 372.1L1770 375.5L1772 380.3L1774 384.8L1776 386.9L1778 388.1L1780 390.4L1782 392.7L1784 395.5L1786 397L1788 395L1790 390.4L1792 385.8L1794 380.5L1796 378.5L1798 377.1L1800 375.8L1802 373.5L1804 371.1L1806 369.2L1808 370.9L1810 373.3L1812 375.7L1814 374.8L1816 373L1818 370.3L1820 367.9L1822 368.9L1824 370.4L1826 372.3L1828 372.7L1830 374.3L1832 375.8L1834 380.6L1836 386L1838 390.7L1840 393.7L1842 393.8L1844 392.1L1846 389.9L1848 389.1L1850 387.8L1852 386.7L1854 382.6L1856 378.7L1858 375.1L1860 373.6L1862 375.1L1864 375L1866 373.9L1868 371.8L1870 368.3L1872 366.6L1874 366.2L1876 366.6L1878 366.5L1880 365.7L1882 362.6L1884 360.5L1886 360.1L1888 359.7L1890 358.9L1892 356.8L1894 352.8L1896 348.9L1898 347.6L1900 348.2L1902 349.1" stroke="#858585" stroke-opacity="0.75" stroke-width="1.5" fill="none"/><path d="M1186 356L1188 357.1L1190 356.7L1192 354.8L1194 353.7L1196 354.9L1198 357.2L1200 361.1L1202 363.6L1204 363.6L1206 361.9L1208 362.3L1210 363.4L1212 366.8L1214 369.1L1216 369.4L1218 369L1220 369.3L1222 371L1224 374.2L1226 378.6L1228 379.9L1230 380.2L1232 380.2L1234 383.2L1236 387.3L1238 393.1L1240 398L1242 400.4L1244 401.1L1246 402L1248 403L1250 404L1252 402.3L1254 399L1256 393.2L1258 387.1L1260 383.3L1262 381.4L1264 381.7L1266 381.3L1268 380.1L1270 379.3L1272 378.7L1274 378.6L1276 380.7L1278 382.2L1280 381.7L1282 379.3L1284 376.1L1286 374.2L1288 375.6L1290 379.5L1292 383.6L1294 386.1L1296 386.9L1298 389.6L1300 393.8L1302 399.6L1304 403.6L1306 404.9L1308 402.1L1310 398.6L1312 394.9L1314 392.4L1316 392.2L1318 390.2L1320 386.4L1322 383.4L1324 380.1L1326 379.2L1328 379.8L1330 380.4L1332 379.9L1334 377L1336 372.9L1338 371.3L1340 371.4L1342 372.4L1344 373.4L1346 371.5L1348 369.3L1350 365.7L1352 363.2L1354 362.8L1356 362.2L1358 361.1L1360 358L1362 354.7L1364 353.2L1366 354L1368 356.6L1370 356.8L1372 357.2L1374 354.9L1376 354.5L1378 356.1L1380 360.5L1382 364.6L1384 365.8L1386 364.1L1388 363L1390 362.3L1392 364.5L1394 368L1396 371.3L1398 371.6L1400 371.9L1402 371.5L1404 373L1406 376.4L1408 381.2L1410 383.2L1412 384.5L1414 384.6L1416 387.9L1418 393.1L1420 398.6L1422 403.8L1424 405.1L1426 403.8L1428 402.5L1430 400.5L1432 399.4L1434 397.7L1436 393.7L1438 387.6L1440 382.2L1442 379.4L1444 378.9L1446 379.7L1448 382L1450 381.7L1452 380.1L1454 378.6L1456 379.6L1458 380.5L1460 381.2L1462 380.1L1464 378L1466 375.3L1468 375.6L1470 378.2L1472 382.8L1474 387.8L1476 391L1478 394L1480 395.5L1482 398.4L1484 402.8L1486 404.3L1488 402.5L1490 398.4L1492 394.1L1494 390.4L1496 388.4L1498 387.9L1500 386.9L1502 384L1504 381.5L1506 378.7L1508 377.4L1510 377.5L1512 379.3L1514 377.9L1516 375.2L1518 371.3L1520 369.1L1522 370.6L1524 371.3L1526 372.7L1528 370.2L1530 366.3L1532 362.3L1534 360.3L1536 359.1L1538 359.5L1540 359.3L1542 356.3L1544 354.1L1546 353.2L1548 354L1550 355.7L1552 358L1554 358.2L1556 357L1558 357L1560 359.5L1562 362.7L1564 365.7L1566 366.4L1568 364.8L1570 364.2L1572 364.2L1574 367.2L1576 370.7L1578 373.5L1580 374.8L1582 373.6L1584 373.9L1586 375.5L1588 380.1L1590 383.8L1592 387.3L1594 388.6L1596 390.2L1598 393.5L1600 397.7L1602 403.6L1604 407L1606 406.5L1608 403.2L1610 399.2L1612 395.4L1614 393.4L1616 390.5L1618 387.4L1620 383.1L1622 379.1L1624 376.8L1626 377.6L1628 380.9L1630 382.8L1632 382.8L1634 380.1L1636 379.2L1638 378.3L1640 378L1642 379.7L1644 378.4L1646 377.7L1648 376.6L1650 378.9L1652 382.8L1654 389.6L1656 394.7L1658 398L1660 398.7L1662 399L1664 400L1666 402.2L1668 402.1L1670 399.1L1672 393.8L1674 388.9L1676 385.4L1678 384.4L1680 384.7L1682 384.7L1684 382.8L1686 379.2L1688 376.6L1690 376.1L1692 375.9L1694 376.4L1696 375.4L1698 372.9L1700 369.4L1702 368.9L1704 369.7L1706 370L1708 369.5L1710 367.1L1712 362.6L1714 358L1716 356.6L1718 357L1720 358L1722 357.8L1724 355.5L1726 353L1728 352.7L1730 354.2L1732 357.1L1734 359.1L1736 359.7L1738 359.8L1740 359.7L1742 361.5L1744 363.6L1746 366.4L1748 367.6L1750 367L1752 365.4L1754 366.3L1756 369.9L1758 373L1760 376.5L1762 376.8L1764 376.4L1766 376.5L1768 378.9L1770 384L1772 388.6L1774 391.9L1776 394.4L1778 395.9L1780 398.6L1782 401.8L1784 405.7L1786 406.8L1788 404.4L1790 398.9L1792 392.6L1794 388.9L1796 387.6L1798 386.1L1800 383.4L1802 380.6L1804 377.1L1806 376.7L1808 378.5L1810 381.6L1812 383.9L1814 382.1L1816 380.3L1818 377.1L1820 376.4L1822 377L1824 379.2L1826 379.5L1828 380.3L1830 380.2L1832 384L1834 388.4L1836 395.9L1838 400.6L1840 402.7L1842 402.3L1844 400.6L1846 399L1848 398.4L1850 397L1852 394.7L1854 389.9L1856 385.2L1858 382.4L1860 381.5L1862 382.4L1864 382.6L1866 380.4L1868 377L1870 374.2L1872 373.7L1874 374.8L1876 374.5L1878 373.7L1880 372L1882 368.9L1884 368.1L1886 367L1888 367.5L1890 366.4L1892 362.9L1894 359.1L1896 355.9L1898 355L1900 356.6L1902 356.9" stroke="#858585" stroke-opacity="0.75" stroke-width="1.5" fill="none"/><path d="M1186 363.9L1188 364.1L1190 362.1L1192 360.4L1194 360L1196 361.8L1198 365.5L1200 369.1L1202 370.1L1204 369.7L1206 369.1L1208 369.4L1210 372.1L1212 374.8L1214 376.2L1216 376L1218 375L1220 376.2L1222 378.9L1224 382.2L1226 385.2L1228 386.7L1230 386.5L1232 387.2L1234 390.2L1236 395.5L1238 401.1L1240 406.3L1242 409.2L1244 409.2L1246 411L1248 412.6L1250 414L1252 411.8L1254 407.8L1256 400.6L1258 394.4L1260 391.1L1262 389.2L1264 389L1266 389.2L1268 387.3L1270 385.7L1272 385.5L1274 387.9L1276 390.1L1278 390.8L1280 389.8L1282 385.8L1284 382.4L1286 381.9L1288 384.7L1290 388L1292 390.7L1294 392.8L1296 394.4L1298 397.9L1300 403.2L1302 409.7L1304 413.2L1306 413.7L1308 410.5L1310 406.2L1312 403.5L1314 401.4L1316 400.2L1318 398L1320 393.7L1322 388.9L1324 386.4L1326 387.1L1328 387.9L1330 387.5L1332 386.7L1334 382.7L1336 379.8L1338 378.1L1340 379.6L1342 380.3L1344 380L1346 379L1348 375L1350 372.4L1352 371.3L1354 371.1L1356 369.6L1358 367.5L1360 364.4L1362 361.7L1364 360.5L1366 361.9L1368 363.9L1370 364.6L1372 363.2L1374 360.8L1376 361.9L1378 364.1L1380 368.2L1382 371.7L1384 372.3L1386 370.8L1388 369L1390 370.6L1392 373.3L1394 375.7L1396 378L1398 378.3L1400 377.4L1402 378.9L1404 381.2L1406 384.7L1408 387.9L1410 390.1L1412 390.6L1414 392.3L1416 395.7L1418 401.8L1420 408.4L1422 411.5L1424 412.7L1426 412.3L1428 410.4L1430 410.3L1432 408.4L1434 405.8L1436 401.3L1438 394.7L1440 389.7L1442 386.6L1444 386.5L1446 387.8L1448 388.7L1450 388.2L1452 387.2L1454 386.3L1456 387.1L1458 388.5L1460 389.3L1462 387.7L1464 384.5L1466 382.6L1468 382.7L1470 386.8L1472 391.5L1474 396.7L1476 398.8L1478 401.1L1480 405L1482 409.1L1484 412.2L1486 414.1L1488 411.6L1490 406.2L1492 401.3L1494 398L1496 396.6L1498 396.2L1500 393.9L1502 390.5L1504 386.6L1506 384.8L1508 384.4L1510 386.6L1512 386.2L1514 384.4L1516 381.1L1518 378.4L1520 377.1L1522 377.9L1524 379.6L1526 379.1L1528 376.9L1530 372.3L1532 369.1L1534 367.3L1536 367.5L1538 367.7L1540 365.7L1542 362.4L1544 360.5L1546 360.5L1548 361.8L1550 363.6L1552 364.8L1554 363.8L1556 363.2L1558 364.3L1560 367.9L1562 371.1L1564 373.4L1566 372.9L1568 371.1L1570 370.7L1572 371.8L1574 374.6L1576 378.4L1578 380.8L1580 380.1L1582 379.6L1584 380.9L1586 383.7L1588 387.8L1590 391.3L1592 394.6L1594 395L1596 397.9L1598 401.5L1600 407.2L1602 412.4L1604 416L1606 414.8L1608 411L1610 407.1L1612 404.4L1614 402L1616 399.1L1618 394.4L1620 388.9L1622 385.6L1624 384.5L1626 385.8L1628 388.8L1630 390.2L1632 389.9L1634 387.9L1636 386.8L1638 385.7L1640 386.6L1642 387.2L1644 386.1L1646 384.6L1648 383.8L1650 385.8L1652 391.5L1654 398.2L1656 402.6L1658 405.4L1660 407.2L1662 407.9L1664 410.3L1666 411.2L1668 411.3L1670 407.2L1672 402L1674 396.1L1676 393.7L1678 392.5L1680 392.7L1682 391.7L1684 388.2L1686 384.8L1688 382.7L1690 383.4L1692 383.7L1694 384.4L1696 382.6L1698 379.5L1700 377.1L1702 376.4L1704 377.4L1706 378.1L1708 377.5L1710 373.9L1712 369.1L1714 364.9L1716 364.9L1718 365.7L1720 366.3L1722 364.8L1724 362.3L1726 359.4L1728 360.2L1730 361.7L1732 364.3L1734 365.9L1736 365.9L1738 365.8L1740 367.2L1742 369.2L1744 372.2L1746 373.6L1748 373.4L1750 373.1L1752 372.3L1754 373.4L1756 377L1758 381.2L1760 383.1L1762 382.6L1764 382.4L1766 383.3L1768 386.6L1770 392.3L1772 396.1L1774 399.4L1776 401.7L1778 404.1L1780 407.7L1782 412.6L1784 415L1786 415.4L1788 411.9L1790 406.9L1792 401.3L1794 398L1796 395.5L1798 393.2L1800 390.4L1802 386.5L1804 384.6L1806 384.7L1808 387.1L1810 390.7L1812 391.2L1814 390.1L1816 387.2L1818 384.1L1820 383.9L1822 384.8L1824 386.3L1826 387.3L1828 386.1L1830 387.5L1832 391.9L1834 398.2L1836 404.6L1838 409.4L1840 410.2L1842 410.1L1844 408.5L1846 408.8L1848 407.4L1850 406L1852 401.8L1854 396.6L1856 391.6L1858 389.9L1860 389.6L1862 389.9L1864 390.2L1866 386.5L1868 383.4L1870 381.1L1872 381.3L1874 382.2L1876 382.5L1878 380.4L1880 378.1L1882 375.9L1884 374.8L1886 376.2L1888 375.4L1890 373.3L1892 369.4L1894 365.2L1896 363.1L1898 362.8L1900 364.4L1902 364.4" stroke="#858585" stroke-opacity="0.75" stroke-width="1.5" fill="none"/><path d="M1186 372.2L1188 370.7L1190 368.5L1192 366.6L1194 367.1L1196 370L1198 374L1200 376.1L1202 377.5L1204 376.2L1206 375.9L1208 377L1210 380L1212 382.3L1214 382.3L1216 382.2L1218 381.6L1220 382.8L1222 386.3L1224 389.9L1226 393L1228 393.7L1230 393.2L1232 394L1234 398.2L1236 404.7L1238 409.7L1240 414.2L1242 416.5L1244 417.9L1246 419.6L1248 421.9L1250 422.7L1252 421.5L1254 415.9L1256 408.3L1258 402.4L1260 399.4L1262 398.1L1264 397.2L1266 396L1268 393.5L1270 392.7L1272 393.5L1274 395.8L1276 398.6L1278 398.9L1280 396.2L1282 392.8L1284 390.1L1286 390L1288 393.2L1290 395.2L1292 397.8L1294 399.8L1296 401.6L1298 406.3L1300 413.8L1302 419L1304 422.1L1306 421.9L1308 418.4L1310 414.4L1312 412.8L1314 410.4L1316 408.1L1318 404.7L1320 399.8L1322 395.8L1324 394.3L1326 394.8L1328 395.7L1330 395.6L1332 392.2L1334 388.8L1336 386.4L1338 386.8L1340 387L1342 388L1344 387.8L1346 384.1L1348 382.3L1350 380.7L1352 379.6L1354 378.9L1356 376.8L1358 374.2L1360 370.8L1362 367.8L1364 368L1366 369.8L1368 371.7L1370 370.6L1372 369.3L1374 367.7L1376 369.4L1378 372.5L1380 377.1L1382 379.5L1384 379.1L1386 377.3L1388 376.7L1390 378.4L1392 381.4L1394 383.7L1396 385L1398 384.3L1400 383.7L1402 385.8L1404 389L1406 392.4L1408 395.9L1410 396.5L1412 397.4L1414 399.1L1416 403.6L1418 410.6L1420 417L1422 420.3L1424 420.7L1426 420.2L1428 419.9L1430 419.3L1432 419L1434 414.3L1436 408.9L1438 401.1L1440 397L1442 395L1444 394.6L1446 396.7L1448 396.3L1450 395.1L1452 393.7L1454 394.4L1456 396.1L1458 397.2L1460 396.8L1462 393.5L1464 390.8L1466 388.9L1468 391.5L1470 395.8L1472 399.8L1474 403.3L1476 406.6L1478 409.3L1480 413.7L1482 418L1484 422.3L1486 422.5L1488 420.1L1490 414.4L1492 409.3L1494 406.6L1496 405.9L1498 404L1500 401.2L1502 397.4L1504 393.7L1506 392L1508 392.7L1510 393.9L1512 393.6L1514 390.3L1516 386.8L1518 384.3L1520 384.4L1522 386.2L1524 387L1526 387L1528 383.7L1530 379.7L1532 376.5L1534 375.6L1536 375.4L1538 374.2L1540 372.1L1542 368.6L1544 367.5L1546 367.5L1548 370.2L1550 371.3L1552 371.6L1554 369.7L1556 369.7L1558 371.2L1560 375.6L1562 379.4L1564 381.2L1566 379.8L1568 377.2L1570 376.9L1572 379.8L1574 382.8L1576 385.9L1578 387.5L1580 386.6L1582 386.5L1584 388L1586 391.8L1588 395.9L1590 399.2L1592 401L1594 402.9L1596 405.3L1598 411.3L1600 417.5L1602 422.3L1604 423.8L1606 423.1L1608 419.3L1610 416L1612 413.9L1614 411.9L1616 407.3L1618 401.7L1620 396.4L1622 393.1L1624 392.5L1626 395L1628 397.3L1630 397.3L1632 396.6L1634 394.6L1636 394.5L1638 395.3L1640 395.9L1642 395.2L1644 392.8L1646 390.6L1648 391.2L1650 394L1652 400.9L1654 406.9L1656 410.8L1658 413.4L1660 415.4L1662 417.7L1664 420.3L1666 421.9L1668 420.1L1670 415.1L1672 409.2L1674 403.9L1676 401.2L1678 400.8L1680 400.2L1682 397.8L1684 395.4L1686 391.7L1688 390L1690 390.8L1692 392.6L1694 391.2L1696 388.2L1698 385.7L1700 383.5L1702 384.2L1704 385.4L1706 385.9L1708 384L1710 379.6L1712 375.4L1714 372.4L1716 372.3L1718 373.6L1720 372.6L1722 370.6L1724 367.5L1726 366L1728 367.4L1730 369.5L1732 372.8L1734 373.6L1736 372.5L1738 373.1L1740 374.9L1742 377.9L1744 380.6L1746 381L1748 379.9L1750 378.6L1752 378.5L1754 381.4L1756 384.7L1758 388.3L1760 389.5L1762 388.8L1764 389.1L1766 391.1L1768 395.5L1770 400.2L1772 403.7L1774 406.2L1776 408.7L1778 411.5L1780 416.3L1782 422.5L1784 425.3L1786 424.7L1788 419.5L1790 414.5L1792 410.2L1794 406.5L1796 404.9L1798 401.9L1800 396.9L1802 393.4L1804 391.5L1806 392.7L1808 395.6L1810 398.2L1812 399L1814 396.7L1816 393.5L1818 392.3L1820 393.2L1822 393.8L1824 394.2L1826 393.3L1828 393.3L1830 395.3L1832 400.6L1834 407.1L1836 414L1838 417.9L1840 418.1L1842 418.6L1844 417.8L1846 418L1848 417.6L1850 414.3L1852 408.5L1854 402.7L1856 399.5L1858 398.2L1860 397.5L1862 398L1864 395.8L1866 393.6L1868 390.1L1870 388.9L1872 389.6L1874 390.4L1876 389.8L1878 386.7L1880 383.7L1882 382.8L1884 382.8L1886 383.8L1888 383.7L1890 380.6L1892 376.3L1894 371.6L1896 370.3L1898 370.9L1900 372.2L1902 371.8" stroke="#858585" stroke-opacity="0.75" stroke-width="1.5" fill="none"/><path d="M1186 379L1188 377.7L1190 375L1192 373L1194 375.2L1196 378.4L1198 381.4L1200 383.6L1202 383.1L1204 383.1L1206 382.9L1208 385.1L1210 388.4L1212 389.6L1214 388.5L1216 388.4L1218 388L1220 390.6L1222 394.3L1224 398.4L1226 399.6L1228 399L1230 398.8L1232 401.7L1234 406.2L1236 413.3L1238 417.9L1240 421.1L1242 424.4L1244 426.2L1246 429.2L1248 432.7L1250 432.4L1252 430L1254 422.6L1256 416.3L1258 410.6L1260 407.4L1262 407L1264 404.8L1266 402.6L1268 400.7L1270 399.6L1272 401.6L1274 404.7L1276 406.9L1278 406.9L1280 402.5L1282 399.8L1284 396.9L1286 399L1288 401.1L1290 403.7L1292 404.9L1294 406.5L1296 410.3L1298 415.5L1300 423.2L1302 428.6L1304 431.3L1306 429.2L1308 426.8L1310 423.2L1312 421.8L1314 420.2L1316 416.3L1318 411.9L1320 405.9L1322 403.3L1324 402L1326 402.6L1328 402.9L1330 402.1L1332 398.2L1334 395.7L1336 393.1L1338 394.1L1340 395.9L1342 395.5L1344 393.5L1346 390.8L1348 388.8L1350 387.7L1352 387.4L1354 387.2L1356 384.7L1358 379.9L1360 377.1L1362 375.3L1364 375.7L1366 378L1368 378.9L1370 376.8L1372 374.6L1374 374L1376 376L1378 380.3L1380 384.3L1382 386.5L1384 385.9L1386 384.1L1388 383.8L1390 385.5L1392 388.5L1394 390.6L1396 390.9L1398 390L1400 390.1L1402 393.5L1404 396.8L1406 401L1408 402.1L1410 402.9L1412 403.9L1414 406.3L1416 413.1L1418 420.3L1420 424.9L1422 428.4L1424 429.1L1426 429.8L1428 429.6L1430 429.4L1432 428.1L1434 422.7L1436 415.7L1438 408.5L1440 404.3L1442 402.5L1444 403.7L1446 403.7L1448 402.2L1450 401.1L1452 401.8L1454 403.4L1456 405L1458 406L1460 404.5L1462 400.9L1464 396.8L1466 396.5L1468 399.6L1470 403.2L1472 408.4L1474 411.1L1476 414L1478 417.6L1480 422.4L1482 428.5L1484 431.8L1486 431.2L1488 427.7L1490 421.8L1492 417.7L1494 415L1496 413.7L1498 411.2L1500 407.3L1502 403.3L1504 400.2L1506 399.3L1508 401.2L1510 401.6L1512 399.6L1514 396.7L1516 393.2L1518 392.3L1520 392.7L1522 394.9L1524 394.4L1526 393.2L1528 389.1L1530 385.9L1532 384.8L1534 383.9L1536 383.3L1538 381.1L1540 377.6L1542 375.2L1544 373.8L1546 375.5L1548 377.5L1550 379.2L1552 378.1L1554 376.3L1556 376.7L1558 379.7L1560 383.8L1562 387.5L1564 387.6L1566 386L1568 384.2L1570 384.1L1572 387.3L1574 391.4L1576 393.3L1578 393.5L1580 393.1L1582 392.6L1584 395.2L1586 399.8L1588 403.7L1590 405.7L1592 407L1594 408.9L1596 413.4L1598 419.5L1600 426.5L1602 431.6L1604 432.6L1606 430.8L1608 427.4L1610 425.5L1612 424.1L1614 420.7L1616 415.2L1618 408.7L1620 403.4L1622 399.8L1624 400.4L1626 403.1L1628 405L1630 404.6L1632 402.9L1634 402.4L1636 402L1638 404L1640 403.7L1642 401.5L1644 399.7L1646 397.4L1648 398.5L1650 402.7L1652 408.9L1654 415.3L1656 419.2L1658 420.9L1660 424.1L1662 427.8L1664 430.3L1666 430.5L1668 427.9L1670 422.8L1672 416.5L1674 411.9L1676 410.4L1678 409.8L1680 407.7L1682 405.3L1684 400.6L1686 397.9L1688 397.6L1690 399.4L1692 399.2L1694 398.8L1696 395.4L1698 391.2L1700 390.2L1702 392L1704 393.6L1706 393.9L1708 391.5L1710 385.9L1712 382.2L1714 380L1716 380.5L1718 381.2L1720 379.9L1722 376.9L1724 374L1726 373.4L1728 375.7L1730 378.4L1732 379L1734 379.7L1736 378.4L1738 379.4L1740 382.2L1742 385.9L1744 387.8L1746 388.3L1748 386.9L1750 385.1L1752 386.4L1754 389.6L1756 393.2L1758 396L1760 396.5L1762 395.9L1764 395.8L1766 398.1L1768 402.9L1770 407.5L1772 411.5L1774 413.1L1776 415.4L1778 420.7L1780 426.6L1782 431.5L1784 434.8L1786 433.2L1788 428.3L1790 422.4L1792 419L1794 415.8L1796 413.3L1798 408.1L1800 403.1L1802 399.5L1804 398.3L1806 400.6L1808 404.4L1810 406.4L1812 405.7L1814 403.9L1816 400.7L1818 400.8L1820 401.5L1822 401.9L1824 401.2L1826 399.5L1828 400L1830 403L1832 409.2L1834 416.2L1836 422.6L1838 425.6L1840 426.2L1842 427.6L1844 427.3L1846 428L1848 426.5L1850 422.1L1852 415.9L1854 409.9L1856 407.1L1858 405.4L1860 405.8L1862 405.8L1864 403L1866 398.6L1868 396.6L1870 396.4L1872 397.5L1874 397.3L1876 396.8L1878 393.2L1880 391.1L1882 389.4L1884 391.9L1886 392.8L1888 391.7L1890 387L1892 382.2L1894 378.2L1896 377.1L1898 378.6L1900 379L1902 378.1" stroke="#858585" stroke-opacity="0.75" stroke-width="1.5" fill="none"/><path d="M1186 385.7L1188 383.9L1190 381.4L1192 381.1L1194 382.7L1196 386.1L1198 389.4L1200 390.4L1202 390.2L1204 389.6L1206 391.3L1208 394.2L1210 395.5L1212 396.1L1214 395.3L1216 394.1L1218 395.1L1220 398.2L1222 402.3L1224 404.7L1226 405.7L1228 404.9L1230 406.3L1232 409.6L1234 415.6L1236 421.1L1238 425.7L1240 429.4L1242 431.7L1244 435.5L1246 439.3L1248 443L1250 441.9L1252 438.3L1254 430.8L1256 423.9L1258 419.5L1260 416.8L1262 414.6L1264 412.4L1266 408.4L1268 406.6L1270 407.6L1272 409.6L1274 413.8L1276 415.2L1278 413L1280 409.1L1282 405.9L1284 405.6L1286 406.4L1288 408.7L1290 410.1L1292 411.4L1294 413.6L1296 417.4L1298 424.9L1300 432.6L1302 438.6L1304 439.5L1306 437.8L1308 434.3L1310 432.1L1312 431.5L1314 429.1L1316 424.3L1318 417.9L1320 413.1L1322 410.4L1324 409.3L1326 411.3L1328 411L1330 408.5L1332 404.7L1334 402.1L1336 401.7L1338 401.8L1340 403.6L1342 402L1344 400.5L1346 397L1348 396.5L1350 396.2L1352 396.3L1354 394.8L1356 391.2L1358 386.3L1360 383.4L1362 383L1364 384.2L1366 385.9L1368 385.1L1370 382.7L1372 381.7L1374 381.1L1376 384.8L1378 388.4L1380 391.9L1382 392.8L1384 391.5L1386 390.3L1388 391.8L1390 394L1392 396.5L1394 398L1396 397.8L1398 396.1L1400 397.7L1402 401L1404 405.1L1406 408.4L1408 409.2L1410 408.7L1412 410.5L1414 415.3L1416 421.2L1418 428.6L1420 433L1422 435.9L1424 437.4L1426 438.4L1428 439.5L1430 439.9L1432 436.5L1434 430.2L1436 422.3L1438 415.8L1440 412.8L1442 411.8L1444 412L1446 411.5L1448 409.5L1450 407.8L1452 409.4L1454 412.1L1456 413.5L1458 414L1460 410.7L1462 406.5L1464 404.4L1466 404.3L1468 407.2L1470 412.4L1472 415.4L1474 418.6L1476 421.6L1478 426.6L1480 432.5L1482 438.1L1484 440.7L1486 439.9L1488 434.8L1490 430.5L1492 426.9L1494 424.9L1496 421.9L1498 419.4L1500 414.4L1502 409.8L1504 407.9L1506 407.9L1508 409.3L1510 408.9L1512 406.9L1514 403.3L1516 399.8L1518 399.4L1520 400.6L1522 402L1524 402.5L1526 399L1528 395.8L1530 393.3L1532 392.8L1534 392.4L1536 391.1L1538 387.9L1540 384.5L1542 382.2L1544 381.1L1546 384.1L1548 386L1550 385.8L1552 384.1L1554 383L1556 383.5L1558 387.3L1560 392.6L1562 395.3L1564 395L1566 392.9L1568 390.3L1570 391.8L1572 395L1574 399L1576 400.6L1578 399.5L1580 399.6L1582 399.5L1584 404.1L1586 408.5L1588 411L1590 412.7L1592 413.9L1594 417L1596 421.4L1598 429.4L1600 435.5L1602 440.1L1604 440.3L1606 439.2L1608 436.4L1610 435L1612 433.8L1614 429L1616 422.2L1618 415.1L1620 409.5L1622 408.6L1624 409.2L1626 410.7L1628 412.2L1630 411.6L1632 410.6L1634 410.2L1636 411.1L1638 412.8L1640 412L1642 408.6L1644 405.5L1646 404.5L1648 406.5L1650 411.3L1652 417.5L1654 422.3L1656 426L1658 429.3L1660 433.1L1662 437.7L1664 439.9L1666 440L1668 436.6L1670 429.8L1672 423.2L1674 420.2L1676 418.6L1678 417.2L1680 414.7L1682 411.3L1684 407.3L1686 405.7L1688 405.6L1690 407.3L1692 406.5L1694 404L1696 400.7L1698 398.6L1700 398.1L1702 400L1704 401.5L1706 400.5L1708 397.5L1710 392.7L1712 389.1L1714 388.4L1716 388.5L1718 388.8L1720 385.6L1722 382.4L1724 380.9L1726 380.7L1728 382.9L1730 386.1L1732 385.9L1734 385.1L1736 384.9L1738 387.2L1740 390.8L1742 394.2L1744 395.5L1746 395.2L1748 392.7L1750 391.9L1752 393.1L1754 397.7L1756 401L1758 402L1760 402.2L1762 401L1764 402.4L1766 406.5L1768 412L1770 415.9L1772 418.7L1774 419.7L1776 423.1L1778 429.3L1780 435.7L1782 442.1L1784 443.3L1786 440.5L1788 436.2L1790 431.1L1792 427.6L1794 425.7L1796 421.2L1798 415.1L1800 410.1L1802 406.5L1804 406.3L1806 409.8L1808 412.6L1810 414.2L1812 412.2L1814 410.5L1816 408.6L1818 408.8L1820 409.5L1822 409L1824 408L1826 406.5L1828 406.8L1830 411L1832 418.5L1834 425.6L1836 430.4L1838 434.2L1840 434.4L1842 436.7L1844 437L1846 438.1L1848 435.9L1850 429.4L1852 422.7L1854 417.3L1856 414.5L1858 413.7L1860 414.1L1862 412.4L1864 408.9L1866 405.5L1868 403.8L1870 403.6L1872 404.8L1874 405.7L1876 402.4L1878 398.8L1880 397.5L1882 397.7L1884 399.3L1886 400.3L1888 397.7L1890 393.9L1892 388L1894 385.5L1896 385.5L1898 386.9L1900 386.6L1902 384.6" stroke="#858585" stroke-opacity="0.75" stroke-width="1.5" fill="none"/><path d="M1186 392.5L1188 389.7L1190 387.3L1192 388.2L1194 391.1L1196 393.7L1198 396.1L1200 396.2L1202 395.7L1204 396.8L1206 399.1L1208 401.9L1210 402.9L1212 403.1L1214 400.7L1216 401.2L1218 402.8L1220 406.6L1222 410.4L1224 412.3L1226 412L1228 411.2L1230 412.7L1232 418.2L1234 424L1236 429.8L1238 433.7L1240 435.8L1242 439.2L1244 444.6L1246 449.3L1248 452.5L1250 450.5L1252 445.1L1254 437.7L1256 431.7L1258 428L1260 425.9L1262 422.5L1264 419.4L1266 415.7L1268 413.2L1270 414.7L1272 418.7L1274 421.5L1276 422.4L1278 420.1L1280 416.2L1282 413.8L1284 413.2L1286 415.6L1288 416.7L1290 417.3L1292 418.5L1294 421.1L1296 426.8L1298 434.8L1300 442.7L1302 446.4L1304 447.1L1306 446.5L1308 443.6L1310 442.6L1312 441.1L1314 437.3L1316 431.5L1318 425.3L1320 420.1L1322 417.9L1324 418.1L1326 419.3L1328 417L1330 414.3L1332 410.2L1334 408.4L1336 408.7L1338 410.1L1340 410L1342 408.4L1344 406L1346 404.7L1348 404L1350 404.3L1352 404.3L1354 401.1L1356 397.2L1358 392L1360 390.3L1362 390.4L1364 392.1L1366 393.4L1368 391.6L1370 389.2L1372 388L1374 388.8L1376 393L1378 397L1380 398.8L1382 399.8L1384 397.8L1386 397.9L1388 399.7L1390 402.5L1392 403.6L1394 403.7L1396 403.6L1398 402.8L1400 404.9L1402 409.6L1404 413.1L1406 414.8L1408 415.1L1410 415.8L1412 417.4L1414 423.1L1416 430.3L1418 436.8L1420 441.4L1422 443.4L1424 445.3L1426 447.6L1428 449.6L1430 449.5L1432 444.8L1434 438.1L1436 429.4L1438 424.1L1440 420.7L1442 420.1L1444 419.4L1446 418.1L1448 415.3L1450 414.8L1452 416.7L1454 420.2L1456 422.9L1458 421.5L1460 417.5L1462 414.1L1464 411.7L1466 413.1L1468 416.7L1470 419.8L1472 423.1L1474 424.5L1476 428.8L1478 434.5L1480 442.6L1482 448L1484 449.9L1486 447.6L1488 442.7L1490 438.5L1492 435.6L1494 433.1L1496 430.6L1498 425.3L1500 420.2L1502 415.8L1504 415.4L1506 416.3L1508 417.1L1510 415.8L1512 412.7L1514 409.2L1516 406.7L1518 407.4L1520 408.7L1522 410L1524 408.4L1526 405.5L1528 403.4L1530 400.9L1532 400.9L1534 400.4L1536 397.9L1538 394.2L1540 390.5L1542 389.2L1544 390L1546 391.5L1548 392.4L1550 391.7L1552 389.6L1554 389L1556 390.8L1558 396.4L1560 400.5L1562 402L1564 401.2L1566 398.1L1568 398.2L1570 400.3L1572 403.6L1574 406.5L1576 406.6L1578 405.8L1580 405.3L1582 408.1L1584 411.9L1586 415.6L1588 418.6L1590 419.6L1592 420.3L1594 423.7L1596 430L1598 438.7L1600 444.8L1602 447.6L1604 448.1L1606 447L1608 445.9L1610 445.4L1612 442.4L1614 437.1L1616 429.9L1618 422.6L1620 417.1L1622 416.4L1624 417.9L1626 419.3L1628 419.3L1630 417.5L1632 416.8L1634 418L1636 420.1L1638 420.2L1640 418.6L1642 415.7L1644 412.3L1646 411.9L1648 414.9L1650 420.8L1652 426.3L1654 429.7L1656 433.9L1658 437.9L1660 442.4L1662 447.6L1664 449.9L1666 449L1668 443.4L1670 437.6L1672 432.2L1674 428.4L1676 426.8L1678 425.4L1680 422.1L1682 416.9L1684 413.3L1686 413.4L1688 414.1L1690 414.7L1692 414.3L1694 410.8L1696 407.3L1698 405L1700 405.9L1702 407.9L1704 409.4L1706 407.4L1708 403.3L1710 399.6L1712 396.4L1714 396.6L1716 396.2L1718 395.5L1720 392.5L1722 388.5L1724 387.9L1726 389.2L1728 391.5L1730 392.8L1732 393L1734 391.9L1736 391.8L1738 394.3L1740 398.7L1742 402.7L1744 403L1746 400.5L1748 398.6L1750 398.8L1752 401.3L1754 405.4L1756 408L1758 408.6L1760 408.3L1762 408.2L1764 410L1766 414.2L1768 419.7L1770 422.5L1772 425.3L1774 427.7L1776 431.5L1778 439L1780 445.9L1782 450.2L1784 451L1786 448.3L1788 445L1790 440.4L1792 437.9L1794 434.1L1796 428.6L1798 422.7L1800 416.1L1802 414.1L1804 414.7L1806 417.8L1808 420.8L1810 421.1L1812 418.8L1814 417L1816 416.9L1818 417.4L1820 417.6L1822 416.2L1824 414.7L1826 412.7L1828 414.4L1830 419.6L1832 427.2L1834 434.5L1836 438.8L1838 442L1840 443L1842 446.1L1844 447.8L1846 447.6L1848 444.3L1850 437.4L1852 430.3L1854 424.7L1856 422.8L1858 423.1L1860 421.2L1862 419.2L1864 415.3L1866 411.7L1868 410.6L1870 412.5L1872 413L1874 412L1876 408.9L1878 405.8L1880 404L1882 406.4L1884 408.6L1886 408.8L1888 404.7L1890 399.4L1892 395.4L1894 393.7L1896 393.6L1898 394.9L1900 393.9L1902 391.7" stroke="#858585" stroke-opacity="0.75" stroke-width="1.5" fill="none"/><path d="M1186 398.8L1188 395.7L1190 394.6L1192 396.1L1194 399.2L1196 401.8L1198 402.2L1200 402.7L1202 403L1204 404.8L1206 407.3L1208 410.3L1210 409.9L1212 409L1214 407.7L1216 407.6L1218 411.1L1220 414.9L1222 417.6L1224 418.4L1226 418.1L1228 418.2L1230 420.8L1232 426.2L1234 432.1L1236 437L1238 440.5L1240 443.4L1242 447.6L1244 454L1246 459L1248 462.4L1250 458.9L1252 453.1L1254 445.8L1256 440.7L1258 437.1L1260 433.7L1262 429.7L1264 425.2L1266 422.1L1268 420.8L1270 423L1272 427.9L1274 429.8L1276 430.5L1278 426.4L1280 423.9L1282 421.3L1284 421.9L1286 424.1L1288 424.2L1290 423.9L1292 424.5L1294 428.1L1296 434.9L1298 444.5L1300 451L1302 455.6L1304 455.4L1306 454.5L1308 453L1310 451.7L1312 449.3L1314 444.9L1316 438.9L1318 431L1320 427.3L1322 426L1324 426.1L1326 426.1L1328 423.7L1330 420.7L1332 417.3L1334 415.7L1336 417L1338 418.5L1340 417.8L1342 414.6L1344 412.2L1346 411.3L1348 412.1L1350 413.7L1352 411.8L1354 407.5L1356 402.3L1358 398.5L1360 397.9L1362 399L1364 400L1366 400L1368 397.3L1370 395.2L1372 394L1374 397.1L1376 400.8L1378 405L1380 406L1382 405.3L1384 404.7L1386 406L1388 407.5L1390 410.2L1392 411L1394 410.3L1396 409.6L1398 409.4L1400 412.4L1402 417.3L1404 420.5L1406 421.7L1408 420.6L1410 421.9L1412 426L1414 431.7L1416 439.5L1418 445.7L1420 448.9L1422 451.6L1424 454.8L1426 457.9L1428 459.7L1430 459.3L1432 453.5L1434 445.1L1436 437.2L1438 432.2L1440 429.6L1442 428.1L1444 426.5L1446 424.1L1448 421.7L1450 422.4L1452 425.7L1454 429L1456 430.4L1458 428.7L1460 423.9L1462 420.6L1464 419.9L1466 421.2L1468 424.7L1470 427.6L1472 429.8L1474 432.2L1476 437.4L1478 445L1480 452.3L1482 457.6L1484 458.9L1486 455.7L1488 451.8L1490 447.6L1492 444.8L1494 442.5L1496 437.8L1498 432.5L1500 426.6L1502 423.5L1504 423.2L1506 423.7L1508 424L1510 422.1L1512 418.5L1514 415.6L1516 414L1518 415.3L1520 416.3L1522 417.1L1524 415.3L1526 412.2L1528 410L1530 408.8L1532 408.8L1534 407.9L1536 403.9L1538 399.8L1540 396.3L1542 395.7L1544 398L1546 400L1548 399.9L1550 398.3L1552 395.9L1554 396.1L1556 399.3L1558 404.1L1560 408.1L1562 408.6L1564 407.5L1566 404.8L1568 406L1570 407.8L1572 411.1L1574 413L1576 412L1578 411.7L1580 412.6L1582 414.8L1584 420.3L1586 422.9L1588 425.5L1590 426L1592 427L1594 432.6L1596 439.2L1598 447.2L1600 454L1602 456.6L1604 456.5L1606 456.9L1608 456.8L1610 455.4L1612 451.3L1614 445L1616 436.8L1618 429.4L1620 425.7L1622 425.3L1624 426.3L1626 426.7L1628 425.9L1630 424.7L1632 424.9L1634 426.5L1636 428.4L1638 428.5L1640 426.4L1642 422.3L1644 418.5L1646 418.9L1648 422.7L1650 428.7L1652 433.3L1654 437.6L1656 440.5L1658 445.8L1660 451.4L1662 456.9L1664 460L1666 457.3L1668 451.1L1670 445.4L1672 440.2L1674 438L1676 435.3L1678 432L1680 427.9L1682 422.8L1684 420.2L1686 421.2L1688 422.1L1690 422.1L1692 420.8L1694 416.5L1696 412.9L1698 413L1700 414.4L1702 416L1704 416.7L1706 414.6L1708 410.4L1710 406.8L1712 405.3L1714 405.1L1716 403.9L1718 401.9L1720 397.9L1722 394.9L1724 395L1726 397.3L1728 398.8L1730 400.5L1732 398.9L1734 397.7L1736 398.5L1738 402.8L1740 407.7L1742 409.8L1744 409.5L1746 407.3L1748 404.8L1750 406.2L1752 409.2L1754 413.5L1756 415.2L1758 415.5L1760 413.6L1762 415.1L1764 418.2L1766 422.5L1768 427.3L1770 429.8L1772 431.9L1774 434.5L1776 439.7L1778 448.1L1780 455.7L1782 459.7L1784 459.5L1786 457.1L1788 452.7L1790 449.9L1792 446.9L1794 442.8L1796 436.1L1798 428.9L1800 423.1L1802 422.1L1804 423.9L1806 426.5L1808 428.4L1810 427.4L1812 426.6L1814 425.5L1816 425.4L1818 426.2L1820 425.8L1822 423.6L1824 420.5L1826 419.9L1828 422.6L1830 429.1L1832 435.8L1834 442.8L1836 446L1838 449.1L1840 452.1L1842 454.9L1844 457.9L1846 456.7L1848 452.1L1850 444.4L1852 437L1854 432.7L1856 431.1L1858 430.4L1860 428.9L1862 424.5L1864 421L1866 419.1L1868 418.5L1870 420.1L1872 420.7L1874 418.9L1876 414.2L1878 411.9L1880 411.5L1882 413.9L1884 415.7L1886 415.2L1888 411.2L1890 406L1892 402.4L1894 401.3L1896 401.9L1898 401.5L1900 400.7L1902 397.6" stroke="#858585" stroke-opacity="0.75" stroke-width="1.5" fill="none"/><path d="M1186 273L1188 271.3L1190 268.9L1192 269L1194 270L1196 272.3L1198 273.5L1200 273.8L1202 272.6L1204 272.1L1206 273.1L1208 276.8L1210 280.8L1212 282.2L1214 282.2L1216 282.3L1218 282.8L1220 285.7L1222 289.7L1224 291.9L1226 292.4L1228 292.5L1230 291.7L1232 292.9L1234 295L1236 297.9L1238 298.3L1240 296.8L1242 295.6L1244 294.3L1246 294.8L1248 296.7L1250 296.9L1252 296.6L1254 294.1L1256 291.9L1258 291.7L1260 293.4L1262 293.8L1264 292.5L1266 291.3L1268 288.2L1270 286.8L1272 287.4L1274 288.4L1276 289.6L1278 288.6L1280 286.6L1282 285.4L1284 285.8L1286 288.2L1288 290.5L1290 290.2L1292 290L1294 289L1296 289.2L1298 290.6L1300 293.2L1302 294.3L1304 294.4L1306 293.1L1308 292L1310 293.8L1312 296.2L1314 298.3L1316 298.5L1318 298L1320 295.9L1322 295L1324 295.1L1326 296.4L1328 296.7L1330 295.3L1332 292.3L1334 290.2L1336 288.8L1338 289.8L1340 288.7L1342 287.6L1344 284.9L1346 280.8L1348 278.6L1350 278.4L1352 278.7L1354 277.9L1356 275.8L1358 274L1360 270.9L1362 270.5L1364 271L1366 272.6L1368 272.3L1370 270.5L1372 269.4L1374 269L1376 270.5L1378 273.2L1380 275.1L1382 275.1L1384 273.5L1386 274.1L1388 276.2L1390 279.9L1392 282.9L1394 284.6L1396 284.6L1398 284.3L1400 286L1402 287.6L1404 291.8L1406 294.5L1408 293.8L1410 293.2L1412 292.8L1414 294.5L1416 296.7L1418 298.8L1420 298.6L1422 296.8L1424 294.5L1426 293.5L1428 294.5L1430 295.6L1432 297.2L1434 295.2L1436 293.8L1438 291.1L1440 290.1L1442 291.2L1444 292.7L1446 292.5L1448 289.3L1450 286.7L1452 285.8L1454 286.9L1456 287.8L1458 289.1L1460 288.3L1462 286.3L1464 285.4L1466 286.3L1468 288.8L1470 291.1L1472 291.8L1474 291.3L1476 289.6L1478 289.6L1480 291.2L1482 293.2L1484 295.6L1486 294.7L1488 294.7L1490 293.6L1492 294.3L1494 296.7L1496 298.8L1498 298.5L1500 296.8L1502 294.9L1504 294.6L1506 294.8L1508 295.4L1510 295.9L1512 293.4L1514 290.2L1516 287.8L1518 286.5L1520 287.3L1522 286.2L1524 285.3L1526 281.3L1528 278.8L1530 276.4L1532 276.5L1534 276.8L1536 276.1L1538 275.3L1540 272.5L1542 270L1544 269.8L1546 271L1548 272.2L1550 272.1L1552 270.8L1554 269.7L1556 269.2L1558 271.3L1560 273.6L1562 275.5L1564 277L1566 276.4L1568 276.6L1570 278.8L1572 282.5L1574 285.4L1576 286.9L1578 287.8L1580 286.5L1582 287.8L1584 290.5L1586 293.1L1588 295.4L1590 296.5L1592 295.3L1594 293.7L1596 295.1L1598 297.2L1600 298.4L1602 298.5L1604 295.7L1606 293.6L1608 292.4L1610 293.8L1612 295.7L1614 295.9L1616 294.5L1618 292.4L1620 290.4L1622 289.9L1624 290.5L1626 290.9L1628 290.9L1630 288.3L1632 286.7L1634 284.8L1636 286.7L1638 287.7L1640 289.3L1642 289.1L1644 287.5L1646 286.2L1648 286.6L1650 289.3L1652 292L1654 292.5L1656 292.2L1658 290.4L1660 290L1662 291.2L1664 293.9L1666 296.1L1668 297L1670 295.9L1672 294.6L1674 295L1676 296.8L1678 298.8L1680 298.7L1682 296.5L1684 294.6L1686 292.9L1688 292.9L1690 293.6L1692 294.1L1694 292.1L1696 289.1L1698 285.4L1700 283.9L1702 284.5L1704 283.7L1706 282.2L1708 279.5L1710 275.6L1712 274L1714 273.7L1716 275.5L1718 275.2L1720 273.8L1722 270.6L1724 269.2L1726 269L1728 270.6L1730 272.5L1732 272.4L1734 271.8L1736 270.5L1738 269.9L1740 272.2L1742 275.4L1744 277.8L1746 279.5L1748 278.2L1750 279.1L1752 281.3L1754 285.1L1756 287.7L1758 289L1760 289.7L1762 289.1L1764 289.3L1766 291.6L1768 295L1770 297L1772 297.6L1774 295.2L1776 294.2L1778 294.6L1780 296.6L1782 297.9L1784 297L1786 295.2L1788 293.9L1790 292L1792 293.5L1794 295.1L1796 294.9L1798 294.2L1800 291.4L1802 289.1L1804 287.9L1806 289.2L1808 290.4L1810 290.2L1812 288.4L1814 285.2L1816 285.2L1818 286.8L1820 288.7L1822 290.3L1824 290L1826 287.4L1828 287.8L1830 287.8L1832 290.4L1834 292.2L1836 293.3L1838 291.8L1840 290.4L1842 290.4L1844 292.8L1846 296.2L1848 297.8L1850 297.6L1852 295.9L1854 295L1856 295L1858 296.6L1860 298.6L1862 297.6L1864 295.3L1866 293.1L1868 291.2L1870 291.1L1872 291.8L1874 291.4L1876 289.4L1878 286.4L1880 283.1L1882 280.9L1884 281.8L1886 282L1888 279.8L1890 276.8L1892 274.2L1894 273L1896 272.9L1898 273L1900 273.8L1902 273" stroke="#ffae33" stroke-width="2.2" fill="none"/></svg>
<div class="t" style="left:56px;top:509.5px;font-size:14px;line-height:18px;color:#66d2f6;font-weight:400;">Amp</div>
<div class="t" style="left:323px;top:509.5px;font-size:14px;line-height:18px;color:#66d2f6;font-weight:400;">None</div>
<svg style="left:369px;top:515px" width="10" height="8"><path d="M0.5 1.5h8l-4 4.5z" fill="#66d2f6"/></svg>
<svg style="left:0;top:0;position:absolute" width="1048" height="940"><g stroke="#66d2f6" stroke-width="1.6" fill="none"><path d="M64.5 609V597h12M357.5 597h12v12M64.5 782v12h12M357.5 794h12v-12"/></g></svg>
<div style="left:50px;top:883px;width:337px;height:1px;background:#4d4d4d;"></div>
<div class="t" style="left:181px;top:862.0px;font-size:14px;line-height:18px;color:#e8e8e8;font-weight:400;">Time</div>
<div class="t" style="left:222px;top:862.0px;font-size:14px;line-height:18px;color:#9a9a9a;font-weight:400;">Slope</div>
<div style="left:175px;top:882px;width:42px;height:2px;background:#d8d8d8;"></div>
<div class="t" style="left:103px;top:888.5px;font-size:13px;line-height:17px;color:#9a9a9a;font-weight:400;">A</div>
<div class="t" style="left:105px;top:906.5px;font-size:14px;line-height:18px;color:#66d2f6;font-weight:400;">1.00 ms</div>
<div class="t" style="left:161px;top:888.5px;font-size:13px;line-height:17px;color:#9a9a9a;font-weight:400;">D</div>
<div class="t" style="left:164px;top:906.5px;font-size:14px;line-height:18px;color:#66d2f6;font-weight:400;">15.2 s</div>
<div class="t" style="left:219px;top:888.5px;font-size:13px;line-height:17px;color:#9a9a9a;font-weight:400;">S</div>
<div class="t" style="left:222px;top:906.5px;font-size:14px;line-height:18px;color:#66d2f6;font-weight:400;">-44 dB</div>
<div class="t" style="left:277.5px;top:888.5px;font-size:13px;line-height:17px;color:#9a9a9a;font-weight:400;">R</div>
<div class="t" style="left:281px;top:906.5px;font-size:14px;line-height:18px;color:#66d2f6;font-weight:400;">16.0 ms</div>
<div class="t" style="left:396px;top:509.5px;font-size:14px;line-height:18px;color:#66d2f6;font-weight:400;">Env 2</div>
<div class="t" style="left:647px;top:509.5px;font-size:14px;line-height:18px;color:#66d2f6;font-weight:400;">None</div>
<svg style="left:694px;top:515px" width="10" height="8"><path d="M0.5 1.5h8l-4 4.5z" fill="#66d2f6"/></svg>
<svg style="left:0;top:0;position:absolute" width="1048" height="940"><g stroke="#66d2f6" stroke-width="1.6" fill="none"><path d="M402.5 609V597h12M682 597h12v12M402.5 782v12h12M682 794h12v-12"/></g></svg>
<div style="left:390px;top:883px;width:321px;height:1px;background:#4d4d4d;"></div>
<div class="t" style="left:492px;top:862.0px;font-size:14px;line-height:18px;color:#e8e8e8;font-weight:400;">Time</div>
<div class="t" style="left:534px;top:862.0px;font-size:14px;line-height:18px;color:#9a9a9a;font-weight:400;">Slope</div>
<div class="t" style="left:577px;top:862.0px;font-size:14px;line-height:18px;color:#9a9a9a;font-weight:400;">Value</div>
<div style="left:486px;top:882px;width:43px;height:2px;background:#d8d8d8;"></div>
<div class="t" style="left:436px;top:888.5px;font-size:13px;line-height:17px;color:#9a9a9a;font-weight:400;">A</div>
<div class="t" style="left:438px;top:906.5px;font-size:14px;line-height:18px;color:#66d2f6;font-weight:400;">7.32 s</div>
<div class="t" style="left:494px;top:888.5px;font-size:13px;line-height:17px;color:#9a9a9a;font-weight:400;">D</div>
<div class="t" style="left:496.5px;top:906.5px;font-size:14px;line-height:18px;color:#66d2f6;font-weight:400;">1.03 s</div>
<div class="t" style="left:552px;top:888.5px;font-size:13px;line-height:17px;color:#9a9a9a;font-weight:400;">S</div>
<div class="t" style="left:555px;top:906.5px;font-size:14px;line-height:18px;color:#66d2f6;font-weight:400;">0.0 %</div>
<div class="t" style="left:610px;top:888.5px;font-size:13px;line-height:17px;color:#9a9a9a;font-weight:400;">R</div>
<div class="t" style="left:613px;top:906.5px;font-size:14px;line-height:18px;color:#66d2f6;font-weight:400;">600 ms</div>
<div class="t" style="left:720px;top:509.5px;font-size:14px;line-height:18px;color:#66d2f6;font-weight:400;">Env 3</div>
<div class="t" style="left:977px;top:509.5px;font-size:14px;line-height:18px;color:#66d2f6;font-weight:400;">None</div>
<svg style="left:1023.5px;top:515px" width="10" height="8"><path d="M0.5 1.5h8l-4 4.5z" fill="#66d2f6"/></svg>
<svg style="left:0;top:0;position:absolute" width="1048" height="940"><g stroke="#66d2f6" stroke-width="1.6" fill="none"><path d="M727 609V597h12M1011.5 597h12v12M727 782v12h12M1011.5 794h12v-12"/></g></svg>
<div style="left:714px;top:883px;width:327px;height:1px;background:#4d4d4d;"></div>
<div class="t" style="left:819px;top:862.0px;font-size:14px;line-height:18px;color:#e8e8e8;font-weight:400;">Time</div>
<div class="t" style="left:861px;top:862.0px;font-size:14px;line-height:18px;color:#9a9a9a;font-weight:400;">Slope</div>
<div class="t" style="left:903px;top:862.0px;font-size:14px;line-height:18px;color:#9a9a9a;font-weight:400;">Value</div>
<div style="left:813px;top:882px;width:43px;height:2px;background:#d8d8d8;"></div>
<div class="t" style="left:763px;top:888.5px;font-size:13px;line-height:17px;color:#9a9a9a;font-weight:400;">A</div>
<div class="t" style="left:765px;top:906.5px;font-size:14px;line-height:18px;color:#66d2f6;font-weight:400;">1.32 s</div>
<div class="t" style="left:821px;top:888.5px;font-size:13px;line-height:17px;color:#9a9a9a;font-weight:400;">D</div>
<div class="t" style="left:823.5px;top:906.5px;font-size:14px;line-height:18px;color:#66d2f6;font-weight:400;">9.34 s</div>
<div class="t" style="left:879px;top:888.5px;font-size:13px;line-height:17px;color:#9a9a9a;font-weight:400;">S</div>
<div class="t" style="left:882px;top:906.5px;font-size:14px;line-height:18px;color:#66d2f6;font-weight:400;">100 %</div>
<div class="t" style="left:937px;top:888.5px;font-size:13px;line-height:17px;color:#9a9a9a;font-weight:400;">R</div>
<div class="t" style="left:940px;top:906.5px;font-size:14px;line-height:18px;color:#66d2f6;font-weight:400;">337 ms</div>
<svg style="left:0;top:0" width="1048" height="940"><g stroke="#66d2f6" stroke-width="2" fill="none"><path d="M72 789L78 603C86 660 96 700 124 729L167.6 773H265C266.5 778 268.5 782 273.7 784.3L280 788"/><path d="M409 698L480.5 607C486 670 490 715 502 740L523 788H633"/><path d="M733.7 785L780.6 603.5H922.5C926 690 932 720 939 738L954.5 788"/></g><path d="M75.8 693l3 3-3 3-3-3z" fill="none" stroke="#c98e98" stroke-width="1.8"/><path d="M124 726l3 3-3 3-3-3z" fill="none" stroke="#c98e98" stroke-width="1.8"/><path d="M273.7 781.3l3 3-3 3-3-3z" fill="none" stroke="#c98e98" stroke-width="1.8"/><rect x="73.7" y="598.5" width="9" height="9" fill="none" stroke="#ffae33" stroke-width="1.5"/><rect x="163.1" y="768.5" width="9" height="9" fill="none" stroke="#ffae33" stroke-width="1.5"/><rect x="275.5" y="783.5" width="9" height="9" fill="none" stroke="#ffae33" stroke-width="1.5"/><path d="M445.8 650.6l3 3-3 3-3-3z" fill="none" stroke="#c98e98" stroke-width="1.8"/><path d="M502.4 737l3 3-3 3-3-3z" fill="none" stroke="#c98e98" stroke-width="1.8"/><path d="M615.4 785.5l3 3-3 3-3-3z" fill="none" stroke="#c98e98" stroke-width="1.8"/><rect x="404.8" y="693.9" width="9" height="9" fill="none" stroke="#ffae33" stroke-width="1.5"/><rect x="476.0" y="602.5" width="9" height="9" fill="none" stroke="#ffae33" stroke-width="1.5"/><rect x="518.8" y="783.5" width="9" height="9" fill="none" stroke="#ffae33" stroke-width="1.5"/><rect x="628.3" y="783.5" width="9" height="9" fill="none" stroke="#ffae33" stroke-width="1.5"/><path d="M758.4 692l3 3-3 3-3-3z" fill="none" stroke="#c98e98" stroke-width="1.8"/><path d="M820 600.5l3 3-3 3-3-3z" fill="none" stroke="#c98e98" stroke-width="1.8"/><path d="M939.2 735.3l3 3-3 3-3-3z" fill="none" stroke="#c98e98" stroke-width="1.8"/><rect x="729.2" y="780.7" width="9" height="9" fill="none" stroke="#ffae33" stroke-width="1.5"/><rect x="776.1" y="599.0" width="9" height="9" fill="none" stroke="#ffae33" stroke-width="1.5"/><rect x="852.6" y="599.0" width="9" height="9" fill="none" stroke="#ffae33" stroke-width="1.5"/><rect x="950.0" y="783.5" width="9" height="9" fill="none" stroke="#ffae33" stroke-width="1.5"/></svg>
<div class="t" style="left:1050px;top:509.5px;font-size:14px;line-height:18px;color:#ffae33;font-weight:400;">LFO 1</div>
<div class="t" style="left:1362px;top:509.5px;font-size:14px;line-height:18px;color:#9a9a9a;font-weight:400;">A</div>
<div class="t" style="left:1379px;top:509.5px;font-size:14px;line-height:18px;color:#ffae33;font-weight:400;">4.89 s</div>
<div class="t" style="left:1449px;top:509.5px;font-size:14px;line-height:18px;color:#9a9a9a;font-weight:400;">Hz</div>
<div class="t" style="left:1478px;top:507.5px;font-size:15px;line-height:19px;color:#ffae33;font-weight:400;">&#9834;</div>
<div style="left:1502px;top:511px;width:15px;height:15px;background:#ffae33;"></div>
<div class="t" style="left:1209.5px;width:600px;text-align:center;top:511.5px;font-size:10px;line-height:14px;color:#1a1a1a;font-weight:700;">R</div>
<div style="left:1044px;top:883px;width:492px;height:1px;background:#4d4d4d;"></div>
<svg style="left:1207px;top:864px" width="170" height="18"><g fill="none" stroke-width="1.5"><path stroke="#9a9a9a" d="M0 12C4 2 8 2 11 8S17 15 21 5"/><path stroke="#9a9a9a" transform="translate(35 0)" d="M0 13L11 4L22 13"/><path stroke="#9a9a9a" transform="translate(71 0)" d="M0 13V4L21 13"/><path stroke="#9a9a9a" transform="translate(107 0)" d="M0 13V5H10V13H21V5"/><path stroke="#ffae33" transform="translate(143 0)" d="M0 13H4V5H8V11H13V8H17V6H21"/></g></svg>
<div class="t" style="left:875px;width:600px;text-align:center;top:888.0px;font-size:13px;line-height:17px;color:#9a9a9a;font-weight:400;">Rate</div>
<div class="t" style="left:875px;width:600px;text-align:center;top:906.0px;font-size:14px;line-height:18px;color:#ffae33;font-weight:400;">1/8</div>
<div class="t" style="left:943px;width:600px;text-align:center;top:888.0px;font-size:13px;line-height:17px;color:#9a9a9a;font-weight:400;">Amnt</div>
<div class="t" style="left:943px;width:600px;text-align:center;top:906.0px;font-size:14px;line-height:18px;color:#ffae33;font-weight:400;">97 %</div>
<div class="t" style="left:1010px;width:600px;text-align:center;top:888.0px;font-size:13px;line-height:17px;color:#9a9a9a;font-weight:400;">Shape</div>
<div class="t" style="left:1009px;width:600px;text-align:center;top:906.0px;font-size:14px;line-height:18px;color:#ffae33;font-weight:400;">44 %</div>
<div class="t" style="left:1077px;width:600px;text-align:center;top:888.0px;font-size:13px;line-height:17px;color:#9a9a9a;font-weight:400;">Offset</div>
<div class="t" style="left:1072px;width:600px;text-align:center;top:906.0px;font-size:14px;line-height:18px;color:#ffae33;font-weight:400;">0.0°</div>
<div class="t" style="left:1546px;top:509.5px;font-size:14px;line-height:18px;color:#ffae33;font-weight:400;">LFO 2</div>
<div class="t" style="left:1857px;top:509.5px;font-size:14px;line-height:18px;color:#9a9a9a;font-weight:400;">A</div>
<div class="t" style="left:1874px;top:509.5px;font-size:14px;line-height:18px;color:#ffae33;font-weight:400;">1.41 s</div>
<div class="t" style="left:1945px;top:509.5px;font-size:14px;line-height:18px;color:#9a9a9a;font-weight:400;">Hz</div>
<div class="t" style="left:1973px;top:507.5px;font-size:15px;line-height:19px;color:#ffae33;font-weight:400;">&#9834;</div>
<div style="left:1997px;top:511px;width:15px;height:15px;background:#ffae33;"></div>
<div class="t" style="left:1704.5px;width:600px;text-align:center;top:511.5px;font-size:10px;line-height:14px;color:#1a1a1a;font-weight:700;">R</div>
<div style="left:1540px;top:883px;width:490px;height:1px;background:#4d4d4d;"></div>
<svg style="left:1702px;top:864px" width="170" height="18"><g fill="none" stroke-width="1.5"><path stroke="#ffae33" d="M0 12C4 2 8 2 11 8S17 15 21 5"/><path stroke="#9a9a9a" transform="translate(35 0)" d="M0 13L11 4L22 13"/><path stroke="#9a9a9a" transform="translate(71 0)" d="M0 13V4L21 13"/><path stroke="#9a9a9a" transform="translate(107 0)" d="M0 13V5H10V13H21V5"/><path stroke="#9a9a9a" transform="translate(143 0)" d="M0 13H4V5H8V11H13V8H17V6H21"/></g></svg>
<div class="t" style="left:1370px;width:600px;text-align:center;top:888.0px;font-size:13px;line-height:17px;color:#9a9a9a;font-weight:400;">Rate</div>
<div class="t" style="left:1373px;width:600px;text-align:center;top:906.0px;font-size:14px;line-height:18px;color:#ffae33;font-weight:400;">1/64</div>
<div class="t" style="left:1438px;width:600px;text-align:center;top:888.0px;font-size:13px;line-height:17px;color:#9a9a9a;font-weight:400;">Amnt</div>
<div class="t" style="left:1438px;width:600px;text-align:center;top:906.0px;font-size:14px;line-height:18px;color:#ffae33;font-weight:400;">58 %</div>
<div class="t" style="left:1505px;width:600px;text-align:center;top:888.0px;font-size:13px;line-height:17px;color:#9a9a9a;font-weight:400;">Shape</div>
<div class="t" style="left:1505px;width:600px;text-align:center;top:906.0px;font-size:14px;line-height:18px;color:#ffae33;font-weight:400;">62 %</div>
<div class="t" style="left:1571px;width:600px;text-align:center;top:888.0px;font-size:13px;line-height:17px;color:#9a9a9a;font-weight:400;">Offset</div>
<div class="t" style="left:1567px;width:600px;text-align:center;top:906.0px;font-size:14px;line-height:18px;color:#ffae33;font-weight:400;">0.0°</div>
<svg style="left:0;top:0" width="2048" height="940"><path d="M1064.5 693.5L1068.8 693.5L1077.3 697.8L1080.8 689.2L1083.4 689.2L1085.1 695.5L1088.5 695.5L1090.2 687.4L1096.3 686.6L1102.3 685.2L1104.9 702.4L1111.7 705.5L1115.2 688.6L1117.7 688.6L1120.3 706.4L1122.9 682.6L1127.2 682.6L1129.8 700.3L1132.4 700.3L1134.1 691.7L1137.5 691.7L1139.2 675.9L1141.8 675.9L1143.5 692.6L1145.3 692.6L1147.8 712.7L1154.7 713.2L1157.3 688.6L1163.3 690.4L1166.7 679.7L1169.3 679.7L1172.8 704.6L1176.2 704.6L1177.9 721.8L1180.5 721.8L1182.2 706.4L1185.7 706.4L1187.4 663.7L1190.8 664.2L1192.5 668.5L1194.2 668.5L1196 721.8L1199.4 722.7L1201.1 710.7L1203.7 710.7L1206.3 693.5L1208.9 693.5L1210.6 669.4L1214 669.4L1216.6 722.7L1219.2 722.7L1220 684L1223.5 684L1225.2 673.7L1227.8 673.7L1229.5 655.6L1233.8 655.6L1236.4 716.7L1238.9 716.7L1239.8 669.7L1242.4 669.7L1244.1 731.3L1247.5 733L1251 738.2L1253.6 735.6L1258.7 734.7L1259.6 648.2L1262.2 648.2L1263.9 708.9L1266.4 708.9L1268.2 649.6L1271.6 649.6L1274.2 713.2L1276.8 713.2L1278.5 643.6L1281.7 643.6L1283.4 715.8L1286 715.8L1287.7 727.8L1291.2 727.8L1292 676.3L1296.3 675.4L1298.1 642.7L1305.8 640.2L1307.5 668.5L1310.1 669.4L1312.7 751.9L1315.2 751.9L1316.1 668.5L1320.4 668.5L1322.1 744.2L1325.6 744.2L1326.4 645.3L1330.7 644.5L1332.4 632.4L1335 632.4L1336.7 689.2L1339.3 689.2L1341 664.2L1344.5 664.2L1346.2 760.5L1349.6 760.5L1350.5 681.4L1354.8 681.4L1355.6 759.6L1359.1 759.6L1360.8 659.1L1363.4 659.1L1365.1 733.9L1369.4 733.9L1370.3 633.3L1373.7 633.3L1375.4 767.4L1378.8 768.2L1383.1 765.7L1384.9 641.9L1387.4 641.9L1389.2 688.3L1393.5 688.3L1395.2 668.5L1397.8 668.5L1398.6 620.4L1402.9 620.4L1404.6 698.6L1407.2 698.6L1408.9 621.3L1411.5 621.3L1413.2 689.2L1417.5 689.2L1418.9 610.1L1421.8 610.1L1423.5 638.4L1427 638.4L1428.7 774.3L1432.1 774.3L1433 743.3L1435.6 743.3L1436.4 610.1L1441.6 610.1L1443.3 747.6L1445.9 747.6L1447.6 775.1L1451.1 775.1L1452.8 706.4L1455.3 706.4L1457.1 736.4L1459.6 736.4L1461.4 647L1465.7 647L1467.4 721L1470 721L1471.7 766.5L1476 766.5L1476.8 731.3L1480.3 729.6L1483.7 727.8L1485.4 604.1L1489.7 604.1L1491.4 599.8L1494 599.8L1495.7 645.3L1499.2 645.3L1501.8 784.6L1504.3 784.6L1505.2 622.1L1507.8 621.3" stroke="#ffae33" stroke-width="2" fill="none" stroke-linejoin="round"/><path d="M1559 694L1559.5 694L1560 694L1560.5 694L1561 694L1561.5 693.9L1562 693.8L1562.5 693.7L1563 693.6L1563.5 693.5L1564 693.4L1564.5 693.3L1565 693.2L1565.5 693.1L1566 693L1566.5 692.9L1567 692.8L1567.5 692.7L1568 692.6L1568.5 692.5L1569 692.5L1569.5 692.4L1570 692.3L1570.5 692.2L1571 692.1L1571.5 692.1L1572 692L1572.5 691.9L1573 691.8L1573.5 691.8L1574 691.7L1574.5 691.6L1575 691.5L1575.5 691.5L1576 691.4L1576.5 691.4L1577 691.3L1577.5 691.3L1578 691.3L1578.5 691.3L1579 691.3L1579.5 691.4L1580 691.6L1580.5 691.8L1581 692.1L1581.5 692.6L1582 693.1L1582.5 693.7L1583 694.3L1583.5 694.9L1584 695.5L1584.5 696.1L1585 696.6L1585.5 697L1586 697.3L1586.5 697.6L1587 697.9L1587.5 698.1L1588 698.2L1588.5 698.4L1589 698.5L1589.5 698.6L1590 698.7L1590.5 698.8L1591 698.9L1591.5 699L1592 699.1L1592.5 699.2L1593 699.3L1593.5 699.4L1594 699.4L1594.5 699.5L1595 699.6L1595.5 699.7L1596 699.7L1596.5 699.8L1597 699.8L1597.5 699.9L1598 699.9L1598.5 700L1599 700L1599.5 700L1600 699.9L1600.5 699.8L1601 699.7L1601.5 699.4L1602 699.1L1602.5 698.6L1603 698L1603.5 697.1L1604 696.2L1604.5 695L1605 693.8L1605.5 692.6L1606 691.4L1606.5 690.4L1607 689.4L1607.5 688.7L1608 688.1L1608.5 687.6L1609 687.2L1609.5 686.9L1610 686.6L1610.5 686.4L1611 686.2L1611.5 686.1L1612 685.9L1612.5 685.8L1613 685.7L1613.5 685.6L1614 685.5L1614.5 685.4L1615 685.3L1615.5 685.2L1616 685.1L1616.5 685.1L1617 685L1617.5 684.9L1618 684.9L1618.5 684.8L1619 684.8L1619.5 684.7L1620 684.7L1620.5 684.7L1621 684.7L1621.5 684.8L1622 684.9L1622.5 685L1623 685.3L1623.5 685.6L1624 686.1L1624.5 686.8L1625 687.7L1625.5 688.9L1626 690.3L1626.5 691.9L1627 693.7L1627.5 695.6L1628 697.3L1628.5 698.9L1629 700.3L1629.5 701.4L1630 702.4L1630.5 703.1L1631 703.7L1631.5 704.2L1632 704.5L1632.5 704.8L1633 705L1633.5 705.2L1634 705.4L1634.5 705.6L1635 705.7L1635.5 705.8L1636 705.9L1636.5 706L1637 706.1L1637.5 706.2L1638 706.3L1638.5 706.3L1639 706.4L1639.5 706.5L1640 706.5L1640.5 706.6L1641 706.6L1641.5 706.7L1642 706.7L1642.5 706.7L1643 706.6L1643.5 706.5L1644 706.4L1644.5 706.2L1645 705.9L1645.5 705.4L1646 704.8L1646.5 703.9L1647 702.8L1647.5 701.3L1648 699.5L1648.5 697.4L1649 695.1L1649.5 692.7L1650 690.3L1650.5 688.1L1651 686.2L1651.5 684.6L1652 683.3L1652.5 682.3L1653 681.5L1653.5 680.9L1654 680.4L1654.5 680L1655 679.7L1655.5 679.5L1656 679.3L1656.5 679.1L1657 678.9L1657.5 678.8L1658 678.7L1658.5 678.6L1659 678.5L1659.5 678.4L1660 678.3L1660.5 678.2L1661 678.2L1661.5 678.1L1662 678L1662.5 678L1663 678L1663.5 677.9L1664 677.9L1664.5 678L1665 678L1665.5 678.1L1666 678.3L1666.5 678.5L1667 678.9L1667.5 679.5L1668 680.2L1668.5 681.2L1669 682.5L1669.5 684.3L1670 686.4L1670.5 688.9L1671 691.8L1671.5 694.8L1672 697.7L1672.5 700.5L1673 703L1673.5 705.1L1674 706.8L1674.5 708.1L1675 709.2L1675.5 710L1676 710.6L1676.5 711.1L1677 711.5L1677.5 711.8L1678 712L1678.5 712.2L1679 712.4L1679.5 712.6L1680 712.7L1680.5 712.8L1681 712.9L1681.5 713L1682 713.1L1682.5 713.2L1683 713.3L1683.5 713.3L1684 713.4L1684.5 713.4L1685 713.5L1685.5 713.5L1686 713.5L1686.5 713.4L1687 713.4L1687.5 713.2L1688 713L1688.5 712.7L1689 712.3L1689.5 711.7L1690 710.9L1690.5 709.8L1691 708.3L1691.5 706.4L1692 704L1692.5 701L1693 697.7L1693.5 694.2L1694 690.6L1694.5 687.2L1695 684.1L1695.5 681.5L1696 679.3L1696.5 677.6L1697 676.3L1697.5 675.3L1698 674.5L1698.5 673.8L1699 673.4L1699.5 673L1700 672.7L1700.5 672.5L1701 672.2L1701.5 672.1L1702 671.9L1702.5 671.8L1703 671.7L1703.5 671.6L1704 671.5L1704.5 671.4L1705 671.3L1705.5 671.3L1706 671.2L1706.5 671.2L1707 671.1L1707.5 671.1L1708 671.1L1708.5 671.2L1709 671.3L1709.5 671.4L1710 671.6L1710.5 671.9L1711 672.4L1711.5 673L1712 673.9L1712.5 675.1L1713 676.7L1713.5 678.8L1714 681.5L1714.5 684.7L1715 688.4L1715.5 692.5L1716 696.7L1716.5 700.8L1717 704.5L1717.5 707.7L1718 710.3L1718.5 712.5L1719 714.1L1719.5 715.4L1720 716.4L1720.5 717.2L1721 717.7L1721.5 718.2L1722 718.6L1722.5 718.8L1723 719.1L1723.5 719.3L1724 719.4L1724.5 719.6L1725 719.7L1725.5 719.8L1726 719.9L1726.5 720L1727 720.1L1727.5 720.2L1728 720.2L1728.5 720.3L1729 720.3L1729.5 720.3L1730 720.3L1730.5 720.2L1731 720.1L1731.5 720L1732 719.8L1732.5 719.4L1733 719L1733.5 718.3L1734 717.4L1734.5 716.1L1735 714.4L1735.5 712.1L1736 709.3L1736.5 705.8L1737 701.7L1737.5 697.1L1738 692.3L1738.5 687.6L1739 683.2L1739.5 679.4L1740 676.2L1740.5 673.6L1741 671.6L1741.5 670L1742 668.8L1742.5 667.9L1743 667.2L1743.5 666.6L1744 666.2L1744.5 665.9L1745 665.6L1745.5 665.4L1746 665.2L1746.5 665L1747 664.9L1747.5 664.8L1748 664.7L1748.5 664.6L1749 664.5L1749.5 664.4L1750 664.4L1750.5 664.3L1751 664.3L1751.5 664.3L1752 664.3L1752.5 664.4L1753 664.5L1753.5 664.6L1754 664.9L1754.5 665.2L1755 665.7L1755.5 666.4L1756 667.3L1756.5 668.7L1757 670.4L1757.5 672.8L1758 675.8L1758.5 679.5L1759 683.9L1759.5 688.9L1760 694.3L1760.5 699.6L1761 704.7L1761.5 709.2L1762 713L1762.5 716.1L1763 718.5L1763.5 720.4L1764 721.9L1764.5 723L1765 723.8L1765.5 724.5L1766 725L1766.5 725.4L1767 725.7L1767.5 726L1768 726.2L1768.5 726.3L1769 726.5L1769.5 726.6L1770 726.7L1770.5 726.8L1771 726.9L1771.5 727L1772 727.1L1772.5 727.1L1773 727.1L1773.5 727.1L1774 727.1L1774.5 727.1L1775 727L1775.5 726.8L1776 726.6L1776.5 726.2L1777 725.7L1777.5 725L1778 724L1778.5 722.7L1779 720.9L1779.5 718.5L1780 715.4L1780.5 711.5L1781 706.8L1781.5 701.4L1782 695.5L1782.5 689.5L1783 683.8L1783.5 678.6L1784 674.2L1784.5 670.5L1785 667.6L1785.5 665.3L1786 663.6L1786.5 662.2L1787 661.2L1787.5 660.5L1788 659.9L1788.5 659.4L1789 659L1789.5 658.7L1790 658.5L1790.5 658.3L1791 658.1L1791.5 658L1792 657.9L1792.5 657.7L1793 657.7L1793.5 657.6L1794 657.5L1794.5 657.5L1795 657.4L1795.5 657.4L1796 657.5L1796.5 657.5L1797 657.6L1797.5 657.8L1798 658L1798.5 658.4L1799 658.9L1799.5 659.6L1800 660.6L1800.5 661.9L1801 663.8L1801.5 666.2L1802 669.4L1802.5 673.4L1803 678.3L1803.5 684.1L1804 690.4L1804.5 697L1805 703.4L1805.5 709.3L1806 714.4L1806.5 718.7L1807 722.1L1807.5 724.8L1808 726.9L1808.5 728.5L1809 729.7L1809.5 730.6L1810 731.3L1810.5 731.8L1811 732.2L1811.5 732.6L1812 732.8L1812.5 733.1L1813 733.3L1813.5 733.4L1814 733.5L1814.5 733.7L1815 733.8L1815.5 733.8L1816 733.9L1816.5 733.9L1817 734L1817.5 734L1818 734L1818.5 733.9L1819 733.8L1819.5 733.6L1820 733.4L1820.5 733L1821 732.5L1821.5 731.8L1822 730.8L1822.5 729.5L1823 727.7L1823.5 725.2L1824 722L1824.5 717.9L1825 712.8L1825.5 706.8L1826 700.1L1826.5 692.9L1827 685.8L1827.5 679.2L1828 673.3L1828.5 668.4L1829 664.4L1829.5 661.2L1830 658.8L1830.5 656.9L1831 655.5L1831.5 654.5L1832 653.6L1832.5 653L1833 652.5L1833.5 652.1L1834 651.8L1834.5 651.6L1835 651.4L1835.5 651.2L1836 651.1L1836.5 650.9L1837 650.8L1837.5 650.7L1838 650.7L1838.5 650.6L1839 650.6L1839.5 650.6L1840 650.6L1840.5 650.7L1841 650.8L1841.5 650.9L1842 651.2L1842.5 651.5L1843 652L1843.5 652.7L1844 653.7L1844.5 655L1845 656.8L1845.5 659.3L1846 662.5L1846.5 666.7L1847 671.9L1847.5 678.1L1848 685.2L1848.5 692.8L1849 700.6L1849.5 707.9L1850 714.6L1850.5 720.2L1851 724.9L1851.5 728.5L1852 731.4L1852.5 733.5L1853 735.2L1853.5 736.4L1854 737.4L1854.5 738.1L1855 738.7L1855.5 739.1L1856 739.5L1856.5 739.8L1857 740L1857.5 740.2L1858 740.3L1858.5 740.5L1859 740.6L1859.5 740.7L1860 740.7L1860.5 740.8L1861 740.8L1861.5 740.8L1862 740.8L1862.5 740.8L1863 740.7L1863.5 740.5L1864 740.3L1864.5 739.9L1865 739.4L1865.5 738.7L1866 737.8L1866.5 736.5L1867 734.7L1867.5 732.3L1868 729.1L1868.5 724.9L1869 719.6L1869.5 713.2L1870 705.9L1870.5 697.8L1871 689.4L1871.5 681.3L1872 673.9L1872.5 667.5L1873 662.2L1873.5 657.9L1874 654.6L1874.5 652.1L1875 650.2L1875.5 648.7L1876 647.6L1876.5 646.8L1877 646.1L1877.5 645.6L1878 645.2L1878.5 644.9L1879 644.7L1879.5 644.5L1880 644.3L1880.5 644.1L1881 644L1881.5 643.9L1882 643.8L1882.5 643.8L1883 643.7L1883.5 643.7L1884 643.7L1884.5 643.8L1885 643.9L1885.5 644L1886 644.3L1886.5 644.6L1887 645.1L1887.5 645.8L1888 646.7L1888.5 648L1889 649.7L1889.5 652.1L1890 655.3L1890.5 659.4L1891 664.7L1891.5 671.2L1892 678.8L1892.5 687.3L1893 696.2L1893.5 705.1L1894 713.2L1894.5 720.4L1895 726.5L1895.5 731.3L1896 735.2L1896.5 738.1L1897 740.3L1897.5 742L1898 743.3L1898.5 744.3L1899 745L1899.5 745.6L1900 746L1900.5 746.4L1901 746.7L1901.5 746.9L1902 747.1L1902.5 747.3L1903 747.4L1903.5 747.5L1904 747.6L1904.5 747.6L1905 747.7L1905.5 747.7L1906 747.7L1906.5 747.6L1907 747.6L1907.5 747.4L1908 747.2L1908.5 746.8L1909 746.4L1909.5 745.7L1910 744.8L1910.5 743.6L1911 741.8L1911.5 739.5L1912 736.4L1912.5 732.3L1913 727.1L1913.5 720.5L1914 712.7L1914.5 703.9L1915 694.5L1915.5 685L1916 676L1916.5 668L1917 661.2L1917.5 655.6L1918 651.2L1918.5 647.9L1919 645.3L1919.5 643.3L1920 641.9L1920.5 640.7L1921 639.9L1921.5 639.2L1922 638.7L1922.5 638.3L1923 638L1923.5 637.7L1924 637.5L1924.5 637.4L1925 637.2L1925.5 637.1L1926 637L1926.5 637L1927 637L1927.5 637.1L1928 637.2L1928.5 637.3L1929 637.5L1929.5 637.7L1930 638L1930.5 638.4L1931 638.9L1931.5 639.6L1932 640.5L1932.5 641.8L1933 643.5L1933.5 645.8L1934 648.8L1934.5 652.8L1935 657.9L1935.5 664.4L1936 672.1L1936.5 680.9L1937 690.6L1937.5 700.4L1938 709.8L1938.5 718.4L1939 725.7L1939.5 731.7L1940 736.5L1940.5 740.2L1941 743L1941.5 745.1L1942 746.6L1942.5 747.8L1943 748.6L1943.5 749.3L1944 749.8L1944.5 750.1L1945 750.4L1945.5 750.6L1946 750.7L1946.5 750.9L1947 750.9L1947.5 751L1948 751L1948.5 751L1949 751L1949.5 750.9L1950 750.9L1950.5 750.7L1951 750.6L1951.5 750.4L1952 750.1L1952.5 749.8L1953 749.3L1953.5 748.6L1954 747.8L1954.5 746.6L1955 745.1L1955.5 743L1956 740.2L1956.5 736.5L1957 731.7L1957.5 725.7L1958 718.4L1958.5 709.8L1959 700.4L1959.5 690.6L1960 680.9L1960.5 672.1L1961 664.4L1961.5 657.9L1962 652.8L1962.5 648.8L1963 645.8L1963.5 643.5L1964 641.8L1964.5 640.5L1965 639.6L1965.5 638.9L1966 638.4L1966.5 638L1967 637.7L1967.5 637.5L1968 637.3L1968.5 637.2L1969 637.1L1969.5 637L1970 637L1970.5 637L1971 637L1971.5 637.1L1972 637.1L1972.5 637.2L1973 637.4L1973.5 637.5L1974 637.8L1974.5 638.1L1975 638.6L1975.5 639.1L1976 639.9L1976.5 641L1977 642.4L1977.5 644.3L1978 646.9L1978.5 650.3L1979 654.7L1979.5 660.4L1980 667.3L1980.5 675.5L1981 684.7L1981.5 694.5L1982 704.2L1982.5 713.4L1983 721.5L1983.5 728.3L1984 733.8L1984.5 738.1L1985 741.4L1985.5 743.9L1986 745.7L1986.5 747.1L1987 748.2L1987.5 748.9L1988 749.5L1988.5 749.9L1989 750.2L1989.5 750.5L1990 750.7L1990.5 750.8L1991 750.9L1991.5 750.9L1992 751L1992.5 751L1993 751L1993.5 751L1994 750.9L1994.5 750.8L1995 750.7L1995.5 750.5L1996 750.3L1996.5 750L1997 749.6L1997.5 749.1L1998 748.3L1998.5 747.4L1999 746.1L1999.5 744.3L2000 742L2000.5 738.8L2001 734.7L2001.5 729.5L2002 722.9L2002.5 715.1L2003 706.1" stroke="#ffae33" stroke-width="2" fill="none"/></svg>
<div style="left:12px;top:947px;width:2024px;height:279px;background:#5a5a5a;border-radius:6px;"></div>
<svg style="left:17px;top:1055px" width="10" height="60"><circle cx="5" cy="4.0" r="1.8" fill="#333"/><circle cx="5" cy="8.6" r="1.8" fill="#333"/><circle cx="5" cy="13.2" r="1.8" fill="#333"/><circle cx="5" cy="17.8" r="1.8" fill="#ffae33"/><circle cx="5" cy="22.4" r="1.8" fill="#ffae33"/><circle cx="5" cy="27.0" r="1.8" fill="#ffae33"/><circle cx="5" cy="31.6" r="1.8" fill="#ffae33"/><circle cx="5" cy="36.2" r="1.8" fill="#ffae33"/><circle cx="5" cy="40.8" r="1.8" fill="#ffae33"/><circle cx="5" cy="45.4" r="1.8" fill="#ffae33"/><circle cx="5" cy="50.0" r="1.8" fill="#ffae33"/><circle cx="5" cy="54.6" r="1.8" fill="#ffae33"/></svg>
<div style="left:33px;top:953px;width:1127px;height:266px;background:#a9a9a9;border-radius:5px;"></div>
<svg style="left:36px;top:955px" width="44" height="22"><circle cx="10" cy="10" r="8" fill="#ffae33" stroke="#6a5a30" stroke-width="1"/><circle cx="33" cy="10" r="8" fill="none" stroke="#555" stroke-width="1.3"/><path d="M33 4.5l5.5 9h-11z" fill="#111"/></svg>
<div class="t" style="left:84px;top:956.0px;font-size:14px;line-height:18px;color:#111;font-weight:400;-webkit-text-stroke:0.6px #111;">Wavetable</div>
<svg style="left:1114px;top:955px" width="44" height="22"><circle cx="10" cy="10" r="8.3" fill="none" stroke="#333" stroke-width="1.3"/><path d="M6 9.5a4.3 4.3 0 0 1 7.5-2.5M14 10.5a4.3 4.3 0 0 1-7.5 2.5" stroke="#111" stroke-width="1.6" fill="none"/><path d="M13.5 4.5v3.5h-3.5z M6.5 15.5v-3.5h3.5z" fill="#111"/><circle cx="33" cy="10" r="8.3" fill="none" stroke="#333" stroke-width="1.3"/><path d="M28.5 5.5h7.5l2 2v7.5h-9.5z" fill="#111"/><rect x="30.5" y="6.5" width="4.5" height="3" fill="#ddd"/></svg>
<div style="left:36px;top:977px;width:322px;height:134px;background:#262626;border-radius:4px 4px 0 0;"></div>
<div style="left:36px;top:1090px;width:322px;height:21px;background:#1f1f1f;"></div>
<div style="left:36px;top:1089px;width:322px;height:1px;background:#4a4a4a;"></div>
<div style="left:196px;top:977px;width:1px;height:31px;background:#555;"></div>
<div style="left:43px;top:986px;width:12px;height:12px;background:#ffae33;"></div>
<div style="left:205px;top:986px;width:13px;height:12px;background:#ffae33;"></div>
<svg style="left:60px;top:983px" width="300" height="20"><g fill="none" stroke="#ffae33" stroke-width="1.5"><path d="M6 14V10Q6 5 12 5H27"/><path d="M168 5H183Q189 5 189 10V14"/></g><path d="M29 9h8l-4 4.5z M117 9h8l-4 4.5z M191 9h8l-4 4.5z M279 9h8l-4 4.5z" fill="#ffae33"/></svg>
<div style="left:108px;top:985px;width:20px;height:14px;background:#66d2f6;"></div>
<div class="t" style="left:-182px;width:600px;text-align:center;top:983.0px;font-size:14px;line-height:18px;color:#111;font-weight:400;">12</div>
<div style="left:270px;top:985px;width:20px;height:14px;background:#66d2f6;"></div>
<div class="t" style="left:-20px;width:600px;text-align:center;top:983.0px;font-size:14px;line-height:18px;color:#111;font-weight:400;">12</div>
<div class="t" style="left:138px;top:983.0px;font-size:14px;line-height:18px;color:#ffae33;font-weight:400;-webkit-text-stroke:0.3px #ffae33;">MS2</div>
<div class="t" style="left:300px;top:983.0px;font-size:14px;line-height:18px;color:#ffae33;font-weight:400;-webkit-text-stroke:0.3px #ffae33;">PRD</div>
<svg style="left:36px;top:1030px" width="322" height="62"><path d="M-1.2 53.9C25 36 45 16 58.5 14.7C85 12 112 17.8 139 18.4S205 11 234.3 8.7C250 8 270 28 289 45C296 51 301 55 304.5 58.7" stroke="#66d2f6" stroke-width="2" fill="none"/><circle cx="71.6" cy="38.8" r="9" fill="#ffae33"/><text x="71.6" y="43.5" font-size="12" text-anchor="middle" fill="#222" font-family="Liberation Sans" font-weight="700">1</text><circle cx="250.3" cy="33" r="8.2" fill="none" stroke="#ffae33" stroke-width="1.8"/><text x="250.3" y="37.5" font-size="12" text-anchor="middle" fill="#ffae33" font-family="Liberation Sans" font-weight="700">2</text></svg>
<svg style="left:44px;top:1094px" width="100" height="14"><path d="M1 7h5M12 7h3M21 7h5" stroke="#999" stroke-width="1.3"/><rect x="6" y="3" width="6" height="8" fill="none" stroke="#999" stroke-width="1.3"/><rect x="15" y="3" width="6" height="8" fill="none" stroke="#999" stroke-width="1.3"/><path d="M86 5h8l-4 4.5z" fill="#999"/></svg>
<div class="t" style="left:78px;top:1092.0px;font-size:14px;line-height:18px;color:#9a9a9a;font-weight:400;">Serial</div>
<div style="left:36px;top:1111px;width:322px;height:105px;background:#9c9c9c;border-radius:0 0 4px 4px;"></div>
<div style="left:196px;top:1118px;width:1px;height:93px;background:#7a7a7a;"></div>
<svg style="left:0;top:940px" width="2048" height="300"><path d="M59.77 223.08A12 12 0 0 1 50.88 218.41" stroke="#66d2f6" stroke-width="2.4" fill="none"/><path d="M50.88 218.41A12 12 0 1 1 72.38 210.47" stroke="#222" stroke-width="2.4" fill="none"/><path d="M59.45 211.83L49.93 219.14" stroke="#222" stroke-width="2.8" stroke-linecap="round"/><path d="M133.92 241.18A24.5 24.5 0 0 1 122.41 221.26" stroke="#66d2f6" stroke-width="3.2" fill="none"/><path d="M122.41 221.26A24.5 24.5 0 1 1 160.95 240.47" stroke="#222" stroke-width="3.2" fill="none"/><path d="M144.45 220.49L120.82 221.31" stroke="#222" stroke-width="2.8" stroke-linecap="round"/><path d="M234.82 241.18A24.5 24.5 0 1 1 272.21 218.26" stroke="#66d2f6" stroke-width="3.2" fill="none"/><path d="M272.21 218.26A24.5 24.5 0 0 1 261.85 240.47" stroke="#222" stroke-width="3.2" fill="none"/><path d="M250.24 220.19L273.80 218.13" stroke="#222" stroke-width="2.8" stroke-linecap="round"/><path d="M299.72 222.92A12 12 0 0 1 290.24 214.31" stroke="#66d2f6" stroke-width="2.4" fill="none"/><path d="M290.24 214.31A12 12 0 1 1 313.78 210.47" stroke="#222" stroke-width="2.4" fill="none"/><path d="M300.64 211.42L289.08 214.63" stroke="#222" stroke-width="2.8" stroke-linecap="round"/></svg>
<div class="t" style="left:47px;top:1117.0px;font-size:14px;line-height:18px;color:#111;font-weight:400;">Res</div>
<div class="t" style="left:114px;top:1117.0px;font-size:14px;line-height:18px;color:#111;font-weight:400;">Frequency</div>
<div class="t" style="left:215px;top:1117.0px;font-size:14px;line-height:18px;color:#111;font-weight:400;">Frequency</div>
<div class="t" style="left:289px;top:1117.0px;font-size:14px;line-height:18px;color:#111;font-weight:400;">Res</div>
<div class="t" style="left:66px;top:1154.0px;font-size:14px;line-height:18px;color:#111;font-weight:400;">24 %</div>
<div class="t" style="left:307px;top:1154.0px;font-size:14px;line-height:18px;color:#111;font-weight:400;">34 %</div>
<div class="t" style="left:49px;top:1171.0px;font-size:14px;line-height:18px;color:#111;font-weight:400;">Drive</div>
<div class="t" style="left:290px;top:1171.0px;font-size:14px;line-height:18px;color:#111;font-weight:400;">Drive</div>
<div class="t" style="left:-153px;width:600px;text-align:center;top:1189.0px;font-size:14px;line-height:18px;color:#111;font-weight:400;">83.6 Hz</div>
<div class="t" style="left:-52px;width:600px;text-align:center;top:1189.0px;font-size:14px;line-height:18px;color:#111;font-weight:400;">4.90 kHz</div>
<div style="left:46px;top:1192px;width:60px;height:18px;background:#d0d0d0;box-sizing:border-box;border:1px solid #777;"></div>
<div style="left:47px;top:1193px;width:33px;height:16px;background:#66d2f6;"></div>
<div class="t" style="left:-224px;width:600px;text-align:center;top:1192.0px;font-size:14px;line-height:18px;color:#111;font-weight:400;">13.0 dB</div>
<div style="left:288px;top:1192px;width:60px;height:18px;background:#d0d0d0;box-sizing:border-box;border:1px solid #777;"></div>
<div style="left:289px;top:1193px;width:6px;height:16px;background:#66d2f6;"></div>
<div class="t" style="left:18px;width:600px;text-align:center;top:1192.0px;font-size:14px;line-height:18px;color:#111;font-weight:400;">4.31 dB</div>
<div style="left:362px;top:977px;width:714px;height:240px;background:#262626;border-radius:5px;"></div>
<div class="t" style="left:373px;top:985.5px;font-size:14px;line-height:18px;color:#9a9a9a;font-weight:400;">Target</div>
<div class="t" style="left:477.9px;top:982.8px;font-size:14px;line-height:18px;color:#66d2f6;font-weight:400;">Amp</div>
<div style="left:476.4px;top:1004px;width:55.7px;height:2px;background:#66d2f6;"></div>
<div class="t" style="left:534.8px;top:982.8px;font-size:14px;line-height:18px;color:#66d2f6;font-weight:400;">Env 2</div>
<div style="left:533.3px;top:1004px;width:55.7px;height:2px;background:#66d2f6;"></div>
<div class="t" style="left:591.7px;top:982.8px;font-size:14px;line-height:18px;color:#66d2f6;font-weight:400;">Env 3</div>
<div style="left:590.2px;top:1004px;width:55.7px;height:2px;background:#66d2f6;"></div>
<div class="t" style="left:648.6px;top:982.8px;font-size:14px;line-height:18px;color:#ffae33;font-weight:400;">LFO 1</div>
<div style="left:647.1px;top:1004px;width:55.7px;height:2px;background:#ffae33;"></div>
<div class="t" style="left:705.5px;top:982.8px;font-size:14px;line-height:18px;color:#ffae33;font-weight:400;">LFO 2</div>
<div style="left:704px;top:1004px;width:55.7px;height:2px;background:#ffae33;"></div>
<div class="t" style="left:762.4px;top:982.8px;font-size:14px;line-height:18px;color:#30e03c;font-weight:400;">Vel</div>
<div style="left:760.9px;top:1004px;width:55.7px;height:2px;background:#30e03c;"></div>
<div class="t" style="left:819.3px;top:982.8px;font-size:14px;line-height:18px;color:#30e03c;font-weight:400;">Note</div>
<div style="left:817.8px;top:1004px;width:55.7px;height:2px;background:#30e03c;"></div>
<div class="t" style="left:876.2px;top:982.8px;font-size:14px;line-height:18px;color:#30e03c;font-weight:400;">PB</div>
<div style="left:874.7px;top:1004px;width:55.7px;height:2px;background:#30e03c;"></div>
<div class="t" style="left:933.1px;top:982.8px;font-size:14px;line-height:18px;color:#30e03c;font-weight:400;">AT</div>
<div style="left:931.6px;top:1004px;width:55.7px;height:2px;background:#30e03c;"></div>
<div class="t" style="left:990.0px;top:982.8px;font-size:14px;line-height:18px;color:#30e03c;font-weight:400;">Mod</div>
<div style="left:988.5px;top:1004px;width:55.7px;height:2px;background:#30e03c;"></div>
<div style="left:368px;top:1008.5px;width:106.5px;height:25.9px;background:#4a4a4a;"></div>
<div class="t" style="left:375.5px;top:1011.5px;font-size:14px;line-height:18px;color:#f4f4f4;font-weight:400;-webkit-text-stroke:0.3px #f4f4f4;">Osc 1 Pos</div>
<div class="t" style="left:375.5px;top:1038.6px;font-size:14px;line-height:18px;color:#9a9a9a;font-weight:400;">Osc 2 Pos</div>
<div class="t" style="left:375.5px;top:1065.6px;font-size:14px;line-height:18px;color:#9a9a9a;font-weight:400;">Osc 2 Effect 1</div>
<div class="t" style="left:375.5px;top:1092.7px;font-size:14px;line-height:18px;color:#9a9a9a;font-weight:400;">Filter 1 Freq</div>
<div class="t" style="left:375.5px;top:1119.7px;font-size:14px;line-height:18px;color:#9a9a9a;font-weight:400;">Filter 2 Freq</div>
<div class="t" style="left:375.5px;top:1146.8px;font-size:14px;line-height:18px;color:#9a9a9a;font-weight:400;">LFO 2 Amount</div>
<div style="left:368px;top:1171px;width:106px;height:15px;overflow:hidden"><div class="t" style="left:7.5px;top:4px;font-size:14px;line-height:18px;color:#9a9a9a">Amp</div></div>
<div style="left:476.4px;top:1008.5px;width:55.7px;height:25.9px;background:#474747;"></div>
<div style="left:533.3px;top:1008.5px;width:55.7px;height:25.9px;background:#474747;"></div>
<div style="left:589.7px;top:1008.0px;width:56.7px;height:26.9px;background:#262626;"></div>
<div style="left:590.2px;top:1030.4px;width:55.7px;height:3px;background:#353535;"></div>
<div style="left:618.0500000000001px;top:1029.9px;width:21.4445px;height:3.5px;background:#66d2f6;"></div>
<div class="t" style="left:318.05000000000007px;width:600px;text-align:center;top:1009.5px;font-size:14px;line-height:18px;color:#66d2f6;font-weight:400;">77</div>
<div style="left:647.1px;top:1008.5px;width:55.7px;height:25.9px;background:#474747;"></div>
<div style="left:704px;top:1008.5px;width:55.7px;height:25.9px;background:#474747;"></div>
<div style="left:760.9px;top:1008.5px;width:55.7px;height:25.9px;background:#474747;"></div>
<div style="left:817.8px;top:1008.5px;width:55.7px;height:25.9px;background:#474747;"></div>
<div style="left:874.7px;top:1008.5px;width:55.7px;height:25.9px;background:#474747;"></div>
<div style="left:931.6px;top:1008.5px;width:55.7px;height:25.9px;background:#474747;"></div>
<div style="left:988.5px;top:1008.5px;width:55.7px;height:25.9px;background:#474747;"></div>
<div style="left:476.4px;top:1035.6px;width:55.7px;height:25.9px;background:#474747;"></div>
<div style="left:532.8px;top:1035.1px;width:56.7px;height:26.9px;background:#262626;"></div>
<div style="left:533.3px;top:1057.5px;width:55.7px;height:3px;background:#353535;"></div>
<div style="left:561.15px;top:1057.0px;width:11.4185px;height:3.5px;background:#66d2f6;"></div>
<div class="t" style="left:261.15px;width:600px;text-align:center;top:1036.6px;font-size:14px;line-height:18px;color:#66d2f6;font-weight:400;">41</div>
<div style="left:590.2px;top:1035.6px;width:55.7px;height:25.9px;background:#474747;"></div>
<div style="left:647.1px;top:1035.6px;width:55.7px;height:25.9px;background:#474747;"></div>
<div style="left:704px;top:1035.6px;width:55.7px;height:25.9px;background:#474747;"></div>
<div style="left:760.9px;top:1035.6px;width:55.7px;height:25.9px;background:#474747;"></div>
<div style="left:817.8px;top:1035.6px;width:55.7px;height:25.9px;background:#474747;"></div>
<div style="left:874.7px;top:1035.6px;width:55.7px;height:25.9px;background:#474747;"></div>
<div style="left:931.6px;top:1035.6px;width:55.7px;height:25.9px;background:#474747;"></div>
<div style="left:988.0px;top:1035.1px;width:56.7px;height:26.9px;background:#262626;"></div>
<div style="left:988.5px;top:1057.5px;width:55.7px;height:3px;background:#333a33;"></div>
<div style="left:1016.35px;top:1057.0px;width:9.469000000000001px;height:3.5px;background:#30e03c;"></div>
<div class="t" style="left:716.35px;width:600px;text-align:center;top:1036.6px;font-size:14px;line-height:18px;color:#30e03c;font-weight:400;">34</div>
<div style="left:476.4px;top:1062.6px;width:55.7px;height:25.9px;background:#474747;"></div>
<div style="left:533.3px;top:1062.6px;width:55.7px;height:25.9px;background:#474747;"></div>
<div style="left:590.2px;top:1062.6px;width:55.7px;height:25.9px;background:#474747;"></div>
<div style="left:647.1px;top:1062.6px;width:55.7px;height:25.9px;background:#474747;"></div>
<div style="left:703.5px;top:1062.1px;width:56.7px;height:26.9px;background:#262626;"></div>
<div style="left:704px;top:1084.5px;width:55.7px;height:3px;background:#353535;"></div>
<div style="left:731.85px;top:1084.0px;width:27.85px;height:3.5px;background:#ffae33;"></div>
<div class="t" style="left:431.85px;width:600px;text-align:center;top:1063.6px;font-size:14px;line-height:18px;color:#ffae33;font-weight:400;">100</div>
<div style="left:760.9px;top:1062.6px;width:55.7px;height:25.9px;background:#474747;"></div>
<div style="left:817.8px;top:1062.6px;width:55.7px;height:25.9px;background:#474747;"></div>
<div style="left:874.7px;top:1062.6px;width:55.7px;height:25.9px;background:#474747;"></div>
<div style="left:931.6px;top:1062.6px;width:55.7px;height:25.9px;background:#474747;"></div>
<div style="left:988.5px;top:1062.6px;width:55.7px;height:25.9px;background:#474747;"></div>
<div style="left:476.4px;top:1089.7px;width:55.7px;height:25.9px;background:#474747;"></div>
<div style="left:533.3px;top:1089.7px;width:55.7px;height:25.9px;background:#474747;"></div>
<div style="left:590.2px;top:1089.7px;width:55.7px;height:25.9px;background:#474747;"></div>
<div style="left:646.6px;top:1089.2px;width:56.7px;height:26.9px;background:#262626;"></div>
<div style="left:647.1px;top:1111.6000000000001px;width:55.7px;height:3px;background:#353535;"></div>
<div style="left:674.95px;top:1111.1000000000001px;width:7.798000000000001px;height:3.5px;background:#ffae33;"></div>
<div class="t" style="left:374.95000000000005px;width:600px;text-align:center;top:1090.7px;font-size:14px;line-height:18px;color:#ffae33;font-weight:400;">28</div>
<div style="left:704px;top:1089.7px;width:55.7px;height:25.9px;background:#474747;"></div>
<div style="left:760.9px;top:1089.7px;width:55.7px;height:25.9px;background:#474747;"></div>
<div style="left:817.8px;top:1089.7px;width:55.7px;height:25.9px;background:#474747;"></div>
<div style="left:874.7px;top:1089.7px;width:55.7px;height:25.9px;background:#474747;"></div>
<div style="left:931.6px;top:1089.7px;width:55.7px;height:25.9px;background:#474747;"></div>
<div style="left:988.0px;top:1089.2px;width:56.7px;height:26.9px;background:#262626;"></div>
<div style="left:988.5px;top:1111.6000000000001px;width:55.7px;height:3px;background:#333a33;"></div>
<div style="left:1000.754px;top:1111.1000000000001px;width:15.596000000000002px;height:3.5px;background:#30e03c;"></div>
<div class="t" style="left:716.35px;width:600px;text-align:center;top:1090.7px;font-size:14px;line-height:18px;color:#30e03c;font-weight:400;">-56</div>
<div style="left:476.4px;top:1116.7px;width:55.7px;height:25.9px;background:#474747;"></div>
<div style="left:533.3px;top:1116.7px;width:55.7px;height:25.9px;background:#474747;"></div>
<div style="left:589.7px;top:1116.2px;width:56.7px;height:26.9px;background:#262626;"></div>
<div style="left:590.2px;top:1138.6000000000001px;width:55.7px;height:3px;background:#353535;"></div>
<div style="left:618.0500000000001px;top:1138.1000000000001px;width:18.6595px;height:3.5px;background:#66d2f6;"></div>
<div class="t" style="left:318.05000000000007px;width:600px;text-align:center;top:1117.7px;font-size:14px;line-height:18px;color:#66d2f6;font-weight:400;">67</div>
<div style="left:647.1px;top:1116.7px;width:55.7px;height:25.9px;background:#474747;"></div>
<div style="left:704px;top:1116.7px;width:55.7px;height:25.9px;background:#474747;"></div>
<div style="left:760.9px;top:1116.7px;width:55.7px;height:25.9px;background:#474747;"></div>
<div style="left:817.8px;top:1116.7px;width:55.7px;height:25.9px;background:#474747;"></div>
<div style="left:874.7px;top:1116.7px;width:55.7px;height:25.9px;background:#474747;"></div>
<div style="left:931.6px;top:1116.7px;width:55.7px;height:25.9px;background:#474747;"></div>
<div style="left:988.0px;top:1116.2px;width:56.7px;height:26.9px;background:#262626;"></div>
<div style="left:988.5px;top:1138.6000000000001px;width:55.7px;height:3px;background:#333a33;"></div>
<div style="left:1016.35px;top:1138.1000000000001px;width:16.988500000000002px;height:3.5px;background:#30e03c;"></div>
<div class="t" style="left:716.35px;width:600px;text-align:center;top:1117.7px;font-size:14px;line-height:18px;color:#30e03c;font-weight:400;">61</div>
<div style="left:476.4px;top:1143.8px;width:55.7px;height:25.9px;background:#474747;"></div>
<div style="left:533.3px;top:1143.8px;width:55.7px;height:25.9px;background:#474747;"></div>
<div style="left:590.2px;top:1143.8px;width:55.7px;height:25.9px;background:#474747;"></div>
<div style="left:647.1px;top:1143.8px;width:55.7px;height:25.9px;background:#474747;"></div>
<div style="left:704px;top:1143.8px;width:55.7px;height:25.9px;background:#474747;"></div>
<div style="left:760.9px;top:1143.8px;width:55.7px;height:25.9px;background:#474747;"></div>
<div style="left:817.8px;top:1143.8px;width:55.7px;height:25.9px;background:#474747;"></div>
<div style="left:874.7px;top:1143.8px;width:55.7px;height:25.9px;background:#474747;"></div>
<div style="left:931.1px;top:1143.3px;width:56.7px;height:26.9px;background:#262626;"></div>
<div style="left:931.6px;top:1165.7px;width:55.7px;height:3px;background:#333a33;"></div>
<div style="left:959.45px;top:1165.2px;width:12.5325px;height:3.5px;background:#30e03c;"></div>
<div class="t" style="left:659.45px;width:600px;text-align:center;top:1144.8px;font-size:14px;line-height:18px;color:#30e03c;font-weight:400;">45</div>
<div style="left:988.0px;top:1143.3px;width:56.7px;height:26.9px;background:#262626;"></div>
<div style="left:988.5px;top:1165.7px;width:55.7px;height:3px;background:#333a33;"></div>
<div style="left:1016.35px;top:1165.2px;width:3.342px;height:3.5px;background:#30e03c;"></div>
<div class="t" style="left:716.35px;width:600px;text-align:center;top:1144.8px;font-size:14px;line-height:18px;color:#30e03c;font-weight:400;">12</div>
<div style="left:476.4px;top:1170.9px;width:55.7px;height:15.1px;background:#474747;"></div>
<div style="left:533.3px;top:1170.9px;width:55.7px;height:15.1px;background:#474747;"></div>
<div style="left:590.2px;top:1170.9px;width:55.7px;height:15.1px;background:#474747;"></div>
<div style="left:647.1px;top:1170.9px;width:55.7px;height:15.1px;background:#474747;"></div>
<div style="left:704px;top:1170.9px;width:55.7px;height:15.1px;background:#474747;"></div>
<div style="left:760.9px;top:1170.9px;width:55.7px;height:15.1px;background:#262626;"></div>
<div class="t" style="left:488.75px;width:600px;text-align:center;top:1172.0px;font-size:14px;line-height:18px;color:#30e03c;font-weight:400;">50</div>
<div style="left:817.8px;top:1170.9px;width:55.7px;height:15.1px;background:#474747;"></div>
<div style="left:874.7px;top:1170.9px;width:55.7px;height:15.1px;background:#474747;"></div>
<div style="left:931.6px;top:1170.9px;width:55.7px;height:15.1px;background:#474747;"></div>
<div style="left:988.5px;top:1170.9px;width:55.7px;height:15.1px;background:#474747;"></div>
<div class="t" style="left:374px;top:1191.0px;font-size:14px;line-height:18px;color:#9a9a9a;font-weight:400;">Global</div>
<div class="t" style="left:850px;top:1191.0px;font-size:14px;line-height:18px;color:#9a9a9a;font-weight:400;">Time</div>
<div class="t" style="left:887px;top:1191.0px;font-size:14px;line-height:18px;color:#f0f0f0;font-weight:400;">100 %</div>
<div class="t" style="left:955px;top:1191.0px;font-size:14px;line-height:18px;color:#9a9a9a;font-weight:400;">Amount</div>
<div class="t" style="left:1010px;top:1191.0px;font-size:14px;line-height:18px;color:#f0f0f0;font-weight:400;">100 %</div>
<div style="left:1080px;top:977px;width:79px;height:240px;background:#9b9b9b;border-radius:5px;"></div>
<div class="t" style="left:1084px;top:981.5px;font-size:14px;line-height:18px;color:#111;font-weight:400;">Volume</div>
<div style="left:1084px;top:1000px;width:68px;height:18px;background:#d2d2d2;box-sizing:border-box;border:1px solid #6a6a6a;"></div>
<div style="left:1085px;top:1001px;width:31px;height:16px;background:#66d2f6;"></div>
<div class="t" style="left:818.0px;width:600px;text-align:center;top:1000.5px;font-size:14px;line-height:18px;color:#111;font-weight:400;">-14 dB</div>
<div style="left:1084px;top:1024px;width:68px;height:1px;background:#858585;"></div>
<div style="left:1084px;top:1025px;width:68px;height:1px;background:#aaaaaa;"></div>
<div style="left:1084px;top:1030px;width:68px;height:18px;background:#d2d2d2;box-sizing:border-box;border:1px solid #6a6a6a;"></div>
<div style="left:1085px;top:1031px;width:66px;height:16px;background:#66d2f6;"></div>
<div class="t" style="left:818.0px;width:600px;text-align:center;top:1030.5px;font-size:14px;line-height:18px;color:#111;font-weight:400;">Mono</div>
<div class="t" style="left:1084px;top:1048.5px;font-size:14px;line-height:18px;color:#111;font-weight:400;">Glide</div>
<div style="left:1084px;top:1067px;width:68px;height:18px;background:#d2d2d2;box-sizing:border-box;border:1px solid #6a6a6a;"></div>
<div style="left:1085px;top:1068px;width:4px;height:16px;background:#66d2f6;"></div>
<div class="t" style="left:818.0px;width:600px;text-align:center;top:1067.5px;font-size:14px;line-height:18px;color:#111;font-weight:400;">1.54 ms</div>
<div style="left:1084px;top:1091px;width:68px;height:1px;background:#858585;"></div>
<div style="left:1084px;top:1092px;width:68px;height:1px;background:#aaaaaa;"></div>
<div class="t" style="left:1084px;top:1098.0px;font-size:14px;line-height:18px;color:#111;font-weight:400;">Unison</div>
<div style="left:1084px;top:1117px;width:68px;height:17px;background:#d2d2d2;box-sizing:border-box;border:1px solid #6a6a6a;"></div>
<div class="t" style="left:1087px;top:1117.0px;font-size:14px;line-height:18px;color:#111;font-weight:400;">Classic</div>
<svg style="left:1138px;top:1121.5px" width="12" height="9"><path d="M1 1h9l-4.5 7z" fill="#111"/></svg>
<div class="t" style="left:1084px;top:1135.0px;font-size:14px;line-height:18px;color:#111;font-weight:400;">Voices</div>
<div style="left:1084px;top:1154px;width:68px;height:17px;background:#d2d2d2;box-sizing:border-box;border:1px solid #6a6a6a;"></div>
<div class="t" style="left:818.0px;width:600px;text-align:center;top:1154.0px;font-size:14px;line-height:18px;color:#111;font-weight:400;">2</div>
<div class="t" style="left:1084px;top:1172.5px;font-size:14px;line-height:18px;color:#111;font-weight:400;">Amount</div>
<div style="left:1084px;top:1191px;width:68px;height:17px;background:#d2d2d2;box-sizing:border-box;border:1px solid #6a6a6a;"></div>
<div style="left:1085px;top:1192px;width:3px;height:15px;background:#66d2f6;"></div>
<div class="t" style="left:818.0px;width:600px;text-align:center;top:1191.0px;font-size:14px;line-height:18px;color:#111;font-weight:400;">4.7 %</div>
<div style="left:1165px;top:1057px;width:4px;height:58px;background:#3a3a3a;"></div>
<div style="left:1165px;top:1070px;width:4px;height:45px;background:#5fe06a;"></div>
<div style="left:1177px;top:953px;width:715px;height:266px;background:#a9a9a9;border-radius:5px;"></div>
<svg style="left:1180px;top:955px" width="22" height="22"><circle cx="10" cy="10" r="8" fill="#ffae33" stroke="#6a5a30" stroke-width="1"/></svg>
<div class="t" style="left:1205px;top:956.0px;font-size:14px;line-height:18px;color:#111;font-weight:400;-webkit-text-stroke:0.6px #111;">Echo</div>
<svg style="left:1845px;top:955px" width="44" height="22"><circle cx="10" cy="10" r="8.3" fill="none" stroke="#333" stroke-width="1.3"/><path d="M6 9.5a4.3 4.3 0 0 1 7.5-2.5M14 10.5a4.3 4.3 0 0 1-7.5 2.5" stroke="#111" stroke-width="1.6" fill="none"/><path d="M13.5 4.5v3.5h-3.5z M6.5 15.5v-3.5h3.5z" fill="#111"/><circle cx="33" cy="10" r="8.3" fill="none" stroke="#333" stroke-width="1.3"/><path d="M28.5 5.5h7.5l2 2v7.5h-9.5z" fill="#111"/><rect x="30.5" y="6.5" width="4.5" height="3" fill="#ddd"/></svg>
<div style="left:1428px;top:956px;width:49px;height:22px;background:#262626;border-radius:4px 4px 0 0;"></div>
<div class="t" style="left:1152.5px;width:600px;text-align:center;top:956.0px;font-size:14px;line-height:18px;color:#8a8a8a;font-weight:400;">Echo</div>
<div style="left:1481px;top:956px;width:89px;height:17px;background:#8e8e8e;border-radius:3px;"></div>
<div class="t" style="left:1225.5px;width:600px;text-align:center;top:956.0px;font-size:14px;line-height:18px;color:#111;font-weight:400;">Modulation</div>
<div style="left:1575px;top:956px;width:81px;height:17px;background:#8e8e8e;border-radius:3px;"></div>
<div class="t" style="left:1315.5px;width:600px;text-align:center;top:956.0px;font-size:14px;line-height:18px;color:#111;font-weight:400;">Character</div>
<div style="left:1179px;top:977px;width:166px;height:240px;background:#9c9c9c;border-radius:5px;"></div>
<div class="t" style="left:916px;width:600px;text-align:center;top:979.0px;font-size:14px;line-height:18px;color:#111;font-weight:400;">Left</div>
<div class="t" style="left:1007px;width:600px;text-align:center;top:979.0px;font-size:14px;line-height:18px;color:#111;font-weight:400;">Right</div>
<div style="left:1262px;top:980px;width:1px;height:156px;background:#777;"></div>
<svg style="left:0;top:940px" width="2048" height="300"><path d="M1207.90 89.62A17 17 0 1 1 1229.80 64.43" stroke="#66d2f6" stroke-width="3.2" fill="none"/><path d="M1229.80 64.43A17 17 0 0 1 1224.90 89.62" stroke="#222" stroke-width="3.2" fill="none"/><path d="M1216.40 74.90L1231.06 63.45" stroke="#222" stroke-width="3" stroke-linecap="round"/><path d="M1298.80 89.62A17 17 0 1 1 1320.70 64.43" stroke="#66d2f6" stroke-width="3.2" fill="none"/><path d="M1320.70 64.43A17 17 0 0 1 1315.80 89.62" stroke="#222" stroke-width="3.2" fill="none"/><path d="M1307.30 74.90L1321.96 63.45" stroke="#222" stroke-width="3" stroke-linecap="round"/><path d="M1208.10 254.72A17 17 0 1 1 1227.98 227.37" stroke="#66d2f6" stroke-width="3.2" fill="none"/><path d="M1227.98 227.37A17 17 0 0 1 1225.10 254.72" stroke="#222" stroke-width="3.2" fill="none"/><path d="M1216.60 240.00L1229.05 226.18" stroke="#222" stroke-width="3" stroke-linecap="round"/><path d="M1298.80 254.72A17 17 0 0 1 1305.82 223.06" stroke="#66d2f6" stroke-width="3.2" fill="none"/><path d="M1305.82 223.06A17 17 0 0 1 1315.80 254.72" stroke="#222" stroke-width="3.2" fill="none"/><path d="M1307.30 240.00L1305.68 221.47" stroke="#222" stroke-width="3" stroke-linecap="round"/></svg>
<div style="left:1250px;top:1009px;width:26px;height:18px;background:#ffae33;box-sizing:border-box;border:1px solid #8a6a2a;"></div>
<svg style="left:1250px;top:1009px" width="26" height="18"><path d="M6 9h14" stroke="#111" stroke-width="1.6"/><rect x="9" y="5.5" width="8" height="7" rx="1.5" fill="none" stroke="#111" stroke-width="1.6"/></svg>
<div class="t" style="left:916px;width:600px;text-align:center;top:1032.0px;font-size:14px;line-height:18px;color:#111;font-weight:400;">1/4</div>
<div class="t" style="left:1007px;width:600px;text-align:center;top:1032.0px;font-size:14px;line-height:18px;color:#111;font-weight:400;">1/4</div>
<div style="left:1184px;top:1066px;width:66px;height:17px;background:#ffae33;box-sizing:border-box;border:1px solid #8a6a2a;"></div>
<div class="t" style="left:917px;width:600px;text-align:center;top:1066.0px;font-size:14px;line-height:18px;color:#111;font-weight:400;">Sync</div>
<div style="left:1184px;top:1089px;width:66px;height:17px;background:#d2d2d2;box-sizing:border-box;border:1px solid #6a6a6a;"></div>
<div class="t" style="left:1187px;top:1089.0px;font-size:14px;line-height:18px;color:#111;font-weight:400;">Triplet</div>
<svg style="left:1236px;top:1093.5px" width="12" height="9"><path d="M1 1h9l-4.5 7z" fill="#111"/></svg>
<div style="left:1184px;top:1111px;width:66px;height:18px;background:#d2d2d2;box-sizing:border-box;border:1px solid #6a6a6a;"></div>
<div class="t" style="left:1188px;top:1111.5px;font-size:14px;line-height:18px;color:#111;font-weight:400;">0.0 %</div>
<svg style="left:1234px;top:1112px" width="14" height="16"><path d="M13 1v14L2 8z" fill="#bdbdbd"/></svg>
<div style="left:1275px;top:1066px;width:66px;height:17px;background:#ffae33;box-sizing:border-box;border:1px solid #8a6a2a;"></div>
<div class="t" style="left:1008px;width:600px;text-align:center;top:1066.0px;font-size:14px;line-height:18px;color:#111;font-weight:400;">Sync</div>
<div style="left:1275px;top:1089px;width:66px;height:17px;background:#d2d2d2;box-sizing:border-box;border:1px solid #6a6a6a;"></div>
<div class="t" style="left:1278px;top:1089.0px;font-size:14px;line-height:18px;color:#111;font-weight:400;">Triplet</div>
<svg style="left:1327px;top:1093.5px" width="12" height="9"><path d="M1 1h9l-4.5 7z" fill="#111"/></svg>
<div style="left:1275px;top:1111px;width:66px;height:18px;background:#d2d2d2;box-sizing:border-box;border:1px solid #6a6a6a;"></div>
<div class="t" style="left:1279px;top:1111.5px;font-size:14px;line-height:18px;color:#111;font-weight:400;">0.0 %</div>
<svg style="left:1325px;top:1112px" width="14" height="16"><path d="M13 1v14L2 8z" fill="#bdbdbd"/></svg>
<div class="t" style="left:916.5px;width:600px;text-align:center;top:1146.0px;font-size:14px;line-height:18px;color:#111;font-weight:400;">Input</div>
<div class="t" style="left:1008.5px;width:600px;text-align:center;top:1146.0px;font-size:14px;line-height:18px;color:#111;font-weight:400;">Feedback</div>
<div style="left:1252px;top:1160px;width:20px;height:16px;background:#ffae33;box-sizing:border-box;border:1px solid #8a6a2a;"></div>
<div class="t" style="left:962px;width:600px;text-align:center;top:1159.0px;font-size:14px;line-height:18px;color:#111;font-weight:400;">D</div>
<div style="left:1252px;top:1183px;width:20px;height:17px;background:#ffae33;box-sizing:border-box;border:1px solid #8a6a2a;"></div>
<div class="t" style="left:962px;width:600px;text-align:center;top:1182.5px;font-size:14px;line-height:18px;color:#111;font-weight:400;">Ø</div>
<div style="left:1242px;top:1168px;width:10px;height:1px;background:#777;"></div>
<div style="left:1272px;top:1191px;width:10px;height:1px;background:#777;"></div>
<div class="t" style="left:916.5px;width:600px;text-align:center;top:1196.0px;font-size:14px;line-height:18px;color:#111;font-weight:400;">10 dB</div>
<div class="t" style="left:1007px;width:600px;text-align:center;top:1196.0px;font-size:14px;line-height:18px;color:#111;font-weight:400;">71 %</div>
<div style="left:1348px;top:977px;width:381px;height:240px;background:#262626;border-radius:5px;"></div>
<svg style="left:1348px;top:977px" width="381" height="240"><defs><radialGradient id="gl" cx="190.6" cy="125" r="48" gradientUnits="userSpaceOnUse"><stop offset="0" stop-color="#5a4a30" stop-opacity="0.9"/><stop offset="1" stop-color="#262626" stop-opacity="0"/></radialGradient></defs><rect x="110" y="60" width="160" height="65" fill="url(#gl)"/><path d="M11.2 125A198.6 198.6 0 0 1 370.0 125" stroke="#ffae33" stroke-opacity="1.00" stroke-width="2.2" fill="none"/><path d="M55.7 125A149.4 149.4 0 0 1 325.5 125" stroke="#ffae33" stroke-opacity="1.00" stroke-width="2.2" fill="none"/><path d="M81.7 125A120.6 120.6 0 0 1 299.5 125" stroke="#ffae33" stroke-opacity="1.00" stroke-width="2.2" fill="none"/><path d="M100.2 125A100.1 100.1 0 0 1 281.0 125" stroke="#ffae33" stroke-opacity="1.00" stroke-width="1.9" fill="none"/><path d="M112.9 125A86.0 86.0 0 0 1 268.3 125" stroke="#c99038" stroke-opacity="1.00" stroke-width="1.9" fill="none"/><path d="M122.5 125A75.4 75.4 0 0 1 258.7 125" stroke="#c99038" stroke-opacity="1.00" stroke-width="1.9" fill="none"/><path d="M130.9 125A66.1 66.1 0 0 1 250.3 125" stroke="#c99038" stroke-opacity="0.91" stroke-width="1.5" fill="none"/><path d="M137.4 125A58.9 58.9 0 0 1 243.8 125" stroke="#c99038" stroke-opacity="0.82" stroke-width="1.5" fill="none"/><path d="M142.9 125A52.8 52.8 0 0 1 238.3 125" stroke="#c99038" stroke-opacity="0.73" stroke-width="1.5" fill="none"/><path d="M148.5 125A46.6 46.6 0 0 1 232.7 125" stroke="#c99038" stroke-opacity="0.64" stroke-width="1.5" fill="none"/><path d="M153.0 125A41.6 41.6 0 0 1 228.2 125" stroke="#c99038" stroke-opacity="0.55" stroke-width="1.5" fill="none"/><path d="M157.0 125A37.2 37.2 0 0 1 224.2 125" stroke="#c99038" stroke-opacity="0.46" stroke-width="1.5" fill="none"/><path d="M160.4 125A33.4 33.4 0 0 1 220.8 125" stroke="#c99038" stroke-opacity="0.40" stroke-width="1.5" fill="none"/><path d="M163.4 125A30.1 30.1 0 0 1 217.8 125" stroke="#c99038" stroke-opacity="0.40" stroke-width="1.5" fill="none"/><path d="M166.1 125A27.1 27.1 0 0 1 215.1 125" stroke="#c99038" stroke-opacity="0.40" stroke-width="1.5" fill="none"/><path d="M168.6 125A24.4 24.4 0 0 1 212.6 125" stroke="#c99038" stroke-opacity="0.40" stroke-width="1.5" fill="none"/><circle cx="190.6" cy="11.4" r="2.6" fill="#fff"/><circle cx="190.6" cy="34.2" r="2.4" fill="#fff"/><circle cx="190.6" cy="49.4" r="2.1" fill="#fff"/><circle cx="190.6" cy="60.5" r="1.9" fill="#fff"/><circle cx="190.6" cy="68.5" r="1.7" fill="#fff"/><circle cx="190.6" cy="74.5" r="1.5" fill="#fff"/><circle cx="190.6" cy="79.6" r="1.4" fill="#fff"/><circle cx="190.6" cy="83.7" r="1.3" fill="#fff"/><circle cx="190.6" cy="87.4" r="1.2" fill="#fff"/><rect x="0" y="125" width="381" height="115" fill="#262626"/><path d="M0 125.5H381" stroke="#444" stroke-width="1"/><path d="M0 155H381" stroke="#3e3e3e" stroke-width="1"/><path d="M0 182H381" stroke="#3e3e3e" stroke-width="1"/><path d="M0 212H381" stroke="#3e3e3e" stroke-width="1"/><path d="M21.9 125V212" stroke="#3a3a3a" stroke-width="1"/><path d="M37.7 125V212" stroke="#3a3a3a" stroke-width="1"/><path d="M49.9 125V212" stroke="#3a3a3a" stroke-width="1"/><path d="M59.9 125V212" stroke="#3a3a3a" stroke-width="1"/><path d="M68.4 125V212" stroke="#3a3a3a" stroke-width="1"/><path d="M75.7 125V212" stroke="#3a3a3a" stroke-width="1"/><path d="M82.2 125V212" stroke="#3a3a3a" stroke-width="1"/><path d="M88.0 125V212" stroke="#555" stroke-width="1"/><path d="M126.1 125V212" stroke="#3a3a3a" stroke-width="1"/><path d="M148.4 125V212" stroke="#3a3a3a" stroke-width="1"/><path d="M164.2 125V212" stroke="#3a3a3a" stroke-width="1"/><path d="M176.4 125V212" stroke="#3a3a3a" stroke-width="1"/><path d="M186.4 125V212" stroke="#3a3a3a" stroke-width="1"/><path d="M194.9 125V212" stroke="#3a3a3a" stroke-width="1"/><path d="M202.2 125V212" stroke="#3a3a3a" stroke-width="1"/><path d="M208.7 125V212" stroke="#3a3a3a" stroke-width="1"/><path d="M214.5 125V212" stroke="#555" stroke-width="1"/><path d="M252.6 125V212" stroke="#3a3a3a" stroke-width="1"/><path d="M274.9 125V212" stroke="#3a3a3a" stroke-width="1"/><path d="M290.7 125V212" stroke="#3a3a3a" stroke-width="1"/><path d="M302.9 125V212" stroke="#3a3a3a" stroke-width="1"/><path d="M312.9 125V212" stroke="#3a3a3a" stroke-width="1"/><path d="M321.4 125V212" stroke="#3a3a3a" stroke-width="1"/><path d="M328.7 125V212" stroke="#3a3a3a" stroke-width="1"/><path d="M335.2 125V212" stroke="#3a3a3a" stroke-width="1"/><path d="M341.0 125V212" stroke="#555" stroke-width="1"/><path d="M379.1 125V212" stroke="#3a3a3a" stroke-width="1"/><text x="88" y="209" font-size="14" fill="#8a8a8a" text-anchor="middle" font-family="Liberation Sans">100</text><text x="215.6" y="209" font-size="14" fill="#8a8a8a" text-anchor="middle" font-family="Liberation Sans">1k</text><text x="341.6" y="209" font-size="14" fill="#8a8a8a" text-anchor="middle" font-family="Liberation Sans">10k</text><path d="M0 212L53 151.5C62 143 70 143.6 75.4 143.6C110 147 150 152.6 202.8 152.6C215 153 225 165 233.4 175.6L275 211.6" stroke="#66d2f6" stroke-width="2" fill="none"/><circle cx="53" cy="151.5" r="9" fill="#ffae33"/><text x="53" y="156" font-size="12" text-anchor="middle" fill="#222" font-family="Liberation Sans" font-weight="700">1</text><circle cx="233.4" cy="175.6" r="8.3" fill="none" stroke="#ffae33" stroke-width="1.8"/><text x="233.4" y="180" font-size="12" text-anchor="middle" fill="#ffae33" font-family="Liberation Sans" font-weight="700">2</text><path d="M8 233l6.5-10 6.5 10z" fill="#8a8a8a"/><rect x="29" y="221" width="12" height="12" fill="#66d2f6"/></svg>
<div class="t" style="left:1395px;top:1195.0px;font-size:14px;line-height:18px;color:#8a8a8a;font-weight:400;">Filter HP</div>
<div class="t" style="left:1454px;top:1195.0px;font-size:14px;line-height:18px;color:#66d2f6;font-weight:400;">46.3 Hz</div>
<div class="t" style="left:1517px;top:1195.0px;font-size:14px;line-height:18px;color:#8a8a8a;font-weight:400;">Res</div>
<div class="t" style="left:1545px;top:1195.0px;font-size:14px;line-height:18px;color:#66d2f6;font-weight:400;">0.23</div>
<div class="t" style="left:1582px;top:1195.0px;font-size:14px;line-height:18px;color:#8a8a8a;font-weight:400;">LP</div>
<div class="t" style="left:1603px;top:1195.0px;font-size:14px;line-height:18px;color:#66d2f6;font-weight:400;">1.44 kHz</div>
<div class="t" style="left:1665px;top:1195.0px;font-size:14px;line-height:18px;color:#8a8a8a;font-weight:400;">Res</div>
<div class="t" style="left:1692px;top:1195.0px;font-size:14px;line-height:18px;color:#66d2f6;font-weight:400;">0.12</div>
<div style="left:1733px;top:977px;width:155px;height:240px;background:#9c9c9c;border-radius:5px;"></div>
<svg style="left:0;top:940px" width="2048" height="300"><path d="M1767.30 88.32A17 17 0 1 1 1784.30 88.32" stroke="#222" stroke-width="3.2" fill="none"/><path d="M1775.80 73.60L1766.50 89.71" stroke="#222" stroke-width="3" stroke-linecap="round"/><path d="M1843.70 88.32A17 17 0 0 1 1848.38 57.04" stroke="#66d2f6" stroke-width="3.2" fill="none"/><path d="M1848.38 57.04A17 17 0 0 1 1860.70 88.32" stroke="#222" stroke-width="3.2" fill="none"/><path d="M1852.20 73.60L1848.02 55.48" stroke="#222" stroke-width="3" stroke-linecap="round"/><path d="M1843.70 172.22A17 17 0 0 1 1852.20 140.50" stroke="#66d2f6" stroke-width="3.2" fill="none"/><path d="M1852.20 140.50A17 17 0 0 1 1860.70 172.22" stroke="#222" stroke-width="3.2" fill="none"/><path d="M1852.20 157.50L1852.20 138.90" stroke="#222" stroke-width="3" stroke-linecap="round"/><path d="M1843.70 256.72A17 17 0 0 1 1852.20 225.00" stroke="#66d2f6" stroke-width="3.2" fill="none"/><path d="M1852.20 225.00A17 17 0 0 1 1860.70 256.72" stroke="#222" stroke-width="3.2" fill="none"/><path d="M1852.20 242.00L1852.20 223.40" stroke="#222" stroke-width="3" stroke-linecap="round"/></svg>
<div class="t" style="left:1476px;width:600px;text-align:center;top:979.0px;font-size:14px;line-height:18px;color:#111;font-weight:400;">Reverb</div>
<div class="t" style="left:1552.5px;width:600px;text-align:center;top:979.0px;font-size:14px;line-height:18px;color:#111;font-weight:400;">Stereo</div>
<div class="t" style="left:1476px;width:600px;text-align:center;top:1030.0px;font-size:14px;line-height:18px;color:#111;font-weight:400;">0.0 %</div>
<div class="t" style="left:1552px;width:600px;text-align:center;top:1030.0px;font-size:14px;line-height:18px;color:#111;font-weight:400;">91 %</div>
<div style="left:1737px;top:1067px;width:75px;height:17px;background:#d2d2d2;box-sizing:border-box;border:1px solid #6a6a6a;"></div>
<div class="t" style="left:1740px;top:1067.0px;font-size:14px;line-height:18px;color:#111;font-weight:400;">Post</div>
<svg style="left:1798px;top:1071.5px" width="12" height="9"><path d="M1 1h9l-4.5 7z" fill="#111"/></svg>
<div class="t" style="left:1552.5px;width:600px;text-align:center;top:1062.0px;font-size:14px;line-height:18px;color:#111;font-weight:400;">Output</div>
<div class="t" style="left:1737px;top:1088.5px;font-size:14px;line-height:18px;color:#111;font-weight:400;">Decay</div>
<div style="left:1737px;top:1107px;width:75px;height:17px;background:#d2d2d2;box-sizing:border-box;border:1px solid #6a6a6a;"></div>
<div style="left:1738px;top:1108px;width:38px;height:15px;background:#66d2f6;"></div>
<div class="t" style="left:1474.5px;width:600px;text-align:center;top:1107.0px;font-size:14px;line-height:18px;color:#111;font-weight:400;">50 %</div>
<div class="t" style="left:1552px;width:600px;text-align:center;top:1113.0px;font-size:14px;line-height:18px;color:#111;font-weight:400;">0.0 dB</div>
<div style="left:1737px;top:1148px;width:75px;height:18px;background:#ffae33;box-sizing:border-box;border:1px solid #8a6a2a;"></div>
<div class="t" style="left:1474.5px;width:600px;text-align:center;top:1148.0px;font-size:14px;line-height:18px;color:#111;font-weight:400;">Stereo</div>
<div style="left:1737px;top:1171px;width:75px;height:18px;background:#b9b9b9;box-sizing:border-box;border:1px solid #6a6a6a;"></div>
<div class="t" style="left:1474.5px;width:600px;text-align:center;top:1171.5px;font-size:14px;line-height:18px;color:#111;font-weight:400;">Ping Pong</div>
<div style="left:1737px;top:1194px;width:75px;height:17px;background:#b9b9b9;box-sizing:border-box;border:1px solid #6a6a6a;"></div>
<div class="t" style="left:1474.5px;width:600px;text-align:center;top:1194.0px;font-size:14px;line-height:18px;color:#111;font-weight:400;">Mid/Side</div>
<div class="t" style="left:1552px;width:600px;text-align:center;top:1145.5px;font-size:14px;line-height:18px;color:#111;font-weight:400;">Dry/Wet</div>
<div class="t" style="left:1552px;width:600px;text-align:center;top:1196.5px;font-size:14px;line-height:18px;color:#111;font-weight:400;">50 %</div>
<div style="left:1896px;top:1058px;width:3px;height:57px;background:#4fd65c;"></div>
<div style="left:1900px;top:1058px;width:3px;height:57px;background:#4fd65c;"></div>
<div style="left:1896px;top:1058px;width:3px;height:7px;background:#333;"></div>
<div style="left:1900px;top:1058px;width:3px;height:7px;background:#333;"></div>
<div style="left:1907px;top:953px;width:126px;height:267px;background:#888888;border-top:1.5px solid #959595;box-sizing:border-box;"></div>
<div class="t" style="left:1676.5px;width:600px;text-align:center;top:1067.0px;font-size:14px;line-height:18px;color:#111;font-weight:400;">Drop Audio</div>
<div class="t" style="left:1676.5px;width:600px;text-align:center;top:1088.5px;font-size:14px;line-height:18px;color:#111;font-weight:400;">Effects Here</div>
<svg style="left:11px;top:1238px" width="30" height="30"><circle cx="14" cy="14" r="13" fill="#646464"/><path d="M9.5 7.5v13l11-6.5z" fill="#7c7c7c"/></svg>
<div style="left:50px;top:1238px;width:1372px;height:29px;background:#5f5f5f;border-radius:5px;"></div>
<div style="left:53px;top:1241px;width:1366px;height:23px;background:#8e8e8e;border-radius:3px;"></div>
<div style="left:1436px;top:1238px;width:291px;height:29px;background:#5f5f5f;border-radius:5px;"></div>
<div style="left:1439px;top:1241px;width:285px;height:23px;background:#8e8e8e;border-radius:3px;"></div>
<div style="left:1740px;top:1226px;width:258px;height:42px;background:#5f5f5f;border-radius:5px;"></div>
<div class="t" style="left:1745px;top:1245.0px;font-size:14px;line-height:18px;color:#111;font-weight:400;-webkit-text-stroke:0.6px #111;">1-Wavetable</div>
<div style="left:1832px;top:1239px;width:160px;height:28px;background:#111;"></div>
<svg style="left:1834px;top:1241px" width="156" height="24"><rect width="156" height="24" fill="#3a3a3a"/><rect x="2" y="2" width="26" height="20" fill="#a8a8a8"/><rect x="4" y="4" width="22" height="8" fill="#333"/><rect x="30" y="2" width="70" height="20" fill="#555"/><rect x="102" y="2" width="12" height="20" fill="#9dc6dd"/><rect x="116" y="2" width="20" height="20" fill="#222"/><path d="M118 20a10 8 0 0 1 16 0" stroke="#c90" fill="none"/><rect x="138" y="2" width="16" height="20" fill="#aaa"/></svg>
<svg style="left:2009px;top:1238px" width="30" height="30"><circle cx="14" cy="14" r="13" fill="#646464"/><path d="M14 7l7 12H7z" fill="#7c7c7c"/></svg>
</body></html>
